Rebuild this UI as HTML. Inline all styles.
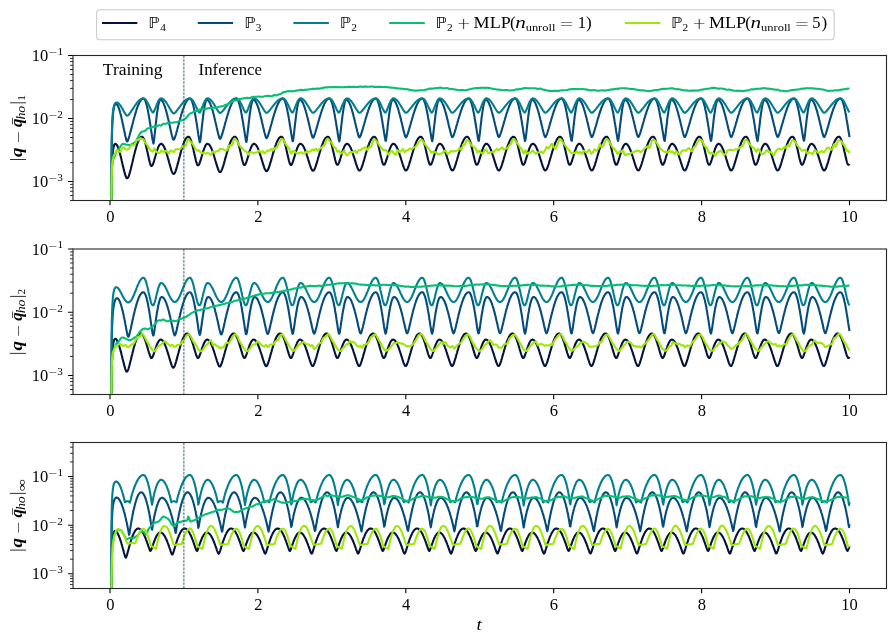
<!DOCTYPE html>
<html lang="en">
<head>
<meta charset="utf-8">
<title>Error norms over time</title>
<style>
html,body{margin:0;padding:0;background:#fff;}
body{width:896px;height:643px;overflow:hidden;}
svg{display:block;}
</style>
</head>
<body>
<svg width="896" height="643" viewBox="0 0 896 643" role="img" aria-label="Error norms over time for five models">
<defs>
<clipPath id="c0"><rect x="73.0" y="55.5" width="813.5" height="145.0"/></clipPath>
<clipPath id="c1"><rect x="73.0" y="249.0" width="813.5" height="145.5"/></clipPath>
<clipPath id="c2"><rect x="73.0" y="442.5" width="813.5" height="146.0"/></clipPath>
</defs>
<rect width="896" height="643" fill="#fff"/>
<g clip-path="url(#c0)" fill="none" stroke-width="2.1" stroke-linejoin="round" stroke-linecap="butt">
<path d="M111.3 240.5L111.5 217.3L111.5 198.6L111.6 188.2L111.7 181.1L111.8 175.8L111.9 171.6L111.9 171.6L112.0 168.2L112.1 165.4L112.2 162.9L112.3 160.8L112.4 159.0L112.4 159.0L112.5 157.4L112.6 156.0L112.7 154.7L112.8 153.6L112.8 152.6L112.8 152.6L112.9 151.7L113.0 150.9L113.1 150.1L113.2 149.4L113.3 148.8L113.3 148.8L113.4 148.2L113.5 147.7L113.6 147.3L113.7 146.8L113.8 146.5L113.8 146.5L113.9 146.1L114.0 145.8L114.0 145.5L114.1 145.3L114.2 145.0L114.2 145.0L114.3 144.8L114.4 144.6L114.7 144.2L115.2 143.8L115.6 143.8L116.1 144.1L116.5 144.6L117.0 145.3L117.5 146.1L117.9 147.2L118.4 148.4L118.9 149.8L119.3 151.3L119.8 152.9L120.2 154.6L120.7 156.4L121.2 158.3L121.6 160.2L122.1 162.2L122.5 164.2L123.0 166.2L123.5 168.1L123.9 170.1L124.4 171.9L124.9 173.6L125.3 175.2L125.8 176.5L126.2 177.5L126.7 178.1L127.2 178.2L127.6 178.0L128.1 177.5L128.6 176.6L129.0 175.3L129.5 173.9L129.9 172.3L130.4 170.5L130.9 168.7L131.3 166.8L131.8 164.9L132.3 162.9L132.7 160.9L133.2 158.9L133.6 157.0L134.1 155.1L134.6 153.2L135.0 151.4L135.5 149.7L136.0 148.0L136.4 146.4L136.9 144.9L137.3 143.6L137.8 142.3L138.3 141.1L138.7 140.1L139.2 139.2L139.6 138.4L140.1 137.8L140.6 137.3L141.0 137.0L141.5 136.8L142.0 136.7L142.4 136.8L142.9 137.2L143.3 137.9L143.8 138.8L144.3 139.9L144.7 141.2L145.2 142.7L145.7 144.4L146.1 146.2L146.6 148.2L147.0 150.2L147.5 152.3L148.0 154.5L148.4 156.6L148.9 158.7L149.4 160.7L149.8 162.5L150.3 164.1L150.7 165.3L151.2 165.9L151.7 166.0L152.1 165.7L152.6 165.0L153.1 163.9L153.5 162.6L154.0 161.1L154.4 159.6L154.9 157.9L155.4 156.3L155.8 154.7L156.3 153.1L156.7 151.5L157.2 150.1L157.7 148.8L158.1 147.6L158.6 146.5L159.1 145.6L159.5 144.9L160.0 144.3L160.4 144.0L160.9 143.8L161.4 143.8L161.8 144.0L162.3 144.3L162.8 144.8L163.2 145.4L163.7 146.1L164.1 147.0L164.6 148.0L165.1 149.1L165.5 150.3L166.0 151.6L166.5 153.0L166.9 154.5L167.4 156.1L167.8 157.7L168.3 159.4L168.8 161.0L169.2 162.7L169.7 164.4L170.2 166.1L170.6 167.7L171.1 169.2L171.5 170.6L172.0 171.9L172.5 172.9L172.9 173.6L173.4 173.9L173.8 173.9L174.3 173.6L174.8 172.9L175.2 172.0L175.7 170.8L176.2 169.4L176.6 167.9L177.1 166.3L177.5 164.6L178.0 162.9L178.5 161.1L178.9 159.4L179.4 157.6L179.9 155.8L180.3 154.1L180.8 152.4L181.2 150.8L181.7 149.2L182.2 147.6L182.6 146.2L183.1 144.8L183.6 143.5L184.0 142.3L184.5 141.2L184.9 140.2L185.4 139.4L185.9 138.6L186.3 138.0L186.8 137.5L187.3 137.1L187.7 136.8L188.2 136.7L188.6 136.7L189.1 137.0L189.6 137.5L190.0 138.2L190.5 139.2L190.9 140.4L191.4 141.7L191.9 143.3L192.3 145.0L192.8 146.9L193.3 148.8L193.7 150.9L194.2 153.0L194.6 155.1L195.1 157.1L195.6 159.1L196.0 161.0L196.5 162.7L197.0 164.1L197.4 165.0L197.9 165.3L198.3 165.3L198.8 164.8L199.3 163.9L199.7 162.8L200.2 161.4L200.7 159.9L201.1 158.4L201.6 156.8L202.0 155.2L202.5 153.6L203.0 152.1L203.4 150.7L203.9 149.3L204.4 148.1L204.8 147.0L205.3 146.0L205.7 145.2L206.2 144.6L206.7 144.1L207.1 143.9L207.6 143.8L208.0 143.9L208.5 144.1L209.0 144.5L209.4 144.9L209.9 145.6L210.4 146.3L210.8 147.2L211.3 148.2L211.7 149.2L212.2 150.4L212.7 151.7L213.1 153.1L213.6 154.5L214.1 156.0L214.5 157.5L215.0 159.1L215.4 160.7L215.9 162.3L216.4 163.8L216.8 165.4L217.3 166.8L217.8 168.2L218.2 169.5L218.7 170.6L219.1 171.4L219.6 171.9L220.1 172.0L220.5 171.9L221.0 171.4L221.4 170.7L221.9 169.6L222.4 168.4L222.8 167.0L223.3 165.6L223.8 164.0L224.2 162.4L224.7 160.8L225.1 159.1L225.6 157.4L226.1 155.7L226.5 154.1L227.0 152.5L227.5 150.9L227.9 149.3L228.4 147.8L228.8 146.4L229.3 145.1L229.8 143.8L230.2 142.6L230.7 141.5L231.2 140.6L231.6 139.7L232.1 138.9L232.5 138.2L233.0 137.7L233.5 137.3L233.9 136.9L234.4 136.8L234.9 136.7L235.3 136.8L235.8 137.2L236.2 137.8L236.7 138.6L237.2 139.7L237.6 140.9L238.1 142.4L238.5 144.0L239.0 145.7L239.5 147.6L239.9 149.6L240.4 151.7L240.9 153.7L241.3 155.8L241.8 157.9L242.2 159.8L242.7 161.6L243.2 163.1L243.6 164.3L244.1 164.9L244.6 165.0L245.0 164.8L245.5 164.2L245.9 163.1L246.4 161.9L246.9 160.5L247.3 159.0L247.8 157.5L248.3 155.9L248.7 154.3L249.2 152.8L249.6 151.3L250.1 149.9L250.6 148.7L251.0 147.5L251.5 146.5L252.0 145.6L252.4 144.9L252.9 144.4L253.3 144.0L253.8 143.8L254.3 143.8L254.7 144.0L255.2 144.2L255.6 144.6L256.1 145.2L256.6 145.8L257.0 146.6L257.5 147.5L258.0 148.5L258.4 149.6L258.9 150.8L259.3 152.1L259.8 153.4L260.3 154.8L260.7 156.3L261.2 157.8L261.7 159.3L262.1 160.9L262.6 162.4L263.0 163.9L263.5 165.4L264.0 166.8L264.4 168.1L264.9 169.2L265.4 170.1L265.8 170.8L266.3 171.1L266.7 171.1L267.2 170.8L267.7 170.3L268.1 169.4L268.6 168.3L269.1 167.0L269.5 165.7L270.0 164.2L270.4 162.6L270.9 161.1L271.4 159.4L271.8 157.8L272.3 156.2L272.7 154.5L273.2 152.9L273.7 151.4L274.1 149.8L274.6 148.3L275.1 146.9L275.5 145.6L276.0 144.3L276.4 143.1L276.9 142.0L277.4 141.0L277.8 140.0L278.3 139.2L278.8 138.5L279.2 137.9L279.7 137.5L280.1 137.1L280.6 136.8L281.1 136.7L281.5 136.7L282.0 137.0L282.5 137.4L282.9 138.1L283.4 139.1L283.8 140.2L284.3 141.5L284.8 143.1L285.2 144.7L285.7 146.6L286.2 148.5L286.6 150.5L287.1 152.5L287.5 154.6L288.0 156.7L288.5 158.7L288.9 160.5L289.4 162.2L289.8 163.6L290.3 164.5L290.8 164.9L291.2 164.9L291.7 164.4L292.2 163.6L292.6 162.5L293.1 161.2L293.5 159.7L294.0 158.2L294.5 156.7L294.9 155.1L295.4 153.6L295.9 152.1L296.3 150.6L296.8 149.3L297.2 148.1L297.7 147.0L298.2 146.0L298.6 145.2L299.1 144.6L299.6 144.2L300.0 143.9L300.5 143.8L300.9 143.9L301.4 144.1L301.9 144.4L302.3 144.9L302.8 145.4L303.3 146.1L303.7 147.0L304.2 147.9L304.6 148.9L305.1 150.0L305.6 151.3L306.0 152.5L306.5 153.9L306.9 155.3L307.4 156.8L307.9 158.3L308.3 159.8L308.8 161.3L309.3 162.8L309.7 164.3L310.2 165.7L310.6 167.0L311.1 168.2L311.6 169.3L312.0 170.1L312.5 170.6L313.0 170.7L313.4 170.6L313.9 170.2L314.3 169.5L314.8 168.5L315.3 167.4L315.7 166.1L316.2 164.7L316.7 163.2L317.1 161.6L317.6 160.0L318.0 158.4L318.5 156.8L319.0 155.2L319.4 153.6L319.9 152.0L320.4 150.5L320.8 149.0L321.3 147.6L321.7 146.2L322.2 144.9L322.7 143.6L323.1 142.5L323.6 141.4L324.0 140.5L324.5 139.6L325.0 138.9L325.4 138.2L325.9 137.7L326.4 137.3L326.8 137.0L327.3 136.8L327.7 136.7L328.2 136.8L328.7 137.1L329.1 137.7L329.6 138.5L330.1 139.6L330.5 140.8L331.0 142.2L331.4 143.8L331.9 145.5L332.4 147.4L332.8 149.4L333.3 151.4L333.8 153.5L334.2 155.5L334.7 157.5L335.1 159.5L335.6 161.3L336.1 162.8L336.5 164.0L337.0 164.7L337.5 164.8L337.9 164.7L338.4 164.0L338.8 163.1L339.3 161.8L339.8 160.5L340.2 159.0L340.7 157.5L341.1 155.9L341.6 154.4L342.1 152.8L342.5 151.4L343.0 150.0L343.5 148.7L343.9 147.6L344.4 146.5L344.8 145.7L345.3 144.9L345.8 144.4L346.2 144.0L346.7 143.8L347.2 143.8L347.6 143.9L348.1 144.2L348.5 144.6L349.0 145.1L349.5 145.7L349.9 146.5L350.4 147.3L350.9 148.3L351.3 149.4L351.8 150.5L352.2 151.8L352.7 153.1L353.2 154.5L353.6 155.9L354.1 157.4L354.6 158.9L355.0 160.4L355.5 161.9L355.9 163.4L356.4 164.8L356.9 166.2L357.3 167.5L357.8 168.6L358.2 169.5L358.7 170.2L359.2 170.5L359.6 170.5L360.1 170.3L360.6 169.8L361.0 168.9L361.5 167.9L361.9 166.6L362.4 165.3L362.9 163.8L363.3 162.3L363.8 160.8L364.3 159.2L364.7 157.6L365.2 156.0L365.6 154.4L366.1 152.8L366.6 151.2L367.0 149.7L367.5 148.3L368.0 146.9L368.4 145.5L368.9 144.3L369.3 143.1L369.8 142.0L370.3 141.0L370.7 140.1L371.2 139.3L371.7 138.6L372.1 138.0L372.6 137.5L373.0 137.1L373.5 136.9L374.0 136.7L374.4 136.7L374.9 136.9L375.3 137.4L375.8 138.1L376.3 139.0L376.7 140.1L377.2 141.4L377.7 142.9L378.1 144.6L378.6 146.4L379.0 148.3L379.5 150.3L380.0 152.3L380.4 154.4L380.9 156.4L381.4 158.4L381.8 160.3L382.3 162.0L382.7 163.4L383.2 164.4L383.7 164.8L384.1 164.8L384.6 164.4L385.1 163.6L385.5 162.5L386.0 161.2L386.4 159.8L386.9 158.3L387.4 156.7L387.8 155.2L388.3 153.6L388.8 152.1L389.2 150.7L389.7 149.4L390.1 148.2L390.6 147.1L391.1 146.1L391.5 145.3L392.0 144.7L392.4 144.2L392.9 143.9L393.4 143.8L393.8 143.9L394.3 144.0L394.8 144.4L395.2 144.8L395.7 145.4L396.1 146.1L396.6 146.9L397.1 147.8L397.5 148.8L398.0 149.9L398.5 151.1L398.9 152.4L399.4 153.7L399.8 155.1L400.3 156.5L400.8 158.0L401.2 159.5L401.7 161.0L402.2 162.5L402.6 164.0L403.1 165.4L403.5 166.7L404.0 167.9L404.5 169.0L404.9 169.8L405.4 170.3L405.9 170.5L406.3 170.4L406.8 170.0L407.2 169.3L407.7 168.4L408.2 167.3L408.6 166.0L409.1 164.6L409.5 163.1L410.0 161.6L410.5 160.0L410.9 158.4L411.4 156.8L411.9 155.2L412.3 153.6L412.8 152.0L413.2 150.5L413.7 149.0L414.2 147.6L414.6 146.2L415.1 144.9L415.6 143.7L416.0 142.6L416.5 141.5L416.9 140.5L417.4 139.7L417.9 138.9L418.3 138.3L418.8 137.7L419.3 137.3L419.7 137.0L420.2 136.8L420.6 136.7L421.1 136.8L421.6 137.1L422.0 137.7L422.5 138.4L423.0 139.5L423.4 140.7L423.9 142.1L424.3 143.7L424.8 145.4L425.3 147.2L425.7 149.2L426.2 151.2L426.6 153.3L427.1 155.3L427.6 157.4L428.0 159.3L428.5 161.1L429.0 162.6L429.4 163.9L429.9 164.6L430.3 164.8L430.8 164.7L431.3 164.1L431.7 163.1L432.2 161.9L432.7 160.6L433.1 159.1L433.6 157.6L434.0 156.0L434.5 154.5L435.0 152.9L435.4 151.5L435.9 150.1L436.4 148.8L436.8 147.6L437.3 146.6L437.7 145.7L438.2 145.0L438.7 144.4L439.1 144.0L439.6 143.8L440.1 143.8L440.5 143.9L441.0 144.2L441.4 144.5L441.9 145.0L442.4 145.7L442.8 146.4L443.3 147.3L443.7 148.2L444.2 149.3L444.7 150.4L445.1 151.6L445.6 153.0L446.1 154.3L446.5 155.7L447.0 157.2L447.4 158.7L447.9 160.2L448.4 161.7L448.8 163.2L449.3 164.6L449.8 166.0L450.2 167.3L450.7 168.4L451.1 169.4L451.6 170.0L452.1 170.4L452.5 170.4L453.0 170.2L453.5 169.7L453.9 168.9L454.4 167.9L454.8 166.6L455.3 165.3L455.8 163.9L456.2 162.4L456.7 160.8L457.2 159.2L457.6 157.6L458.1 156.0L458.5 154.4L459.0 152.9L459.5 151.3L459.9 149.8L460.4 148.3L460.8 146.9L461.3 145.6L461.8 144.3L462.2 143.2L462.7 142.0L463.2 141.0L463.6 140.1L464.1 139.3L464.5 138.6L465.0 138.0L465.5 137.5L465.9 137.1L466.4 136.9L466.9 136.7L467.3 136.7L467.8 136.9L468.2 137.3L468.7 138.0L469.2 138.9L469.6 140.0L470.1 141.3L470.6 142.8L471.0 144.4L471.5 146.2L471.9 148.1L472.4 150.1L472.9 152.2L473.3 154.2L473.8 156.3L474.3 158.3L474.7 160.1L475.2 161.8L475.6 163.3L476.1 164.3L476.6 164.8L477.0 164.8L477.5 164.4L477.9 163.7L478.4 162.6L478.9 161.3L479.3 159.9L479.8 158.4L480.3 156.9L480.7 155.3L481.2 153.8L481.6 152.3L482.1 150.8L482.6 149.5L483.0 148.3L483.5 147.1L484.0 146.2L484.4 145.4L484.9 144.7L485.3 144.2L485.8 143.9L486.3 143.8L486.7 143.8L487.2 144.0L487.7 144.3L488.1 144.8L488.6 145.3L489.0 146.0L489.5 146.8L490.0 147.7L490.4 148.7L490.9 149.8L491.4 151.0L491.8 152.2L492.3 153.6L492.7 155.0L493.2 156.4L493.7 157.9L494.1 159.4L494.6 160.9L495.0 162.4L495.5 163.8L496.0 165.2L496.4 166.6L496.9 167.8L497.4 168.9L497.8 169.7L498.3 170.2L498.7 170.4L499.2 170.4L499.7 170.0L500.1 169.4L500.6 168.4L501.1 167.3L501.5 166.0L502.0 164.6L502.4 163.2L502.9 161.7L503.4 160.1L503.8 158.5L504.3 156.9L504.8 155.3L505.2 153.7L505.7 152.1L506.1 150.6L506.6 149.1L507.1 147.7L507.5 146.3L508.0 145.0L508.5 143.8L508.9 142.6L509.4 141.6L509.8 140.6L510.3 139.7L510.8 139.0L511.2 138.3L511.7 137.8L512.1 137.3L512.6 137.0L513.1 136.8L513.5 136.7L514.0 136.8L514.5 137.1L514.9 137.6L515.4 138.4L515.8 139.4L516.3 140.6L516.8 142.0L517.2 143.5L517.7 145.2L518.2 147.1L518.6 149.0L519.1 151.0L519.5 153.1L520.0 155.2L520.5 157.2L520.9 159.1L521.4 160.9L521.9 162.5L522.3 163.8L522.8 164.6L523.2 164.8L523.7 164.7L524.2 164.1L524.6 163.2L525.1 162.0L525.5 160.7L526.0 159.2L526.5 157.7L526.9 156.1L527.4 154.6L527.9 153.1L528.3 151.6L528.8 150.2L529.2 148.9L529.7 147.7L530.2 146.7L530.6 145.8L531.1 145.0L531.6 144.5L532.0 144.1L532.5 143.8L532.9 143.8L533.4 143.9L533.9 144.1L534.3 144.5L534.8 145.0L535.3 145.6L535.7 146.3L536.2 147.2L536.6 148.1L537.1 149.2L537.6 150.3L538.0 151.5L538.5 152.8L539.0 154.2L539.4 155.6L539.9 157.1L540.3 158.6L540.8 160.1L541.3 161.6L541.7 163.0L542.2 164.5L542.6 165.9L543.1 167.1L543.6 168.3L544.0 169.3L544.5 170.0L545.0 170.4L545.4 170.4L545.9 170.2L546.3 169.7L546.8 169.0L547.3 167.9L547.7 166.7L548.2 165.4L548.7 164.0L549.1 162.5L549.6 160.9L550.0 159.4L550.5 157.8L551.0 156.2L551.4 154.6L551.9 153.0L552.4 151.4L552.8 149.9L553.3 148.5L553.7 147.0L554.2 145.7L554.7 144.4L555.1 143.2L555.6 142.1L556.1 141.1L556.5 140.2L557.0 139.4L557.4 138.7L557.9 138.0L558.4 137.5L558.8 137.2L559.3 136.9L559.7 136.7L560.2 136.7L560.7 136.9L561.1 137.3L561.6 137.9L562.1 138.8L562.5 139.9L563.0 141.2L563.4 142.6L563.9 144.3L564.4 146.1L564.8 148.0L565.3 149.9L565.8 152.0L566.2 154.0L566.7 156.1L567.1 158.1L567.6 160.0L568.1 161.7L568.5 163.2L569.0 164.2L569.5 164.8L569.9 164.8L570.4 164.5L570.8 163.7L571.3 162.7L571.8 161.4L572.2 160.0L572.7 158.5L573.2 157.0L573.6 155.4L574.1 153.9L574.5 152.4L575.0 150.9L575.5 149.6L575.9 148.3L576.4 147.2L576.8 146.2L577.3 145.4L577.8 144.8L578.2 144.3L578.7 143.9L579.2 143.8L579.6 143.8L580.1 144.0L580.5 144.3L581.0 144.7L581.5 145.3L581.9 145.9L582.4 146.7L582.9 147.6L583.3 148.6L583.8 149.7L584.2 150.9L584.7 152.1L585.2 153.5L585.6 154.8L586.1 156.3L586.6 157.8L587.0 159.2L587.5 160.7L587.9 162.2L588.4 163.7L588.9 165.1L589.3 166.5L589.8 167.7L590.3 168.8L590.7 169.6L591.2 170.2L591.6 170.4L592.1 170.4L592.6 170.1L593.0 169.4L593.5 168.5L593.9 167.4L594.4 166.1L594.9 164.8L595.3 163.3L595.8 161.8L596.3 160.2L596.7 158.6L597.2 157.0L597.6 155.4L598.1 153.8L598.6 152.3L599.0 150.7L599.5 149.2L600.0 147.8L600.4 146.4L600.9 145.1L601.3 143.9L601.8 142.7L602.3 141.7L602.7 140.7L603.2 139.8L603.7 139.0L604.1 138.4L604.6 137.8L605.0 137.4L605.5 137.0L606.0 136.8L606.4 136.7L606.9 136.8L607.4 137.0L607.8 137.6L608.3 138.3L608.7 139.3L609.2 140.5L609.7 141.8L610.1 143.4L610.6 145.1L611.0 146.9L611.5 148.9L612.0 150.9L612.4 152.9L612.9 155.0L613.4 157.0L613.8 159.0L614.3 160.8L614.7 162.4L615.2 163.7L615.7 164.5L616.1 164.8L616.6 164.7L617.1 164.2L617.5 163.3L618.0 162.1L618.4 160.8L618.9 159.3L619.4 157.8L619.8 156.3L620.3 154.7L620.8 153.2L621.2 151.7L621.7 150.3L622.1 149.0L622.6 147.8L623.1 146.8L623.5 145.8L624.0 145.1L624.5 144.5L624.9 144.1L625.4 143.9L625.8 143.8L626.3 143.9L626.8 144.1L627.2 144.5L627.7 145.0L628.1 145.6L628.6 146.3L629.1 147.1L629.5 148.0L630.0 149.1L630.5 150.2L630.9 151.4L631.4 152.7L631.8 154.1L632.3 155.5L632.8 157.0L633.2 158.4L633.7 159.9L634.2 161.4L634.6 162.9L635.1 164.4L635.5 165.7L636.0 167.0L636.5 168.2L636.9 169.2L637.4 169.9L637.9 170.3L638.3 170.4L638.8 170.3L639.2 169.8L639.7 169.0L640.2 168.0L640.6 166.8L641.1 165.5L641.6 164.1L642.0 162.6L642.5 161.1L642.9 159.5L643.4 157.9L643.9 156.3L644.3 154.7L644.8 153.1L645.2 151.6L645.7 150.0L646.2 148.6L646.6 147.2L647.1 145.8L647.6 144.5L648.0 143.3L648.5 142.2L648.9 141.2L649.4 140.3L649.9 139.4L650.3 138.7L650.8 138.1L651.3 137.6L651.7 137.2L652.2 136.9L652.6 136.7L653.1 136.7L653.6 136.9L654.0 137.2L654.5 137.9L655.0 138.7L655.4 139.8L655.9 141.1L656.3 142.5L656.8 144.1L657.3 145.9L657.7 147.8L658.2 149.8L658.7 151.8L659.1 153.9L659.6 155.9L660.0 157.9L660.5 159.8L661.0 161.6L661.4 163.0L661.9 164.2L662.3 164.7L662.8 164.8L663.3 164.5L663.7 163.8L664.2 162.8L664.7 161.5L665.1 160.1L665.6 158.6L666.0 157.1L666.5 155.5L667.0 154.0L667.4 152.5L667.9 151.1L668.4 149.7L668.8 148.4L669.3 147.3L669.7 146.3L670.2 145.5L670.7 144.8L671.1 144.3L671.6 144.0L672.1 143.8L672.5 143.8L673.0 144.0L673.4 144.3L673.9 144.7L674.4 145.2L674.8 145.9L675.3 146.6L675.8 147.5L676.2 148.5L676.7 149.6L677.1 150.8L677.6 152.0L678.1 153.3L678.5 154.7L679.0 156.2L679.4 157.6L679.9 159.1L680.4 160.6L680.8 162.1L681.3 163.6L681.8 165.0L682.2 166.3L682.7 167.6L683.1 168.7L683.6 169.6L684.1 170.2L684.5 170.4L685.0 170.4L685.5 170.1L685.9 169.5L686.4 168.6L686.8 167.5L687.3 166.2L687.8 164.9L688.2 163.4L688.7 161.9L689.2 160.3L689.6 158.7L690.1 157.1L690.5 155.5L691.0 154.0L691.5 152.4L691.9 150.9L692.4 149.4L692.9 147.9L693.3 146.5L693.8 145.2L694.2 144.0L694.7 142.8L695.2 141.7L695.6 140.8L696.1 139.9L696.5 139.1L697.0 138.4L697.5 137.8L697.9 137.4L698.4 137.0L698.9 136.8L699.3 136.7L699.8 136.7L700.2 137.0L700.7 137.5L701.2 138.2L701.6 139.2L702.1 140.4L702.6 141.7L703.0 143.3L703.5 144.9L703.9 146.8L704.4 148.7L704.9 150.7L705.3 152.8L705.8 154.8L706.3 156.9L706.7 158.8L707.2 160.7L707.6 162.3L708.1 163.6L708.6 164.5L709.0 164.8L709.5 164.7L710.0 164.2L710.4 163.4L710.9 162.2L711.3 160.9L711.8 159.5L712.3 157.9L712.7 156.4L713.2 154.8L713.6 153.3L714.1 151.8L714.6 150.4L715.0 149.1L715.5 147.9L716.0 146.8L716.4 145.9L716.9 145.1L717.3 144.5L717.8 144.1L718.3 143.9L718.7 143.8L719.2 143.9L719.7 144.1L720.1 144.4L720.6 144.9L721.0 145.5L721.5 146.2L722.0 147.0L722.4 148.0L722.9 149.0L723.4 150.1L723.8 151.3L724.3 152.6L724.7 154.0L725.2 155.4L725.7 156.8L726.1 158.3L726.6 159.8L727.1 161.3L727.5 162.8L728.0 164.2L728.4 165.6L728.9 166.9L729.4 168.1L729.8 169.1L730.3 169.9L730.7 170.3L731.2 170.4L731.7 170.3L732.1 169.8L732.6 169.1L733.1 168.1L733.5 166.9L734.0 165.6L734.4 164.2L734.9 162.7L735.4 161.2L735.8 159.6L736.3 158.0L736.8 156.4L737.2 154.8L737.7 153.2L738.1 151.7L738.6 150.2L739.1 148.7L739.5 147.3L740.0 145.9L740.5 144.6L740.9 143.4L741.4 142.3L741.8 141.3L742.3 140.3L742.8 139.5L743.2 138.8L743.7 138.1L744.2 137.6L744.6 137.2L745.1 136.9L745.5 136.8L746.0 136.7L746.5 136.8L746.9 137.2L747.4 137.8L747.8 138.6L748.3 139.7L748.8 141.0L749.2 142.4L749.7 144.0L750.2 145.8L750.6 147.6L751.1 149.6L751.5 151.6L752.0 153.7L752.5 155.8L752.9 157.8L753.4 159.7L753.9 161.4L754.3 162.9L754.8 164.1L755.2 164.7L755.7 164.8L756.2 164.6L756.6 163.9L757.1 162.9L757.6 161.6L758.0 160.2L758.5 158.8L758.9 157.2L759.4 155.7L759.9 154.1L760.3 152.6L760.8 151.2L761.3 149.8L761.7 148.5L762.2 147.4L762.6 146.4L763.1 145.5L763.6 144.9L764.0 144.3L764.5 144.0L764.9 143.8L765.4 143.8L765.9 144.0L766.3 144.2L766.8 144.6L767.3 145.2L767.7 145.8L768.2 146.6L768.6 147.4L769.1 148.4L769.6 149.5L770.0 150.7L770.5 151.9L771.0 153.2L771.4 154.6L771.9 156.0L772.3 157.5L772.8 159.0L773.3 160.5L773.7 162.0L774.2 163.5L774.7 164.9L775.1 166.2L775.6 167.5L776.0 168.6L776.5 169.5L777.0 170.1L777.4 170.4L777.9 170.4L778.4 170.1L778.8 169.5L779.3 168.7L779.7 167.6L780.2 166.3L780.7 165.0L781.1 163.5L781.6 162.0L782.0 160.5L782.5 158.9L783.0 157.3L783.4 155.7L783.9 154.1L784.4 152.5L784.8 151.0L785.3 149.5L785.7 148.0L786.2 146.6L786.7 145.3L787.1 144.1L787.6 142.9L788.1 141.8L788.5 140.8L789.0 139.9L789.4 139.1L789.9 138.5L790.4 137.9L790.8 137.4L791.3 137.1L791.8 136.8L792.2 136.7L792.7 136.7L793.1 137.0L793.6 137.5L794.1 138.2L794.5 139.1L795.0 140.3L795.5 141.6L795.9 143.1L796.4 144.8L796.8 146.6L797.3 148.5L797.8 150.5L798.2 152.6L798.7 154.7L799.1 156.7L799.6 158.7L800.1 160.5L800.5 162.2L801.0 163.5L801.5 164.4L801.9 164.8L802.4 164.7L802.8 164.3L803.3 163.4L803.8 162.3L804.2 161.0L804.7 159.6L805.2 158.1L805.6 156.5L806.1 155.0L806.5 153.4L807.0 151.9L807.5 150.5L807.9 149.2L808.4 148.0L808.9 146.9L809.3 146.0L809.8 145.2L810.2 144.6L810.7 144.1L811.2 143.9L811.6 143.8L812.1 143.9L812.6 144.1L813.0 144.4L813.5 144.9L813.9 145.4L814.4 146.1L814.9 147.0L815.3 147.9L815.8 148.9L816.2 150.0L816.7 151.2L817.2 152.5L817.6 153.9L818.1 155.3L818.6 156.7L819.0 158.2L819.5 159.7L819.9 161.2L820.4 162.7L820.9 164.1L821.3 165.5L821.8 166.8L822.3 168.0L822.7 169.0L823.2 169.8L823.6 170.3L824.1 170.4L824.6 170.3L825.0 169.9L825.5 169.2L826.0 168.2L826.4 167.0L826.9 165.7L827.3 164.3L827.8 162.8L828.3 161.3L828.7 159.7L829.2 158.1L829.6 156.5L830.1 154.9L830.6 153.4L831.0 151.8L831.5 150.3L832.0 148.8L832.4 147.4L832.9 146.0L833.3 144.7L833.8 143.5L834.3 142.4L834.7 141.4L835.2 140.4L835.7 139.6L836.1 138.8L836.6 138.2L837.0 137.7L837.5 137.2L838.0 136.9L838.4 136.8L838.9 136.7L839.4 136.8L839.8 137.2L840.3 137.8L840.7 138.6L841.2 139.6L841.7 140.8L842.1 142.3L842.6 143.9L843.1 145.6L843.5 147.5L844.0 149.5L844.4 151.5L844.9 153.5L845.4 155.6L845.8 157.6L846.3 159.5L846.7 161.3L847.2 162.8L847.7 164.0L848.1 164.7L848.6 164.8L849.1 164.6L849.5 163.9" stroke="#03133a"/>
<path d="M111.3 240.5L111.5 184.6L111.5 165.7L111.6 155.1L111.7 147.7L111.8 142.2L111.9 137.8L111.9 137.8L112.0 134.1L112.1 131.1L112.2 128.4L112.3 126.1L112.4 124.1L112.4 124.1L112.5 122.2L112.6 120.6L112.7 119.1L112.8 117.8L112.8 116.6L112.8 116.6L112.9 115.5L113.0 114.5L113.1 113.5L113.2 112.7L113.3 111.9L113.3 111.9L113.4 111.1L113.5 110.4L113.6 109.8L113.7 109.2L113.8 108.7L113.8 108.7L113.9 108.2L114.0 107.7L114.0 107.3L114.1 106.9L114.2 106.5L114.2 106.5L114.3 106.2L114.4 105.9L114.7 105.1L115.2 104.3L115.6 103.9L116.1 103.9L116.5 104.1L117.0 104.5L117.5 105.2L117.9 106.0L118.4 107.1L118.9 108.3L119.3 109.6L119.8 111.2L120.2 112.8L120.7 114.6L121.2 116.5L121.6 118.4L122.1 120.5L122.5 122.7L123.0 124.8L123.5 127.1L123.9 129.3L124.4 131.5L124.9 133.7L125.3 135.8L125.8 137.8L126.2 139.6L126.7 141.0L127.2 141.5L127.6 141.1L128.1 140.0L128.6 138.7L129.0 137.2L129.5 135.6L129.9 133.9L130.4 132.2L130.9 130.4L131.3 128.6L131.8 126.8L132.3 125.0L132.7 123.2L133.2 121.5L133.6 119.7L134.1 118.0L134.6 116.3L135.0 114.7L135.5 113.1L136.0 111.6L136.4 110.1L136.9 108.7L137.3 107.4L137.8 106.2L138.3 105.0L138.7 104.0L139.2 103.0L139.6 102.1L140.1 101.3L140.6 100.6L141.0 100.0L141.5 99.5L142.0 99.1L142.4 98.8L142.9 98.7L143.3 98.6L143.8 98.7L144.3 99.1L144.7 99.7L145.2 100.6L145.7 101.7L146.1 103.1L146.6 104.8L147.0 106.6L147.5 108.7L148.0 110.9L148.4 113.4L148.9 116.0L149.4 118.8L149.8 121.6L150.3 124.6L150.7 127.6L151.2 130.7L151.7 133.8L152.1 136.9L152.6 139.8L153.1 142.4L153.5 143.6L154.0 140.7L154.4 136.6L154.9 132.3L155.4 127.9L155.8 123.6L156.3 119.6L156.7 115.7L157.2 112.2L157.7 109.0L158.1 106.3L158.6 103.9L159.1 102.1L159.5 100.8L160.0 100.0L160.4 99.8L160.9 99.9L161.4 100.1L161.8 100.5L162.3 101.1L162.8 101.7L163.2 102.6L163.7 103.6L164.1 104.7L164.6 105.9L165.1 107.3L165.5 108.7L166.0 110.3L166.5 112.0L166.9 113.8L167.4 115.6L167.8 117.5L168.3 119.5L168.8 121.5L169.2 123.6L169.7 125.7L170.2 127.8L170.6 129.8L171.1 131.9L171.5 133.8L172.0 135.7L172.5 137.4L172.9 138.9L173.4 139.8L173.8 139.8L174.3 139.0L174.8 137.9L175.2 136.5L175.7 135.1L176.2 133.5L176.6 131.8L177.1 130.1L177.5 128.4L178.0 126.7L178.5 125.0L178.9 123.2L179.4 121.5L179.9 119.8L180.3 118.2L180.8 116.5L181.2 114.9L181.7 113.4L182.2 111.9L182.6 110.4L183.1 109.1L183.6 107.8L184.0 106.5L184.5 105.4L184.9 104.3L185.4 103.3L185.9 102.4L186.3 101.6L186.8 100.9L187.3 100.2L187.7 99.7L188.2 99.3L188.6 99.0L189.1 98.7L189.6 98.6L190.0 98.6L190.5 98.8L190.9 99.3L191.4 100.0L191.9 101.0L192.3 102.3L192.8 103.7L193.3 105.4L193.7 107.3L194.2 109.5L194.6 111.8L195.1 114.2L195.6 116.8L196.0 119.6L196.5 122.4L197.0 125.4L197.4 128.4L197.9 131.4L198.3 134.4L198.8 137.4L199.3 140.1L199.7 142.3L200.2 141.6L200.7 138.0L201.1 133.8L201.6 129.6L202.0 125.3L202.5 121.3L203.0 117.4L203.4 113.7L203.9 110.4L204.4 107.5L204.8 105.0L205.3 103.0L205.7 101.4L206.2 100.4L206.7 99.9L207.1 99.8L207.6 100.0L208.0 100.3L208.5 100.7L209.0 101.3L209.4 102.1L209.9 102.9L210.4 103.9L210.8 105.1L211.3 106.3L211.7 107.7L212.2 109.2L212.7 110.8L213.1 112.5L213.6 114.2L214.1 116.1L214.5 118.0L215.0 119.9L215.4 121.9L215.9 123.9L216.4 125.9L216.8 128.0L217.3 130.0L217.8 131.9L218.2 133.8L218.7 135.6L219.1 137.2L219.6 138.4L220.1 138.8L220.5 138.5L221.0 137.6L221.4 136.3L221.9 134.9L222.4 133.4L222.8 131.9L223.3 130.2L223.8 128.6L224.2 126.9L224.7 125.2L225.1 123.5L225.6 121.8L226.1 120.2L226.5 118.5L227.0 116.9L227.5 115.3L227.9 113.8L228.4 112.3L228.8 110.9L229.3 109.5L229.8 108.2L230.2 107.0L230.7 105.8L231.2 104.7L231.6 103.7L232.1 102.8L232.5 101.9L233.0 101.2L233.5 100.5L233.9 100.0L234.4 99.5L234.9 99.1L235.3 98.8L235.8 98.7L236.2 98.6L236.7 98.7L237.2 99.0L237.6 99.6L238.1 100.4L238.5 101.5L239.0 102.9L239.5 104.4L239.9 106.2L240.4 108.2L240.9 110.3L241.3 112.7L241.8 115.2L242.2 117.8L242.7 120.6L243.2 123.4L243.6 126.4L244.1 129.4L244.6 132.3L245.0 135.3L245.5 138.1L245.9 140.7L246.4 142.0L246.9 139.5L247.3 135.6L247.8 131.4L248.3 127.2L248.7 123.1L249.2 119.2L249.6 115.4L250.1 112.0L250.6 108.9L251.0 106.2L251.5 104.0L252.0 102.2L252.4 100.9L252.9 100.1L253.3 99.8L253.8 99.9L254.3 100.1L254.7 100.5L255.2 101.0L255.6 101.6L256.1 102.4L256.6 103.3L257.0 104.4L257.5 105.5L258.0 106.8L258.4 108.2L258.9 109.7L259.3 111.3L259.8 113.0L260.3 114.8L260.7 116.6L261.2 118.5L261.7 120.5L262.1 122.4L262.6 124.4L263.0 126.4L263.5 128.4L264.0 130.3L264.4 132.2L264.9 134.0L265.4 135.7L265.8 137.1L266.3 138.1L266.7 138.1L267.2 137.5L267.7 136.4L268.1 135.1L268.6 133.7L269.1 132.2L269.5 130.6L270.0 129.0L270.4 127.3L270.9 125.7L271.4 124.0L271.8 122.4L272.3 120.7L272.7 119.1L273.2 117.5L273.7 115.9L274.1 114.4L274.6 112.9L275.1 111.4L275.5 110.1L276.0 108.7L276.4 107.5L276.9 106.3L277.4 105.2L277.8 104.1L278.3 103.2L278.8 102.3L279.2 101.5L279.7 100.8L280.1 100.2L280.6 99.7L281.1 99.3L281.5 99.0L282.0 98.8L282.5 98.6L282.9 98.6L283.4 98.8L283.8 99.2L284.3 99.9L284.8 100.9L285.2 102.1L285.7 103.5L286.2 105.1L286.6 107.0L287.1 109.0L287.5 111.3L288.0 113.7L288.5 116.2L288.9 118.9L289.4 121.7L289.8 124.6L290.3 127.5L290.8 130.5L291.2 133.4L291.7 136.3L292.2 139.0L292.6 141.2L293.1 140.9L293.5 137.4L294.0 133.4L294.5 129.2L294.9 125.1L295.4 121.1L295.9 117.3L296.3 113.7L296.8 110.4L297.2 107.6L297.7 105.1L298.2 103.1L298.6 101.5L299.1 100.4L299.6 99.9L300.0 99.8L300.5 100.0L300.9 100.2L301.4 100.7L301.9 101.2L302.3 101.9L302.8 102.8L303.3 103.7L303.7 104.8L304.2 106.0L304.6 107.4L305.1 108.8L305.6 110.3L306.0 112.0L306.5 113.7L306.9 115.5L307.4 117.3L307.9 119.2L308.3 121.1L308.8 123.1L309.3 125.1L309.7 127.0L310.2 129.0L310.6 130.9L311.1 132.7L311.6 134.5L312.0 136.0L312.5 137.2L313.0 137.7L313.4 137.5L313.9 136.6L314.3 135.4L314.8 134.1L315.3 132.6L315.7 131.1L316.2 129.5L316.7 127.9L317.1 126.3L317.6 124.6L318.0 123.0L318.5 121.4L319.0 119.7L319.4 118.1L319.9 116.6L320.4 115.0L320.8 113.5L321.3 112.1L321.7 110.7L322.2 109.3L322.7 108.1L323.1 106.8L323.6 105.7L324.0 104.6L324.5 103.6L325.0 102.7L325.4 101.9L325.9 101.2L326.4 100.5L326.8 100.0L327.3 99.5L327.7 99.1L328.2 98.9L328.7 98.7L329.1 98.6L329.6 98.7L330.1 99.0L330.5 99.5L331.0 100.3L331.4 101.4L331.9 102.7L332.4 104.2L332.8 105.9L333.3 107.9L333.8 110.0L334.2 112.3L334.7 114.8L335.1 117.4L335.6 120.1L336.1 122.9L336.5 125.8L337.0 128.7L337.5 131.6L337.9 134.6L338.4 137.4L338.8 139.9L339.3 141.4L339.8 139.2L340.2 135.4L340.7 131.3L341.1 127.2L341.6 123.1L342.1 119.2L342.5 115.5L343.0 112.1L343.5 109.0L343.9 106.3L344.4 104.1L344.8 102.3L345.3 100.9L345.8 100.1L346.2 99.8L346.7 99.9L347.2 100.1L347.6 100.4L348.1 100.9L348.5 101.5L349.0 102.3L349.5 103.2L349.9 104.2L350.4 105.3L350.9 106.6L351.3 108.0L351.8 109.4L352.2 111.0L352.7 112.7L353.2 114.4L353.6 116.2L354.1 118.0L354.6 119.9L355.0 121.9L355.5 123.8L355.9 125.8L356.4 127.7L356.9 129.6L357.3 131.5L357.8 133.3L358.2 134.9L358.7 136.4L359.2 137.3L359.6 137.4L360.1 136.8L360.6 135.8L361.0 134.6L361.5 133.2L361.9 131.7L362.4 130.2L362.9 128.6L363.3 127.0L363.8 125.3L364.3 123.7L364.7 122.1L365.2 120.5L365.6 118.9L366.1 117.3L366.6 115.7L367.0 114.2L367.5 112.8L368.0 111.3L368.4 110.0L368.9 108.7L369.3 107.4L369.8 106.3L370.3 105.2L370.7 104.1L371.2 103.2L371.7 102.3L372.1 101.5L372.6 100.8L373.0 100.2L373.5 99.7L374.0 99.3L374.4 99.0L374.9 98.8L375.3 98.6L375.8 98.6L376.3 98.8L376.7 99.2L377.2 99.9L377.7 100.8L378.1 101.9L378.6 103.3L379.0 104.9L379.5 106.8L380.0 108.8L380.4 111.0L380.9 113.4L381.4 115.9L381.8 118.5L382.3 121.3L382.7 124.1L383.2 127.0L383.7 130.0L384.1 132.9L384.6 135.8L385.1 138.5L385.5 140.7L386.0 140.8L386.4 137.4L386.9 133.4L387.4 129.3L387.8 125.2L388.3 121.2L388.8 117.4L389.2 113.9L389.7 110.6L390.1 107.7L390.6 105.2L391.1 103.2L391.5 101.6L392.0 100.5L392.4 99.9L392.9 99.8L393.4 99.9L393.8 100.2L394.3 100.6L394.8 101.2L395.2 101.8L395.7 102.7L396.1 103.6L396.6 104.7L397.1 105.9L397.5 107.2L398.0 108.6L398.5 110.1L398.9 111.7L399.4 113.4L399.8 115.1L400.3 116.9L400.8 118.8L401.2 120.7L401.7 122.7L402.2 124.6L402.6 126.6L403.1 128.5L403.5 130.4L404.0 132.2L404.5 133.9L404.9 135.5L405.4 136.7L405.9 137.3L406.3 137.1L406.8 136.2L407.2 135.1L407.7 133.8L408.2 132.4L408.6 130.9L409.1 129.3L409.5 127.7L410.0 126.1L410.5 124.5L410.9 122.8L411.4 121.2L411.9 119.6L412.3 118.0L412.8 116.5L413.2 115.0L413.7 113.5L414.2 112.0L414.6 110.6L415.1 109.3L415.6 108.0L416.0 106.8L416.5 105.7L416.9 104.6L417.4 103.7L417.9 102.8L418.3 101.9L418.8 101.2L419.3 100.5L419.7 100.0L420.2 99.5L420.6 99.1L421.1 98.9L421.6 98.7L422.0 98.6L422.5 98.7L423.0 98.9L423.4 99.5L423.9 100.3L424.3 101.3L424.8 102.6L425.3 104.0L425.7 105.7L426.2 107.7L426.6 109.8L427.1 112.0L427.6 114.5L428.0 117.0L428.5 119.7L429.0 122.5L429.4 125.4L429.9 128.3L430.3 131.2L430.8 134.1L431.3 137.0L431.7 139.5L432.2 141.2L432.7 139.3L433.1 135.6L433.6 131.5L434.0 127.4L434.5 123.3L435.0 119.4L435.4 115.7L435.9 112.3L436.4 109.2L436.8 106.5L437.3 104.2L437.7 102.4L438.2 101.0L438.7 100.2L439.1 99.8L439.6 99.8L440.1 100.0L440.5 100.4L441.0 100.8L441.4 101.5L441.9 102.2L442.4 103.1L442.8 104.1L443.3 105.2L443.7 106.4L444.2 107.8L444.7 109.2L445.1 110.8L445.6 112.4L446.1 114.1L446.5 115.9L447.0 117.7L447.4 119.6L447.9 121.5L448.4 123.5L448.8 125.4L449.3 127.4L449.8 129.3L450.2 131.1L450.7 132.9L451.1 134.6L451.6 136.0L452.1 137.0L452.5 137.2L453.0 136.6L453.5 135.6L453.9 134.4L454.4 133.0L454.8 131.6L455.3 130.1L455.8 128.5L456.2 126.9L456.7 125.3L457.2 123.7L457.6 122.0L458.1 120.4L458.5 118.8L459.0 117.3L459.5 115.7L459.9 114.2L460.4 112.8L460.8 111.4L461.3 110.0L461.8 108.7L462.2 107.5L462.7 106.3L463.2 105.2L463.6 104.2L464.1 103.2L464.5 102.4L465.0 101.6L465.5 100.9L465.9 100.3L466.4 99.8L466.9 99.3L467.3 99.0L467.8 98.8L468.2 98.6L468.7 98.6L469.2 98.7L469.6 99.2L470.1 99.8L470.6 100.7L471.0 101.8L471.5 103.2L471.9 104.8L472.4 106.6L472.9 108.6L473.3 110.8L473.8 113.1L474.3 115.6L474.7 118.2L475.2 121.0L475.6 123.8L476.1 126.7L476.6 129.6L477.0 132.5L477.5 135.4L477.9 138.1L478.4 140.5L478.9 140.8L479.3 137.6L479.8 133.7L480.3 129.6L480.7 125.5L481.2 121.5L481.6 117.7L482.1 114.1L482.6 110.8L483.0 107.9L483.5 105.4L484.0 103.3L484.4 101.7L484.9 100.6L485.3 99.9L485.8 99.8L486.3 99.9L486.7 100.2L487.2 100.6L487.7 101.1L488.1 101.8L488.6 102.6L489.0 103.5L489.5 104.6L490.0 105.7L490.4 107.0L490.9 108.4L491.4 109.9L491.8 111.5L492.3 113.2L492.7 114.9L493.2 116.7L493.7 118.6L494.1 120.5L494.6 122.4L495.0 124.3L495.5 126.3L496.0 128.2L496.4 130.1L496.9 131.9L497.4 133.6L497.8 135.2L498.3 136.5L498.7 137.1L499.2 136.9L499.7 136.1L500.1 135.0L500.6 133.7L501.1 132.3L501.5 130.8L502.0 129.3L502.4 127.7L502.9 126.1L503.4 124.5L503.8 122.9L504.3 121.3L504.8 119.7L505.2 118.1L505.7 116.5L506.1 115.0L506.6 113.5L507.1 112.1L507.5 110.7L508.0 109.4L508.5 108.1L508.9 106.9L509.4 105.8L509.8 104.7L510.3 103.7L510.8 102.8L511.2 102.0L511.7 101.2L512.1 100.6L512.6 100.0L513.1 99.6L513.5 99.2L514.0 98.9L514.5 98.7L514.9 98.6L515.4 98.6L515.8 98.9L516.3 99.4L516.8 100.2L517.2 101.2L517.7 102.4L518.2 103.9L518.6 105.6L519.1 107.5L519.5 109.6L520.0 111.8L520.5 114.2L520.9 116.8L521.4 119.5L521.9 122.3L522.3 125.1L522.8 128.0L523.2 130.9L523.7 133.8L524.2 136.7L524.6 139.3L525.1 141.1L525.5 139.5L526.0 135.8L526.5 131.8L526.9 127.7L527.4 123.6L527.9 119.7L528.3 116.0L528.8 112.5L529.2 109.4L529.7 106.7L530.2 104.4L530.6 102.5L531.1 101.1L531.6 100.2L532.0 99.8L532.5 99.8L532.9 100.0L533.4 100.3L533.9 100.8L534.3 101.4L534.8 102.1L535.3 103.0L535.7 104.0L536.2 105.1L536.6 106.3L537.1 107.7L537.6 109.1L538.0 110.6L538.5 112.2L539.0 113.9L539.4 115.7L539.9 117.5L540.3 119.4L540.8 121.3L541.3 123.3L541.7 125.2L542.2 127.1L542.6 129.0L543.1 130.9L543.6 132.7L544.0 134.3L544.5 135.8L545.0 136.8L545.4 137.1L545.9 136.6L546.3 135.6L546.8 134.4L547.3 133.0L547.7 131.6L548.2 130.1L548.7 128.5L549.1 126.9L549.6 125.3L550.0 123.7L550.5 122.1L551.0 120.5L551.4 118.9L551.9 117.3L552.4 115.8L552.8 114.3L553.3 112.8L553.7 111.4L554.2 110.1L554.7 108.8L555.1 107.5L555.6 106.4L556.1 105.3L556.5 104.2L557.0 103.3L557.4 102.4L557.9 101.6L558.4 100.9L558.8 100.3L559.3 99.8L559.7 99.4L560.2 99.0L560.7 98.8L561.1 98.6L561.6 98.6L562.1 98.7L562.5 99.1L563.0 99.7L563.4 100.6L563.9 101.7L564.4 103.1L564.8 104.6L565.3 106.4L565.8 108.4L566.2 110.6L566.7 112.9L567.1 115.4L567.6 118.0L568.1 120.7L568.5 123.6L569.0 126.4L569.5 129.4L569.9 132.3L570.4 135.1L570.8 137.9L571.3 140.3L571.8 140.9L572.2 137.9L572.7 134.0L573.2 129.9L573.6 125.8L574.1 121.8L574.5 117.9L575.0 114.4L575.5 111.1L575.9 108.1L576.4 105.6L576.8 103.5L577.3 101.8L577.8 100.6L578.2 100.0L578.7 99.8L579.2 99.9L579.6 100.1L580.1 100.5L580.5 101.1L581.0 101.7L581.5 102.5L581.9 103.4L582.4 104.5L582.9 105.6L583.3 106.9L583.8 108.3L584.2 109.8L584.7 111.4L585.2 113.0L585.6 114.7L586.1 116.5L586.6 118.4L587.0 120.3L587.5 122.2L587.9 124.1L588.4 126.1L588.9 128.0L589.3 129.9L589.8 131.7L590.3 133.4L590.7 135.0L591.2 136.3L591.6 137.0L592.1 136.9L592.6 136.2L593.0 135.1L593.5 133.8L593.9 132.4L594.4 130.9L594.9 129.3L595.3 127.8L595.8 126.2L596.3 124.6L596.7 123.0L597.2 121.3L597.6 119.7L598.1 118.2L598.6 116.6L599.0 115.1L599.5 113.6L600.0 112.2L600.4 110.8L600.9 109.5L601.3 108.2L601.8 107.0L602.3 105.8L602.7 104.8L603.2 103.8L603.7 102.9L604.1 102.0L604.6 101.3L605.0 100.6L605.5 100.1L606.0 99.6L606.4 99.2L606.9 98.9L607.4 98.7L607.8 98.6L608.3 98.6L608.7 98.9L609.2 99.4L609.7 100.1L610.1 101.1L610.6 102.3L611.0 103.8L611.5 105.4L612.0 107.3L612.4 109.4L612.9 111.6L613.4 114.0L613.8 116.6L614.3 119.2L614.7 122.0L615.2 124.9L615.7 127.8L616.1 130.7L616.6 133.6L617.1 136.4L617.5 139.0L618.0 141.0L618.4 139.7L618.9 136.1L619.4 132.1L619.8 128.0L620.3 123.9L620.8 120.0L621.2 116.3L621.7 112.8L622.1 109.7L622.6 106.9L623.1 104.5L623.5 102.6L624.0 101.2L624.5 100.3L624.9 99.8L625.4 99.8L625.8 100.0L626.3 100.3L626.8 100.8L627.2 101.3L627.7 102.1L628.1 102.9L628.6 103.9L629.1 105.0L629.5 106.2L630.0 107.5L630.5 109.0L630.9 110.5L631.4 112.1L631.8 113.8L632.3 115.5L632.8 117.4L633.2 119.2L633.7 121.1L634.2 123.1L634.6 125.0L635.1 126.9L635.5 128.8L636.0 130.7L636.5 132.5L636.9 134.1L637.4 135.6L637.9 136.7L638.3 137.0L638.8 136.6L639.2 135.7L639.7 134.5L640.2 133.1L640.6 131.7L641.1 130.2L641.6 128.6L642.0 127.0L642.5 125.4L642.9 123.8L643.4 122.2L643.9 120.6L644.3 119.0L644.8 117.4L645.2 115.9L645.7 114.4L646.2 112.9L646.6 111.5L647.1 110.2L647.6 108.9L648.0 107.6L648.5 106.4L648.9 105.3L649.4 104.3L649.9 103.3L650.3 102.5L650.8 101.7L651.3 101.0L651.7 100.4L652.2 99.8L652.6 99.4L653.1 99.1L653.6 98.8L654.0 98.7L654.5 98.6L655.0 98.7L655.4 99.1L655.9 99.7L656.3 100.5L656.8 101.6L657.3 103.0L657.7 104.5L658.2 106.3L658.7 108.2L659.1 110.4L659.6 112.7L660.0 115.2L660.5 117.8L661.0 120.5L661.4 123.3L661.9 126.2L662.3 129.1L662.8 132.0L663.3 134.9L663.7 137.7L664.2 140.1L664.7 141.0L665.1 138.2L665.6 134.3L666.0 130.2L666.5 126.1L667.0 122.1L667.4 118.2L667.9 114.6L668.4 111.3L668.8 108.3L669.3 105.8L669.7 103.6L670.2 101.9L670.7 100.7L671.1 100.0L671.6 99.8L672.1 99.9L672.5 100.1L673.0 100.5L673.4 101.0L673.9 101.6L674.4 102.4L674.8 103.3L675.3 104.4L675.8 105.5L676.2 106.8L676.7 108.2L677.1 109.6L677.6 111.2L678.1 112.9L678.5 114.6L679.0 116.4L679.4 118.2L679.9 120.1L680.4 122.0L680.8 123.9L681.3 125.9L681.8 127.8L682.2 129.7L682.7 131.5L683.1 133.3L683.6 134.8L684.1 136.2L684.5 137.0L685.0 136.9L685.5 136.2L685.9 135.1L686.4 133.9L686.8 132.5L687.3 131.0L687.8 129.5L688.2 127.9L688.7 126.3L689.2 124.7L689.6 123.1L690.1 121.5L690.5 119.9L691.0 118.3L691.5 116.7L691.9 115.2L692.4 113.7L692.9 112.3L693.3 110.9L693.8 109.6L694.2 108.3L694.7 107.1L695.2 105.9L695.6 104.8L696.1 103.9L696.5 102.9L697.0 102.1L697.5 101.3L697.9 100.7L698.4 100.1L698.9 99.6L699.3 99.2L699.8 98.9L700.2 98.7L700.7 98.6L701.2 98.6L701.6 98.8L702.1 99.3L702.6 100.0L703.0 101.0L703.5 102.2L703.9 103.6L704.4 105.3L704.9 107.1L705.3 109.2L705.8 111.4L706.3 113.8L706.7 116.4L707.2 119.0L707.6 121.8L708.1 124.6L708.6 127.5L709.0 130.4L709.5 133.3L710.0 136.2L710.4 138.8L710.9 140.9L711.3 140.0L711.8 136.4L712.3 132.4L712.7 128.3L713.2 124.2L713.6 120.3L714.1 116.5L714.6 113.1L715.0 109.9L715.5 107.1L716.0 104.7L716.4 102.8L716.9 101.3L717.3 100.3L717.8 99.8L718.3 99.8L718.7 100.0L719.2 100.3L719.7 100.7L720.1 101.3L720.6 102.0L721.0 102.8L721.5 103.8L722.0 104.9L722.4 106.1L722.9 107.4L723.4 108.8L723.8 110.4L724.3 112.0L724.7 113.6L725.2 115.4L725.7 117.2L726.1 119.1L726.6 121.0L727.1 122.9L727.5 124.8L728.0 126.8L728.4 128.7L728.9 130.5L729.4 132.3L729.8 134.0L730.3 135.5L730.7 136.6L731.2 137.0L731.7 136.6L732.1 135.7L732.6 134.6L733.1 133.2L733.5 131.8L734.0 130.3L734.4 128.7L734.9 127.1L735.4 125.5L735.8 123.9L736.3 122.3L736.8 120.7L737.2 119.1L737.7 117.6L738.1 116.0L738.6 114.5L739.1 113.0L739.5 111.6L740.0 110.3L740.5 109.0L740.9 107.7L741.4 106.5L741.8 105.4L742.3 104.4L742.8 103.4L743.2 102.5L743.7 101.7L744.2 101.0L744.6 100.4L745.1 99.9L745.5 99.4L746.0 99.1L746.5 98.8L746.9 98.7L747.4 98.6L747.8 98.7L748.3 99.0L748.8 99.6L749.2 100.5L749.7 101.5L750.2 102.8L750.6 104.4L751.1 106.1L751.5 108.1L752.0 110.2L752.5 112.5L752.9 115.0L753.4 117.6L753.9 120.3L754.3 123.1L754.8 125.9L755.2 128.9L755.7 131.8L756.2 134.7L756.6 137.4L757.1 139.9L757.6 141.1L758.0 138.4L758.5 134.6L758.9 130.5L759.4 126.4L759.9 122.4L760.3 118.5L760.8 114.9L761.3 111.6L761.7 108.6L762.2 106.0L762.6 103.8L763.1 102.0L763.6 100.8L764.0 100.0L764.5 99.8L764.9 99.9L765.4 100.1L765.9 100.5L766.3 101.0L766.8 101.6L767.3 102.4L767.7 103.3L768.2 104.3L768.6 105.4L769.1 106.7L769.6 108.1L770.0 109.5L770.5 111.1L771.0 112.7L771.4 114.4L771.9 116.2L772.3 118.1L772.8 119.9L773.3 121.9L773.7 123.8L774.2 125.7L774.7 127.6L775.1 129.5L775.6 131.4L776.0 133.1L776.5 134.7L777.0 136.1L777.4 136.9L777.9 136.9L778.4 136.3L778.8 135.2L779.3 134.0L779.7 132.6L780.2 131.1L780.7 129.6L781.1 128.0L781.6 126.4L782.0 124.8L782.5 123.2L783.0 121.6L783.4 120.0L783.9 118.4L784.4 116.8L784.8 115.3L785.3 113.8L785.7 112.4L786.2 111.0L786.7 109.7L787.1 108.4L787.6 107.2L788.1 106.0L788.5 104.9L789.0 103.9L789.4 103.0L789.9 102.2L790.4 101.4L790.8 100.7L791.3 100.1L791.8 99.7L792.2 99.3L792.7 98.9L793.1 98.7L793.6 98.6L794.1 98.6L794.5 98.8L795.0 99.3L795.5 100.0L795.9 100.9L796.4 102.1L796.8 103.5L797.3 105.2L797.8 107.0L798.2 109.0L798.7 111.2L799.1 113.6L799.6 116.1L800.1 118.8L800.5 121.5L801.0 124.4L801.5 127.3L801.9 130.2L802.4 133.1L802.8 136.0L803.3 138.6L803.8 140.8L804.2 140.2L804.7 136.7L805.2 132.7L805.6 128.6L806.1 124.6L806.5 120.6L807.0 116.8L807.5 113.3L807.9 110.1L808.4 107.3L808.9 104.9L809.3 102.9L809.8 101.4L810.2 100.4L810.7 99.9L811.2 99.8L811.6 100.0L812.1 100.2L812.6 100.7L813.0 101.2L813.5 101.9L813.9 102.8L814.4 103.7L814.9 104.8L815.3 106.0L815.8 107.3L816.2 108.7L816.7 110.2L817.2 111.8L817.6 113.5L818.1 115.2L818.6 117.1L819.0 118.9L819.5 120.8L819.9 122.7L820.4 124.7L820.9 126.6L821.3 128.5L821.8 130.4L822.3 132.2L822.7 133.9L823.2 135.4L823.6 136.6L824.1 137.0L824.6 136.7L825.0 135.8L825.5 134.6L826.0 133.3L826.4 131.9L826.9 130.4L827.3 128.9L827.8 127.3L828.3 125.7L828.7 124.1L829.2 122.4L829.6 120.8L830.1 119.2L830.6 117.7L831.0 116.1L831.5 114.6L832.0 113.2L832.4 111.7L832.9 110.4L833.3 109.1L833.8 107.8L834.3 106.6L834.7 105.5L835.2 104.5L835.7 103.5L836.1 102.6L836.6 101.8L837.0 101.1L837.5 100.4L838.0 99.9L838.4 99.5L838.9 99.1L839.4 98.8L839.8 98.7L840.3 98.6L840.7 98.7L841.2 99.0L841.7 99.6L842.1 100.4L842.6 101.4L843.1 102.7L843.5 104.2L844.0 106.0L844.4 107.9L844.9 110.0L845.4 112.3L845.8 114.8L846.3 117.3L846.7 120.0L847.2 122.8L847.7 125.7L848.1 128.6L848.6 131.5L849.1 134.4L849.5 137.2" stroke="#044a7a"/>
<path d="M111.3 240.5L111.5 176.2L111.5 157.7L111.6 147.4L111.7 140.4L111.8 135.1L111.9 131.0L111.9 131.0L112.0 127.7L112.1 124.9L112.2 122.6L112.3 120.5L112.4 118.8L112.4 118.8L112.5 117.2L112.6 115.9L112.7 114.7L112.8 113.6L112.8 112.6L112.8 112.6L112.9 111.7L113.0 110.9L113.1 110.2L113.2 109.5L113.3 108.9L113.3 108.9L113.4 108.4L113.5 107.9L113.6 107.4L113.7 107.0L113.8 106.6L113.8 106.6L113.9 106.2L114.0 105.9L114.0 105.6L114.1 105.3L114.2 105.0L114.2 105.0L114.3 104.8L114.4 104.6L114.7 104.0L115.2 103.3L115.6 102.8L116.1 102.6L116.5 102.5L117.0 102.5L117.5 102.7L117.9 102.9L118.4 103.2L118.9 103.7L119.3 104.1L119.8 104.7L120.2 105.3L120.7 106.0L121.2 106.7L121.6 107.5L122.1 108.3L122.5 109.1L123.0 109.9L123.5 110.7L123.9 111.6L124.4 112.4L124.9 113.2L125.3 113.9L125.8 114.6L126.2 115.2L126.7 115.6L127.2 115.8L127.6 115.7L128.1 115.3L128.6 114.9L129.0 114.3L129.5 113.8L129.9 113.1L130.4 112.5L130.9 111.8L131.3 111.1L131.8 110.4L132.3 109.7L132.7 109.0L133.2 108.3L133.6 107.5L134.1 106.8L134.6 106.1L135.0 105.4L135.5 104.8L136.0 104.1L136.4 103.5L136.9 102.9L137.3 102.3L137.8 101.8L138.3 101.2L138.7 100.8L139.2 100.3L139.6 100.0L140.1 99.6L140.6 99.3L141.0 99.0L141.5 98.8L142.0 98.6L142.4 98.5L142.9 98.4L143.3 98.4L143.8 98.4L144.3 98.6L144.7 98.9L145.2 99.2L145.7 99.7L146.1 100.3L146.6 101.0L147.0 101.7L147.5 102.5L148.0 103.4L148.4 104.3L148.9 105.3L149.4 106.3L149.8 107.3L150.3 108.3L150.7 109.3L151.2 110.2L151.7 111.1L152.1 111.8L152.6 112.4L153.1 112.6L153.5 112.2L154.0 111.4L154.4 110.5L154.9 109.4L155.4 108.2L155.8 107.0L156.3 105.8L156.7 104.6L157.2 103.5L157.7 102.5L158.1 101.5L158.6 100.6L159.1 99.9L159.5 99.3L160.0 98.9L160.4 98.6L160.9 98.4L161.4 98.4L161.8 98.5L162.3 98.6L162.8 98.9L163.2 99.1L163.7 99.5L164.1 99.9L164.6 100.4L165.1 100.9L165.5 101.5L166.0 102.1L166.5 102.8L166.9 103.5L167.4 104.3L167.8 105.0L168.3 105.8L168.8 106.6L169.2 107.5L169.7 108.3L170.2 109.1L170.6 109.9L171.1 110.6L171.5 111.4L172.0 112.0L172.5 112.6L172.9 113.1L173.4 113.4L173.8 113.4L174.3 113.2L174.8 112.9L175.2 112.5L175.7 112.0L176.2 111.5L176.6 110.9L177.1 110.3L177.5 109.7L178.0 109.1L178.5 108.5L178.9 107.9L179.4 107.3L179.9 106.6L180.3 106.0L180.8 105.4L181.2 104.8L181.7 104.2L182.2 103.6L182.6 103.1L183.1 102.6L183.6 102.0L184.0 101.6L184.5 101.1L184.9 100.7L185.4 100.3L185.9 99.9L186.3 99.6L186.8 99.3L187.3 99.1L187.7 98.9L188.2 98.7L188.6 98.5L189.1 98.5L189.6 98.4L190.0 98.4L190.5 98.5L190.9 98.7L191.4 99.0L191.9 99.4L192.3 100.0L192.8 100.6L193.3 101.3L193.7 102.1L194.2 102.9L194.6 103.8L195.1 104.8L195.6 105.8L196.0 106.8L196.5 107.8L197.0 108.8L197.4 109.7L197.9 110.6L198.3 111.4L198.8 112.1L199.3 112.6L199.7 112.5L200.2 111.9L200.7 111.0L201.1 110.0L201.6 108.8L202.0 107.7L202.5 106.5L203.0 105.3L203.4 104.1L203.9 103.0L204.4 102.0L204.8 101.1L205.3 100.3L205.7 99.6L206.2 99.1L206.7 98.7L207.1 98.5L207.6 98.4L208.0 98.4L208.5 98.5L209.0 98.7L209.4 99.0L209.9 99.3L210.4 99.6L210.8 100.1L211.3 100.5L211.7 101.1L212.2 101.7L212.7 102.3L213.1 103.0L213.6 103.7L214.1 104.4L214.5 105.2L215.0 105.9L215.4 106.7L215.9 107.5L216.4 108.3L216.8 109.1L217.3 109.8L217.8 110.5L218.2 111.2L218.7 111.8L219.1 112.4L219.6 112.8L220.1 112.9L220.5 112.8L221.0 112.6L221.4 112.2L221.9 111.8L222.4 111.3L222.8 110.8L223.3 110.2L223.8 109.7L224.2 109.1L224.7 108.5L225.1 107.9L225.6 107.3L226.1 106.7L226.5 106.1L227.0 105.5L227.5 104.9L227.9 104.3L228.4 103.8L228.8 103.2L229.3 102.7L229.8 102.2L230.2 101.7L230.7 101.2L231.2 100.8L231.6 100.4L232.1 100.1L232.5 99.7L233.0 99.4L233.5 99.2L233.9 98.9L234.4 98.8L234.9 98.6L235.3 98.5L235.8 98.4L236.2 98.4L236.7 98.4L237.2 98.6L237.6 98.8L238.1 99.2L238.5 99.7L239.0 100.2L239.5 100.9L239.9 101.6L240.4 102.5L240.9 103.3L241.3 104.3L241.8 105.2L242.2 106.2L242.7 107.2L243.2 108.2L243.6 109.2L244.1 110.2L244.6 111.0L245.0 111.8L245.5 112.4L245.9 112.6L246.4 112.3L246.9 111.5L247.3 110.6L247.8 109.5L248.3 108.3L248.7 107.1L249.2 105.9L249.6 104.7L250.1 103.6L250.6 102.5L251.0 101.6L251.5 100.7L252.0 100.0L252.4 99.3L252.9 98.9L253.3 98.6L253.8 98.4L254.3 98.4L254.7 98.5L255.2 98.6L255.6 98.8L256.1 99.1L256.6 99.4L257.0 99.8L257.5 100.3L258.0 100.8L258.4 101.3L258.9 101.9L259.3 102.6L259.8 103.2L260.3 104.0L260.7 104.7L261.2 105.5L261.7 106.2L262.1 107.0L262.6 107.8L263.0 108.6L263.5 109.3L264.0 110.1L264.4 110.8L264.9 111.4L265.4 112.0L265.8 112.5L266.3 112.8L266.7 112.8L267.2 112.6L267.7 112.3L268.1 111.9L268.6 111.4L269.1 111.0L269.5 110.4L270.0 109.9L270.4 109.3L270.9 108.7L271.4 108.1L271.8 107.5L272.3 106.9L272.7 106.3L273.2 105.7L273.7 105.2L274.1 104.6L274.6 104.0L275.1 103.5L275.5 102.9L276.0 102.4L276.4 101.9L276.9 101.5L277.4 101.0L277.8 100.6L278.3 100.2L278.8 99.9L279.2 99.6L279.7 99.3L280.1 99.1L280.6 98.8L281.1 98.7L281.5 98.6L282.0 98.5L282.5 98.4L282.9 98.4L283.4 98.5L283.8 98.7L284.3 99.0L284.8 99.4L285.2 99.9L285.7 100.5L286.2 101.2L286.6 102.0L287.1 102.9L287.5 103.8L288.0 104.7L288.5 105.7L288.9 106.7L289.4 107.7L289.8 108.7L290.3 109.7L290.8 110.6L291.2 111.4L291.7 112.1L292.2 112.5L292.6 112.5L293.1 112.0L293.5 111.1L294.0 110.1L294.5 108.9L294.9 107.8L295.4 106.6L295.9 105.4L296.3 104.2L296.8 103.1L297.2 102.1L297.7 101.2L298.2 100.3L298.6 99.7L299.1 99.1L299.6 98.7L300.0 98.5L300.5 98.4L300.9 98.4L301.4 98.5L301.9 98.7L302.3 98.9L302.8 99.2L303.3 99.6L303.7 100.0L304.2 100.5L304.6 101.0L305.1 101.6L305.6 102.2L306.0 102.9L306.5 103.6L306.9 104.3L307.4 105.0L307.9 105.8L308.3 106.6L308.8 107.4L309.3 108.1L309.7 108.9L310.2 109.7L310.6 110.4L311.1 111.0L311.6 111.7L312.0 112.2L312.5 112.6L313.0 112.8L313.4 112.7L313.9 112.5L314.3 112.1L314.8 111.7L315.3 111.2L315.7 110.7L316.2 110.2L316.7 109.6L317.1 109.0L317.6 108.4L318.0 107.9L318.5 107.3L319.0 106.7L319.4 106.1L319.9 105.5L320.4 104.9L320.8 104.3L321.3 103.7L321.7 103.2L322.2 102.7L322.7 102.2L323.1 101.7L323.6 101.2L324.0 100.8L324.5 100.4L325.0 100.1L325.4 99.7L325.9 99.4L326.4 99.2L326.8 99.0L327.3 98.8L327.7 98.6L328.2 98.5L328.7 98.4L329.1 98.4L329.6 98.4L330.1 98.6L330.5 98.8L331.0 99.2L331.4 99.6L331.9 100.2L332.4 100.8L332.8 101.6L333.3 102.4L333.8 103.3L334.2 104.2L334.7 105.2L335.1 106.2L335.6 107.2L336.1 108.2L336.5 109.1L337.0 110.1L337.5 111.0L337.9 111.7L338.4 112.3L338.8 112.6L339.3 112.3L339.8 111.6L340.2 110.6L340.7 109.6L341.1 108.4L341.6 107.2L342.1 106.0L342.5 104.8L343.0 103.7L343.5 102.6L343.9 101.6L344.4 100.8L344.8 100.0L345.3 99.4L345.8 98.9L346.2 98.6L346.7 98.4L347.2 98.4L347.6 98.5L348.1 98.6L348.5 98.8L349.0 99.1L349.5 99.4L349.9 99.8L350.4 100.2L350.9 100.7L351.3 101.3L351.8 101.9L352.2 102.5L352.7 103.2L353.2 103.9L353.6 104.6L354.1 105.4L354.6 106.2L355.0 106.9L355.5 107.7L355.9 108.5L356.4 109.2L356.9 110.0L357.3 110.7L357.8 111.3L358.2 111.9L358.7 112.4L359.2 112.7L359.6 112.8L360.1 112.6L360.6 112.3L361.0 111.9L361.5 111.5L361.9 111.0L362.4 110.4L362.9 109.9L363.3 109.3L363.8 108.8L364.3 108.2L364.7 107.6L365.2 107.0L365.6 106.4L366.1 105.8L366.6 105.2L367.0 104.6L367.5 104.0L368.0 103.5L368.4 103.0L368.9 102.4L369.3 102.0L369.8 101.5L370.3 101.1L370.7 100.6L371.2 100.3L371.7 99.9L372.1 99.6L372.6 99.3L373.0 99.1L373.5 98.9L374.0 98.7L374.4 98.6L374.9 98.5L375.3 98.4L375.8 98.4L376.3 98.5L376.7 98.7L377.2 99.0L377.7 99.4L378.1 99.9L378.6 100.5L379.0 101.2L379.5 101.9L380.0 102.8L380.4 103.7L380.9 104.6L381.4 105.6L381.8 106.6L382.3 107.6L382.7 108.6L383.2 109.6L383.7 110.5L384.1 111.3L384.6 112.0L385.1 112.5L385.5 112.6L386.0 112.0L386.4 111.2L386.9 110.2L387.4 109.0L387.8 107.9L388.3 106.7L388.8 105.5L389.2 104.3L389.7 103.2L390.1 102.2L390.6 101.2L391.1 100.4L391.5 99.7L392.0 99.2L392.4 98.7L392.9 98.5L393.4 98.4L393.8 98.4L394.3 98.5L394.8 98.7L395.2 98.9L395.7 99.2L396.1 99.6L396.6 100.0L397.1 100.4L397.5 101.0L398.0 101.5L398.5 102.2L398.9 102.8L399.4 103.5L399.8 104.2L400.3 105.0L400.8 105.7L401.2 106.5L401.7 107.3L402.2 108.1L402.6 108.8L403.1 109.6L403.5 110.3L404.0 111.0L404.5 111.6L404.9 112.2L405.4 112.6L405.9 112.8L406.3 112.7L406.8 112.5L407.2 112.1L407.7 111.7L408.2 111.2L408.6 110.7L409.1 110.2L409.5 109.6L410.0 109.1L410.5 108.5L410.9 107.9L411.4 107.3L411.9 106.7L412.3 106.1L412.8 105.5L413.2 104.9L413.7 104.4L414.2 103.8L414.6 103.2L415.1 102.7L415.6 102.2L416.0 101.7L416.5 101.3L416.9 100.9L417.4 100.5L417.9 100.1L418.3 99.8L418.8 99.5L419.3 99.2L419.7 99.0L420.2 98.8L420.6 98.6L421.1 98.5L421.6 98.4L422.0 98.4L422.5 98.4L423.0 98.6L423.4 98.8L423.9 99.1L424.3 99.6L424.8 100.1L425.3 100.8L425.7 101.5L426.2 102.3L426.6 103.2L427.1 104.1L427.6 105.1L428.0 106.1L428.5 107.1L429.0 108.1L429.4 109.1L429.9 110.0L430.3 110.9L430.8 111.7L431.3 112.3L431.7 112.6L432.2 112.4L432.7 111.7L433.1 110.7L433.6 109.6L434.0 108.5L434.5 107.3L435.0 106.1L435.4 104.9L435.9 103.8L436.4 102.7L436.8 101.7L437.3 100.8L437.7 100.1L438.2 99.4L438.7 98.9L439.1 98.6L439.6 98.4L440.1 98.4L440.5 98.5L441.0 98.6L441.4 98.8L441.9 99.0L442.4 99.4L442.8 99.7L443.3 100.2L443.7 100.7L444.2 101.2L444.7 101.8L445.1 102.5L445.6 103.1L446.1 103.8L446.5 104.6L447.0 105.3L447.4 106.1L447.9 106.9L448.4 107.7L448.8 108.4L449.3 109.2L449.8 109.9L450.2 110.6L450.7 111.3L451.1 111.9L451.6 112.4L452.1 112.7L452.5 112.8L453.0 112.6L453.5 112.3L453.9 111.9L454.4 111.5L454.8 111.0L455.3 110.5L455.8 109.9L456.2 109.4L456.7 108.8L457.2 108.2L457.6 107.6L458.1 107.0L458.5 106.4L459.0 105.8L459.5 105.2L459.9 104.7L460.4 104.1L460.8 103.5L461.3 103.0L461.8 102.5L462.2 102.0L462.7 101.5L463.2 101.1L463.6 100.7L464.1 100.3L464.5 99.9L465.0 99.6L465.5 99.3L465.9 99.1L466.4 98.9L466.9 98.7L467.3 98.6L467.8 98.5L468.2 98.4L468.7 98.4L469.2 98.5L469.6 98.6L470.1 98.9L470.6 99.3L471.0 99.8L471.5 100.4L471.9 101.1L472.4 101.9L472.9 102.7L473.3 103.6L473.8 104.6L474.3 105.5L474.7 106.5L475.2 107.5L475.6 108.5L476.1 109.5L476.6 110.4L477.0 111.3L477.5 112.0L477.9 112.5L478.4 112.6L478.9 112.1L479.3 111.2L479.8 110.2L480.3 109.1L480.7 108.0L481.2 106.8L481.6 105.6L482.1 104.4L482.6 103.3L483.0 102.2L483.5 101.3L484.0 100.5L484.4 99.8L484.9 99.2L485.3 98.8L485.8 98.5L486.3 98.4L486.7 98.4L487.2 98.5L487.7 98.7L488.1 98.9L488.6 99.2L489.0 99.5L489.5 99.9L490.0 100.4L490.4 100.9L490.9 101.5L491.4 102.1L491.8 102.8L492.3 103.4L492.7 104.2L493.2 104.9L493.7 105.7L494.1 106.4L494.6 107.2L495.0 108.0L495.5 108.8L496.0 109.5L496.4 110.3L496.9 110.9L497.4 111.6L497.8 112.1L498.3 112.6L498.7 112.8L499.2 112.7L499.7 112.5L500.1 112.1L500.6 111.7L501.1 111.3L501.5 110.8L502.0 110.2L502.4 109.7L502.9 109.1L503.4 108.5L503.8 107.9L504.3 107.3L504.8 106.7L505.2 106.1L505.7 105.6L506.1 105.0L506.6 104.4L507.1 103.8L507.5 103.3L508.0 102.8L508.5 102.3L508.9 101.8L509.4 101.3L509.8 100.9L510.3 100.5L510.8 100.1L511.2 99.8L511.7 99.5L512.1 99.2L512.6 99.0L513.1 98.8L513.5 98.6L514.0 98.5L514.5 98.4L514.9 98.4L515.4 98.4L515.8 98.5L516.3 98.8L516.8 99.1L517.2 99.6L517.7 100.1L518.2 100.7L518.6 101.5L519.1 102.3L519.5 103.1L520.0 104.0L520.5 105.0L520.9 106.0L521.4 107.0L521.9 108.0L522.3 109.0L522.8 109.9L523.2 110.8L523.7 111.6L524.2 112.2L524.6 112.6L525.1 112.4L525.5 111.7L526.0 110.8L526.5 109.7L526.9 108.6L527.4 107.4L527.9 106.2L528.3 105.0L528.8 103.9L529.2 102.8L529.7 101.8L530.2 100.9L530.6 100.1L531.1 99.5L531.6 99.0L532.0 98.6L532.5 98.4L532.9 98.4L533.4 98.5L533.9 98.6L534.3 98.8L534.8 99.0L535.3 99.3L535.7 99.7L536.2 100.1L536.6 100.6L537.1 101.2L537.6 101.8L538.0 102.4L538.5 103.1L539.0 103.8L539.4 104.5L539.9 105.3L540.3 106.0L540.8 106.8L541.3 107.6L541.7 108.4L542.2 109.1L542.6 109.9L543.1 110.6L543.6 111.2L544.0 111.8L544.5 112.3L545.0 112.7L545.4 112.8L545.9 112.6L546.3 112.3L546.8 112.0L547.3 111.5L547.7 111.0L548.2 110.5L548.7 110.0L549.1 109.4L549.6 108.9L550.0 108.3L550.5 107.7L551.0 107.1L551.4 106.5L551.9 105.9L552.4 105.3L552.8 104.7L553.3 104.1L553.7 103.6L554.2 103.0L554.7 102.5L555.1 102.0L555.6 101.6L556.1 101.1L556.5 100.7L557.0 100.3L557.4 100.0L557.9 99.6L558.4 99.4L558.8 99.1L559.3 98.9L559.7 98.7L560.2 98.6L560.7 98.5L561.1 98.4L561.6 98.4L562.1 98.5L562.5 98.6L563.0 98.9L563.4 99.3L563.9 99.8L564.4 100.4L564.8 101.1L565.3 101.8L565.8 102.6L566.2 103.5L566.7 104.5L567.1 105.5L567.6 106.5L568.1 107.5L568.5 108.5L569.0 109.4L569.5 110.3L569.9 111.2L570.4 111.9L570.8 112.5L571.3 112.6L571.8 112.1L572.2 111.3L572.7 110.3L573.2 109.2L573.6 108.1L574.1 106.9L574.5 105.7L575.0 104.5L575.5 103.4L575.9 102.3L576.4 101.4L576.8 100.5L577.3 99.8L577.8 99.2L578.2 98.8L578.7 98.5L579.2 98.4L579.6 98.4L580.1 98.5L580.5 98.7L581.0 98.9L581.5 99.2L581.9 99.5L582.4 99.9L582.9 100.4L583.3 100.9L583.8 101.4L584.2 102.1L584.7 102.7L585.2 103.4L585.6 104.1L586.1 104.8L586.6 105.6L587.0 106.4L587.5 107.2L587.9 107.9L588.4 108.7L588.9 109.5L589.3 110.2L589.8 110.9L590.3 111.5L590.7 112.1L591.2 112.5L591.6 112.8L592.1 112.8L592.6 112.5L593.0 112.2L593.5 111.8L593.9 111.3L594.4 110.8L594.9 110.3L595.3 109.7L595.8 109.2L596.3 108.6L596.7 108.0L597.2 107.4L597.6 106.8L598.1 106.2L598.6 105.6L599.0 105.0L599.5 104.4L600.0 103.9L600.4 103.3L600.9 102.8L601.3 102.3L601.8 101.8L602.3 101.4L602.7 100.9L603.2 100.5L603.7 100.2L604.1 99.8L604.6 99.5L605.0 99.2L605.5 99.0L606.0 98.8L606.4 98.6L606.9 98.5L607.4 98.4L607.8 98.4L608.3 98.4L608.7 98.5L609.2 98.7L609.7 99.1L610.1 99.5L610.6 100.0L611.0 100.7L611.5 101.4L612.0 102.2L612.4 103.0L612.9 104.0L613.4 104.9L613.8 105.9L614.3 106.9L614.7 107.9L615.2 108.9L615.7 109.9L616.1 110.7L616.6 111.5L617.1 112.2L617.5 112.6L618.0 112.5L618.4 111.8L618.9 110.9L619.4 109.8L619.8 108.7L620.3 107.5L620.8 106.3L621.2 105.1L621.7 104.0L622.1 102.9L622.6 101.9L623.1 101.0L623.5 100.2L624.0 99.5L624.5 99.0L624.9 98.7L625.4 98.4L625.8 98.4L626.3 98.5L626.8 98.6L627.2 98.7L627.7 99.0L628.1 99.3L628.6 99.7L629.1 100.1L629.5 100.6L630.0 101.1L630.5 101.7L630.9 102.3L631.4 103.0L631.8 103.7L632.3 104.4L632.8 105.2L633.2 106.0L633.7 106.7L634.2 107.5L634.6 108.3L635.1 109.1L635.5 109.8L636.0 110.5L636.5 111.2L636.9 111.8L637.4 112.3L637.9 112.7L638.3 112.8L638.8 112.7L639.2 112.4L639.7 112.0L640.2 111.6L640.6 111.1L641.1 110.6L641.6 110.0L642.0 109.5L642.5 108.9L642.9 108.3L643.4 107.7L643.9 107.1L644.3 106.5L644.8 105.9L645.2 105.3L645.7 104.8L646.2 104.2L646.6 103.6L647.1 103.1L647.6 102.6L648.0 102.1L648.5 101.6L648.9 101.2L649.4 100.7L649.9 100.3L650.3 100.0L650.8 99.7L651.3 99.4L651.7 99.1L652.2 98.9L652.6 98.7L653.1 98.6L653.6 98.5L654.0 98.4L654.5 98.4L655.0 98.4L655.4 98.6L655.9 98.9L656.3 99.3L656.8 99.7L657.3 100.3L657.7 101.0L658.2 101.7L658.7 102.6L659.1 103.5L659.6 104.4L660.0 105.4L660.5 106.4L661.0 107.4L661.4 108.4L661.9 109.4L662.3 110.3L662.8 111.1L663.3 111.9L663.7 112.4L664.2 112.6L664.7 112.2L665.1 111.4L665.6 110.4L666.0 109.3L666.5 108.1L667.0 107.0L667.4 105.8L667.9 104.6L668.4 103.5L668.8 102.4L669.3 101.4L669.7 100.6L670.2 99.9L670.7 99.3L671.1 98.8L671.6 98.5L672.1 98.4L672.5 98.4L673.0 98.5L673.4 98.6L673.9 98.9L674.4 99.1L674.8 99.5L675.3 99.9L675.8 100.3L676.2 100.8L676.7 101.4L677.1 102.0L677.6 102.6L678.1 103.3L678.5 104.0L679.0 104.8L679.4 105.5L679.9 106.3L680.4 107.1L680.8 107.9L681.3 108.7L681.8 109.4L682.2 110.1L682.7 110.8L683.1 111.5L683.6 112.0L684.1 112.5L684.5 112.8L685.0 112.8L685.5 112.5L685.9 112.2L686.4 111.8L686.8 111.3L687.3 110.9L687.8 110.3L688.2 109.8L688.7 109.2L689.2 108.6L689.6 108.0L690.1 107.4L690.5 106.8L691.0 106.2L691.5 105.7L691.9 105.1L692.4 104.5L692.9 103.9L693.3 103.4L693.8 102.8L694.2 102.3L694.7 101.9L695.2 101.4L695.6 101.0L696.1 100.6L696.5 100.2L697.0 99.8L697.5 99.5L697.9 99.3L698.4 99.0L698.9 98.8L699.3 98.7L699.8 98.5L700.2 98.5L700.7 98.4L701.2 98.4L701.6 98.5L702.1 98.7L702.6 99.0L703.0 99.5L703.5 100.0L703.9 100.6L704.4 101.3L704.9 102.1L705.3 103.0L705.8 103.9L706.3 104.8L706.7 105.8L707.2 106.8L707.6 107.8L708.1 108.8L708.6 109.8L709.0 110.7L709.5 111.5L710.0 112.2L710.4 112.6L710.9 112.5L711.3 111.9L711.8 111.0L712.3 109.9L712.7 108.8L713.2 107.6L713.6 106.4L714.1 105.2L714.6 104.1L715.0 103.0L715.5 102.0L716.0 101.0L716.4 100.2L716.9 99.6L717.3 99.1L717.8 98.7L718.3 98.5L718.7 98.4L719.2 98.4L719.7 98.6L720.1 98.7L720.6 99.0L721.0 99.3L721.5 99.6L722.0 100.1L722.4 100.6L722.9 101.1L723.4 101.7L723.8 102.3L724.3 103.0L724.7 103.7L725.2 104.4L725.7 105.1L726.1 105.9L726.6 106.7L727.1 107.5L727.5 108.2L728.0 109.0L728.4 109.7L728.9 110.5L729.4 111.1L729.8 111.7L730.3 112.3L730.7 112.7L731.2 112.8L731.7 112.7L732.1 112.4L732.6 112.0L733.1 111.6L733.5 111.1L734.0 110.6L734.4 110.1L734.9 109.5L735.4 108.9L735.8 108.4L736.3 107.8L736.8 107.2L737.2 106.6L737.7 106.0L738.1 105.4L738.6 104.8L739.1 104.2L739.5 103.7L740.0 103.1L740.5 102.6L740.9 102.1L741.4 101.6L741.8 101.2L742.3 100.8L742.8 100.4L743.2 100.0L743.7 99.7L744.2 99.4L744.6 99.1L745.1 98.9L745.5 98.7L746.0 98.6L746.5 98.5L746.9 98.4L747.4 98.4L747.8 98.4L748.3 98.6L748.8 98.9L749.2 99.2L749.7 99.7L750.2 100.3L750.6 100.9L751.1 101.7L751.5 102.5L752.0 103.4L752.5 104.3L752.9 105.3L753.4 106.3L753.9 107.3L754.3 108.3L754.8 109.3L755.2 110.2L755.7 111.1L756.2 111.8L756.6 112.4L757.1 112.6L757.6 112.3L758.0 111.5L758.5 110.5L758.9 109.4L759.4 108.2L759.9 107.0L760.3 105.9L760.8 104.7L761.3 103.5L761.7 102.5L762.2 101.5L762.6 100.7L763.1 99.9L763.6 99.3L764.0 98.9L764.5 98.6L764.9 98.4L765.4 98.4L765.9 98.5L766.3 98.6L766.8 98.8L767.3 99.1L767.7 99.4L768.2 99.8L768.6 100.3L769.1 100.8L769.6 101.3L770.0 101.9L770.5 102.6L771.0 103.3L771.4 104.0L771.9 104.7L772.3 105.5L772.8 106.3L773.3 107.0L773.7 107.8L774.2 108.6L774.7 109.3L775.1 110.1L775.6 110.8L776.0 111.4L776.5 112.0L777.0 112.5L777.4 112.8L777.9 112.8L778.4 112.6L778.8 112.2L779.3 111.8L779.7 111.4L780.2 110.9L780.7 110.4L781.1 109.8L781.6 109.3L782.0 108.7L782.5 108.1L783.0 107.5L783.4 106.9L783.9 106.3L784.4 105.7L784.8 105.1L785.3 104.5L785.7 104.0L786.2 103.4L786.7 102.9L787.1 102.4L787.6 101.9L788.1 101.4L788.5 101.0L789.0 100.6L789.4 100.2L789.9 99.9L790.4 99.6L790.8 99.3L791.3 99.0L791.8 98.8L792.2 98.7L792.7 98.5L793.1 98.5L793.6 98.4L794.1 98.4L794.5 98.5L795.0 98.7L795.5 99.0L795.9 99.4L796.4 100.0L796.8 100.6L797.3 101.3L797.8 102.1L798.2 102.9L798.7 103.8L799.1 104.8L799.6 105.7L800.1 106.8L800.5 107.8L801.0 108.7L801.5 109.7L801.9 110.6L802.4 111.4L802.8 112.1L803.3 112.5L803.8 112.5L804.2 111.9L804.7 111.0L805.2 110.0L805.6 108.9L806.1 107.7L806.5 106.5L807.0 105.3L807.5 104.2L807.9 103.1L808.4 102.0L808.9 101.1L809.3 100.3L809.8 99.6L810.2 99.1L810.7 98.7L811.2 98.5L811.6 98.4L812.1 98.4L812.6 98.5L813.0 98.7L813.5 99.0L813.9 99.3L814.4 99.6L814.9 100.0L815.3 100.5L815.8 101.0L816.2 101.6L816.7 102.2L817.2 102.9L817.6 103.6L818.1 104.3L818.6 105.1L819.0 105.8L819.5 106.6L819.9 107.4L820.4 108.2L820.9 108.9L821.3 109.7L821.8 110.4L822.3 111.1L822.7 111.7L823.2 112.2L823.6 112.6L824.1 112.8L824.6 112.7L825.0 112.4L825.5 112.1L826.0 111.6L826.4 111.2L826.9 110.7L827.3 110.1L827.8 109.6L828.3 109.0L828.7 108.4L829.2 107.8L829.6 107.2L830.1 106.6L830.6 106.0L831.0 105.4L831.5 104.8L832.0 104.3L832.4 103.7L832.9 103.2L833.3 102.7L833.8 102.2L834.3 101.7L834.7 101.2L835.2 100.8L835.7 100.4L836.1 100.0L836.6 99.7L837.0 99.4L837.5 99.2L838.0 98.9L838.4 98.8L838.9 98.6L839.4 98.5L839.8 98.4L840.3 98.4L840.7 98.4L841.2 98.6L841.7 98.8L842.1 99.2L842.6 99.7L843.1 100.2L843.5 100.9L844.0 101.6L844.4 102.4L844.9 103.3L845.4 104.2L845.8 105.2L846.3 106.2L846.7 107.2L847.2 108.2L847.7 109.2L848.1 110.1L848.6 111.0L849.1 111.8L849.5 112.4" stroke="#007f8f"/>
<path d="M111.3 240.5L111.5 208.8L111.5 191.8L111.6 183.0L111.7 177.4L111.8 173.5L111.9 170.7L111.9 170.7L112.0 168.5L112.1 166.8L112.2 165.4L112.3 164.3L112.4 163.5L112.4 163.5L112.5 162.7L112.6 162.1L112.7 161.5L112.8 161.1L112.8 160.7L112.8 160.7L112.9 160.3L113.0 160.0L113.1 159.7L113.2 159.5L113.3 159.3L113.3 159.3L113.4 159.1L113.5 158.9L113.6 158.7L113.7 158.5L113.8 158.3L113.8 158.3L113.9 158.2L114.0 158.0L114.0 157.9L114.1 157.7L114.2 157.5L114.2 157.6L114.3 157.4L114.4 157.3L114.7 156.4L115.2 154.9L115.6 153.5L116.1 152.2L116.5 150.9L117.0 150.5L117.5 150.2L117.9 149.9L118.4 149.5L118.9 149.2L119.3 148.3L119.8 147.4L120.2 146.7L120.7 146.0L121.2 145.4L121.6 144.8L122.1 144.4L122.5 144.1L123.0 143.8L123.5 143.7L123.9 143.9L124.4 144.1L124.9 144.2L125.3 144.4L125.8 144.5L126.2 144.6L126.7 144.7L127.2 144.7L127.6 144.8L128.1 144.9L128.6 145.0L129.0 145.1L129.5 145.1L129.9 145.1L130.4 145.0L130.9 144.8L131.3 144.5L131.8 144.3L132.3 144.0L132.7 143.8L133.2 143.5L133.6 143.3L134.1 142.9L134.6 142.5L135.0 142.1L135.5 141.5L136.0 140.9L136.4 140.3L136.9 139.5L137.3 138.5L137.8 137.6L138.3 136.7L138.7 135.7L139.2 134.9L139.6 134.1L140.1 133.4L140.6 132.8L141.0 132.2L141.5 132.0L142.0 131.7L142.4 131.6L142.9 131.4L143.3 131.3L143.8 131.1L144.3 131.0L144.7 130.8L145.2 130.7L145.7 130.5L146.1 129.9L146.6 129.4L147.0 128.9L147.5 128.4L148.0 128.2L148.4 128.2L148.9 128.2L149.4 128.3L149.8 128.3L150.3 128.1L150.7 127.9L151.2 127.6L151.7 127.4L152.1 127.2L152.6 127.0L153.1 126.8L153.5 126.6L154.0 126.4L154.4 126.3L154.9 126.3L155.4 126.4L155.8 126.5L156.3 126.6L156.7 126.5L157.2 126.2L157.7 125.9L158.1 125.6L158.6 125.3L159.1 125.2L159.5 125.3L160.0 125.4L160.4 125.5L160.9 125.6L161.4 125.3L161.8 124.9L162.3 124.5L162.8 124.2L163.2 123.8L163.7 123.8L164.1 123.8L164.6 123.8L165.1 123.9L165.5 123.8L166.0 123.7L166.5 123.5L166.9 123.3L167.4 123.2L167.8 123.0L168.3 122.9L168.8 122.8L169.2 122.7L169.7 122.5L170.2 122.5L170.6 122.6L171.1 122.7L171.5 122.8L172.0 122.8L172.5 122.7L172.9 122.6L173.4 122.5L173.8 122.4L174.3 122.2L174.8 122.2L175.2 122.2L175.7 122.2L176.2 122.3L176.6 122.2L177.1 122.1L177.5 121.9L178.0 121.8L178.5 121.6L178.9 121.5L179.4 121.2L179.9 121.0L180.3 120.8L180.8 120.6L181.2 120.5L181.7 120.4L182.2 120.3L182.6 120.2L183.1 120.1L183.6 119.9L184.0 119.7L184.5 119.4L184.9 119.0L185.4 118.5L185.9 118.1L186.3 117.6L186.8 117.1L187.3 116.6L187.7 116.1L188.2 115.5L188.6 114.9L189.1 114.3L189.6 113.9L190.0 113.6L190.5 113.4L190.9 113.2L191.4 113.0L191.9 112.9L192.3 112.6L192.8 112.3L193.3 111.9L193.7 111.6L194.2 111.2L194.6 111.2L195.1 111.2L195.6 111.2L196.0 111.2L196.5 111.3L197.0 111.0L197.4 110.7L197.9 110.4L198.3 110.2L198.8 109.9L199.3 109.7L199.7 109.6L200.2 109.4L200.7 109.2L201.1 109.1L201.6 109.2L202.0 109.2L202.5 109.3L203.0 109.3L203.4 109.3L203.9 109.4L204.4 109.4L204.8 109.4L205.3 109.4L205.7 109.2L206.2 108.9L206.7 108.7L207.1 108.4L207.6 108.2L208.0 108.2L208.5 108.1L209.0 108.1L209.4 108.1L209.9 108.1L210.4 108.0L210.8 108.0L211.3 108.0L211.7 108.0L212.2 107.9L212.7 107.8L213.1 107.7L213.6 107.6L214.1 107.6L214.5 107.5L215.0 107.6L215.4 107.6L215.9 107.7L216.4 107.7L216.8 107.6L217.3 107.4L217.8 107.3L218.2 107.1L218.7 106.9L219.1 106.8L219.6 106.7L220.1 106.6L220.5 106.5L221.0 106.4L221.4 106.4L221.9 106.3L222.4 106.3L222.8 106.2L223.3 106.1L223.8 105.8L224.2 105.5L224.7 105.3L225.1 105.0L225.6 104.8L226.1 104.7L226.5 104.6L227.0 104.4L227.5 104.3L227.9 104.1L228.4 103.8L228.8 103.5L229.3 103.2L229.8 102.9L230.2 102.7L230.7 102.5L231.2 102.2L231.6 102.0L232.1 101.7L232.5 101.5L233.0 101.2L233.5 100.9L233.9 100.6L234.4 100.5L234.9 100.5L235.3 100.5L235.8 100.5L236.2 100.5L236.7 100.4L237.2 100.1L237.6 99.8L238.1 99.5L238.5 99.3L239.0 99.2L239.5 99.1L239.9 99.1L240.4 99.0L240.9 98.9L241.3 98.8L241.8 98.7L242.2 98.6L242.7 98.5L243.2 98.4L243.6 98.4L244.1 98.3L244.6 98.3L245.0 98.2L245.5 98.1L245.9 98.1L246.4 98.0L246.9 97.9L247.3 97.9L247.8 97.9L248.3 97.9L248.7 98.0L249.2 98.0L249.6 98.1L250.1 97.9L250.6 97.7L251.0 97.5L251.5 97.3L252.0 97.1L252.4 97.0L252.9 96.9L253.3 96.9L253.8 96.8L254.3 96.8L254.7 96.7L255.2 96.7L255.6 96.7L256.1 96.7L256.6 96.7L257.0 96.7L257.5 96.6L258.0 96.5L258.4 96.5L258.9 96.5L259.3 96.6L259.8 96.7L260.3 96.7L260.7 96.8L261.2 96.8L261.7 96.8L262.1 96.8L262.6 96.7L263.0 96.7L263.5 96.6L264.0 96.4L264.4 96.3L264.9 96.2L265.4 96.1L265.8 96.0L266.3 96.0L266.7 95.9L267.2 95.9L267.7 95.9L268.1 95.9L268.6 95.9L269.1 96.0L269.5 96.0L270.0 96.0L270.4 96.1L270.9 96.2L271.4 96.2L271.8 96.3L272.3 96.1L272.7 95.8L273.2 95.5L273.7 95.3L274.1 95.0L274.6 95.1L275.1 95.2L275.5 95.3L276.0 95.5L276.4 95.5L276.9 95.3L277.4 95.1L277.8 94.9L278.3 94.7L278.8 94.4L279.2 94.4L279.7 94.2L280.1 94.1L280.6 94.0L281.1 93.8L281.5 93.4L282.0 93.1L282.5 92.7L282.9 92.4L283.4 92.2L283.8 92.1L284.3 92.0L284.8 91.9L285.2 91.9L285.7 91.7L286.2 91.6L286.6 91.5L287.1 91.3L287.5 91.2L288.0 91.2L288.5 91.2L288.9 91.1L289.4 91.1L289.8 91.1L290.3 91.2L290.8 91.3L291.2 91.3L291.7 91.4L292.2 91.4L292.6 91.4L293.1 91.3L293.5 91.2L294.0 91.1L294.5 91.0L294.9 90.9L295.4 90.8L295.9 90.7L296.3 90.6L296.8 90.6L297.2 90.5L297.7 90.4L298.2 90.4L298.6 90.3L299.1 90.2L299.6 90.1L300.0 90.0L300.5 89.9L300.9 89.9L301.4 89.9L301.9 89.9L302.3 90.0L302.8 90.0L303.3 90.0L303.7 90.0L304.2 89.9L304.6 89.9L305.1 89.9L305.6 89.8L306.0 89.8L306.5 89.7L306.9 89.7L307.4 89.6L307.9 89.6L308.3 89.5L308.8 89.5L309.3 89.4L309.7 89.4L310.2 89.3L310.6 89.2L311.1 89.1L311.6 89.0L312.0 88.9L312.5 88.9L313.0 88.9L313.4 88.9L313.9 88.9L314.3 88.9L314.8 88.8L315.3 88.8L315.7 88.7L316.2 88.7L316.7 88.6L317.1 88.6L317.6 88.6L318.0 88.6L318.5 88.7L319.0 88.6L319.4 88.6L319.9 88.6L320.4 88.5L320.8 88.5L321.3 88.3L321.7 88.2L322.2 88.0L322.7 87.9L323.1 87.7L323.6 87.7L324.0 87.6L324.5 87.5L325.0 87.4L325.4 87.4L325.9 87.4L326.4 87.4L326.8 87.4L327.3 87.4L327.7 87.4L328.2 87.3L328.7 87.3L329.1 87.2L329.6 87.2L330.1 87.2L330.5 87.1L331.0 87.1L331.4 87.1L331.9 87.1L332.4 87.1L332.8 87.1L333.3 87.2L333.8 87.2L334.2 87.2L334.7 87.1L335.1 87.1L335.6 87.0L336.1 87.0L336.5 87.0L337.0 87.1L337.5 87.1L337.9 87.2L338.4 87.3L338.8 87.3L339.3 87.3L339.8 87.2L340.2 87.2L340.7 87.1L341.1 87.2L341.6 87.2L342.1 87.2L342.5 87.2L343.0 87.2L343.5 87.2L343.9 87.2L344.4 87.1L344.8 87.1L345.3 87.1L345.8 87.1L346.2 87.0L346.7 87.0L347.2 87.0L347.6 86.9L348.1 86.9L348.5 86.9L349.0 86.9L349.5 86.9L349.9 86.9L350.4 86.9L350.9 86.9L351.3 87.0L351.8 87.0L352.2 87.0L352.7 86.9L353.2 86.9L353.6 86.9L354.1 86.9L354.6 86.9L355.0 86.9L355.5 87.0L355.9 87.0L356.4 87.0L356.9 87.0L357.3 86.9L357.8 86.9L358.2 86.9L358.7 86.9L359.2 86.8L359.6 86.7L360.1 86.6L360.6 86.6L361.0 86.6L361.5 86.7L361.9 86.7L362.4 86.8L362.9 86.9L363.3 86.8L363.8 86.7L364.3 86.7L364.7 86.6L365.2 86.5L365.6 86.6L366.1 86.6L366.6 86.6L367.0 86.7L367.5 86.7L368.0 86.7L368.4 86.7L368.9 86.8L369.3 86.8L369.8 86.7L370.3 86.7L370.7 86.6L371.2 86.5L371.7 86.4L372.1 86.5L372.6 86.6L373.0 86.7L373.5 86.8L374.0 86.9L374.4 86.9L374.9 86.9L375.3 86.9L375.8 86.9L376.3 87.0L376.7 87.0L377.2 86.9L377.7 86.9L378.1 86.9L378.6 86.9L379.0 86.9L379.5 86.9L380.0 86.9L380.4 86.9L380.9 86.9L381.4 87.0L381.8 87.0L382.3 87.0L382.7 87.0L383.2 87.0L383.7 87.0L384.1 87.0L384.6 87.0L385.1 87.0L385.5 87.0L386.0 87.1L386.4 87.1L386.9 87.2L387.4 87.3L387.8 87.3L388.3 87.3L388.8 87.3L389.2 87.4L389.7 87.4L390.1 87.5L390.6 87.6L391.1 87.6L391.5 87.7L392.0 87.7L392.4 87.7L392.9 87.7L393.4 87.7L393.8 87.7L394.3 87.8L394.8 87.9L395.2 88.0L395.7 88.1L396.1 88.3L396.6 88.3L397.1 88.3L397.5 88.4L398.0 88.4L398.5 88.5L398.9 88.5L399.4 88.5L399.8 88.6L400.3 88.6L400.8 88.6L401.2 88.7L401.7 88.7L402.2 88.7L402.6 88.7L403.1 88.8L403.5 88.9L404.0 89.0L404.5 89.1L404.9 89.2L405.4 89.2L405.9 89.2L406.3 89.2L406.8 89.1L407.2 89.1L407.7 89.3L408.2 89.4L408.6 89.6L409.1 89.8L409.5 90.0L410.0 90.0L410.5 90.1L410.9 90.1L411.4 90.2L411.9 90.2L412.3 90.3L412.8 90.4L413.2 90.4L413.7 90.5L414.2 90.5L414.6 90.6L415.1 90.6L415.6 90.6L416.0 90.6L416.5 90.6L416.9 90.6L417.4 90.5L417.9 90.5L418.3 90.4L418.8 90.4L419.3 90.4L419.7 90.4L420.2 90.3L420.6 90.3L421.1 90.3L421.6 90.3L422.0 90.3L422.5 90.3L423.0 90.2L423.4 90.2L423.9 90.1L424.3 90.0L424.8 89.9L425.3 89.8L425.7 89.7L426.2 89.6L426.6 89.5L427.1 89.4L427.6 89.3L428.0 89.1L428.5 88.9L429.0 88.8L429.4 88.6L429.9 88.6L430.3 88.6L430.8 88.6L431.3 88.6L431.7 88.6L432.2 88.6L432.7 88.5L433.1 88.5L433.6 88.5L434.0 88.4L434.5 88.4L435.0 88.3L435.4 88.2L435.9 88.2L436.4 88.2L436.8 88.1L437.3 88.1L437.7 88.0L438.2 88.0L438.7 87.9L439.1 87.8L439.6 87.7L440.1 87.7L440.5 87.6L441.0 87.7L441.4 87.9L441.9 88.0L442.4 88.1L442.8 88.3L443.3 88.3L443.7 88.3L444.2 88.3L444.7 88.3L445.1 88.2L445.6 88.2L446.1 88.1L446.5 88.1L447.0 88.0L447.4 88.1L447.9 88.3L448.4 88.5L448.8 88.7L449.3 88.9L449.8 89.0L450.2 89.0L450.7 89.0L451.1 88.9L451.6 88.9L452.1 89.0L452.5 89.1L453.0 89.1L453.5 89.2L453.9 89.3L454.4 89.4L454.8 89.5L455.3 89.5L455.8 89.6L456.2 89.7L456.7 89.8L457.2 90.0L457.6 90.1L458.1 90.2L458.5 90.2L459.0 90.2L459.5 90.1L459.9 90.1L460.4 90.0L460.8 90.0L461.3 90.0L461.8 90.0L462.2 90.1L462.7 90.1L463.2 90.1L463.6 90.2L464.1 90.2L464.5 90.2L465.0 90.3L465.5 90.2L465.9 90.1L466.4 90.1L466.9 90.0L467.3 89.9L467.8 89.8L468.2 89.7L468.7 89.5L469.2 89.4L469.6 89.3L470.1 89.2L470.6 89.1L471.0 89.0L471.5 88.9L471.9 88.8L472.4 88.7L472.9 88.6L473.3 88.5L473.8 88.3L474.3 88.3L474.7 88.2L475.2 88.2L475.6 88.2L476.1 88.1L476.6 88.1L477.0 88.1L477.5 88.1L477.9 88.1L478.4 88.1L478.9 88.0L479.3 88.0L479.8 87.9L480.3 87.9L480.7 87.9L481.2 87.8L481.6 87.8L482.1 87.8L482.6 87.7L483.0 87.8L483.5 87.8L484.0 87.8L484.4 87.9L484.9 87.9L485.3 87.9L485.8 87.8L486.3 87.8L486.7 87.7L487.2 87.7L487.7 87.8L488.1 87.9L488.6 87.9L489.0 88.0L489.5 88.1L490.0 88.2L490.4 88.3L490.9 88.4L491.4 88.5L491.8 88.6L492.3 88.7L492.7 88.8L493.2 88.8L493.7 88.9L494.1 89.0L494.6 89.1L495.0 89.2L495.5 89.3L496.0 89.4L496.4 89.5L496.9 89.5L497.4 89.6L497.8 89.6L498.3 89.6L498.7 89.7L499.2 89.7L499.7 89.8L500.1 89.8L500.6 89.9L501.1 89.9L501.5 90.0L502.0 90.1L502.4 90.2L502.9 90.2L503.4 90.2L503.8 90.2L504.3 90.2L504.8 90.1L505.2 90.1L505.7 90.1L506.1 90.1L506.6 90.1L507.1 90.1L507.5 90.2L508.0 90.3L508.5 90.4L508.9 90.5L509.4 90.5L509.8 90.5L510.3 90.5L510.8 90.4L511.2 90.3L511.7 90.3L512.1 90.3L512.6 90.2L513.1 90.2L513.5 90.2L514.0 90.1L514.5 89.9L514.9 89.8L515.4 89.6L515.8 89.5L516.3 89.4L516.8 89.4L517.2 89.4L517.7 89.4L518.2 89.4L518.6 89.3L519.1 89.2L519.5 89.1L520.0 89.1L520.5 89.0L520.9 88.9L521.4 88.8L521.9 88.7L522.3 88.6L522.8 88.6L523.2 88.4L523.7 88.3L524.2 88.2L524.6 88.1L525.1 88.0L525.5 88.1L526.0 88.1L526.5 88.2L526.9 88.2L527.4 88.2L527.9 88.3L528.3 88.3L528.8 88.3L529.2 88.4L529.7 88.4L530.2 88.3L530.6 88.3L531.1 88.3L531.6 88.3L532.0 88.2L532.5 88.2L532.9 88.2L533.4 88.2L533.9 88.2L534.3 88.2L534.8 88.3L535.3 88.4L535.7 88.5L536.2 88.6L536.6 88.6L537.1 88.7L537.6 88.8L538.0 88.9L538.5 88.9L539.0 88.8L539.4 88.7L539.9 88.6L540.3 88.6L540.8 88.7L541.3 88.9L541.7 89.1L542.2 89.3L542.6 89.5L543.1 89.6L543.6 89.7L544.0 89.8L544.5 89.9L545.0 90.0L545.4 90.1L545.9 90.2L546.3 90.3L546.8 90.4L547.3 90.4L547.7 90.6L548.2 90.7L548.7 90.8L549.1 90.9L549.6 90.9L550.0 90.9L550.5 91.0L551.0 91.0L551.4 91.0L551.9 91.0L552.4 91.0L552.8 91.0L553.3 90.9L553.7 90.9L554.2 90.9L554.7 90.9L555.1 90.9L555.6 90.9L556.1 90.9L556.5 90.9L557.0 90.9L557.4 90.9L557.9 90.9L558.4 90.9L558.8 90.8L559.3 90.7L559.7 90.6L560.2 90.5L560.7 90.5L561.1 90.4L561.6 90.4L562.1 90.4L562.5 90.3L563.0 90.3L563.4 90.3L563.9 90.3L564.4 90.3L564.8 90.2L565.3 90.2L565.8 90.2L566.2 90.2L566.7 90.2L567.1 90.1L567.6 89.9L568.1 89.8L568.5 89.6L569.0 89.5L569.5 89.4L569.9 89.3L570.4 89.3L570.8 89.2L571.3 89.2L571.8 89.1L572.2 89.1L572.7 89.1L573.2 89.0L573.6 89.0L574.1 89.0L574.5 89.1L575.0 89.1L575.5 89.1L575.9 89.2L576.4 89.1L576.8 89.0L577.3 89.0L577.8 88.9L578.2 88.9L578.7 89.0L579.2 89.1L579.6 89.1L580.1 89.2L580.5 89.3L581.0 89.2L581.5 89.1L581.9 89.0L582.4 89.0L582.9 89.0L583.3 89.1L583.8 89.2L584.2 89.2L584.7 89.3L585.2 89.4L585.6 89.4L586.1 89.5L586.6 89.6L587.0 89.6L587.5 89.7L587.9 89.8L588.4 89.9L588.9 90.0L589.3 90.1L589.8 90.2L590.3 90.3L590.7 90.3L591.2 90.4L591.6 90.4L592.1 90.4L592.6 90.3L593.0 90.2L593.5 90.1L593.9 90.2L594.4 90.2L594.9 90.3L595.3 90.3L595.8 90.4L596.3 90.5L596.7 90.6L597.2 90.6L597.6 90.7L598.1 90.8L598.6 90.7L599.0 90.7L599.5 90.6L600.0 90.6L600.4 90.5L600.9 90.5L601.3 90.4L601.8 90.3L602.3 90.3L602.7 90.3L603.2 90.4L603.7 90.5L604.1 90.5L604.6 90.6L605.0 90.6L605.5 90.5L606.0 90.4L606.4 90.4L606.9 90.3L607.4 90.2L607.8 90.1L608.3 90.1L608.7 90.0L609.2 89.9L609.7 89.8L610.1 89.7L610.6 89.6L611.0 89.5L611.5 89.4L612.0 89.4L612.4 89.4L612.9 89.4L613.4 89.4L613.8 89.4L614.3 89.2L614.7 89.1L615.2 89.0L615.7 88.9L616.1 88.8L616.6 88.8L617.1 88.8L617.5 88.9L618.0 88.9L618.4 88.8L618.9 88.6L619.4 88.5L619.8 88.4L620.3 88.3L620.8 88.2L621.2 88.2L621.7 88.2L622.1 88.2L622.6 88.2L623.1 88.2L623.5 88.3L624.0 88.3L624.5 88.4L624.9 88.4L625.4 88.4L625.8 88.3L626.3 88.3L626.8 88.3L627.2 88.4L627.7 88.5L628.1 88.6L628.6 88.7L629.1 88.8L629.5 88.8L630.0 88.9L630.5 88.9L630.9 88.9L631.4 89.0L631.8 89.0L632.3 89.0L632.8 89.0L633.2 89.0L633.7 89.1L634.2 89.2L634.6 89.3L635.1 89.4L635.5 89.5L636.0 89.6L636.5 89.7L636.9 89.7L637.4 89.8L637.9 89.8L638.3 89.9L638.8 90.1L639.2 90.2L639.7 90.3L640.2 90.4L640.6 90.4L641.1 90.4L641.6 90.4L642.0 90.3L642.5 90.3L642.9 90.4L643.4 90.4L643.9 90.5L644.3 90.5L644.8 90.5L645.2 90.6L645.7 90.7L646.2 90.8L646.6 90.9L647.1 91.0L647.6 91.0L648.0 91.0L648.5 91.1L648.9 91.1L649.4 91.1L649.9 91.1L650.3 91.0L650.8 91.0L651.3 90.9L651.7 90.8L652.2 90.7L652.6 90.5L653.1 90.4L653.6 90.3L654.0 90.2L654.5 90.2L655.0 90.1L655.4 90.1L655.9 90.0L656.3 90.0L656.8 90.0L657.3 90.0L657.7 90.0L658.2 90.0L658.7 89.8L659.1 89.7L659.6 89.5L660.0 89.4L660.5 89.3L661.0 89.2L661.4 89.1L661.9 89.0L662.3 88.9L662.8 88.9L663.3 88.9L663.7 88.9L664.2 88.9L664.7 88.9L665.1 88.9L665.6 88.9L666.0 88.8L666.5 88.8L667.0 88.8L667.4 88.7L667.9 88.7L668.4 88.6L668.8 88.5L669.3 88.5L669.7 88.4L670.2 88.4L670.7 88.4L671.1 88.4L671.6 88.4L672.1 88.4L672.5 88.4L673.0 88.5L673.4 88.5L673.9 88.6L674.4 88.8L674.8 88.9L675.3 89.0L675.8 89.2L676.2 89.2L676.7 89.2L677.1 89.2L677.6 89.1L678.1 89.2L678.5 89.3L679.0 89.3L679.4 89.4L679.9 89.5L680.4 89.6L680.8 89.7L681.3 89.8L681.8 89.9L682.2 90.0L682.7 90.0L683.1 90.1L683.6 90.2L684.1 90.3L684.5 90.4L685.0 90.4L685.5 90.4L685.9 90.4L686.4 90.4L686.8 90.4L687.3 90.5L687.8 90.6L688.2 90.7L688.7 90.7L689.2 90.8L689.6 90.7L690.1 90.7L690.5 90.6L691.0 90.6L691.5 90.6L691.9 90.6L692.4 90.6L692.9 90.6L693.3 90.6L693.8 90.6L694.2 90.6L694.7 90.5L695.2 90.5L695.6 90.4L696.1 90.4L696.5 90.5L697.0 90.5L697.5 90.6L697.9 90.6L698.4 90.5L698.9 90.4L699.3 90.3L699.8 90.1L700.2 90.0L700.7 89.9L701.2 89.8L701.6 89.7L702.1 89.6L702.6 89.5L703.0 89.4L703.5 89.4L703.9 89.3L704.4 89.2L704.9 89.2L705.3 89.1L705.8 89.0L706.3 88.9L706.7 88.9L707.2 88.8L707.6 88.8L708.1 88.8L708.6 88.7L709.0 88.7L709.5 88.6L710.0 88.4L710.4 88.2L710.9 88.1L711.3 88.0L711.8 87.9L712.3 87.9L712.7 87.9L713.2 87.9L713.6 87.9L714.1 87.9L714.6 87.9L715.0 88.0L715.5 88.0L716.0 88.1L716.4 88.2L716.9 88.4L717.3 88.5L717.8 88.7L718.3 88.7L718.7 88.6L719.2 88.6L719.7 88.5L720.1 88.5L720.6 88.5L721.0 88.5L721.5 88.5L722.0 88.5L722.4 88.6L722.9 88.7L723.4 88.8L723.8 88.9L724.3 89.0L724.7 89.1L725.2 89.2L725.7 89.4L726.1 89.5L726.6 89.7L727.1 89.7L727.5 89.7L728.0 89.7L728.4 89.6L728.9 89.6L729.4 89.7L729.8 89.7L730.3 89.8L730.7 89.9L731.2 90.0L731.7 90.1L732.1 90.2L732.6 90.4L733.1 90.5L733.5 90.6L734.0 90.7L734.4 90.7L734.9 90.7L735.4 90.7L735.8 90.7L736.3 90.8L736.8 90.8L737.2 90.9L737.7 90.9L738.1 90.9L738.6 90.8L739.1 90.8L739.5 90.8L740.0 90.7L740.5 90.8L740.9 90.9L741.4 91.0L741.8 91.1L742.3 91.2L742.8 91.1L743.2 91.1L743.7 91.0L744.2 91.0L744.6 90.9L745.1 90.8L745.5 90.7L746.0 90.6L746.5 90.5L746.9 90.4L747.4 90.4L747.8 90.3L748.3 90.3L748.8 90.2L749.2 90.1L749.7 89.9L750.2 89.7L750.6 89.5L751.1 89.3L751.5 89.3L752.0 89.3L752.5 89.4L752.9 89.4L753.4 89.5L753.9 89.4L754.3 89.2L754.8 89.1L755.2 89.0L755.7 88.9L756.2 88.9L756.6 88.9L757.1 88.9L757.6 88.8L758.0 88.8L758.5 88.8L758.9 88.7L759.4 88.7L759.9 88.7L760.3 88.6L760.8 88.6L761.3 88.5L761.7 88.4L762.2 88.4L762.6 88.3L763.1 88.3L763.6 88.2L764.0 88.1L764.5 88.1L764.9 88.2L765.4 88.3L765.9 88.4L766.3 88.6L766.8 88.7L767.3 88.7L767.7 88.6L768.2 88.6L768.6 88.6L769.1 88.7L769.6 88.7L770.0 88.8L770.5 88.9L771.0 89.0L771.4 89.1L771.9 89.1L772.3 89.2L772.8 89.2L773.3 89.3L773.7 89.4L774.2 89.5L774.7 89.5L775.1 89.6L775.6 89.7L776.0 89.7L776.5 89.7L777.0 89.7L777.4 89.6L777.9 89.7L778.4 89.9L778.8 90.1L779.3 90.4L779.7 90.6L780.2 90.7L780.7 90.7L781.1 90.7L781.6 90.7L782.0 90.7L782.5 90.8L783.0 90.8L783.4 90.9L783.9 91.0L784.4 91.0L784.8 91.1L785.3 91.1L785.7 91.2L786.2 91.2L786.7 91.3L787.1 91.2L787.6 91.1L788.1 90.9L788.5 90.8L789.0 90.7L789.4 90.6L789.9 90.5L790.4 90.4L790.8 90.2L791.3 90.2L791.8 90.1L792.2 90.1L792.7 90.1L793.1 90.1L793.6 90.0L794.1 90.0L794.5 89.9L795.0 89.8L795.5 89.7L795.9 89.7L796.4 89.6L796.8 89.6L797.3 89.5L797.8 89.5L798.2 89.4L798.7 89.4L799.1 89.3L799.6 89.3L800.1 89.2L800.5 89.1L801.0 88.9L801.5 88.7L801.9 88.6L802.4 88.5L802.8 88.5L803.3 88.6L803.8 88.6L804.2 88.7L804.7 88.6L805.2 88.5L805.6 88.4L806.1 88.2L806.5 88.1L807.0 88.2L807.5 88.2L807.9 88.3L808.4 88.3L808.9 88.4L809.3 88.4L809.8 88.4L810.2 88.4L810.7 88.3L811.2 88.3L811.6 88.3L812.1 88.4L812.6 88.4L813.0 88.4L813.5 88.4L813.9 88.5L814.4 88.5L814.9 88.6L815.3 88.7L815.8 88.7L816.2 88.7L816.7 88.8L817.2 88.8L817.6 88.8L818.1 88.9L818.6 89.0L819.0 89.0L819.5 89.1L819.9 89.2L820.4 89.2L820.9 89.2L821.3 89.2L821.8 89.3L822.3 89.3L822.7 89.4L823.2 89.6L823.6 89.7L824.1 89.9L824.6 90.0L825.0 90.2L825.5 90.3L826.0 90.4L826.4 90.6L826.9 90.7L827.3 90.7L827.8 90.8L828.3 90.8L828.7 90.9L829.2 90.9L829.6 90.9L830.1 90.8L830.6 90.8L831.0 90.8L831.5 90.8L832.0 90.8L832.4 90.7L832.9 90.7L833.3 90.6L833.8 90.6L834.3 90.5L834.7 90.4L835.2 90.3L835.7 90.3L836.1 90.3L836.6 90.4L837.0 90.4L837.5 90.5L838.0 90.4L838.4 90.3L838.9 90.2L839.4 90.1L839.8 89.9L840.3 89.9L840.7 89.8L841.2 89.7L841.7 89.6L842.1 89.6L842.6 89.5L843.1 89.4L843.5 89.3L844.0 89.2L844.4 89.2L844.9 89.1L845.4 89.1L845.8 89.0L846.3 88.9L846.7 88.9L847.2 88.8L847.7 88.7L848.1 88.6L848.6 88.5L849.1 88.5L849.5 88.4" stroke="#06bf72"/>
<path d="M111.3 240.5L111.5 209.5L111.5 192.4L111.6 183.4L111.7 177.7L111.8 173.7L111.9 170.7L111.9 170.7L112.0 168.3L112.1 166.5L112.2 165.0L112.3 163.8L112.4 162.8L112.4 162.8L112.5 161.9L112.6 161.1L112.7 160.4L112.8 159.8L112.8 159.3L112.8 159.3L112.9 158.8L113.0 158.4L113.1 157.9L113.2 157.6L113.3 157.2L113.3 157.2L113.4 156.9L113.5 156.6L113.6 156.3L113.7 156.1L113.8 155.9L113.8 155.9L113.9 155.7L114.0 155.5L114.0 155.3L114.1 155.1L114.2 154.9L114.2 154.9L114.3 154.7L114.4 154.6L114.7 154.1L115.2 153.3L115.6 152.4L116.1 151.7L116.5 151.1L117.0 150.5L117.5 150.6L117.9 150.8L118.4 151.0L118.9 151.2L119.3 151.5L119.8 151.7L120.2 151.8L120.7 151.6L121.2 150.3L121.6 149.1L122.1 148.1L122.5 147.5L123.0 147.5L123.5 147.5L123.9 147.5L124.4 147.8L124.9 148.4L125.3 148.9L125.8 149.4L126.2 149.6L126.7 149.6L127.2 149.5L127.6 149.4L128.1 149.1L128.6 148.8L129.0 148.4L129.5 148.1L129.9 147.3L130.4 146.6L130.9 145.8L131.3 145.1L131.8 145.2L132.3 145.2L132.7 145.3L133.2 145.3L133.6 145.2L134.1 145.0L134.6 144.9L135.0 144.2L135.5 142.9L136.0 141.6L136.4 140.4L136.9 139.9L137.3 139.9L137.8 140.0L138.3 140.2L138.7 139.7L139.2 139.1L139.6 138.6L140.1 138.2L140.6 138.3L141.0 138.5L141.5 138.7L142.0 138.9L142.4 138.9L142.9 139.1L143.3 139.3L143.8 139.8L144.3 140.6L144.7 141.5L145.2 142.4L145.7 143.2L146.1 143.8L146.6 144.3L147.0 144.8L147.5 145.5L148.0 146.3L148.4 147.1L148.9 147.9L149.4 148.6L149.8 149.2L150.3 149.8L150.7 150.4L151.2 150.8L151.7 151.2L152.1 151.4L152.6 151.6L153.1 150.8L153.5 149.9L154.0 149.0L154.4 148.4L154.9 149.3L155.4 150.2L155.8 151.1L156.3 151.8L156.7 152.0L157.2 152.3L157.7 152.5L158.1 152.7L158.6 152.8L159.1 152.9L159.5 153.0L160.0 152.5L160.4 151.8L160.9 151.1L161.4 150.4L161.8 150.7L162.3 151.1L162.8 151.5L163.2 151.9L163.7 151.7L164.1 151.5L164.6 151.2L165.1 151.0L165.5 151.0L166.0 151.1L166.5 151.1L166.9 151.4L167.4 152.1L167.8 152.8L168.3 153.5L168.8 153.5L169.2 152.6L169.7 151.7L170.2 150.8L170.6 150.5L171.1 150.7L171.5 150.9L172.0 151.1L172.5 151.3L172.9 151.5L173.4 151.7L173.8 152.0L174.3 151.3L174.8 150.5L175.2 149.8L175.7 149.1L176.2 149.2L176.6 149.3L177.1 149.4L177.5 149.4L178.0 149.4L178.5 149.3L178.9 149.3L179.4 149.1L179.9 149.0L180.3 148.8L180.8 148.5L181.2 148.0L181.7 147.3L182.2 146.5L182.6 145.7L183.1 145.7L183.6 146.0L184.0 146.2L184.5 146.4L184.9 146.4L185.4 146.1L185.9 145.4L186.3 144.5L186.8 142.5L187.3 140.8L187.7 139.4L188.2 138.8L188.6 139.2L189.1 139.7L189.6 140.4L190.0 141.0L190.5 141.4L190.9 141.9L191.4 142.4L191.9 143.0L192.3 143.6L192.8 144.2L193.3 144.8L193.7 145.7L194.2 146.7L194.6 147.6L195.1 148.5L195.6 149.1L196.0 149.7L196.5 150.2L197.0 150.6L197.4 150.7L197.9 150.7L198.3 150.4L198.8 150.2L199.3 150.8L199.7 151.3L200.2 151.9L200.7 152.4L201.1 152.7L201.6 153.0L202.0 153.3L202.5 153.3L203.0 153.1L203.4 152.8L203.9 152.5L204.4 152.7L204.8 153.1L205.3 153.4L205.7 153.8L206.2 153.6L206.7 153.3L207.1 153.0L207.6 152.7L208.0 153.0L208.5 153.2L209.0 153.5L209.4 153.8L209.9 154.1L210.4 154.4L210.8 154.7L211.3 154.6L211.7 153.7L212.2 152.8L212.7 151.9L213.1 151.5L213.6 151.8L214.1 152.2L214.5 152.5L215.0 152.3L215.4 152.0L215.9 151.6L216.4 151.2L216.8 151.2L217.3 151.3L217.8 151.4L218.2 151.5L218.7 150.8L219.1 150.1L219.6 149.4L220.1 148.8L220.5 148.9L221.0 149.0L221.4 149.1L221.9 149.2L222.4 149.3L222.8 149.3L223.3 149.3L223.8 149.5L224.2 149.8L224.7 150.1L225.1 150.5L225.6 150.6L226.1 150.5L226.5 150.4L227.0 150.3L227.5 149.4L227.9 148.2L228.4 147.0L228.8 145.7L229.3 145.5L229.8 145.5L230.2 145.4L230.7 145.3L231.2 145.5L231.6 145.6L232.1 145.2L232.5 144.3L233.0 142.4L233.5 140.7L233.9 139.3L234.4 138.6L234.9 138.8L235.3 139.1L235.8 139.5L236.2 140.0L236.7 140.6L237.2 141.2L237.6 141.9L238.1 142.7L238.5 143.6L239.0 144.5L239.5 145.4L239.9 146.1L240.4 146.6L240.9 147.1L241.3 147.5L241.8 148.0L242.2 148.5L242.7 148.9L243.2 149.3L243.6 149.8L244.1 150.3L244.6 150.7L245.0 151.1L245.5 151.4L245.9 151.6L246.4 151.7L246.9 152.2L247.3 153.0L247.8 153.8L248.3 154.6L248.7 154.4L249.2 153.7L249.6 152.9L250.1 152.2L250.6 152.1L251.0 152.2L251.5 152.2L252.0 152.3L252.4 152.6L252.9 152.8L253.3 153.1L253.8 153.3L254.3 153.1L254.7 152.9L255.2 152.7L255.6 152.5L256.1 152.5L256.6 152.4L257.0 152.3L257.5 152.1L258.0 151.7L258.4 151.3L258.9 150.9L259.3 151.0L259.8 151.4L260.3 151.8L260.7 152.2L261.2 152.1L261.7 151.8L262.1 151.5L262.6 151.2L263.0 151.7L263.5 152.2L264.0 152.7L264.4 153.2L264.9 152.8L265.4 152.5L265.8 152.1L266.3 151.7L266.7 151.3L267.2 150.9L267.7 150.5L268.1 150.3L268.6 150.4L269.1 150.6L269.5 150.8L270.0 150.5L270.4 150.0L270.9 149.4L271.4 148.9L271.8 149.0L272.3 149.4L272.7 149.9L273.2 150.3L273.7 149.7L274.1 149.1L274.6 148.5L275.1 147.8L275.5 147.8L276.0 147.8L276.4 147.8L276.9 147.5L277.4 146.3L277.8 145.3L278.3 144.0L278.8 143.0L279.2 142.4L279.7 141.8L280.1 141.1L280.6 140.2L281.1 139.4L281.5 139.1L282.0 138.9L282.5 139.1L282.9 139.5L283.4 139.9L283.8 140.5L284.3 141.3L284.8 142.3L285.2 143.3L285.7 144.2L286.2 144.8L286.6 145.4L287.1 145.9L287.5 146.4L288.0 147.1L288.5 147.8L288.9 148.6L289.4 149.5L289.8 150.6L290.3 151.8L290.8 153.1L291.2 153.6L291.7 153.1L292.2 152.3L292.6 151.2L293.1 150.9L293.5 151.0L294.0 151.2L294.5 151.4L294.9 151.7L295.4 152.2L295.9 152.6L296.3 153.0L296.8 153.1L297.2 153.3L297.7 153.4L298.2 153.5L298.6 153.3L299.1 153.0L299.6 152.7L300.0 152.5L300.5 152.5L300.9 152.5L301.4 152.4L301.9 152.6L302.3 152.9L302.8 153.3L303.3 153.6L303.7 153.7L304.2 153.6L304.6 153.5L305.1 153.4L305.6 152.8L306.0 152.1L306.5 151.5L306.9 150.8L307.4 151.0L307.9 151.3L308.3 151.6L308.8 151.9L309.3 151.8L309.7 151.7L310.2 151.6L310.6 151.4L311.1 150.8L311.6 150.2L312.0 149.6L312.5 149.3L313.0 149.7L313.4 150.1L313.9 150.6L314.3 150.4L314.8 149.8L315.3 149.2L315.7 148.7L316.2 148.9L316.7 149.6L317.1 150.2L317.6 150.8L318.0 150.5L318.5 150.0L319.0 149.5L319.4 149.0L319.9 148.8L320.4 148.6L320.8 148.3L321.3 148.0L321.7 147.5L322.2 147.0L322.7 146.4L323.1 146.0L323.6 145.9L324.0 145.7L324.5 145.4L325.0 144.4L325.4 142.9L325.9 141.3L326.4 139.9L326.8 139.1L327.3 138.8L327.7 138.8L328.2 139.0L328.7 139.4L329.1 140.0L329.6 140.7L330.1 141.5L330.5 141.7L331.0 142.1L331.4 142.4L331.9 142.9L332.4 144.0L332.8 145.1L333.3 146.2L333.8 146.9L334.2 147.1L334.7 147.3L335.1 147.4L335.6 147.9L336.1 148.9L336.5 150.0L337.0 151.2L337.5 151.7L337.9 151.6L338.4 151.4L338.8 150.9L339.3 151.3L339.8 152.0L340.2 152.8L340.7 153.6L341.1 153.4L341.6 153.2L342.1 153.0L342.5 152.8L343.0 152.1L343.5 151.5L343.9 150.8L344.4 150.6L344.8 151.8L345.3 153.0L345.8 154.1L346.2 154.8L346.7 154.9L347.2 155.0L347.6 155.0L348.1 154.7L348.5 154.0L349.0 153.4L349.5 152.7L349.9 152.5L350.4 152.4L350.9 152.2L351.3 152.1L351.8 152.1L352.2 152.1L352.7 152.1L353.2 152.1L353.6 151.7L354.1 151.3L354.6 150.9L355.0 150.7L355.5 151.4L355.9 152.1L356.4 152.9L356.9 153.0L357.3 152.2L357.8 151.3L358.2 150.5L358.7 150.1L359.2 150.2L359.6 150.3L360.1 150.3L360.6 150.0L361.0 149.6L361.5 149.2L361.9 148.7L362.4 148.6L362.9 148.6L363.3 148.5L363.8 148.4L364.3 148.0L364.7 147.6L365.2 147.2L365.6 147.0L366.1 147.8L366.6 148.7L367.0 149.6L367.5 149.9L368.0 149.1L368.4 148.2L368.9 147.4L369.3 147.0L369.8 147.2L370.3 147.2L370.7 147.1L371.2 146.3L371.7 145.0L372.1 143.6L372.6 142.2L373.0 141.0L373.5 140.0L374.0 139.4L374.4 139.2L374.9 139.4L375.3 139.8L375.8 140.2L376.3 140.8L376.7 141.3L377.2 142.0L377.7 142.6L378.1 143.3L378.6 144.1L379.0 144.9L379.5 145.6L380.0 146.2L380.4 146.7L380.9 147.2L381.4 147.8L381.8 148.3L382.3 148.9L382.7 149.5L383.2 150.1L383.7 150.3L384.1 150.4L384.6 150.3L385.1 150.0L385.5 150.2L386.0 150.4L386.4 150.7L386.9 151.1L387.4 152.2L387.8 153.3L388.3 154.4L388.8 155.0L389.2 154.1L389.7 153.2L390.1 152.2L390.6 151.6L391.1 151.5L391.5 151.3L392.0 151.2L392.4 151.4L392.9 152.0L393.4 152.6L393.8 153.1L394.3 153.6L394.8 154.0L395.2 154.5L395.7 154.9L396.1 153.9L396.6 152.6L397.1 151.4L397.5 150.3L398.0 150.7L398.5 151.2L398.9 151.7L399.4 152.0L399.8 151.8L400.3 151.6L400.8 151.3L401.2 150.9L401.7 150.3L402.2 149.7L402.6 149.1L403.1 149.3L403.5 150.2L404.0 151.1L404.5 152.0L404.9 151.9L405.4 151.5L405.9 151.0L406.3 150.6L406.8 150.4L407.2 150.3L407.7 150.2L408.2 150.1L408.6 149.7L409.1 149.2L409.5 148.7L410.0 148.4L410.5 148.8L410.9 149.1L411.4 149.5L411.9 149.5L412.3 148.9L412.8 148.3L413.2 147.7L413.7 147.4L414.2 147.3L414.6 147.3L415.1 147.2L415.6 146.7L416.0 146.0L416.5 145.3L416.9 144.7L417.4 144.2L417.9 143.5L418.3 142.6L418.8 141.5L419.3 141.1L419.7 140.7L420.2 140.5L420.6 140.4L421.1 140.1L421.6 140.0L422.0 140.1L422.5 140.4L423.0 141.1L423.4 141.8L423.9 142.6L424.3 143.4L424.8 144.0L425.3 144.7L425.7 145.3L426.2 145.9L426.6 146.4L427.1 146.9L427.6 147.4L428.0 148.0L428.5 148.5L429.0 149.1L429.4 149.6L429.9 150.4L430.3 151.2L430.8 151.9L431.3 152.6L431.7 152.5L432.2 152.3L432.7 152.0L433.1 151.8L433.6 151.9L434.0 152.1L434.5 152.2L435.0 152.3L435.4 152.5L435.9 152.6L436.4 152.7L436.8 153.0L437.3 153.6L437.7 154.1L438.2 154.5L438.7 154.5L439.1 154.3L439.6 154.1L440.1 153.9L440.5 153.7L441.0 153.6L441.4 153.5L441.9 153.3L442.4 152.9L442.8 152.5L443.3 152.0L443.7 151.6L444.2 151.2L444.7 150.9L445.1 150.5L445.6 150.6L446.1 151.5L446.5 152.4L447.0 153.3L447.4 153.7L447.9 153.6L448.4 153.5L448.8 153.3L449.3 152.9L449.8 152.3L450.2 151.7L450.7 151.1L451.1 151.1L451.6 151.2L452.1 151.3L452.5 151.5L453.0 151.4L453.5 151.4L453.9 151.4L454.4 151.3L454.8 151.2L455.3 151.1L455.8 151.0L456.2 150.9L456.7 150.8L457.2 150.7L457.6 150.6L458.1 150.2L458.5 149.5L459.0 148.7L459.5 148.0L459.9 148.1L460.4 148.7L460.8 149.3L461.3 149.9L461.8 148.9L462.2 147.4L462.7 146.0L463.2 144.6L463.6 145.0L464.1 145.2L464.5 144.9L465.0 144.3L465.5 143.0L465.9 141.7L466.4 140.7L466.9 140.1L467.3 140.0L467.8 140.1L468.2 140.5L468.7 141.0L469.2 141.6L469.6 142.3L470.1 143.1L470.6 143.9L471.0 144.5L471.5 145.2L471.9 145.8L472.4 146.2L472.9 146.4L473.3 146.5L473.8 146.7L474.3 147.2L474.7 147.6L475.2 148.0L475.6 148.3L476.1 149.4L476.6 150.5L477.0 151.6L477.5 152.6L477.9 152.2L478.4 151.7L478.9 151.0L479.3 150.8L479.8 151.3L480.3 151.8L480.7 152.3L481.2 152.7L481.6 153.1L482.1 153.5L482.6 153.9L483.0 153.3L483.5 152.3L484.0 151.3L484.4 150.3L484.9 150.0L485.3 149.8L485.8 149.6L486.3 149.4L486.7 150.4L487.2 151.4L487.7 152.3L488.1 153.1L488.6 153.0L489.0 152.9L489.5 152.8L490.0 152.6L490.4 152.5L490.9 152.3L491.4 152.2L491.8 152.1L492.3 152.2L492.7 152.3L493.2 152.3L493.7 152.0L494.1 151.5L494.6 151.1L495.0 150.6L495.5 150.1L496.0 149.7L496.4 149.3L496.9 148.9L497.4 149.3L497.8 149.7L498.3 150.1L498.7 150.4L499.2 149.9L499.7 149.4L500.1 149.0L500.6 148.5L501.1 148.1L501.5 147.7L502.0 147.3L502.4 147.4L502.9 148.2L503.4 149.0L503.8 149.7L504.3 149.8L504.8 149.4L505.2 149.0L505.7 148.5L506.1 148.4L506.6 148.4L507.1 148.4L507.5 148.4L508.0 147.6L508.5 146.8L508.9 145.9L509.4 145.1L509.8 144.9L510.3 144.7L510.8 144.1L511.2 143.2L511.7 142.1L512.1 140.9L512.6 140.0L513.1 139.3L513.5 139.0L514.0 139.1L514.5 139.3L514.9 139.8L515.4 140.4L515.8 141.1L516.3 141.9L516.8 142.5L517.2 143.0L517.7 143.6L518.2 144.2L518.6 145.0L519.1 145.8L519.5 146.5L520.0 147.2L520.5 147.8L520.9 148.4L521.4 149.1L521.9 149.8L522.3 150.8L522.8 151.9L523.2 153.0L523.7 153.5L524.2 152.8L524.6 151.9L525.1 150.6L525.5 150.4L526.0 151.5L526.5 152.5L526.9 153.5L527.4 153.6L527.9 153.3L528.3 152.9L528.8 152.6L529.2 152.6L529.7 152.7L530.2 152.7L530.6 152.8L531.1 152.2L531.6 151.6L532.0 151.0L532.5 150.5L532.9 150.9L533.4 151.3L533.9 151.7L534.3 152.2L534.8 152.6L535.3 153.1L535.7 153.6L536.2 153.6L536.6 153.3L537.1 152.9L537.6 152.5L538.0 152.4L538.5 152.4L539.0 152.4L539.4 152.4L539.9 152.3L540.3 152.0L540.8 151.8L541.3 151.5L541.7 151.9L542.2 152.4L542.6 152.9L543.1 153.2L543.6 152.5L544.0 151.9L544.5 151.2L545.0 150.5L545.4 149.4L545.9 148.4L546.3 147.3L546.8 147.0L547.3 147.5L547.7 148.0L548.2 148.5L548.7 148.3L549.1 147.6L549.6 147.0L550.0 146.3L550.5 145.6L551.0 144.9L551.4 144.2L551.9 143.5L552.4 144.3L552.8 145.3L553.3 146.2L553.7 147.1L554.2 147.6L554.7 148.1L555.1 148.6L555.6 148.8L556.1 147.8L556.5 146.8L557.0 145.8L557.4 144.5L557.9 143.0L558.4 141.6L558.8 140.3L559.3 139.5L559.7 139.0L560.2 139.0L560.7 139.2L561.1 139.7L561.6 140.4L562.1 141.2L562.5 142.0L563.0 142.6L563.4 143.2L563.9 143.7L564.4 144.3L564.8 145.0L565.3 145.6L565.8 146.2L566.2 146.7L566.7 147.3L567.1 147.9L567.6 148.5L568.1 149.1L568.5 149.7L569.0 150.3L569.5 150.8L569.9 151.4L570.4 152.1L570.8 152.6L571.3 153.1L571.8 153.3L572.2 153.3L572.7 153.3L573.2 153.3L573.6 153.2L574.1 153.2L574.5 153.1L575.0 153.0L575.5 152.5L575.9 152.0L576.4 151.5L576.8 151.2L577.3 151.9L577.8 152.5L578.2 153.2L578.7 153.5L579.2 152.9L579.6 152.4L580.1 151.9L580.5 152.0L581.0 152.7L581.5 153.4L581.9 154.1L582.4 153.8L582.9 152.7L583.3 151.7L583.8 150.7L584.2 150.8L584.7 151.3L585.2 151.7L585.6 152.1L586.1 152.1L586.6 152.1L587.0 152.1L587.5 151.9L587.9 151.3L588.4 150.6L588.9 149.9L589.3 149.7L589.8 150.8L590.3 151.9L590.7 153.0L591.2 153.6L591.6 153.3L592.1 153.1L592.6 152.8L593.0 152.2L593.5 151.2L593.9 150.3L594.4 149.4L594.9 149.4L595.3 149.8L595.8 150.2L596.3 150.6L596.7 150.3L597.2 150.0L597.6 149.7L598.1 149.3L598.6 147.9L599.0 146.4L599.5 145.0L600.0 144.1L600.4 145.1L600.9 146.0L601.3 146.9L601.8 147.3L602.3 146.8L602.7 146.3L603.2 145.8L603.7 145.0L604.1 144.1L604.6 143.0L605.0 141.9L605.5 140.7L606.0 139.7L606.4 139.2L606.9 139.1L607.4 139.3L607.8 139.8L608.3 140.3L608.7 141.0L609.2 141.6L609.7 142.3L610.1 143.0L610.6 143.8L611.0 144.7L611.5 145.6L612.0 146.4L612.4 147.1L612.9 147.5L613.4 147.9L613.8 148.4L614.3 149.0L614.7 149.5L615.2 150.1L615.7 150.5L616.1 151.3L616.6 152.2L617.1 153.2L617.5 154.0L618.0 153.7L618.4 153.0L618.9 152.2L619.4 151.5L619.8 151.6L620.3 151.7L620.8 151.9L621.2 151.9L621.7 151.4L622.1 150.8L622.6 150.2L623.1 150.3L623.5 151.7L624.0 153.1L624.5 154.6L624.9 155.2L625.4 154.9L625.8 154.7L626.3 154.4L626.8 154.3L627.2 154.2L627.7 154.2L628.1 154.1L628.6 154.0L629.1 153.9L629.5 153.8L630.0 153.6L630.5 153.4L630.9 153.1L631.4 152.8L631.8 152.6L632.3 152.6L632.8 152.5L633.2 152.5L633.7 152.4L634.2 152.0L634.6 151.7L635.1 151.4L635.5 151.1L636.0 151.0L636.5 150.9L636.9 150.8L637.4 150.7L637.9 150.6L638.3 150.6L638.8 150.6L639.2 150.9L639.7 151.4L640.2 151.9L640.6 152.3L641.1 151.9L641.6 151.4L642.0 150.9L642.5 150.3L642.9 150.0L643.4 149.6L643.9 149.1L644.3 148.7L644.8 148.3L645.2 147.9L645.7 147.5L646.2 147.2L646.6 146.9L647.1 146.7L647.6 146.4L648.0 146.6L648.5 147.2L648.9 147.7L649.4 148.0L649.9 147.3L650.3 146.0L650.8 144.5L651.3 142.9L651.7 141.7L652.2 140.6L652.6 139.9L653.1 139.6L653.6 139.7L654.0 139.9L654.5 140.2L655.0 140.6L655.4 141.1L655.9 141.6L656.3 142.2L656.8 142.9L657.3 143.7L657.7 144.6L658.2 145.4L658.7 146.2L659.1 146.8L659.6 147.5L660.0 148.3L660.5 148.9L661.0 149.3L661.4 149.7L661.9 149.9L662.3 150.4L662.8 150.8L663.3 151.2L663.7 151.5L664.2 151.7L664.7 151.8L665.1 151.9L665.6 152.0L666.0 152.2L666.5 152.4L667.0 152.6L667.4 152.6L667.9 151.9L668.4 151.2L668.8 150.6L669.3 150.5L669.7 151.0L670.2 151.6L670.7 152.2L671.1 152.3L671.6 152.0L672.1 151.7L672.5 151.5L673.0 151.9L673.4 152.7L673.9 153.4L674.4 154.1L674.8 153.4L675.3 152.7L675.8 152.0L676.2 151.4L676.7 151.9L677.1 152.4L677.6 153.0L678.1 153.4L678.5 153.8L679.0 154.1L679.4 154.4L679.9 154.3L680.4 153.4L680.8 152.5L681.3 151.6L681.8 151.1L682.2 150.8L682.7 150.5L683.1 150.2L683.6 150.3L684.1 150.5L684.5 150.7L685.0 150.8L685.5 150.7L685.9 150.5L686.4 150.3L686.8 150.0L687.3 149.5L687.8 149.0L688.2 148.4L688.7 148.1L689.2 148.6L689.6 149.0L690.1 149.5L690.5 149.9L691.0 150.4L691.5 150.9L691.9 151.3L692.4 151.0L692.9 149.8L693.3 148.6L693.8 147.4L694.2 146.9L694.7 146.6L695.2 146.3L695.6 146.0L696.1 145.3L696.5 144.4L697.0 143.2L697.5 141.9L697.9 141.3L698.4 140.6L698.9 140.1L699.3 139.8L699.8 139.5L700.2 139.5L700.7 139.6L701.2 139.9L701.6 140.4L702.1 141.0L702.6 141.7L703.0 142.6L703.5 143.7L703.9 144.7L704.4 145.8L704.9 146.3L705.3 146.6L705.8 146.8L706.3 147.1L706.7 147.8L707.2 148.7L707.6 149.8L708.1 150.9L708.6 151.7L709.0 152.4L709.5 153.1L710.0 153.7L710.4 153.6L710.9 153.3L711.3 153.0L711.8 152.7L712.3 152.9L712.7 153.1L713.2 153.3L713.6 153.7L714.1 154.3L714.6 155.0L715.0 155.6L715.5 155.3L716.0 154.5L716.4 153.6L716.9 152.7L717.3 152.4L717.8 152.2L718.3 152.0L718.7 151.8L719.2 151.5L719.7 151.2L720.1 150.9L720.6 150.6L721.0 151.1L721.5 151.7L722.0 152.2L722.4 152.8L722.9 153.4L723.4 153.9L723.8 154.5L724.3 154.7L724.7 154.5L725.2 154.2L725.7 153.9L726.1 153.3L726.6 152.4L727.1 151.5L727.5 150.6L728.0 150.2L728.4 150.1L728.9 150.0L729.4 149.9L729.8 149.9L730.3 149.9L730.7 149.9L731.2 149.9L731.7 150.0L732.1 150.2L732.6 150.4L733.1 150.5L733.5 150.2L734.0 149.9L734.4 149.6L734.9 149.4L735.4 149.4L735.8 149.4L736.3 149.5L736.8 149.4L737.2 149.3L737.7 149.1L738.1 149.0L738.6 148.6L739.1 148.2L739.5 147.7L740.0 147.2L740.5 147.0L740.9 146.9L741.4 146.7L741.8 146.4L742.3 146.1L742.8 145.7L743.2 144.9L743.7 143.9L744.2 142.6L744.6 141.4L745.1 140.4L745.5 139.8L746.0 139.7L746.5 139.8L746.9 140.2L747.4 140.7L747.8 141.4L748.3 142.1L748.8 143.0L749.2 143.6L749.7 144.1L750.2 144.7L750.6 145.2L751.1 145.7L751.5 146.3L752.0 146.7L752.5 147.2L752.9 147.6L753.4 147.9L753.9 148.1L754.3 148.2L754.8 149.2L755.2 150.1L755.7 151.2L756.2 151.8L756.6 151.3L757.1 150.6L757.6 149.6L758.0 149.2L758.5 149.5L758.9 149.8L759.4 150.1L759.9 150.8L760.3 151.8L760.8 152.8L761.3 153.8L761.7 154.0L762.2 154.0L762.6 154.0L763.1 153.9L763.6 153.6L764.0 153.3L764.5 152.9L764.9 152.5L765.4 151.8L765.9 151.2L766.3 150.5L766.8 150.1L767.3 150.6L767.7 151.2L768.2 151.7L768.6 152.0L769.1 151.8L769.6 151.6L770.0 151.5L770.5 151.7L771.0 152.2L771.4 152.7L771.9 153.2L772.3 153.7L772.8 154.3L773.3 154.9L773.7 155.4L774.2 154.7L774.7 153.7L775.1 152.7L775.6 151.7L776.0 151.1L776.5 150.5L777.0 150.0L777.4 149.5L777.9 149.1L778.4 148.8L778.8 148.6L779.3 148.5L779.7 148.8L780.2 149.2L780.7 149.5L781.1 149.6L781.6 149.4L782.0 149.2L782.5 149.0L783.0 148.6L783.4 148.0L783.9 147.4L784.4 146.9L784.8 147.0L785.3 147.4L785.7 147.7L786.2 148.0L786.7 147.2L787.1 146.4L787.6 145.6L788.1 145.0L788.5 145.6L789.0 146.0L789.4 146.1L789.9 145.5L790.4 144.3L790.8 143.0L791.3 141.8L791.8 140.9L792.2 140.3L792.7 140.2L793.1 140.4L793.6 140.6L794.1 140.8L794.5 141.0L795.0 141.4L795.5 142.1L795.9 143.0L796.4 143.8L796.8 144.7L797.3 145.3L797.8 145.9L798.2 146.4L798.7 146.8L799.1 147.3L799.6 147.9L800.1 148.4L800.5 149.0L801.0 149.5L801.5 150.1L801.9 150.6L802.4 150.8L802.8 150.8L803.3 150.6L803.8 150.2L804.2 150.0L804.7 150.1L805.2 150.1L805.6 150.1L806.1 150.9L806.5 151.8L807.0 152.8L807.5 153.8L807.9 153.6L808.4 153.2L808.9 152.8L809.3 152.5L809.8 152.7L810.2 152.8L810.7 153.0L811.2 153.2L811.6 153.5L812.1 153.8L812.6 154.1L813.0 153.9L813.5 152.7L813.9 151.6L814.4 150.4L814.9 150.1L815.3 150.4L815.8 150.8L816.2 151.1L816.7 151.5L817.2 151.9L817.6 152.2L818.1 152.6L818.6 152.6L819.0 152.6L819.5 152.6L819.9 152.6L820.4 152.1L820.9 151.7L821.3 151.2L821.8 150.9L822.3 151.4L822.7 151.8L823.2 152.2L823.6 152.3L824.1 151.9L824.6 151.4L825.0 150.9L825.5 150.3L826.0 149.6L826.4 148.9L826.9 148.2L827.3 147.9L827.8 147.9L828.3 147.9L828.7 147.8L829.2 148.3L829.6 148.9L830.1 149.4L830.6 150.0L831.0 149.7L831.5 149.4L832.0 149.0L832.4 148.6L832.9 147.3L833.3 146.1L833.8 144.8L834.3 144.2L834.7 145.3L835.2 146.2L835.7 146.8L836.1 146.3L836.6 144.9L837.0 143.5L837.5 142.1L838.0 141.1L838.4 140.5L838.9 140.2L839.4 140.4L839.8 140.5L840.3 140.6L840.7 140.8L841.2 141.1L841.7 141.7L842.1 142.4L842.6 143.1L843.1 143.9L843.5 144.5L844.0 145.0L844.4 145.5L844.9 146.1L845.4 147.2L845.8 148.3L846.3 149.6L846.7 150.6L847.2 150.9L847.7 150.9L848.1 150.8L848.6 151.2L849.1 152.2L849.5 153.2" stroke="#9fe806"/>
<path d="M183.9 55.5V200.5" stroke="#1f5357" stroke-width="0.9" stroke-dasharray="2.57 1.11"/>
</g>
<path d="M110.0 200.5v4.8M257.9 200.5v4.8M405.8 200.5v4.8M553.7 200.5v4.8M701.6 200.5v4.8M849.5 200.5v4.8M73.0 181.5h-4.9M73.0 118.5h-4.9M73.0 55.5h-4.9" stroke="#000" stroke-width="1.1" fill="none"/>
<path d="M73.0 200.5h-2.9M73.0 195.5h-2.9M73.0 191.3h-2.9M73.0 187.6h-2.9M73.0 184.4h-2.9M73.0 162.6h-2.9M73.0 151.5h-2.9M73.0 143.6h-2.9M73.0 137.5h-2.9M73.0 132.5h-2.9M73.0 128.3h-2.9M73.0 124.6h-2.9M73.0 121.4h-2.9M73.0 99.5h-2.9M73.0 88.4h-2.9M73.0 80.6h-2.9M73.0 74.5h-2.9M73.0 69.5h-2.9M73.0 65.3h-2.9M73.0 61.6h-2.9M73.0 58.4h-2.9" stroke="#000" stroke-width="0.85" fill="none"/>
<rect x="73.0" y="55.5" width="813.5" height="145.0" fill="none" stroke="#262626" stroke-width="1.1"/>
<g clip-path="url(#c1)" fill="none" stroke-width="2.1" stroke-linejoin="round" stroke-linecap="butt">
<path d="M111.3 434.5L111.5 411.2L111.5 392.5L111.6 382.1L111.7 375.0L111.8 369.7L111.9 365.6L111.9 365.6L112.0 362.2L112.1 359.4L112.2 357.0L112.3 354.9L112.4 353.1L112.4 353.1L112.5 351.5L112.6 350.2L112.7 348.9L112.8 347.8L112.8 346.9L112.8 346.9L112.9 346.0L113.0 345.2L113.1 344.5L113.2 343.8L113.3 343.2L113.3 343.2L113.4 342.7L113.5 342.2L113.6 341.8L113.7 341.4L113.8 341.0L113.8 341.0L113.9 340.7L114.0 340.4L114.0 340.2L114.1 340.0L114.2 339.8L114.2 339.8L114.3 339.6L114.4 339.4L114.7 339.1L115.2 338.8L115.6 338.9L116.1 339.2L116.5 339.7L117.0 340.4L117.5 341.3L117.9 342.4L118.4 343.5L118.9 344.8L119.3 346.3L119.8 347.8L120.2 349.4L120.7 351.1L121.2 352.9L121.6 354.7L122.1 356.6L122.5 358.4L123.0 360.4L123.5 362.2L123.9 364.1L124.4 365.9L124.9 367.6L125.3 369.1L125.8 370.4L126.2 371.3L126.7 371.6L127.2 371.5L127.6 370.9L128.1 369.9L128.6 368.5L129.0 367.0L129.5 365.3L129.9 363.5L130.4 361.6L130.9 359.7L131.3 357.8L131.8 355.8L132.3 353.9L132.7 352.1L133.2 350.2L133.6 348.4L134.1 346.7L134.6 345.1L135.0 343.5L135.5 342.0L136.0 340.7L136.4 339.4L136.9 338.2L137.3 337.2L137.8 336.3L138.3 335.5L138.7 334.8L139.2 334.3L139.6 333.9L140.1 333.6L140.6 333.5L141.0 333.5L141.5 333.7L142.0 334.0L142.4 334.5L142.9 335.1L143.3 335.9L143.8 336.8L144.3 337.8L144.7 339.0L145.2 340.2L145.7 341.6L146.1 343.0L146.6 344.5L147.0 346.0L147.5 347.6L148.0 349.2L148.4 350.8L148.9 352.4L149.4 353.8L149.8 355.2L150.3 356.4L150.7 357.4L151.2 357.9L151.7 358.0L152.1 357.7L152.6 356.9L153.1 355.8L153.5 354.6L154.0 353.2L154.4 351.8L154.9 350.4L155.4 349.0L155.8 347.6L156.3 346.3L156.7 345.1L157.2 344.0L157.7 342.9L158.1 342.0L158.6 341.3L159.1 340.6L159.5 340.1L160.0 339.8L160.4 339.6L160.9 339.6L161.4 339.7L161.8 340.0L162.3 340.3L162.8 340.8L163.2 341.4L163.7 342.1L164.1 343.0L164.6 343.9L165.1 345.0L165.5 346.1L166.0 347.3L166.5 348.6L166.9 350.0L167.4 351.4L167.8 352.9L168.3 354.4L168.8 356.0L169.2 357.5L169.7 359.1L170.2 360.7L170.6 362.2L171.1 363.6L171.5 365.0L172.0 366.1L172.5 367.1L172.9 367.6L173.4 367.7L173.8 367.4L174.3 366.7L174.8 365.6L175.2 364.3L175.7 362.8L176.2 361.3L176.6 359.6L177.1 357.9L177.5 356.2L178.0 354.5L178.5 352.8L178.9 351.1L179.4 349.4L179.9 347.8L180.3 346.2L180.8 344.7L181.2 343.2L181.7 341.9L182.2 340.6L182.6 339.4L183.1 338.3L183.6 337.3L184.0 336.4L184.5 335.7L184.9 335.0L185.4 334.4L185.9 334.0L186.3 333.7L186.8 333.6L187.3 333.5L187.7 333.6L188.2 333.8L188.6 334.2L189.1 334.8L189.6 335.5L190.0 336.3L190.5 337.3L190.9 338.3L191.4 339.5L191.9 340.8L192.3 342.2L192.8 343.7L193.3 345.2L193.7 346.8L194.2 348.3L194.6 349.9L195.1 351.5L195.6 353.0L196.0 354.5L196.5 355.8L197.0 356.9L197.4 357.7L197.9 358.0L198.3 357.9L198.8 357.3L199.3 356.4L199.7 355.2L200.2 353.9L200.7 352.6L201.1 351.2L201.6 349.8L202.0 348.4L202.5 347.0L203.0 345.8L203.4 344.6L203.9 343.5L204.4 342.5L204.8 341.7L205.3 340.9L205.7 340.4L206.2 340.0L206.7 339.7L207.1 339.6L207.6 339.6L208.0 339.8L208.5 340.1L209.0 340.5L209.4 341.0L209.9 341.7L210.4 342.4L210.8 343.2L211.3 344.2L211.7 345.2L212.2 346.3L212.7 347.5L213.1 348.8L213.6 350.2L214.1 351.6L214.5 353.0L215.0 354.5L215.4 356.0L215.9 357.5L216.4 359.0L216.8 360.5L217.3 361.9L217.8 363.2L218.2 364.4L218.7 365.5L219.1 366.2L219.6 366.5L220.1 366.4L220.5 366.0L221.0 365.1L221.4 364.0L221.9 362.6L222.4 361.1L222.8 359.6L223.3 358.0L223.8 356.3L224.2 354.7L224.7 353.0L225.1 351.3L225.6 349.7L226.1 348.1L226.5 346.6L227.0 345.1L227.5 343.6L227.9 342.3L228.4 341.0L228.8 339.8L229.3 338.7L229.8 337.7L230.2 336.8L230.7 336.0L231.2 335.3L231.6 334.7L232.1 334.2L232.5 333.9L233.0 333.6L233.5 333.5L233.9 333.5L234.4 333.7L234.9 334.0L235.3 334.5L235.8 335.1L236.2 335.8L236.7 336.7L237.2 337.7L237.6 338.9L238.1 340.1L238.5 341.5L239.0 342.9L239.5 344.4L239.9 345.9L240.4 347.5L240.9 349.1L241.3 350.7L241.8 352.2L242.2 353.7L242.7 355.1L243.2 356.3L243.6 357.3L244.1 357.9L244.6 358.0L245.0 357.7L245.5 357.0L245.9 355.9L246.4 354.7L246.9 353.3L247.3 351.9L247.8 350.5L248.3 349.1L248.7 347.8L249.2 346.4L249.6 345.2L250.1 344.1L250.6 343.0L251.0 342.1L251.5 341.3L252.0 340.7L252.4 340.2L252.9 339.8L253.3 339.6L253.8 339.6L254.3 339.7L254.7 339.9L255.2 340.3L255.6 340.7L256.1 341.3L256.6 341.9L257.0 342.7L257.5 343.6L258.0 344.6L258.4 345.6L258.9 346.8L259.3 348.0L259.8 349.3L260.3 350.7L260.7 352.1L261.2 353.5L261.7 355.0L262.1 356.4L262.6 357.9L263.0 359.4L263.5 360.8L264.0 362.2L264.4 363.5L264.9 364.6L265.4 365.5L265.8 366.0L266.3 366.2L266.7 365.9L267.2 365.3L267.7 364.3L268.1 363.0L268.6 361.6L269.1 360.1L269.5 358.6L270.0 357.0L270.4 355.3L270.9 353.7L271.4 352.0L271.8 350.4L272.3 348.8L272.7 347.2L273.2 345.7L273.7 344.3L274.1 342.9L274.6 341.6L275.1 340.4L275.5 339.2L276.0 338.2L276.4 337.2L276.9 336.4L277.4 335.6L277.8 335.0L278.3 334.4L278.8 334.0L279.2 333.7L279.7 333.6L280.1 333.5L280.6 333.6L281.1 333.8L281.5 334.2L282.0 334.7L282.5 335.4L282.9 336.2L283.4 337.2L283.8 338.2L284.3 339.4L284.8 340.7L285.2 342.1L285.7 343.6L286.2 345.1L286.6 346.6L287.1 348.2L287.5 349.8L288.0 351.4L288.5 352.9L288.9 354.4L289.4 355.7L289.8 356.8L290.3 357.6L290.8 358.0L291.2 357.9L291.7 357.4L292.2 356.5L292.6 355.3L293.1 354.1L293.5 352.7L294.0 351.3L294.5 349.9L294.9 348.5L295.4 347.1L295.9 345.9L296.3 344.7L296.8 343.6L297.2 342.6L297.7 341.7L298.2 341.0L298.6 340.4L299.1 340.0L299.6 339.7L300.0 339.6L300.5 339.6L300.9 339.8L301.4 340.1L301.9 340.5L302.3 341.0L302.8 341.6L303.3 342.3L303.7 343.1L304.2 344.0L304.6 345.0L305.1 346.1L305.6 347.3L306.0 348.6L306.5 349.9L306.9 351.2L307.4 352.7L307.9 354.1L308.3 355.6L308.8 357.1L309.3 358.5L309.7 360.0L310.2 361.4L310.6 362.7L311.1 363.9L311.6 364.9L312.0 365.7L312.5 366.0L313.0 366.0L313.4 365.6L313.9 364.7L314.3 363.6L314.8 362.3L315.3 360.9L315.7 359.3L316.2 357.8L316.7 356.1L317.1 354.5L317.6 352.8L318.0 351.2L318.5 349.6L319.0 348.0L319.4 346.5L319.9 345.0L320.4 343.6L320.8 342.3L321.3 341.0L321.7 339.8L322.2 338.7L322.7 337.7L323.1 336.8L323.6 336.0L324.0 335.3L324.5 334.7L325.0 334.2L325.4 333.9L325.9 333.6L326.4 333.5L326.8 333.5L327.3 333.7L327.7 334.0L328.2 334.4L328.7 335.0L329.1 335.8L329.6 336.6L330.1 337.7L330.5 338.8L331.0 340.0L331.4 341.3L331.9 342.8L332.4 344.2L332.8 345.8L333.3 347.4L333.8 349.0L334.2 350.5L334.7 352.1L335.1 353.6L335.6 355.0L336.1 356.3L336.5 357.3L337.0 357.9L337.5 358.0L337.9 357.8L338.4 357.0L338.8 356.0L339.3 354.8L339.8 353.4L340.2 352.0L340.7 350.6L341.1 349.2L341.6 347.9L342.1 346.5L342.5 345.3L343.0 344.1L343.5 343.1L343.9 342.2L344.4 341.4L344.8 340.7L345.3 340.2L345.8 339.8L346.2 339.6L346.7 339.6L347.2 339.7L347.6 339.9L348.1 340.2L348.5 340.7L349.0 341.2L349.5 341.9L349.9 342.6L350.4 343.5L350.9 344.5L351.3 345.5L351.8 346.7L352.2 347.9L352.7 349.1L353.2 350.5L353.6 351.9L354.1 353.3L354.6 354.8L355.0 356.2L355.5 357.7L355.9 359.2L356.4 360.6L356.9 362.0L357.3 363.3L357.8 364.4L358.2 365.3L358.7 365.9L359.2 366.0L359.6 365.8L360.1 365.2L360.6 364.2L361.0 363.0L361.5 361.6L361.9 360.2L362.4 358.6L362.9 357.0L363.3 355.4L363.8 353.7L364.3 352.1L364.7 350.5L365.2 348.9L365.6 347.3L366.1 345.8L366.6 344.4L367.0 343.0L367.5 341.7L368.0 340.4L368.4 339.3L368.9 338.2L369.3 337.3L369.8 336.4L370.3 335.7L370.7 335.0L371.2 334.5L371.7 334.1L372.1 333.8L372.6 333.6L373.0 333.5L373.5 333.6L374.0 333.8L374.4 334.2L374.9 334.7L375.3 335.4L375.8 336.2L376.3 337.1L376.7 338.2L377.2 339.3L377.7 340.6L378.1 342.0L378.6 343.4L379.0 344.9L379.5 346.5L380.0 348.1L380.4 349.7L380.9 351.3L381.4 352.8L381.8 354.3L382.3 355.6L382.7 356.8L383.2 357.6L383.7 358.0L384.1 357.9L384.6 357.5L385.1 356.6L385.5 355.4L386.0 354.2L386.4 352.8L386.9 351.4L387.4 350.0L387.8 348.6L388.3 347.3L388.8 346.0L389.2 344.8L389.7 343.7L390.1 342.7L390.6 341.8L391.1 341.0L391.5 340.5L392.0 340.0L392.4 339.7L392.9 339.6L393.4 339.6L393.8 339.8L394.3 340.0L394.8 340.4L395.2 340.9L395.7 341.5L396.1 342.2L396.6 343.0L397.1 343.9L397.5 344.9L398.0 346.0L398.5 347.2L398.9 348.4L399.4 349.8L399.8 351.1L400.3 352.5L400.8 354.0L401.2 355.4L401.7 356.9L402.2 358.4L402.6 359.8L403.1 361.2L403.5 362.6L404.0 363.8L404.5 364.8L404.9 365.6L405.4 366.0L405.9 366.0L406.3 365.6L406.8 364.8L407.2 363.7L407.7 362.4L408.2 361.0L408.6 359.4L409.1 357.9L409.5 356.2L410.0 354.6L410.5 353.0L410.9 351.3L411.4 349.7L411.9 348.1L412.3 346.6L412.8 345.1L413.2 343.7L413.7 342.4L414.2 341.1L414.6 339.9L415.1 338.8L415.6 337.8L416.0 336.9L416.5 336.1L416.9 335.3L417.4 334.8L417.9 334.3L418.3 333.9L418.8 333.7L419.3 333.5L419.7 333.5L420.2 333.6L420.6 333.9L421.1 334.4L421.6 335.0L422.0 335.7L422.5 336.6L423.0 337.6L423.4 338.7L423.9 339.9L424.3 341.2L424.8 342.6L425.3 344.1L425.7 345.7L426.2 347.2L426.6 348.8L427.1 350.4L427.6 352.0L428.0 353.5L428.5 354.9L429.0 356.2L429.4 357.2L429.9 357.8L430.3 358.0L430.8 357.8L431.3 357.1L431.7 356.1L432.2 354.9L432.7 353.5L433.1 352.2L433.6 350.8L434.0 349.3L434.5 348.0L435.0 346.7L435.4 345.4L435.9 344.2L436.4 343.2L436.8 342.2L437.3 341.4L437.7 340.8L438.2 340.2L438.7 339.9L439.1 339.7L439.6 339.6L440.1 339.7L440.5 339.9L441.0 340.2L441.4 340.6L441.9 341.2L442.4 341.8L442.8 342.6L443.3 343.4L443.7 344.4L444.2 345.4L444.7 346.6L445.1 347.8L445.6 349.0L446.1 350.4L446.5 351.8L447.0 353.2L447.4 354.6L447.9 356.1L448.4 357.6L448.8 359.0L449.3 360.5L449.8 361.9L450.2 363.1L450.7 364.3L451.1 365.2L451.6 365.8L452.1 366.0L452.5 365.8L453.0 365.3L453.5 364.3L453.9 363.1L454.4 361.7L454.8 360.3L455.3 358.7L455.8 357.1L456.2 355.5L456.7 353.8L457.2 352.2L457.6 350.6L458.1 349.0L458.5 347.4L459.0 345.9L459.5 344.5L459.9 343.1L460.4 341.8L460.8 340.5L461.3 339.4L461.8 338.3L462.2 337.3L462.7 336.5L463.2 335.7L463.6 335.1L464.1 334.5L464.5 334.1L465.0 333.8L465.5 333.6L465.9 333.5L466.4 333.6L466.9 333.8L467.3 334.1L467.8 334.6L468.2 335.3L468.7 336.1L469.2 337.0L469.6 338.1L470.1 339.2L470.6 340.5L471.0 341.9L471.5 343.3L471.9 344.8L472.4 346.4L472.9 348.0L473.3 349.6L473.8 351.1L474.3 352.7L474.7 354.2L475.2 355.5L475.6 356.7L476.1 357.5L476.6 358.0L477.0 358.0L477.5 357.5L477.9 356.7L478.4 355.5L478.9 354.3L479.3 352.9L479.8 351.5L480.3 350.1L480.7 348.7L481.2 347.4L481.6 346.1L482.1 344.9L482.6 343.7L483.0 342.7L483.5 341.9L484.0 341.1L484.4 340.5L484.9 340.0L485.3 339.7L485.8 339.6L486.3 339.6L486.7 339.8L487.2 340.0L487.7 340.4L488.1 340.9L488.6 341.5L489.0 342.2L489.5 343.0L490.0 343.9L490.4 344.9L490.9 345.9L491.4 347.1L491.8 348.3L492.3 349.6L492.7 351.0L493.2 352.4L493.7 353.8L494.1 355.3L494.6 356.8L495.0 358.3L495.5 359.7L496.0 361.1L496.4 362.5L496.9 363.7L497.4 364.8L497.8 365.5L498.3 366.0L498.7 366.0L499.2 365.6L499.7 364.9L500.1 363.8L500.6 362.5L501.1 361.1L501.5 359.6L502.0 358.0L502.4 356.4L502.9 354.7L503.4 353.1L503.8 351.5L504.3 349.8L504.8 348.3L505.2 346.7L505.7 345.2L506.1 343.8L506.6 342.5L507.1 341.2L507.5 340.0L508.0 338.9L508.5 337.9L508.9 336.9L509.4 336.1L509.8 335.4L510.3 334.8L510.8 334.3L511.2 333.9L511.7 333.7L512.1 333.5L512.6 333.5L513.1 333.6L513.5 333.9L514.0 334.3L514.5 334.9L514.9 335.6L515.4 336.5L515.8 337.5L516.3 338.6L516.8 339.8L517.2 341.1L517.7 342.5L518.2 344.0L518.6 345.5L519.1 347.1L519.5 348.7L520.0 350.3L520.5 351.9L520.9 353.4L521.4 354.8L521.9 356.1L522.3 357.1L522.8 357.8L523.2 358.0L523.7 357.8L524.2 357.2L524.6 356.2L525.1 355.0L525.5 353.7L526.0 352.3L526.5 350.9L526.9 349.5L527.4 348.1L527.9 346.8L528.3 345.5L528.8 344.3L529.2 343.3L529.7 342.3L530.2 341.5L530.6 340.8L531.1 340.3L531.6 339.9L532.0 339.7L532.5 339.6L532.9 339.7L533.4 339.9L533.9 340.2L534.3 340.6L534.8 341.1L535.3 341.8L535.7 342.5L536.2 343.4L536.6 344.3L537.1 345.3L537.6 346.5L538.0 347.7L538.5 348.9L539.0 350.3L539.4 351.6L539.9 353.1L540.3 354.5L540.8 356.0L541.3 357.5L541.7 358.9L542.2 360.4L542.6 361.7L543.1 363.0L543.6 364.2L544.0 365.2L544.5 365.8L545.0 366.0L545.4 365.9L545.9 365.3L546.3 364.4L546.8 363.2L547.3 361.9L547.7 360.4L548.2 358.8L548.7 357.2L549.1 355.6L549.6 354.0L550.0 352.3L550.5 350.7L551.0 349.1L551.4 347.6L551.9 346.0L552.4 344.6L552.8 343.2L553.3 341.9L553.7 340.6L554.2 339.5L554.7 338.4L555.1 337.4L555.6 336.5L556.1 335.8L556.5 335.1L557.0 334.6L557.4 334.1L557.9 333.8L558.4 333.6L558.8 333.5L559.3 333.5L559.7 333.7L560.2 334.1L560.7 334.6L561.1 335.2L561.6 336.0L562.1 336.9L562.5 338.0L563.0 339.1L563.4 340.4L563.9 341.8L564.4 343.2L564.8 344.7L565.3 346.2L565.8 347.8L566.2 349.4L566.7 351.0L567.1 352.6L567.6 354.0L568.1 355.4L568.5 356.6L569.0 357.5L569.5 357.9L569.9 358.0L570.4 357.6L570.8 356.7L571.3 355.6L571.8 354.4L572.2 353.0L572.7 351.6L573.2 350.2L573.6 348.8L574.1 347.5L574.5 346.2L575.0 344.9L575.5 343.8L575.9 342.8L576.4 341.9L576.8 341.2L577.3 340.5L577.8 340.1L578.2 339.8L578.7 339.6L579.2 339.6L579.6 339.7L580.1 340.0L580.5 340.3L581.0 340.8L581.5 341.4L581.9 342.1L582.4 342.9L582.9 343.8L583.3 344.8L583.8 345.8L584.2 347.0L584.7 348.2L585.2 349.5L585.6 350.9L586.1 352.3L586.6 353.7L587.0 355.2L587.5 356.7L587.9 358.1L588.4 359.6L588.9 361.0L589.3 362.4L589.8 363.6L590.3 364.7L590.7 365.5L591.2 365.9L591.6 366.0L592.1 365.7L592.6 364.9L593.0 363.9L593.5 362.6L593.9 361.2L594.4 359.7L594.9 358.1L595.3 356.5L595.8 354.9L596.3 353.2L596.7 351.6L597.2 350.0L597.6 348.4L598.1 346.9L598.6 345.4L599.0 343.9L599.5 342.6L600.0 341.3L600.4 340.1L600.9 339.0L601.3 337.9L601.8 337.0L602.3 336.2L602.7 335.5L603.2 334.8L603.7 334.3L604.1 334.0L604.6 333.7L605.0 333.5L605.5 333.5L606.0 333.6L606.4 333.9L606.9 334.3L607.4 334.9L607.8 335.6L608.3 336.4L608.7 337.4L609.2 338.5L609.7 339.7L610.1 341.0L610.6 342.4L611.0 343.9L611.5 345.4L612.0 347.0L612.4 348.6L612.9 350.2L613.4 351.7L613.8 353.2L614.3 354.7L614.7 356.0L615.2 357.0L615.7 357.8L616.1 358.0L616.6 357.9L617.1 357.2L617.5 356.3L618.0 355.1L618.4 353.8L618.9 352.4L619.4 351.0L619.8 349.6L620.3 348.2L620.8 346.9L621.2 345.6L621.7 344.4L622.1 343.3L622.6 342.4L623.1 341.6L623.5 340.9L624.0 340.3L624.5 339.9L624.9 339.7L625.4 339.6L625.8 339.7L626.3 339.8L626.8 340.1L627.2 340.5L627.7 341.1L628.1 341.7L628.6 342.4L629.1 343.3L629.5 344.2L630.0 345.3L630.5 346.4L630.9 347.6L631.4 348.8L631.8 350.1L632.3 351.5L632.8 352.9L633.2 354.4L633.7 355.9L634.2 357.3L634.6 358.8L635.1 360.2L635.5 361.6L636.0 362.9L636.5 364.1L636.9 365.1L637.4 365.8L637.9 366.0L638.3 365.9L638.8 365.4L639.2 364.5L639.7 363.3L640.2 362.0L640.6 360.5L641.1 359.0L641.6 357.4L642.0 355.7L642.5 354.1L642.9 352.5L643.4 350.8L643.9 349.2L644.3 347.7L644.8 346.2L645.2 344.7L645.7 343.3L646.2 342.0L646.6 340.7L647.1 339.6L647.6 338.5L648.0 337.5L648.5 336.6L648.9 335.8L649.4 335.2L649.9 334.6L650.3 334.1L650.8 333.8L651.3 333.6L651.7 333.5L652.2 333.5L652.6 333.7L653.1 334.1L653.6 334.5L654.0 335.2L654.5 335.9L655.0 336.9L655.4 337.9L655.9 339.0L656.3 340.3L656.8 341.6L657.3 343.1L657.7 344.6L658.2 346.1L658.7 347.7L659.1 349.3L659.6 350.9L660.0 352.4L660.5 353.9L661.0 355.3L661.4 356.5L661.9 357.4L662.3 357.9L662.8 358.0L663.3 357.6L663.7 356.8L664.2 355.7L664.7 354.5L665.1 353.1L665.6 351.7L666.0 350.3L666.5 348.9L667.0 347.6L667.4 346.3L667.9 345.0L668.4 343.9L668.8 342.9L669.3 342.0L669.7 341.2L670.2 340.6L670.7 340.1L671.1 339.8L671.6 339.6L672.1 339.6L672.5 339.7L673.0 340.0L673.4 340.3L673.9 340.8L674.4 341.4L674.8 342.0L675.3 342.8L675.8 343.7L676.2 344.7L676.7 345.8L677.1 346.9L677.6 348.1L678.1 349.4L678.5 350.8L679.0 352.2L679.4 353.6L679.9 355.1L680.4 356.5L680.8 358.0L681.3 359.5L681.8 360.9L682.2 362.2L682.7 363.5L683.1 364.6L683.6 365.4L684.1 365.9L684.5 366.0L685.0 365.7L685.5 365.0L685.9 364.0L686.4 362.7L686.8 361.3L687.3 359.8L687.8 358.2L688.2 356.6L688.7 355.0L689.2 353.4L689.6 351.7L690.1 350.1L690.5 348.5L691.0 347.0L691.5 345.5L691.9 344.1L692.4 342.7L692.9 341.4L693.3 340.2L693.8 339.0L694.2 338.0L694.7 337.1L695.2 336.2L695.6 335.5L696.1 334.9L696.5 334.4L697.0 334.0L697.5 333.7L697.9 333.5L698.4 333.5L698.9 333.6L699.3 333.9L699.8 334.3L700.2 334.8L700.7 335.5L701.2 336.3L701.6 337.3L702.1 338.4L702.6 339.6L703.0 340.9L703.5 342.3L703.9 343.8L704.4 345.3L704.9 346.8L705.3 348.4L705.8 350.0L706.3 351.6L706.7 353.1L707.2 354.6L707.6 355.9L708.1 357.0L708.6 357.7L709.0 358.0L709.5 357.9L710.0 357.3L710.4 356.3L710.9 355.2L711.3 353.9L711.8 352.5L712.3 351.1L712.7 349.7L713.2 348.3L713.6 347.0L714.1 345.7L714.6 344.5L715.0 343.4L715.5 342.5L716.0 341.6L716.4 340.9L716.9 340.3L717.3 339.9L717.8 339.7L718.3 339.6L718.7 339.7L719.2 339.8L719.7 340.1L720.1 340.5L720.6 341.0L721.0 341.7L721.5 342.4L722.0 343.2L722.4 344.1L722.9 345.2L723.4 346.3L723.8 347.5L724.3 348.7L724.7 350.0L725.2 351.4L725.7 352.8L726.1 354.3L726.6 355.7L727.1 357.2L727.5 358.7L728.0 360.1L728.4 361.5L728.9 362.8L729.4 364.0L729.8 365.0L730.3 365.7L730.7 366.0L731.2 365.9L731.7 365.4L732.1 364.6L732.6 363.4L733.1 362.1L733.5 360.6L734.0 359.1L734.4 357.5L734.9 355.9L735.4 354.2L735.8 352.6L736.3 351.0L736.8 349.4L737.2 347.8L737.7 346.3L738.1 344.8L738.6 343.4L739.1 342.1L739.5 340.8L740.0 339.6L740.5 338.6L740.9 337.6L741.4 336.7L741.8 335.9L742.3 335.2L742.8 334.6L743.2 334.2L743.7 333.8L744.2 333.6L744.6 333.5L745.1 333.5L745.5 333.7L746.0 334.0L746.5 334.5L746.9 335.1L747.4 335.9L747.8 336.8L748.3 337.8L748.8 338.9L749.2 340.2L749.7 341.5L750.2 343.0L750.6 344.4L751.1 346.0L751.5 347.6L752.0 349.2L752.5 350.8L752.9 352.3L753.4 353.8L753.9 355.2L754.3 356.4L754.8 357.4L755.2 357.9L755.7 358.0L756.2 357.7L756.6 356.9L757.1 355.8L757.6 354.6L758.0 353.3L758.5 351.9L758.9 350.4L759.4 349.0L759.9 347.7L760.3 346.4L760.8 345.1L761.3 344.0L761.7 343.0L762.2 342.1L762.6 341.3L763.1 340.6L763.6 340.1L764.0 339.8L764.5 339.6L764.9 339.6L765.4 339.7L765.9 339.9L766.3 340.3L766.8 340.7L767.3 341.3L767.7 342.0L768.2 342.8L768.6 343.6L769.1 344.6L769.6 345.7L770.0 346.8L770.5 348.0L771.0 349.3L771.4 350.7L771.9 352.1L772.3 353.5L772.8 355.0L773.3 356.4L773.7 357.9L774.2 359.4L774.7 360.8L775.1 362.1L775.6 363.4L776.0 364.5L776.5 365.4L777.0 365.9L777.4 366.0L777.9 365.8L778.4 365.1L778.8 364.1L779.3 362.8L779.7 361.4L780.2 359.9L780.7 358.4L781.1 356.8L781.6 355.1L782.0 353.5L782.5 351.9L783.0 350.2L783.4 348.6L783.9 347.1L784.4 345.6L784.8 344.2L785.3 342.8L785.7 341.5L786.2 340.3L786.7 339.1L787.1 338.1L787.6 337.1L788.1 336.3L788.5 335.6L789.0 334.9L789.4 334.4L789.9 334.0L790.4 333.7L790.8 333.6L791.3 333.5L791.8 333.6L792.2 333.8L792.7 334.2L793.1 334.8L793.6 335.5L794.1 336.3L794.5 337.2L795.0 338.3L795.5 339.5L795.9 340.8L796.4 342.2L796.8 343.6L797.3 345.2L797.8 346.7L798.2 348.3L798.7 349.9L799.1 351.5L799.6 353.0L800.1 354.5L800.5 355.8L801.0 356.9L801.5 357.7L801.9 358.0L802.4 357.9L802.8 357.4L803.3 356.4L803.8 355.3L804.2 354.0L804.7 352.6L805.2 351.2L805.6 349.8L806.1 348.4L806.5 347.1L807.0 345.8L807.5 344.6L807.9 343.5L808.4 342.5L808.9 341.7L809.3 341.0L809.8 340.4L810.2 340.0L810.7 339.7L811.2 339.6L811.6 339.6L812.1 339.8L812.6 340.1L813.0 340.5L813.5 341.0L813.9 341.6L814.4 342.3L814.9 343.1L815.3 344.1L815.8 345.1L816.2 346.2L816.7 347.4L817.2 348.6L817.6 349.9L818.1 351.3L818.6 352.7L819.0 354.2L819.5 355.6L819.9 357.1L820.4 358.6L820.9 360.0L821.3 361.4L821.8 362.7L822.3 363.9L822.7 365.0L823.2 365.7L823.6 366.0L824.1 365.9L824.6 365.5L825.0 364.7L825.5 363.5L826.0 362.2L826.4 360.8L826.9 359.2L827.3 357.6L827.8 356.0L828.3 354.4L828.7 352.7L829.2 351.1L829.6 349.5L830.1 347.9L830.6 346.4L831.0 344.9L831.5 343.5L832.0 342.2L832.4 340.9L832.9 339.7L833.3 338.6L833.8 337.6L834.3 336.7L834.7 335.9L835.2 335.3L835.7 334.7L836.1 334.2L836.6 333.9L837.0 333.6L837.5 333.5L838.0 333.5L838.4 333.7L838.9 334.0L839.4 334.5L839.8 335.1L840.3 335.8L840.7 336.7L841.2 337.7L841.7 338.8L842.1 340.1L842.6 341.4L843.1 342.8L843.5 344.3L844.0 345.9L844.4 347.4L844.9 349.0L845.4 350.6L845.8 352.2L846.3 353.7L846.7 355.1L847.2 356.3L847.7 357.3L848.1 357.9L848.6 358.0L849.1 357.7L849.5 357.0" stroke="#03133a"/>
<path d="M111.3 434.5L111.5 381.5L111.5 362.6L111.6 351.9L111.7 344.6L111.8 339.1L111.9 334.7L111.9 334.7L112.0 331.1L112.1 328.0L112.2 325.4L112.3 323.1L112.4 321.1L112.4 321.1L112.5 319.3L112.6 317.7L112.7 316.2L112.8 314.9L112.8 313.7L112.8 313.7L112.9 312.6L113.0 311.6L113.1 310.6L113.2 309.8L113.3 309.0L113.3 309.0L113.4 308.2L113.5 307.5L113.6 306.8L113.7 306.2L113.8 305.7L113.8 305.7L113.9 305.1L114.0 304.6L114.0 304.1L114.1 303.7L114.2 303.3L114.2 303.3L114.3 302.9L114.4 302.5L114.7 301.5L115.2 300.2L115.6 299.2L116.1 298.6L116.5 298.3L117.0 298.2L117.5 298.3L117.9 298.6L118.4 299.1L118.9 299.7L119.3 300.6L119.8 301.5L120.2 302.7L120.7 304.0L121.2 305.4L121.6 307.0L122.1 308.7L122.5 310.6L123.0 312.5L123.5 314.6L123.9 316.8L124.4 319.1L124.9 321.4L125.3 323.9L125.8 326.3L126.2 328.8L126.7 331.2L127.2 333.5L127.6 335.5L128.1 336.7L128.6 336.6L129.0 335.7L129.5 334.2L129.9 332.3L130.4 330.3L130.9 328.2L131.3 326.0L131.8 323.8L132.3 321.6L132.7 319.5L133.2 317.4L133.6 315.4L134.1 313.4L134.6 311.5L135.0 309.6L135.5 307.9L136.0 306.2L136.4 304.6L136.9 303.0L137.3 301.6L137.8 300.3L138.3 299.0L138.7 297.9L139.2 296.8L139.6 295.9L140.1 295.0L140.6 294.3L141.0 293.7L141.5 293.2L142.0 292.7L142.4 292.5L142.9 292.3L143.3 292.2L143.8 292.3L144.3 292.6L144.7 293.3L145.2 294.1L145.7 295.2L146.1 296.5L146.6 298.1L147.0 299.9L147.5 301.9L148.0 304.2L148.4 306.6L148.9 309.2L149.4 312.0L149.8 314.9L150.3 318.0L150.7 321.1L151.2 324.4L151.7 327.6L152.1 330.7L152.6 333.5L153.1 335.4L153.5 335.5L154.0 333.5L154.4 330.5L154.9 327.2L155.4 323.8L155.8 320.5L156.3 317.2L156.7 314.2L157.2 311.3L157.7 308.7L158.1 306.3L158.6 304.1L159.1 302.2L159.5 300.6L160.0 299.3L160.4 298.2L160.9 297.5L161.4 297.1L161.8 297.0L162.3 297.1L162.8 297.3L163.2 297.7L163.7 298.1L164.1 298.7L164.6 299.5L165.1 300.3L165.5 301.3L166.0 302.4L166.5 303.6L166.9 304.9L167.4 306.4L167.8 307.9L168.3 309.5L168.8 311.2L169.2 313.1L169.7 315.0L170.2 316.9L170.6 319.0L171.1 321.1L171.5 323.2L172.0 325.4L172.5 327.5L172.9 329.7L173.4 331.7L173.8 333.5L174.3 334.9L174.8 335.4L175.2 334.9L175.7 333.7L176.2 332.1L176.6 330.2L177.1 328.1L177.5 326.0L178.0 323.9L178.5 321.8L178.9 319.8L179.4 317.7L179.9 315.7L180.3 313.8L180.8 311.9L181.2 310.0L181.7 308.3L182.2 306.6L182.6 305.0L183.1 303.5L183.6 302.0L184.0 300.7L184.5 299.4L184.9 298.3L185.4 297.2L185.9 296.2L186.3 295.4L186.8 294.6L187.3 293.9L187.7 293.4L188.2 292.9L188.6 292.6L189.1 292.4L189.6 292.2L190.0 292.2L190.5 292.4L190.9 292.9L191.4 293.6L191.9 294.5L192.3 295.7L192.8 297.1L193.3 298.8L193.7 300.7L194.2 302.7L194.6 305.0L195.1 307.5L195.6 310.1L196.0 312.9L196.5 315.8L197.0 318.9L197.4 322.0L197.9 325.2L198.3 328.3L198.8 331.3L199.3 333.7L199.7 334.9L200.2 334.0L200.7 331.4L201.1 328.3L201.6 325.0L202.0 321.7L202.5 318.5L203.0 315.4L203.4 312.5L203.9 309.8L204.4 307.3L204.8 305.1L205.3 303.1L205.7 301.3L206.2 299.9L206.7 298.7L207.1 297.8L207.6 297.3L208.0 297.0L208.5 297.0L209.0 297.2L209.4 297.4L209.9 297.8L210.4 298.4L210.8 299.0L211.3 299.8L211.7 300.7L212.2 301.7L212.7 302.8L213.1 304.0L213.6 305.4L214.1 306.8L214.5 308.4L215.0 310.0L215.4 311.7L215.9 313.5L216.4 315.4L216.8 317.4L217.3 319.4L217.8 321.5L218.2 323.6L218.7 325.7L219.1 327.8L219.6 329.9L220.1 331.8L220.5 333.4L221.0 334.4L221.4 334.4L221.9 333.6L222.4 332.2L222.8 330.4L223.3 328.5L223.8 326.5L224.2 324.4L224.7 322.4L225.1 320.3L225.6 318.3L226.1 316.3L226.5 314.4L227.0 312.5L227.5 310.7L227.9 308.9L228.4 307.2L228.8 305.6L229.3 304.1L229.8 302.6L230.2 301.2L230.7 300.0L231.2 298.8L231.6 297.7L232.1 296.7L232.5 295.8L233.0 294.9L233.5 294.2L233.9 293.6L234.4 293.1L234.9 292.7L235.3 292.5L235.8 292.3L236.2 292.2L236.7 292.3L237.2 292.6L237.6 293.2L238.1 294.0L238.5 295.0L239.0 296.3L239.5 297.8L239.9 299.5L240.4 301.5L240.9 303.6L241.3 305.9L241.8 308.4L242.2 311.1L242.7 313.9L243.2 316.9L243.6 320.0L244.1 323.1L244.6 326.2L245.0 329.3L245.5 332.0L245.9 334.0L246.4 334.2L246.9 332.4L247.3 329.6L247.8 326.4L248.3 323.1L248.7 319.9L249.2 316.8L249.6 313.8L250.1 311.0L250.6 308.5L251.0 306.1L251.5 304.0L252.0 302.2L252.4 300.6L252.9 299.3L253.3 298.3L253.8 297.5L254.3 297.1L254.7 297.0L255.2 297.1L255.6 297.3L256.1 297.6L256.6 298.1L257.0 298.6L257.5 299.3L258.0 300.1L258.4 301.1L258.9 302.1L259.3 303.3L259.8 304.5L260.3 305.9L260.7 307.4L261.2 308.9L261.7 310.6L262.1 312.3L262.6 314.2L263.0 316.1L263.5 318.0L264.0 320.0L264.4 322.1L264.9 324.2L265.4 326.3L265.8 328.3L266.3 330.3L266.7 332.1L267.2 333.4L267.7 334.0L268.1 333.6L268.6 332.5L269.1 330.9L269.5 329.1L270.0 327.1L270.4 325.1L270.9 323.1L271.4 321.1L271.8 319.0L272.3 317.1L272.7 315.1L273.2 313.2L273.7 311.4L274.1 309.6L274.6 307.9L275.1 306.3L275.5 304.7L276.0 303.2L276.4 301.8L276.9 300.5L277.4 299.3L277.8 298.2L278.3 297.1L278.8 296.2L279.2 295.3L279.7 294.6L280.1 293.9L280.6 293.4L281.1 292.9L281.5 292.6L282.0 292.4L282.5 292.2L282.9 292.2L283.4 292.4L283.8 292.8L284.3 293.5L284.8 294.4L285.2 295.5L285.7 296.9L286.2 298.5L286.6 300.3L287.1 302.3L287.5 304.6L288.0 307.0L288.5 309.5L288.9 312.3L289.4 315.1L289.8 318.1L290.3 321.2L290.8 324.3L291.2 327.4L291.7 330.3L292.2 332.7L292.6 334.0L293.1 333.3L293.5 330.9L294.0 327.9L294.5 324.6L294.9 321.4L295.4 318.2L295.9 315.2L296.3 312.4L296.8 309.7L297.2 307.3L297.7 305.1L298.2 303.1L298.6 301.4L299.1 299.9L299.6 298.8L300.0 297.9L300.5 297.3L300.9 297.0L301.4 297.0L301.9 297.2L302.3 297.4L302.8 297.8L303.3 298.3L303.7 298.9L304.2 299.7L304.6 300.5L305.1 301.5L305.6 302.6L306.0 303.8L306.5 305.1L306.9 306.5L307.4 308.0L307.9 309.6L308.3 311.3L308.8 313.0L309.3 314.9L309.7 316.8L310.2 318.7L310.6 320.8L311.1 322.8L311.6 324.9L312.0 327.0L312.5 329.0L313.0 330.9L313.4 332.5L313.9 333.5L314.3 333.6L314.8 332.8L315.3 331.5L315.7 329.8L316.2 327.9L316.7 326.0L317.1 324.0L317.6 321.9L318.0 319.9L318.5 317.9L319.0 316.0L319.4 314.1L319.9 312.2L320.4 310.4L320.8 308.7L321.3 307.0L321.7 305.5L322.2 303.9L322.7 302.5L323.1 301.2L323.6 299.9L324.0 298.7L324.5 297.6L325.0 296.6L325.4 295.8L325.9 295.0L326.4 294.3L326.8 293.7L327.3 293.2L327.7 292.8L328.2 292.5L328.7 292.3L329.1 292.2L329.6 292.3L330.1 292.6L330.5 293.1L331.0 293.9L331.4 294.9L331.9 296.1L332.4 297.6L332.8 299.3L333.3 301.2L333.8 303.3L334.2 305.6L334.7 308.0L335.1 310.7L335.6 313.5L336.1 316.4L336.5 319.4L337.0 322.5L337.5 325.6L337.9 328.6L338.4 331.3L338.8 333.3L339.3 333.8L339.8 332.1L340.2 329.4L340.7 326.2L341.1 323.0L341.6 319.8L342.1 316.7L342.5 313.8L343.0 311.1L343.5 308.5L343.9 306.2L344.4 304.1L344.8 302.2L345.3 300.6L345.8 299.3L346.2 298.3L346.7 297.6L347.2 297.1L347.6 297.0L348.1 297.1L348.5 297.3L349.0 297.6L349.5 298.0L349.9 298.6L350.4 299.2L350.9 300.0L351.3 300.9L351.8 302.0L352.2 303.1L352.7 304.3L353.2 305.7L353.6 307.1L354.1 308.6L354.6 310.3L355.0 312.0L355.5 313.8L355.9 315.6L356.4 317.6L356.9 319.5L357.3 321.6L357.8 323.6L358.2 325.7L358.7 327.7L359.2 329.7L359.6 331.5L360.1 332.8L360.6 333.5L361.0 333.2L361.5 332.1L361.9 330.6L362.4 328.8L362.9 326.9L363.3 324.9L363.8 322.9L364.3 320.9L364.7 318.9L365.2 316.9L365.6 315.0L366.1 313.1L366.6 311.3L367.0 309.5L367.5 307.9L368.0 306.2L368.4 304.7L368.9 303.2L369.3 301.8L369.8 300.5L370.3 299.3L370.7 298.2L371.2 297.2L371.7 296.2L372.1 295.4L372.6 294.6L373.0 294.0L373.5 293.4L374.0 293.0L374.4 292.6L374.9 292.4L375.3 292.2L375.8 292.2L376.3 292.4L376.7 292.8L377.2 293.4L377.7 294.3L378.1 295.4L378.6 296.8L379.0 298.3L379.5 300.1L380.0 302.1L380.4 304.3L380.9 306.6L381.4 309.2L381.8 311.9L382.3 314.7L382.7 317.7L383.2 320.7L383.7 323.8L384.1 326.9L384.6 329.8L385.1 332.3L385.5 333.7L386.0 333.1L386.4 330.8L386.9 327.8L387.4 324.7L387.8 321.4L388.3 318.3L388.8 315.3L389.2 312.5L389.7 309.8L390.1 307.4L390.6 305.2L391.1 303.2L391.5 301.5L392.0 300.0L392.4 298.8L392.9 297.9L393.4 297.3L393.8 297.0L394.3 297.0L394.8 297.1L395.2 297.4L395.7 297.7L396.1 298.2L396.6 298.8L397.1 299.6L397.5 300.4L398.0 301.4L398.5 302.4L398.9 303.6L399.4 304.9L399.8 306.3L400.3 307.8L400.8 309.3L401.2 311.0L401.7 312.7L402.2 314.6L402.6 316.5L403.1 318.4L403.5 320.4L404.0 322.4L404.5 324.5L404.9 326.6L405.4 328.6L405.9 330.4L406.3 332.0L406.8 333.1L407.2 333.3L407.7 332.6L408.2 331.3L408.6 329.7L409.1 327.8L409.5 325.9L410.0 323.9L410.5 321.9L410.9 319.9L411.4 317.9L411.9 316.0L412.3 314.1L412.8 312.2L413.2 310.4L413.7 308.7L414.2 307.1L414.6 305.5L415.1 304.0L415.6 302.5L416.0 301.2L416.5 299.9L416.9 298.8L417.4 297.7L417.9 296.7L418.3 295.8L418.8 295.0L419.3 294.3L419.7 293.7L420.2 293.2L420.6 292.8L421.1 292.5L421.6 292.3L422.0 292.2L422.5 292.2L423.0 292.5L423.4 293.0L423.9 293.8L424.3 294.8L424.8 296.0L425.3 297.5L425.7 299.1L426.2 301.0L426.6 303.1L427.1 305.3L427.6 307.8L428.0 310.4L428.5 313.1L429.0 316.0L429.4 319.0L429.9 322.1L430.3 325.2L430.8 328.2L431.3 330.9L431.7 333.0L432.2 333.7L432.7 332.1L433.1 329.4L433.6 326.3L434.0 323.1L434.5 320.0L435.0 316.9L435.4 314.0L435.9 311.2L436.4 308.6L436.8 306.3L437.3 304.2L437.7 302.3L438.2 300.7L438.7 299.4L439.1 298.4L439.6 297.6L440.1 297.2L440.5 297.0L441.0 297.1L441.4 297.2L441.9 297.5L442.4 298.0L442.8 298.5L443.3 299.2L443.7 299.9L444.2 300.8L444.7 301.8L445.1 303.0L445.6 304.2L446.1 305.5L446.5 306.9L447.0 308.5L447.4 310.1L447.9 311.8L448.4 313.5L448.8 315.4L449.3 317.3L449.8 319.3L450.2 321.3L450.7 323.3L451.1 325.4L451.6 327.4L452.1 329.4L452.5 331.2L453.0 332.6L453.5 333.3L453.9 333.0L454.4 332.0L454.8 330.5L455.3 328.8L455.8 326.9L456.2 324.9L456.7 322.9L457.2 320.9L457.6 318.9L458.1 317.0L458.5 315.0L459.0 313.2L459.5 311.4L459.9 309.6L460.4 307.9L460.8 306.3L461.3 304.8L461.8 303.3L462.2 301.9L462.7 300.6L463.2 299.4L463.6 298.2L464.1 297.2L464.5 296.3L465.0 295.4L465.5 294.7L465.9 294.0L466.4 293.4L466.9 293.0L467.3 292.6L467.8 292.4L468.2 292.2L468.7 292.2L469.2 292.3L469.6 292.7L470.1 293.4L470.6 294.2L471.0 295.3L471.5 296.6L471.9 298.2L472.4 299.9L472.9 301.9L473.3 304.1L473.8 306.4L474.3 308.9L474.7 311.6L475.2 314.4L475.6 317.3L476.1 320.4L476.6 323.5L477.0 326.5L477.5 329.5L477.9 332.0L478.4 333.5L478.9 333.1L479.3 331.0L479.8 328.0L480.3 324.8L480.7 321.6L481.2 318.5L481.6 315.5L482.1 312.7L482.6 310.0L483.0 307.5L483.5 305.3L484.0 303.3L484.4 301.6L484.9 300.1L485.3 298.9L485.8 298.0L486.3 297.4L486.7 297.1L487.2 297.0L487.7 297.1L488.1 297.4L488.6 297.7L489.0 298.2L489.5 298.8L490.0 299.5L490.4 300.3L490.9 301.3L491.4 302.3L491.8 303.5L492.3 304.8L492.7 306.1L493.2 307.6L493.7 309.2L494.1 310.8L494.6 312.6L495.0 314.4L495.5 316.2L496.0 318.2L496.4 320.2L496.9 322.2L497.4 324.2L497.8 326.3L498.3 328.3L498.7 330.2L499.2 331.8L499.7 333.0L500.1 333.2L500.6 332.6L501.1 331.3L501.5 329.7L502.0 327.9L502.4 325.9L502.9 324.0L503.4 322.0L503.8 320.0L504.3 318.0L504.8 316.0L505.2 314.2L505.7 312.3L506.1 310.5L506.6 308.8L507.1 307.2L507.5 305.6L508.0 304.1L508.5 302.6L508.9 301.3L509.4 300.0L509.8 298.8L510.3 297.8L510.8 296.8L511.2 295.9L511.7 295.0L512.1 294.3L512.6 293.7L513.1 293.2L513.5 292.8L514.0 292.5L514.5 292.3L514.9 292.2L515.4 292.2L515.8 292.5L516.3 293.0L516.8 293.7L517.2 294.7L517.7 295.9L518.2 297.3L518.6 299.0L519.1 300.8L519.5 302.9L520.0 305.1L520.5 307.5L520.9 310.1L521.4 312.9L521.9 315.7L522.3 318.7L522.8 321.8L523.2 324.8L523.7 327.9L524.2 330.7L524.6 332.8L525.1 333.6L525.5 332.3L526.0 329.6L526.5 326.5L526.9 323.3L527.4 320.2L527.9 317.1L528.3 314.2L528.8 311.4L529.2 308.8L529.7 306.5L530.2 304.3L530.6 302.5L531.1 300.9L531.6 299.5L532.0 298.5L532.5 297.7L532.9 297.2L533.4 297.0L533.9 297.0L534.3 297.2L534.8 297.5L535.3 297.9L535.7 298.4L536.2 299.1L536.6 299.9L537.1 300.8L537.6 301.7L538.0 302.9L538.5 304.1L539.0 305.4L539.4 306.8L539.9 308.3L540.3 309.9L540.8 311.6L541.3 313.4L541.7 315.2L542.2 317.1L542.6 319.1L543.1 321.1L543.6 323.1L544.0 325.2L544.5 327.2L545.0 329.2L545.4 331.0L545.9 332.4L546.3 333.2L546.8 333.0L547.3 332.1L547.7 330.6L548.2 328.9L548.7 327.0L549.1 325.0L549.6 323.0L550.0 321.0L550.5 319.0L551.0 317.1L551.4 315.2L551.9 313.3L552.4 311.5L552.8 309.7L553.3 308.0L553.7 306.4L554.2 304.9L554.7 303.4L555.1 302.0L555.6 300.7L556.1 299.5L556.5 298.3L557.0 297.3L557.4 296.3L557.9 295.5L558.4 294.7L558.8 294.0L559.3 293.5L559.7 293.0L560.2 292.7L560.7 292.4L561.1 292.3L561.6 292.2L562.1 292.3L562.5 292.7L563.0 293.3L563.4 294.1L563.9 295.2L564.4 296.5L564.8 298.0L565.3 299.8L565.8 301.7L566.2 303.9L566.7 306.2L567.1 308.7L567.6 311.4L568.1 314.2L568.5 317.1L569.0 320.1L569.5 323.2L569.9 326.2L570.4 329.2L570.8 331.8L571.3 333.4L571.8 333.2L572.2 331.1L572.7 328.2L573.2 325.1L573.6 321.9L574.1 318.7L574.5 315.7L575.0 312.9L575.5 310.2L575.9 307.7L576.4 305.5L576.8 303.5L577.3 301.7L577.8 300.2L578.2 299.0L578.7 298.1L579.2 297.4L579.6 297.1L580.1 297.0L580.5 297.1L581.0 297.3L581.5 297.7L581.9 298.1L582.4 298.7L582.9 299.4L583.3 300.3L583.8 301.2L584.2 302.2L584.7 303.4L585.2 304.7L585.6 306.0L586.1 307.5L586.6 309.0L587.0 310.7L587.5 312.4L587.9 314.2L588.4 316.1L588.9 318.0L589.3 320.0L589.8 322.0L590.3 324.1L590.7 326.1L591.2 328.1L591.6 330.0L592.1 331.7L592.6 332.8L593.0 333.2L593.5 332.6L593.9 331.4L594.4 329.8L594.9 328.0L595.3 326.1L595.8 324.1L596.3 322.1L596.7 320.1L597.2 318.1L597.6 316.2L598.1 314.3L598.6 312.4L599.0 310.7L599.5 308.9L600.0 307.3L600.4 305.7L600.9 304.2L601.3 302.7L601.8 301.4L602.3 300.1L602.7 298.9L603.2 297.8L603.7 296.8L604.1 295.9L604.6 295.1L605.0 294.4L605.5 293.8L606.0 293.3L606.4 292.8L606.9 292.5L607.4 292.3L607.8 292.2L608.3 292.2L608.7 292.5L609.2 292.9L609.7 293.7L610.1 294.6L610.6 295.8L611.0 297.2L611.5 298.8L612.0 300.7L612.4 302.7L612.9 304.9L613.4 307.3L613.8 309.9L614.3 312.6L614.7 315.5L615.2 318.4L615.7 321.5L616.1 324.6L616.6 327.6L617.1 330.4L617.5 332.7L618.0 333.6L618.4 332.4L618.9 329.8L619.4 326.8L619.8 323.6L620.3 320.4L620.8 317.3L621.2 314.4L621.7 311.6L622.1 309.0L622.6 306.6L623.1 304.5L623.5 302.6L624.0 301.0L624.5 299.6L624.9 298.5L625.4 297.7L625.8 297.2L626.3 297.0L626.8 297.0L627.2 297.2L627.7 297.5L628.1 297.9L628.6 298.4L629.1 299.0L629.5 299.8L630.0 300.7L630.5 301.7L630.9 302.8L631.4 304.0L631.8 305.3L632.3 306.7L632.8 308.2L633.2 309.8L633.7 311.4L634.2 313.2L634.6 315.0L635.1 316.9L635.5 318.9L636.0 320.9L636.5 322.9L636.9 325.0L637.4 327.0L637.9 329.0L638.3 330.8L638.8 332.3L639.2 333.1L639.7 333.0L640.2 332.1L640.6 330.7L641.1 329.0L641.6 327.1L642.0 325.2L642.5 323.2L642.9 321.2L643.4 319.2L643.9 317.2L644.3 315.3L644.8 313.4L645.2 311.6L645.7 309.8L646.2 308.2L646.6 306.5L647.1 305.0L647.6 303.5L648.0 302.1L648.5 300.8L648.9 299.6L649.4 298.4L649.9 297.4L650.3 296.4L650.8 295.5L651.3 294.8L651.7 294.1L652.2 293.5L652.6 293.1L653.1 292.7L653.6 292.4L654.0 292.3L654.5 292.2L655.0 292.3L655.4 292.6L655.9 293.2L656.3 294.1L656.8 295.1L657.3 296.4L657.7 297.9L658.2 299.6L658.7 301.6L659.1 303.7L659.6 306.0L660.0 308.5L660.5 311.1L661.0 313.9L661.4 316.8L661.9 319.8L662.3 322.9L662.8 326.0L663.3 328.9L663.7 331.6L664.2 333.3L664.7 333.3L665.1 331.3L665.6 328.5L666.0 325.3L666.5 322.1L667.0 319.0L667.4 315.9L667.9 313.1L668.4 310.4L668.8 307.9L669.3 305.6L669.7 303.6L670.2 301.8L670.7 300.3L671.1 299.1L671.6 298.1L672.1 297.5L672.5 297.1L673.0 297.0L673.4 297.1L673.9 297.3L674.4 297.6L674.8 298.1L675.3 298.7L675.8 299.4L676.2 300.2L676.7 301.1L677.1 302.1L677.6 303.3L678.1 304.5L678.5 305.9L679.0 307.3L679.4 308.9L679.9 310.5L680.4 312.2L680.8 314.0L681.3 315.9L681.8 317.8L682.2 319.8L682.7 321.8L683.1 323.9L683.6 325.9L684.1 327.9L684.5 329.8L685.0 331.5L685.5 332.8L685.9 333.2L686.4 332.7L686.8 331.5L687.3 330.0L687.8 328.1L688.2 326.2L688.7 324.2L689.2 322.2L689.6 320.2L690.1 318.3L690.5 316.3L691.0 314.4L691.5 312.6L691.9 310.8L692.4 309.1L692.9 307.4L693.3 305.8L693.8 304.3L694.2 302.8L694.7 301.5L695.2 300.2L695.6 299.0L696.1 297.9L696.5 296.9L697.0 296.0L697.5 295.2L697.9 294.4L698.4 293.8L698.9 293.3L699.3 292.9L699.8 292.6L700.2 292.3L700.7 292.2L701.2 292.2L701.6 292.4L702.1 292.9L702.6 293.6L703.0 294.5L703.5 295.7L703.9 297.1L704.4 298.7L704.9 300.5L705.3 302.5L705.8 304.7L706.3 307.1L706.7 309.7L707.2 312.4L707.6 315.2L708.1 318.2L708.6 321.2L709.0 324.3L709.5 327.4L710.0 330.2L710.4 332.5L710.9 333.6L711.3 332.6L711.8 330.1L712.3 327.0L712.7 323.8L713.2 320.7L713.6 317.6L714.1 314.6L714.6 311.8L715.0 309.2L715.5 306.8L716.0 304.7L716.4 302.8L716.9 301.1L717.3 299.7L717.8 298.6L718.3 297.8L718.7 297.3L719.2 297.0L719.7 297.0L720.1 297.2L720.6 297.4L721.0 297.8L721.5 298.4L722.0 299.0L722.4 299.7L722.9 300.6L723.4 301.6L723.8 302.7L724.3 303.9L724.7 305.2L725.2 306.6L725.7 308.0L726.1 309.6L726.6 311.3L727.1 313.1L727.5 314.9L728.0 316.8L728.4 318.7L728.9 320.7L729.4 322.8L729.8 324.8L730.3 326.9L730.7 328.8L731.2 330.7L731.7 332.2L732.1 333.1L732.6 333.1L733.1 332.2L733.5 330.8L734.0 329.1L734.4 327.3L734.9 325.3L735.4 323.3L735.8 321.3L736.3 319.3L736.8 317.4L737.2 315.4L737.7 313.6L738.1 311.7L738.6 310.0L739.1 308.3L739.5 306.7L740.0 305.1L740.5 303.6L740.9 302.2L741.4 300.9L741.8 299.6L742.3 298.5L742.8 297.4L743.2 296.5L743.7 295.6L744.2 294.8L744.6 294.1L745.1 293.6L745.5 293.1L746.0 292.7L746.5 292.4L746.9 292.3L747.4 292.2L747.8 292.3L748.3 292.6L748.8 293.2L749.2 294.0L749.7 295.0L750.2 296.3L750.6 297.8L751.1 299.5L751.5 301.4L752.0 303.5L752.5 305.8L752.9 308.3L753.4 310.9L753.9 313.7L754.3 316.6L754.8 319.6L755.2 322.7L755.7 325.7L756.2 328.7L756.6 331.4L757.1 333.2L757.6 333.4L758.0 331.5L758.5 328.7L758.9 325.6L759.4 322.4L759.9 319.2L760.3 316.2L760.8 313.3L761.3 310.6L761.7 308.1L762.2 305.8L762.6 303.8L763.1 302.0L763.6 300.4L764.0 299.2L764.5 298.2L764.9 297.5L765.4 297.1L765.9 297.0L766.3 297.1L766.8 297.3L767.3 297.6L767.7 298.1L768.2 298.6L768.6 299.3L769.1 300.1L769.6 301.0L770.0 302.1L770.5 303.2L771.0 304.4L771.4 305.8L771.9 307.2L772.3 308.8L772.8 310.4L773.3 312.1L773.7 313.9L774.2 315.7L774.7 317.7L775.1 319.6L775.6 321.7L776.0 323.7L776.5 325.8L777.0 327.8L777.4 329.7L777.9 331.4L778.4 332.7L778.8 333.2L779.3 332.8L779.7 331.6L780.2 330.1L780.7 328.3L781.1 326.4L781.6 324.4L782.0 322.4L782.5 320.4L783.0 318.4L783.4 316.5L783.9 314.6L784.4 312.7L784.8 310.9L785.3 309.2L785.7 307.5L786.2 305.9L786.7 304.4L787.1 303.0L787.6 301.6L788.1 300.3L788.5 299.1L789.0 298.0L789.4 297.0L789.9 296.1L790.4 295.2L790.8 294.5L791.3 293.9L791.8 293.3L792.2 292.9L792.7 292.6L793.1 292.3L793.6 292.2L794.1 292.2L794.5 292.4L795.0 292.8L795.5 293.5L795.9 294.4L796.4 295.6L796.8 296.9L797.3 298.5L797.8 300.3L798.2 302.3L798.7 304.5L799.1 306.9L799.6 309.5L800.1 312.2L800.5 315.0L801.0 318.0L801.5 321.0L801.9 324.1L802.4 327.1L802.8 330.0L803.3 332.4L803.8 333.6L804.2 332.7L804.7 330.3L805.2 327.3L805.6 324.1L806.1 320.9L806.5 317.8L807.0 314.8L807.5 312.0L807.9 309.4L808.4 307.0L808.9 304.8L809.3 302.9L809.8 301.2L810.2 299.8L810.7 298.7L811.2 297.8L811.6 297.3L812.1 297.0L812.6 297.0L813.0 297.2L813.5 297.4L813.9 297.8L814.4 298.3L814.9 298.9L815.3 299.7L815.8 300.5L816.2 301.5L816.7 302.6L817.2 303.8L817.6 305.0L818.1 306.4L818.6 307.9L819.0 309.5L819.5 311.2L819.9 312.9L820.4 314.7L820.9 316.6L821.3 318.6L821.8 320.6L822.3 322.6L822.7 324.6L823.2 326.7L823.6 328.7L824.1 330.5L824.6 332.1L825.0 333.0L825.5 333.1L826.0 332.3L826.4 331.0L826.9 329.3L827.3 327.4L827.8 325.5L828.3 323.5L828.7 321.5L829.2 319.5L829.6 317.5L830.1 315.6L830.6 313.7L831.0 311.9L831.5 310.1L832.0 308.4L832.4 306.8L832.9 305.2L833.3 303.7L833.8 302.3L834.3 301.0L834.7 299.7L835.2 298.6L835.7 297.5L836.1 296.5L836.6 295.7L837.0 294.9L837.5 294.2L838.0 293.6L838.4 293.1L838.9 292.7L839.4 292.5L839.8 292.3L840.3 292.2L840.7 292.3L841.2 292.6L841.7 293.1L842.1 293.9L842.6 294.9L843.1 296.2L843.5 297.6L844.0 299.3L844.4 301.2L844.9 303.3L845.4 305.6L845.8 308.1L846.3 310.7L846.7 313.5L847.2 316.3L847.7 319.3L848.1 322.4L848.6 325.5L849.1 328.5L849.5 331.2" stroke="#044a7a"/>
<path d="M111.3 434.5L111.5 364.1L111.5 345.3L111.6 334.8L111.7 327.7L111.8 322.3L111.9 318.1L111.9 318.1L112.0 314.6L112.1 311.7L112.2 309.2L112.3 307.0L112.4 305.2L112.4 305.1L112.5 303.5L112.6 302.0L112.7 300.7L112.8 299.5L112.8 298.4L112.8 298.4L112.9 297.4L113.0 296.5L113.1 295.7L113.2 294.9L113.3 294.2L113.3 294.2L113.4 293.6L113.5 293.0L113.6 292.5L113.7 292.0L113.8 291.5L113.8 291.5L113.9 291.1L114.0 290.7L114.0 290.3L114.1 290.0L114.2 289.7L114.2 289.7L114.3 289.4L114.4 289.1L114.7 288.5L115.2 287.7L115.6 287.3L116.1 287.2L116.5 287.2L117.0 287.4L117.5 287.7L117.9 288.1L118.4 288.6L118.9 289.2L119.3 289.8L119.8 290.6L120.2 291.4L120.7 292.2L121.2 293.1L121.6 293.9L122.1 294.8L122.5 295.7L123.0 296.6L123.5 297.5L123.9 298.3L124.4 299.0L124.9 299.7L125.3 300.4L125.8 300.9L126.2 301.4L126.7 301.8L127.2 302.1L127.6 302.3L128.1 302.4L128.6 302.4L129.0 302.3L129.5 302.0L129.9 301.7L130.4 301.2L130.9 300.7L131.3 300.0L131.8 299.3L132.3 298.4L132.7 297.5L133.2 296.6L133.6 295.5L134.1 294.4L134.6 293.3L135.0 292.2L135.5 291.0L136.0 289.8L136.4 288.6L136.9 287.4L137.3 286.3L137.8 285.2L138.3 284.1L138.7 283.1L139.2 282.2L139.6 281.3L140.1 280.5L140.6 279.8L141.0 279.2L141.5 278.7L142.0 278.3L142.4 278.0L142.9 277.8L143.3 277.7L143.8 277.8L144.3 278.2L144.7 278.8L145.2 279.7L145.7 280.8L146.1 282.2L146.6 283.7L147.0 285.5L147.5 287.3L148.0 289.3L148.4 291.4L148.9 293.5L149.4 295.5L149.8 297.6L150.3 299.5L150.7 301.3L151.2 302.8L151.7 304.1L152.1 304.9L152.6 305.3L153.1 305.3L153.5 305.0L154.0 304.2L154.4 303.0L154.9 301.5L155.4 299.8L155.8 297.9L156.3 296.0L156.7 294.1L157.2 292.2L157.7 290.4L158.1 288.7L158.6 287.2L159.1 285.9L159.5 284.8L160.0 283.9L160.4 283.3L160.9 283.0L161.4 283.0L161.8 283.1L162.3 283.3L162.8 283.6L163.2 284.1L163.7 284.6L164.1 285.2L164.6 285.9L165.1 286.6L165.5 287.4L166.0 288.3L166.5 289.3L166.9 290.2L167.4 291.2L167.8 292.2L168.3 293.3L168.8 294.3L169.2 295.2L169.7 296.2L170.2 297.1L170.6 298.0L171.1 298.8L171.5 299.5L172.0 300.1L172.5 300.7L172.9 301.2L173.4 301.5L173.8 301.8L174.3 301.9L174.8 302.0L175.2 301.9L175.7 301.8L176.2 301.5L176.6 301.1L177.1 300.6L177.5 300.0L178.0 299.3L178.5 298.6L178.9 297.7L179.4 296.8L179.9 295.8L180.3 294.8L180.8 293.7L181.2 292.5L181.7 291.4L182.2 290.2L182.6 289.1L183.1 287.9L183.6 286.8L184.0 285.6L184.5 284.6L184.9 283.5L185.4 282.6L185.9 281.7L186.3 280.9L186.8 280.1L187.3 279.5L187.7 278.9L188.2 278.4L188.6 278.1L189.1 277.9L189.6 277.7L190.0 277.7L190.5 277.9L190.9 278.4L191.4 279.2L191.9 280.2L192.3 281.4L192.8 282.9L193.3 284.5L193.7 286.3L194.2 288.2L194.6 290.2L195.1 292.3L195.6 294.4L196.0 296.5L196.5 298.5L197.0 300.3L197.4 302.0L197.9 303.4L198.3 304.5L198.8 305.1L199.3 305.3L199.7 305.2L200.2 304.7L200.7 303.7L201.1 302.3L201.6 300.7L202.0 298.9L202.5 297.1L203.0 295.1L203.4 293.2L203.9 291.3L204.4 289.6L204.8 288.0L205.3 286.5L205.7 285.3L206.2 284.3L206.7 283.6L207.1 283.2L207.6 283.0L208.0 283.0L208.5 283.2L209.0 283.5L209.4 283.8L209.9 284.3L210.4 284.8L210.8 285.5L211.3 286.2L211.7 287.0L212.2 287.8L212.7 288.8L213.1 289.7L213.6 290.7L214.1 291.7L214.5 292.7L215.0 293.7L215.4 294.7L215.9 295.7L216.4 296.6L216.8 297.5L217.3 298.3L217.8 299.1L218.2 299.8L218.7 300.4L219.1 300.9L219.6 301.3L220.1 301.7L220.5 301.9L221.0 302.0L221.4 302.0L221.9 301.9L222.4 301.7L222.8 301.3L223.3 300.9L223.8 300.4L224.2 299.7L224.7 299.0L225.1 298.2L225.6 297.3L226.1 296.3L226.5 295.3L227.0 294.3L227.5 293.2L227.9 292.0L228.4 290.9L228.8 289.7L229.3 288.5L229.8 287.4L230.2 286.2L230.7 285.1L231.2 284.1L231.6 283.1L232.1 282.2L232.5 281.3L233.0 280.5L233.5 279.8L233.9 279.2L234.4 278.7L234.9 278.3L235.3 278.0L235.8 277.8L236.2 277.7L236.7 277.8L237.2 278.1L237.6 278.8L238.1 279.6L238.5 280.7L239.0 282.1L239.5 283.6L239.9 285.3L240.4 287.2L240.9 289.1L241.3 291.2L241.8 293.3L242.2 295.4L242.7 297.4L243.2 299.3L243.6 301.1L244.1 302.7L244.6 304.0L245.0 304.9L245.5 305.3L245.9 305.3L246.4 305.0L246.9 304.3L247.3 303.1L247.8 301.6L248.3 299.9L248.7 298.1L249.2 296.2L249.6 294.2L250.1 292.3L250.6 290.5L251.0 288.8L251.5 287.3L252.0 286.0L252.4 284.8L252.9 284.0L253.3 283.4L253.8 283.1L254.3 283.0L254.7 283.1L255.2 283.3L255.6 283.6L256.1 284.0L256.6 284.5L257.0 285.1L257.5 285.8L258.0 286.6L258.4 287.4L258.9 288.3L259.3 289.2L259.8 290.2L260.3 291.1L260.7 292.2L261.2 293.2L261.7 294.2L262.1 295.2L262.6 296.1L263.0 297.0L263.5 297.9L264.0 298.7L264.4 299.4L264.9 300.1L265.4 300.6L265.8 301.1L266.3 301.5L266.7 301.8L267.2 301.9L267.7 302.0L268.1 302.0L268.6 301.8L269.1 301.5L269.5 301.1L270.0 300.7L270.4 300.1L270.9 299.4L271.4 298.6L271.8 297.8L272.3 296.9L272.7 295.9L273.2 294.8L273.7 293.8L274.1 292.6L274.6 291.5L275.1 290.3L275.5 289.2L276.0 288.0L276.4 286.9L276.9 285.7L277.4 284.7L277.8 283.6L278.3 282.7L278.8 281.7L279.2 280.9L279.7 280.2L280.1 279.5L280.6 278.9L281.1 278.5L281.5 278.1L282.0 277.9L282.5 277.7L282.9 277.7L283.4 277.9L283.8 278.4L284.3 279.1L284.8 280.1L285.2 281.3L285.7 282.8L286.2 284.4L286.6 286.2L287.1 288.1L287.5 290.1L288.0 292.2L288.5 294.2L288.9 296.3L289.4 298.3L289.8 300.2L290.3 301.9L290.8 303.3L291.2 304.4L291.7 305.1L292.2 305.3L292.6 305.2L293.1 304.8L293.5 303.8L294.0 302.4L294.5 300.9L294.9 299.1L295.4 297.2L295.9 295.3L296.3 293.4L296.8 291.5L297.2 289.7L297.7 288.1L298.2 286.6L298.6 285.4L299.1 284.4L299.6 283.7L300.0 283.2L300.5 283.0L300.9 283.0L301.4 283.2L301.9 283.4L302.3 283.8L302.8 284.2L303.3 284.8L303.7 285.4L304.2 286.1L304.6 286.9L305.1 287.8L305.6 288.7L306.0 289.6L306.5 290.6L306.9 291.6L307.4 292.6L307.9 293.6L308.3 294.6L308.8 295.6L309.3 296.5L309.7 297.4L310.2 298.3L310.6 299.0L311.1 299.7L311.6 300.4L312.0 300.9L312.5 301.3L313.0 301.6L313.4 301.9L313.9 302.0L314.3 302.0L314.8 301.9L315.3 301.7L315.7 301.4L316.2 300.9L316.7 300.4L317.1 299.8L317.6 299.1L318.0 298.3L318.5 297.4L319.0 296.4L319.4 295.4L319.9 294.3L320.4 293.2L320.8 292.1L321.3 291.0L321.7 289.8L322.2 288.6L322.7 287.5L323.1 286.3L323.6 285.2L324.0 284.2L324.5 283.2L325.0 282.2L325.4 281.4L325.9 280.6L326.4 279.9L326.8 279.2L327.3 278.7L327.7 278.3L328.2 278.0L328.7 277.8L329.1 277.7L329.6 277.8L330.1 278.1L330.5 278.7L331.0 279.5L331.4 280.6L331.9 282.0L332.4 283.5L332.8 285.2L333.3 287.0L333.8 289.0L334.2 291.0L334.7 293.1L335.1 295.2L335.6 297.2L336.1 299.2L336.5 301.0L337.0 302.6L337.5 303.9L337.9 304.8L338.4 305.2L338.8 305.3L339.3 305.1L339.8 304.4L340.2 303.2L340.7 301.7L341.1 300.1L341.6 298.2L342.1 296.3L342.5 294.4L343.0 292.5L343.5 290.7L343.9 289.0L344.4 287.4L344.8 286.1L345.3 284.9L345.8 284.0L346.2 283.4L346.7 283.1L347.2 283.0L347.6 283.1L348.1 283.3L348.5 283.6L349.0 284.0L349.5 284.5L349.9 285.1L350.4 285.7L350.9 286.5L351.3 287.3L351.8 288.2L352.2 289.1L352.7 290.1L353.2 291.1L353.6 292.1L354.1 293.1L354.6 294.1L355.0 295.1L355.5 296.0L355.9 297.0L356.4 297.8L356.9 298.6L357.3 299.4L357.8 300.0L358.2 300.6L358.7 301.1L359.2 301.5L359.6 301.8L360.1 301.9L360.6 302.0L361.0 302.0L361.5 301.8L361.9 301.5L362.4 301.2L362.9 300.7L363.3 300.1L363.8 299.5L364.3 298.7L364.7 297.9L365.2 296.9L365.6 296.0L366.1 294.9L366.6 293.8L367.0 292.7L367.5 291.6L368.0 290.4L368.4 289.2L368.9 288.1L369.3 286.9L369.8 285.8L370.3 284.7L370.7 283.7L371.2 282.7L371.7 281.8L372.1 281.0L372.6 280.2L373.0 279.6L373.5 279.0L374.0 278.5L374.4 278.1L374.9 277.9L375.3 277.7L375.8 277.7L376.3 277.9L376.7 278.3L377.2 279.1L377.7 280.0L378.1 281.2L378.6 282.6L379.0 284.2L379.5 286.0L380.0 287.9L380.4 289.9L380.9 292.0L381.4 294.1L381.8 296.1L382.3 298.2L382.7 300.0L383.2 301.8L383.7 303.2L384.1 304.4L384.6 305.1L385.1 305.3L385.5 305.3L386.0 304.8L386.4 303.9L386.9 302.6L387.4 301.0L387.8 299.2L388.3 297.4L388.8 295.4L389.2 293.5L389.7 291.6L390.1 289.9L390.6 288.2L391.1 286.8L391.5 285.5L392.0 284.5L392.4 283.7L392.9 283.2L393.4 283.0L393.8 283.0L394.3 283.2L394.8 283.4L395.2 283.8L395.7 284.2L396.1 284.7L396.6 285.4L397.1 286.1L397.5 286.9L398.0 287.7L398.5 288.6L398.9 289.6L399.4 290.5L399.8 291.5L400.3 292.5L400.8 293.6L401.2 294.6L401.7 295.5L402.2 296.5L402.6 297.4L403.1 298.2L403.5 299.0L404.0 299.7L404.5 300.3L404.9 300.8L405.4 301.3L405.9 301.6L406.3 301.8L406.8 302.0L407.2 302.0L407.7 301.9L408.2 301.7L408.6 301.4L409.1 301.0L409.5 300.4L410.0 299.8L410.5 299.1L410.9 298.3L411.4 297.4L411.9 296.5L412.3 295.5L412.8 294.4L413.2 293.3L413.7 292.2L414.2 291.0L414.6 289.9L415.1 288.7L415.6 287.6L416.0 286.4L416.5 285.3L416.9 284.3L417.4 283.3L417.9 282.3L418.3 281.4L418.8 280.6L419.3 279.9L419.7 279.3L420.2 278.8L420.6 278.3L421.1 278.0L421.6 277.8L422.0 277.7L422.5 277.8L423.0 278.1L423.4 278.6L423.9 279.5L424.3 280.5L424.8 281.8L425.3 283.3L425.7 285.0L426.2 286.9L426.6 288.8L427.1 290.9L427.6 292.9L428.0 295.0L428.5 297.1L429.0 299.0L429.4 300.9L429.9 302.5L430.3 303.8L430.8 304.7L431.3 305.2L431.7 305.3L432.2 305.1L432.7 304.4L433.1 303.3L433.6 301.9L434.0 300.2L434.5 298.4L435.0 296.5L435.4 294.5L435.9 292.6L436.4 290.8L436.8 289.1L437.3 287.5L437.7 286.2L438.2 285.0L438.7 284.1L439.1 283.5L439.6 283.1L440.1 283.0L440.5 283.1L441.0 283.3L441.4 283.6L441.9 283.9L442.4 284.4L442.8 285.0L443.3 285.7L443.7 286.4L444.2 287.2L444.7 288.1L445.1 289.0L445.6 290.0L446.1 291.0L446.5 292.0L447.0 293.0L447.4 294.0L447.9 295.0L448.4 296.0L448.8 296.9L449.3 297.8L449.8 298.6L450.2 299.3L450.7 300.0L451.1 300.6L451.6 301.1L452.1 301.4L452.5 301.7L453.0 301.9L453.5 302.0L453.9 302.0L454.4 301.8L454.8 301.6L455.3 301.2L455.8 300.7L456.2 300.2L456.7 299.5L457.2 298.8L457.6 297.9L458.1 297.0L458.5 296.0L459.0 295.0L459.5 293.9L459.9 292.8L460.4 291.7L460.8 290.5L461.3 289.3L461.8 288.2L462.2 287.0L462.7 285.9L463.2 284.8L463.6 283.8L464.1 282.8L464.5 281.9L465.0 281.0L465.5 280.3L465.9 279.6L466.4 279.0L466.9 278.5L467.3 278.2L467.8 277.9L468.2 277.7L468.7 277.7L469.2 277.9L469.6 278.3L470.1 279.0L470.6 279.9L471.0 281.1L471.5 282.5L471.9 284.1L472.4 285.9L472.9 287.8L473.3 289.7L473.8 291.8L474.3 293.9L474.7 296.0L475.2 298.0L475.6 299.9L476.1 301.6L476.6 303.1L477.0 304.3L477.5 305.0L477.9 305.3L478.4 305.3L478.9 304.9L479.3 304.0L479.8 302.7L480.3 301.1L480.7 299.4L481.2 297.5L481.6 295.6L482.1 293.7L482.6 291.8L483.0 290.0L483.5 288.4L484.0 286.9L484.4 285.6L484.9 284.6L485.3 283.8L485.8 283.2L486.3 283.0L486.7 283.0L487.2 283.2L487.7 283.4L488.1 283.7L488.6 284.2L489.0 284.7L489.5 285.3L490.0 286.0L490.4 286.8L490.9 287.6L491.4 288.5L491.8 289.5L492.3 290.4L492.7 291.4L493.2 292.5L493.7 293.5L494.1 294.5L494.6 295.5L495.0 296.4L495.5 297.3L496.0 298.1L496.4 298.9L496.9 299.6L497.4 300.3L497.8 300.8L498.3 301.2L498.7 301.6L499.2 301.8L499.7 302.0L500.1 302.0L500.6 301.9L501.1 301.7L501.5 301.4L502.0 301.0L502.4 300.5L502.9 299.9L503.4 299.2L503.8 298.4L504.3 297.5L504.8 296.6L505.2 295.6L505.7 294.5L506.1 293.4L506.6 292.3L507.1 291.1L507.5 290.0L508.0 288.8L508.5 287.7L508.9 286.5L509.4 285.4L509.8 284.3L510.3 283.3L510.8 282.4L511.2 281.5L511.7 280.7L512.1 280.0L512.6 279.3L513.1 278.8L513.5 278.4L514.0 278.0L514.5 277.8L514.9 277.7L515.4 277.7L515.8 278.0L516.3 278.6L516.8 279.4L517.2 280.4L517.7 281.7L518.2 283.2L518.6 284.9L519.1 286.7L519.5 288.7L520.0 290.7L520.5 292.8L520.9 294.9L521.4 296.9L521.9 298.9L522.3 300.7L522.8 302.3L523.2 303.7L523.7 304.7L524.2 305.2L524.6 305.3L525.1 305.1L525.5 304.5L526.0 303.4L526.5 302.0L526.9 300.3L527.4 298.5L527.9 296.6L528.3 294.7L528.8 292.8L529.2 291.0L529.7 289.2L530.2 287.6L530.6 286.3L531.1 285.1L531.6 284.2L532.0 283.5L532.5 283.1L532.9 283.0L533.4 283.1L533.9 283.2L534.3 283.5L534.8 283.9L535.3 284.4L535.7 285.0L536.2 285.6L536.6 286.4L537.1 287.2L537.6 288.0L538.0 289.0L538.5 289.9L539.0 290.9L539.4 291.9L539.9 292.9L540.3 293.9L540.8 294.9L541.3 295.9L541.7 296.8L542.2 297.7L542.6 298.5L543.1 299.3L543.6 299.9L544.0 300.5L544.5 301.0L545.0 301.4L545.4 301.7L545.9 301.9L546.3 302.0L546.8 302.0L547.3 301.8L547.7 301.6L548.2 301.2L548.7 300.8L549.1 300.2L549.6 299.6L550.0 298.8L550.5 298.0L551.0 297.1L551.4 296.1L551.9 295.1L552.4 294.0L552.8 292.9L553.3 291.8L553.7 290.6L554.2 289.4L554.7 288.3L555.1 287.1L555.6 286.0L556.1 284.9L556.5 283.9L557.0 282.9L557.4 282.0L557.9 281.1L558.4 280.3L558.8 279.7L559.3 279.1L559.7 278.6L560.2 278.2L560.7 277.9L561.1 277.8L561.6 277.7L562.1 277.8L562.5 278.2L563.0 278.9L563.4 279.8L563.9 281.0L564.4 282.4L564.8 284.0L565.3 285.7L565.8 287.6L566.2 289.6L566.7 291.6L567.1 293.7L567.6 295.8L568.1 297.8L568.5 299.7L569.0 301.5L569.5 303.0L569.9 304.2L570.4 305.0L570.8 305.3L571.3 305.3L571.8 304.9L572.2 304.1L572.7 302.8L573.2 301.3L573.6 299.5L574.1 297.7L574.5 295.8L575.0 293.8L575.5 291.9L575.9 290.1L576.4 288.5L576.8 287.0L577.3 285.7L577.8 284.6L578.2 283.8L578.7 283.3L579.2 283.0L579.6 283.0L580.1 283.1L580.5 283.4L581.0 283.7L581.5 284.1L581.9 284.6L582.4 285.3L582.9 286.0L583.3 286.7L583.8 287.6L584.2 288.5L584.7 289.4L585.2 290.4L585.6 291.4L586.1 292.4L586.6 293.4L587.0 294.4L587.5 295.4L587.9 296.3L588.4 297.2L588.9 298.1L589.3 298.9L589.8 299.6L590.3 300.2L590.7 300.8L591.2 301.2L591.6 301.6L592.1 301.8L592.6 302.0L593.0 302.0L593.5 301.9L593.9 301.7L594.4 301.4L594.9 301.0L595.3 300.5L595.8 299.9L596.3 299.2L596.7 298.5L597.2 297.6L597.6 296.7L598.1 295.7L598.6 294.6L599.0 293.5L599.5 292.4L600.0 291.2L600.4 290.1L600.9 288.9L601.3 287.7L601.8 286.6L602.3 285.5L602.7 284.4L603.2 283.4L603.7 282.5L604.1 281.6L604.6 280.7L605.0 280.0L605.5 279.4L606.0 278.8L606.4 278.4L606.9 278.1L607.4 277.8L607.8 277.7L608.3 277.7L608.7 278.0L609.2 278.5L609.7 279.3L610.1 280.3L610.6 281.6L611.0 283.1L611.5 284.7L612.0 286.6L612.4 288.5L612.9 290.5L613.4 292.6L613.8 294.7L614.3 296.8L614.7 298.7L615.2 300.6L615.7 302.2L616.1 303.6L616.6 304.6L617.1 305.2L617.5 305.3L618.0 305.2L618.4 304.6L618.9 303.5L619.4 302.1L619.8 300.5L620.3 298.7L620.8 296.8L621.2 294.9L621.7 292.9L622.1 291.1L622.6 289.4L623.1 287.8L623.5 286.4L624.0 285.2L624.5 284.2L624.9 283.5L625.4 283.1L625.8 283.0L626.3 283.1L626.8 283.2L627.2 283.5L627.7 283.9L628.1 284.4L628.6 284.9L629.1 285.6L629.5 286.3L630.0 287.1L630.5 288.0L630.9 288.9L631.4 289.8L631.8 290.8L632.3 291.8L632.8 292.8L633.2 293.9L633.7 294.8L634.2 295.8L634.6 296.7L635.1 297.6L635.5 298.4L636.0 299.2L636.5 299.9L636.9 300.5L637.4 301.0L637.9 301.4L638.3 301.7L638.8 301.9L639.2 302.0L639.7 302.0L640.2 301.9L640.6 301.6L641.1 301.3L641.6 300.8L642.0 300.3L642.5 299.6L642.9 298.9L643.4 298.1L643.9 297.2L644.3 296.2L644.8 295.2L645.2 294.1L645.7 293.0L646.2 291.9L646.6 290.7L647.1 289.5L647.6 288.4L648.0 287.2L648.5 286.1L648.9 285.0L649.4 284.0L649.9 283.0L650.3 282.0L650.8 281.2L651.3 280.4L651.7 279.7L652.2 279.1L652.6 278.6L653.1 278.2L653.6 277.9L654.0 277.8L654.5 277.7L655.0 277.8L655.4 278.2L655.9 278.9L656.3 279.8L656.8 280.9L657.3 282.3L657.7 283.8L658.2 285.6L658.7 287.4L659.1 289.4L659.6 291.5L660.0 293.6L660.5 295.6L661.0 297.7L661.4 299.6L661.9 301.4L662.3 302.9L662.8 304.1L663.3 304.9L663.7 305.3L664.2 305.3L664.7 305.0L665.1 304.1L665.6 302.9L666.0 301.4L666.5 299.7L667.0 297.8L667.4 295.9L667.9 294.0L668.4 292.1L668.8 290.3L669.3 288.6L669.7 287.1L670.2 285.8L670.7 284.7L671.1 283.9L671.6 283.3L672.1 283.0L672.5 283.0L673.0 283.1L673.4 283.3L673.9 283.7L674.4 284.1L674.8 284.6L675.3 285.2L675.8 285.9L676.2 286.7L676.7 287.5L677.1 288.4L677.6 289.3L678.1 290.3L678.5 291.3L679.0 292.3L679.4 293.3L679.9 294.3L680.4 295.3L680.8 296.2L681.3 297.2L681.8 298.0L682.2 298.8L682.7 299.5L683.1 300.2L683.6 300.7L684.1 301.2L684.5 301.5L685.0 301.8L685.5 302.0L685.9 302.0L686.4 301.9L686.8 301.8L687.3 301.5L687.8 301.1L688.2 300.6L688.7 300.0L689.2 299.3L689.6 298.5L690.1 297.7L690.5 296.7L691.0 295.7L691.5 294.7L691.9 293.6L692.4 292.5L692.9 291.3L693.3 290.2L693.8 289.0L694.2 287.8L694.7 286.7L695.2 285.6L695.6 284.5L696.1 283.5L696.5 282.5L697.0 281.6L697.5 280.8L697.9 280.1L698.4 279.4L698.9 278.9L699.3 278.4L699.8 278.1L700.2 277.8L700.7 277.7L701.2 277.7L701.6 278.0L702.1 278.5L702.6 279.2L703.0 280.3L703.5 281.5L703.9 283.0L704.4 284.6L704.9 286.4L705.3 288.3L705.8 290.4L706.3 292.4L706.7 294.5L707.2 296.6L707.6 298.6L708.1 300.4L708.6 302.1L709.0 303.5L709.5 304.6L710.0 305.2L710.4 305.3L710.9 305.2L711.3 304.6L711.8 303.6L712.3 302.2L712.7 300.6L713.2 298.8L713.6 296.9L714.1 295.0L714.6 293.1L715.0 291.2L715.5 289.5L716.0 287.9L716.4 286.5L716.9 285.3L717.3 284.3L717.8 283.6L718.3 283.1L718.7 283.0L719.2 283.1L719.7 283.2L720.1 283.5L720.6 283.8L721.0 284.3L721.5 284.9L722.0 285.5L722.4 286.2L722.9 287.0L723.4 287.9L723.8 288.8L724.3 289.8L724.7 290.7L725.2 291.7L725.7 292.8L726.1 293.8L726.6 294.8L727.1 295.7L727.5 296.7L728.0 297.6L728.4 298.4L728.9 299.1L729.4 299.8L729.8 300.4L730.3 300.9L730.7 301.4L731.2 301.7L731.7 301.9L732.1 302.0L732.6 302.0L733.1 301.9L733.5 301.6L734.0 301.3L734.4 300.9L734.9 300.3L735.4 299.7L735.8 299.0L736.3 298.1L736.8 297.2L737.2 296.3L737.7 295.3L738.1 294.2L738.6 293.1L739.1 292.0L739.5 290.8L740.0 289.6L740.5 288.5L740.9 287.3L741.4 286.2L741.8 285.1L742.3 284.0L742.8 283.0L743.2 282.1L743.7 281.2L744.2 280.5L744.6 279.8L745.1 279.2L745.5 278.7L746.0 278.3L746.5 278.0L746.9 277.8L747.4 277.7L747.8 277.8L748.3 278.2L748.8 278.8L749.2 279.7L749.7 280.8L750.2 282.1L750.6 283.7L751.1 285.4L751.5 287.3L752.0 289.3L752.5 291.3L752.9 293.4L753.4 295.5L753.9 297.5L754.3 299.4L754.8 301.2L755.2 302.8L755.7 304.0L756.2 304.9L756.6 305.3L757.1 305.3L757.6 305.0L758.0 304.2L758.5 303.0L758.9 301.5L759.4 299.8L759.9 298.0L760.3 296.1L760.8 294.1L761.3 292.2L761.7 290.4L762.2 288.7L762.6 287.2L763.1 285.9L763.6 284.8L764.0 283.9L764.5 283.3L764.9 283.0L765.4 283.0L765.9 283.1L766.3 283.3L766.8 283.6L767.3 284.0L767.7 284.6L768.2 285.2L768.6 285.8L769.1 286.6L769.6 287.4L770.0 288.3L770.5 289.2L771.0 290.2L771.4 291.2L771.9 292.2L772.3 293.2L772.8 294.2L773.3 295.2L773.7 296.2L774.2 297.1L774.7 297.9L775.1 298.7L775.6 299.5L776.0 300.1L776.5 300.7L777.0 301.1L777.4 301.5L777.9 301.8L778.4 301.9L778.8 302.0L779.3 301.9L779.7 301.8L780.2 301.5L780.7 301.1L781.1 300.6L781.6 300.0L782.0 299.4L782.5 298.6L783.0 297.7L783.4 296.8L783.9 295.8L784.4 294.8L784.8 293.7L785.3 292.6L785.7 291.4L786.2 290.3L786.7 289.1L787.1 287.9L787.6 286.8L788.1 285.7L788.5 284.6L789.0 283.6L789.4 282.6L789.9 281.7L790.4 280.9L790.8 280.1L791.3 279.5L791.8 278.9L792.2 278.5L792.7 278.1L793.1 277.9L793.6 277.7L794.1 277.7L794.5 277.9L795.0 278.4L795.5 279.2L795.9 280.2L796.4 281.4L796.8 282.8L797.3 284.5L797.8 286.3L798.2 288.2L798.7 290.2L799.1 292.3L799.6 294.4L800.1 296.4L800.5 298.4L801.0 300.3L801.5 302.0L801.9 303.4L802.4 304.5L802.8 305.1L803.3 305.3L803.8 305.2L804.2 304.7L804.7 303.7L805.2 302.4L805.6 300.8L806.1 299.0L806.5 297.1L807.0 295.2L807.5 293.3L807.9 291.4L808.4 289.6L808.9 288.0L809.3 286.6L809.8 285.4L810.2 284.4L810.7 283.6L811.2 283.2L811.6 283.0L812.1 283.0L812.6 283.2L813.0 283.5L813.5 283.8L813.9 284.3L814.4 284.8L814.9 285.5L815.3 286.2L815.8 287.0L816.2 287.8L816.7 288.7L817.2 289.7L817.6 290.7L818.1 291.7L818.6 292.7L819.0 293.7L819.5 294.7L819.9 295.7L820.4 296.6L820.9 297.5L821.3 298.3L821.8 299.1L822.3 299.8L822.7 300.4L823.2 300.9L823.6 301.3L824.1 301.7L824.6 301.9L825.0 302.0L825.5 302.0L826.0 301.9L826.4 301.7L826.9 301.3L827.3 300.9L827.8 300.4L828.3 299.7L828.7 299.0L829.2 298.2L829.6 297.3L830.1 296.4L830.6 295.4L831.0 294.3L831.5 293.2L832.0 292.0L832.4 290.9L832.9 289.7L833.3 288.6L833.8 287.4L834.3 286.3L834.7 285.2L835.2 284.1L835.7 283.1L836.1 282.2L836.6 281.3L837.0 280.5L837.5 279.8L838.0 279.2L838.4 278.7L838.9 278.3L839.4 278.0L839.8 277.8L840.3 277.7L840.7 277.8L841.2 278.1L841.7 278.7L842.1 279.6L842.6 280.7L843.1 282.0L843.5 283.6L844.0 285.3L844.4 287.1L844.9 289.1L845.4 291.1L845.8 293.2L846.3 295.3L846.7 297.4L847.2 299.3L847.7 301.1L848.1 302.7L848.6 303.9L849.1 304.8L849.5 305.3" stroke="#007f8f"/>
<path d="M111.3 434.5L111.5 403.2L111.5 386.1L111.6 377.1L111.7 371.3L111.8 367.3L111.9 364.3L111.9 364.3L112.0 362.0L112.1 360.1L112.2 358.7L112.3 357.4L112.4 356.4L112.4 356.4L112.5 355.5L112.6 354.7L112.7 354.0L112.8 353.4L112.8 352.9L112.8 352.9L112.9 352.4L113.0 352.0L113.1 351.6L113.2 351.2L113.3 350.9L113.3 350.9L113.4 350.6L113.5 350.3L113.6 350.1L113.7 349.8L113.8 349.6L113.8 349.6L113.9 349.3L114.0 349.1L114.0 348.9L114.1 348.6L114.2 348.4L114.2 348.4L114.3 348.2L114.4 348.0L114.7 347.3L115.2 346.1L115.6 345.0L116.1 344.1L116.5 343.2L117.0 342.7L117.5 342.4L117.9 342.1L118.4 341.7L118.9 341.4L119.3 340.6L119.8 339.9L120.2 339.2L120.7 338.5L121.2 338.0L121.6 337.7L122.1 337.6L122.5 337.5L123.0 337.5L123.5 337.6L123.9 337.8L124.4 338.0L124.9 338.2L125.3 338.5L125.8 338.7L126.2 339.0L126.7 339.2L127.2 339.4L127.6 339.6L128.1 339.8L128.6 340.0L129.0 340.1L129.5 340.1L129.9 340.1L130.4 340.0L130.9 339.9L131.3 339.7L131.8 339.4L132.3 339.2L132.7 338.9L133.2 338.5L133.6 338.2L134.1 337.8L134.6 337.5L135.0 337.3L135.5 337.1L136.0 336.9L136.4 336.6L136.9 336.1L137.3 335.4L137.8 334.7L138.3 334.0L138.7 333.3L139.2 332.6L139.6 332.1L140.1 331.6L140.6 331.1L141.0 330.7L141.5 330.1L142.0 329.6L142.4 329.3L142.9 329.0L143.3 328.7L143.8 328.7L144.3 328.6L144.7 328.6L145.2 328.5L145.7 328.6L146.1 328.8L146.6 329.0L147.0 329.2L147.5 329.4L148.0 329.3L148.4 329.1L148.9 328.8L149.4 328.6L149.8 328.2L150.3 328.1L150.7 327.9L151.2 327.7L151.7 327.4L152.1 327.1L152.6 326.6L153.1 326.1L153.5 325.7L154.0 325.1L154.4 324.6L154.9 324.0L155.4 323.5L155.8 322.9L156.3 322.4L156.7 321.9L157.2 321.5L157.7 321.1L158.1 320.7L158.6 320.4L159.1 320.3L159.5 320.3L160.0 320.3L160.4 320.5L160.9 320.6L161.4 320.4L161.8 320.1L162.3 319.8L162.8 319.6L163.2 319.3L163.7 319.6L164.1 319.9L164.6 320.2L165.1 320.4L165.5 320.7L166.0 320.8L166.5 321.0L166.9 321.1L167.4 321.2L167.8 321.3L168.3 321.1L168.8 321.0L169.2 320.9L169.7 320.7L170.2 320.7L170.6 320.7L171.1 320.7L171.5 320.7L172.0 320.7L172.5 320.8L172.9 320.8L173.4 320.9L173.8 320.9L174.3 321.0L174.8 321.0L175.2 321.0L175.7 321.0L176.2 321.0L176.6 320.9L177.1 320.6L177.5 320.3L178.0 319.9L178.5 319.6L178.9 319.3L179.4 319.3L179.9 319.2L180.3 319.1L180.8 319.0L181.2 318.8L181.7 318.6L182.2 318.4L182.6 318.2L183.1 318.0L183.6 317.9L184.0 317.8L184.5 317.6L184.9 317.4L185.4 317.2L185.9 316.9L186.3 316.6L186.8 316.3L187.3 316.0L187.7 315.7L188.2 315.4L188.6 315.1L189.1 314.8L189.6 314.6L190.0 314.3L190.5 313.9L190.9 313.5L191.4 313.2L191.9 312.9L192.3 312.6L192.8 312.4L193.3 312.2L193.7 312.0L194.2 311.9L194.6 311.7L195.1 311.5L195.6 311.3L196.0 311.1L196.5 310.9L197.0 310.8L197.4 310.6L197.9 310.5L198.3 310.3L198.8 310.2L199.3 310.1L199.7 310.0L200.2 309.9L200.7 309.8L201.1 309.7L201.6 309.5L202.0 309.4L202.5 309.3L203.0 309.2L203.4 309.0L203.9 308.9L204.4 308.7L204.8 308.5L205.3 308.4L205.7 308.3L206.2 308.4L206.7 308.4L207.1 308.4L207.6 308.4L208.0 308.2L208.5 308.0L209.0 307.8L209.4 307.6L209.9 307.4L210.4 307.3L210.8 307.1L211.3 306.9L211.7 306.7L212.2 306.6L212.7 306.6L213.1 306.6L213.6 306.6L214.1 306.6L214.5 306.5L215.0 306.3L215.4 306.1L215.9 305.9L216.4 305.7L216.8 305.6L217.3 305.5L217.8 305.5L218.2 305.4L218.7 305.4L219.1 305.2L219.6 305.1L220.1 305.0L220.5 304.8L221.0 304.7L221.4 304.6L221.9 304.5L222.4 304.4L222.8 304.3L223.3 304.2L223.8 304.0L224.2 303.9L224.7 303.8L225.1 303.7L225.6 303.5L226.1 303.4L226.5 303.2L227.0 303.1L227.5 302.9L227.9 302.8L228.4 302.7L228.8 302.6L229.3 302.5L229.8 302.4L230.2 302.4L230.7 302.4L231.2 302.3L231.6 302.3L232.1 302.2L232.5 301.9L233.0 301.6L233.5 301.3L233.9 301.0L234.4 300.8L234.9 300.7L235.3 300.7L235.8 300.7L236.2 300.6L236.7 300.6L237.2 300.5L237.6 300.3L238.1 300.2L238.5 300.1L239.0 299.9L239.5 299.8L239.9 299.6L240.4 299.4L240.9 299.2L241.3 299.0L241.8 298.9L242.2 298.8L242.7 298.6L243.2 298.5L243.6 298.5L244.1 298.5L244.6 298.6L245.0 298.6L245.5 298.5L245.9 298.3L246.4 298.1L246.9 297.8L247.3 297.6L247.8 297.5L248.3 297.5L248.7 297.4L249.2 297.4L249.6 297.3L250.1 297.2L250.6 297.0L251.0 296.8L251.5 296.6L252.0 296.4L252.4 296.2L252.9 296.0L253.3 295.9L253.8 295.7L254.3 295.6L254.7 295.5L255.2 295.3L255.6 295.2L256.1 295.1L256.6 295.0L257.0 294.9L257.5 294.8L258.0 294.7L258.4 294.6L258.9 294.5L259.3 294.4L259.8 294.3L260.3 294.3L260.7 294.2L261.2 294.1L261.7 294.0L262.1 293.9L262.6 293.8L263.0 293.7L263.5 293.7L264.0 293.6L264.4 293.5L264.9 293.5L265.4 293.4L265.8 293.4L266.3 293.3L266.7 293.3L267.2 293.2L267.7 293.2L268.1 293.2L268.6 293.2L269.1 293.2L269.5 293.2L270.0 293.2L270.4 293.1L270.9 293.1L271.4 293.0L271.8 292.9L272.3 292.8L272.7 292.7L273.2 292.6L273.7 292.5L274.1 292.4L274.6 292.3L275.1 292.3L275.5 292.3L276.0 292.2L276.4 292.2L276.9 292.2L277.4 292.1L277.8 292.1L278.3 292.1L278.8 292.0L279.2 291.9L279.7 291.8L280.1 291.7L280.6 291.6L281.1 291.5L281.5 291.4L282.0 291.3L282.5 291.3L282.9 291.2L283.4 291.1L283.8 291.0L284.3 290.8L284.8 290.7L285.2 290.6L285.7 290.5L286.2 290.4L286.6 290.3L287.1 290.2L287.5 290.2L288.0 290.1L288.5 290.0L288.9 289.9L289.4 289.8L289.8 289.7L290.3 289.6L290.8 289.5L291.2 289.4L291.7 289.3L292.2 289.2L292.6 289.0L293.1 288.8L293.5 288.7L294.0 288.5L294.5 288.5L294.9 288.4L295.4 288.4L295.9 288.4L296.3 288.3L296.8 288.2L297.2 288.0L297.7 287.8L298.2 287.7L298.6 287.5L299.1 287.5L299.6 287.6L300.0 287.6L300.5 287.7L300.9 287.6L301.4 287.5L301.9 287.4L302.3 287.2L302.8 287.1L303.3 287.0L303.7 286.9L304.2 286.8L304.6 286.8L305.1 286.7L305.6 286.6L306.0 286.5L306.5 286.5L306.9 286.4L307.4 286.3L307.9 286.2L308.3 286.1L308.8 286.0L309.3 285.9L309.7 285.8L310.2 285.8L310.6 285.9L311.1 286.0L311.6 286.0L312.0 286.1L312.5 286.1L313.0 286.0L313.4 286.0L313.9 286.0L314.3 286.0L314.8 286.1L315.3 286.1L315.7 286.2L316.2 286.2L316.7 286.1L317.1 286.0L317.6 285.9L318.0 285.7L318.5 285.6L319.0 285.7L319.4 285.8L319.9 285.8L320.4 285.9L320.8 286.0L321.3 285.9L321.7 285.8L322.2 285.7L322.7 285.6L323.1 285.5L323.6 285.5L324.0 285.5L324.5 285.5L325.0 285.4L325.4 285.3L325.9 285.2L326.4 285.0L326.8 284.8L327.3 284.7L327.7 284.7L328.2 284.7L328.7 284.7L329.1 284.7L329.6 284.8L330.1 284.7L330.5 284.6L331.0 284.5L331.4 284.4L331.9 284.4L332.4 284.3L332.8 284.3L333.3 284.3L333.8 284.2L334.2 284.2L334.7 284.1L335.1 284.0L335.6 283.9L336.1 283.8L336.5 283.7L337.0 283.6L337.5 283.5L337.9 283.4L338.4 283.3L338.8 283.3L339.3 283.3L339.8 283.4L340.2 283.4L340.7 283.4L341.1 283.4L341.6 283.3L342.1 283.3L342.5 283.2L343.0 283.2L343.5 283.2L343.9 283.2L344.4 283.1L344.8 283.1L345.3 283.1L345.8 283.1L346.2 283.2L346.7 283.2L347.2 283.2L347.6 283.2L348.1 283.2L348.5 283.3L349.0 283.3L349.5 283.3L349.9 283.3L350.4 283.3L350.9 283.3L351.3 283.3L351.8 283.4L352.2 283.4L352.7 283.4L353.2 283.4L353.6 283.4L354.1 283.4L354.6 283.4L355.0 283.5L355.5 283.6L355.9 283.6L356.4 283.7L356.9 283.9L357.3 284.0L357.8 284.2L358.2 284.3L358.7 284.4L359.2 284.4L359.6 284.5L360.1 284.5L360.6 284.6L361.0 284.6L361.5 284.6L361.9 284.7L362.4 284.7L362.9 284.7L363.3 284.8L363.8 284.8L364.3 284.8L364.7 284.8L365.2 284.9L365.6 284.9L366.1 285.0L366.6 285.0L367.0 285.1L367.5 285.1L368.0 285.1L368.4 285.1L368.9 285.2L369.3 285.2L369.8 285.2L370.3 285.2L370.7 285.2L371.2 285.2L371.7 285.2L372.1 285.2L372.6 285.2L373.0 285.2L373.5 285.1L374.0 285.1L374.4 285.2L374.9 285.3L375.3 285.4L375.8 285.5L376.3 285.5L376.7 285.4L377.2 285.4L377.7 285.3L378.1 285.2L378.6 285.2L379.0 285.1L379.5 285.1L380.0 285.0L380.4 285.0L380.9 284.9L381.4 284.9L381.8 284.9L382.3 284.8L382.7 284.8L383.2 284.8L383.7 284.8L384.1 284.8L384.6 284.8L385.1 284.8L385.5 284.9L386.0 284.9L386.4 284.9L386.9 285.0L387.4 285.0L387.8 285.0L388.3 285.0L388.8 285.0L389.2 285.0L389.7 285.0L390.1 285.0L390.6 285.0L391.1 285.0L391.5 285.0L392.0 285.0L392.4 285.0L392.9 285.1L393.4 285.1L393.8 285.1L394.3 285.2L394.8 285.2L395.2 285.2L395.7 285.2L396.1 285.3L396.6 285.3L397.1 285.3L397.5 285.3L398.0 285.4L398.5 285.4L398.9 285.5L399.4 285.7L399.8 285.8L400.3 285.9L400.8 286.0L401.2 286.0L401.7 286.1L402.2 286.1L402.6 286.1L403.1 286.2L403.5 286.3L404.0 286.4L404.5 286.6L404.9 286.7L405.4 286.7L405.9 286.6L406.3 286.6L406.8 286.5L407.2 286.5L407.7 286.5L408.2 286.6L408.6 286.6L409.1 286.7L409.5 286.7L410.0 286.8L410.5 286.9L410.9 286.9L411.4 287.0L411.9 287.0L412.3 287.0L412.8 287.0L413.2 286.9L413.7 286.9L414.2 286.9L414.6 286.8L415.1 286.8L415.6 286.8L416.0 286.7L416.5 286.7L416.9 286.7L417.4 286.7L417.9 286.7L418.3 286.7L418.8 286.7L419.3 286.7L419.7 286.7L420.2 286.7L420.6 286.7L421.1 286.6L421.6 286.6L422.0 286.6L422.5 286.5L423.0 286.5L423.4 286.4L423.9 286.4L424.3 286.3L424.8 286.2L425.3 286.2L425.7 286.2L426.2 286.2L426.6 286.2L427.1 286.1L427.6 286.1L428.0 286.1L428.5 286.0L429.0 286.0L429.4 285.9L429.9 285.9L430.3 285.8L430.8 285.7L431.3 285.7L431.7 285.6L432.2 285.6L432.7 285.5L433.1 285.5L433.6 285.5L434.0 285.4L434.5 285.4L435.0 285.4L435.4 285.3L435.9 285.3L436.4 285.3L436.8 285.3L437.3 285.4L437.7 285.4L438.2 285.4L438.7 285.4L439.1 285.4L439.6 285.5L440.1 285.5L440.5 285.5L441.0 285.5L441.4 285.5L441.9 285.5L442.4 285.5L442.8 285.5L443.3 285.5L443.7 285.5L444.2 285.6L444.7 285.6L445.1 285.6L445.6 285.6L446.1 285.6L446.5 285.6L447.0 285.7L447.4 285.7L447.9 285.6L448.4 285.6L448.8 285.6L449.3 285.6L449.8 285.7L450.2 285.7L450.7 285.7L451.1 285.8L451.6 285.8L452.1 285.9L452.5 285.9L453.0 286.0L453.5 286.1L453.9 286.2L454.4 286.2L454.8 286.2L455.3 286.2L455.8 286.2L456.2 286.2L456.7 286.2L457.2 286.2L457.6 286.3L458.1 286.3L458.5 286.3L459.0 286.2L459.5 286.2L459.9 286.1L460.4 286.0L460.8 286.0L461.3 286.0L461.8 286.0L462.2 286.0L462.7 286.0L463.2 286.0L463.6 286.0L464.1 286.0L464.5 286.0L465.0 285.9L465.5 285.9L465.9 285.8L466.4 285.8L466.9 285.7L467.3 285.7L467.8 285.6L468.2 285.5L468.7 285.4L469.2 285.3L469.6 285.2L470.1 285.2L470.6 285.1L471.0 285.1L471.5 285.1L471.9 285.0L472.4 285.0L472.9 284.9L473.3 284.9L473.8 284.9L474.3 284.8L474.7 284.7L475.2 284.6L475.6 284.6L476.1 284.5L476.6 284.5L477.0 284.5L477.5 284.5L477.9 284.6L478.4 284.6L478.9 284.6L479.3 284.6L479.8 284.5L480.3 284.5L480.7 284.5L481.2 284.5L481.6 284.4L482.1 284.4L482.6 284.3L483.0 284.3L483.5 284.4L484.0 284.5L484.4 284.6L484.9 284.7L485.3 284.6L485.8 284.6L486.3 284.5L486.7 284.5L487.2 284.4L487.7 284.5L488.1 284.5L488.6 284.5L489.0 284.6L489.5 284.6L490.0 284.6L490.4 284.7L490.9 284.7L491.4 284.8L491.8 284.8L492.3 284.8L492.7 284.9L493.2 284.9L493.7 284.9L494.1 285.0L494.6 285.1L495.0 285.2L495.5 285.3L496.0 285.3L496.4 285.4L496.9 285.4L497.4 285.5L497.8 285.5L498.3 285.6L498.7 285.7L499.2 285.8L499.7 285.9L500.1 285.9L500.6 286.0L501.1 286.0L501.5 286.0L502.0 286.0L502.4 286.0L502.9 286.1L503.4 286.1L503.8 286.1L504.3 286.1L504.8 286.1L505.2 286.2L505.7 286.1L506.1 286.1L506.6 286.1L507.1 286.1L507.5 286.1L508.0 286.0L508.5 286.0L508.9 286.0L509.4 285.9L509.8 285.9L510.3 286.0L510.8 286.0L511.2 286.0L511.7 286.0L512.1 286.0L512.6 285.9L513.1 285.9L513.5 285.8L514.0 285.8L514.5 285.8L514.9 285.8L515.4 285.9L515.8 285.9L516.3 285.8L516.8 285.8L517.2 285.7L517.7 285.6L518.2 285.5L518.6 285.5L519.1 285.6L519.5 285.6L520.0 285.6L520.5 285.6L520.9 285.5L521.4 285.4L521.9 285.4L522.3 285.3L522.8 285.2L523.2 285.2L523.7 285.2L524.2 285.1L524.6 285.1L525.1 285.1L525.5 285.0L526.0 285.0L526.5 284.9L526.9 284.9L527.4 284.9L527.9 284.9L528.3 284.8L528.8 284.8L529.2 284.8L529.7 284.8L530.2 284.8L530.6 284.8L531.1 284.9L531.6 284.9L532.0 284.9L532.5 284.9L532.9 284.9L533.4 285.0L533.9 285.0L534.3 284.9L534.8 284.9L535.3 284.9L535.7 284.8L536.2 284.9L536.6 284.9L537.1 285.0L537.6 285.1L538.0 285.2L538.5 285.3L539.0 285.4L539.4 285.5L539.9 285.6L540.3 285.7L540.8 285.7L541.3 285.6L541.7 285.6L542.2 285.5L542.6 285.5L543.1 285.6L543.6 285.6L544.0 285.6L544.5 285.7L545.0 285.7L545.4 285.7L545.9 285.8L546.3 285.8L546.8 285.8L547.3 285.9L547.7 285.9L548.2 285.9L548.7 285.9L549.1 285.9L549.6 286.0L550.0 286.1L550.5 286.2L551.0 286.3L551.4 286.4L551.9 286.4L552.4 286.4L552.8 286.4L553.3 286.4L553.7 286.3L554.2 286.3L554.7 286.4L555.1 286.4L555.6 286.4L556.1 286.4L556.5 286.4L557.0 286.4L557.4 286.5L557.9 286.5L558.4 286.5L558.8 286.5L559.3 286.5L559.7 286.5L560.2 286.5L560.7 286.4L561.1 286.3L561.6 286.1L562.1 286.0L562.5 285.8L563.0 285.8L563.4 285.8L563.9 285.8L564.4 285.8L564.8 285.9L565.3 285.8L565.8 285.7L566.2 285.7L566.7 285.6L567.1 285.5L567.6 285.5L568.1 285.4L568.5 285.4L569.0 285.3L569.5 285.2L569.9 285.2L570.4 285.2L570.8 285.1L571.3 285.1L571.8 285.0L572.2 285.0L572.7 284.9L573.2 284.9L573.6 284.8L574.1 284.8L574.5 284.9L575.0 284.9L575.5 284.9L575.9 284.9L576.4 284.9L576.8 284.9L577.3 284.8L577.8 284.8L578.2 284.8L578.7 284.8L579.2 284.8L579.6 284.8L580.1 284.8L580.5 284.8L581.0 284.8L581.5 284.9L581.9 284.9L582.4 285.0L582.9 285.0L583.3 285.0L583.8 285.1L584.2 285.1L584.7 285.1L585.2 285.1L585.6 285.2L586.1 285.2L586.6 285.2L587.0 285.3L587.5 285.3L587.9 285.3L588.4 285.4L588.9 285.4L589.3 285.5L589.8 285.6L590.3 285.7L590.7 285.8L591.2 285.8L591.6 285.9L592.1 285.9L592.6 285.9L593.0 285.9L593.5 285.9L593.9 285.9L594.4 285.9L594.9 286.0L595.3 286.0L595.8 286.0L596.3 286.0L596.7 286.0L597.2 286.0L597.6 286.0L598.1 286.0L598.6 286.0L599.0 286.0L599.5 286.0L600.0 286.1L600.4 286.1L600.9 286.1L601.3 286.0L601.8 286.0L602.3 286.0L602.7 286.0L603.2 286.0L603.7 286.0L604.1 286.0L604.6 286.0L605.0 286.0L605.5 286.0L606.0 286.0L606.4 285.9L606.9 285.9L607.4 285.8L607.8 285.7L608.3 285.6L608.7 285.5L609.2 285.4L609.7 285.4L610.1 285.4L610.6 285.4L611.0 285.5L611.5 285.5L612.0 285.4L612.4 285.4L612.9 285.4L613.4 285.4L613.8 285.3L614.3 285.3L614.7 285.2L615.2 285.1L615.7 285.1L616.1 285.0L616.6 284.9L617.1 284.9L617.5 284.8L618.0 284.7L618.4 284.8L618.9 284.8L619.4 284.8L619.8 284.9L620.3 284.9L620.8 284.8L621.2 284.7L621.7 284.7L622.1 284.6L622.6 284.5L623.1 284.5L623.5 284.5L624.0 284.5L624.5 284.4L624.9 284.4L625.4 284.4L625.8 284.4L626.3 284.5L626.8 284.5L627.2 284.5L627.7 284.6L628.1 284.6L628.6 284.7L629.1 284.7L629.5 284.8L630.0 284.9L630.5 284.9L630.9 285.0L631.4 285.0L631.8 285.1L632.3 285.1L632.8 285.2L633.2 285.2L633.7 285.3L634.2 285.3L634.6 285.3L635.1 285.3L635.5 285.3L636.0 285.3L636.5 285.3L636.9 285.3L637.4 285.3L637.9 285.3L638.3 285.4L638.8 285.4L639.2 285.5L639.7 285.5L640.2 285.6L640.6 285.6L641.1 285.7L641.6 285.7L642.0 285.7L642.5 285.7L642.9 285.8L643.4 285.8L643.9 285.9L644.3 285.9L644.8 286.0L645.2 285.9L645.7 285.9L646.2 285.8L646.6 285.8L647.1 285.8L647.6 285.9L648.0 285.9L648.5 286.0L648.9 286.1L649.4 286.1L649.9 286.1L650.3 286.1L650.8 286.1L651.3 286.1L651.7 286.1L652.2 286.0L652.6 286.0L653.1 285.9L653.6 285.9L654.0 285.9L654.5 285.8L655.0 285.8L655.4 285.8L655.9 285.8L656.3 285.7L656.8 285.6L657.3 285.6L657.7 285.5L658.2 285.4L658.7 285.4L659.1 285.3L659.6 285.2L660.0 285.2L660.5 285.2L661.0 285.2L661.4 285.1L661.9 285.1L662.3 285.1L662.8 285.1L663.3 285.2L663.7 285.2L664.2 285.2L664.7 285.3L665.1 285.2L665.6 285.2L666.0 285.2L666.5 285.1L667.0 285.1L667.4 285.0L667.9 285.0L668.4 284.9L668.8 284.9L669.3 284.9L669.7 284.9L670.2 284.9L670.7 285.0L671.1 285.0L671.6 285.0L672.1 285.0L672.5 285.0L673.0 284.9L673.4 284.9L673.9 284.9L674.4 285.0L674.8 285.1L675.3 285.1L675.8 285.2L676.2 285.2L676.7 285.2L677.1 285.2L677.6 285.2L678.1 285.2L678.5 285.2L679.0 285.2L679.4 285.2L679.9 285.2L680.4 285.2L680.8 285.3L681.3 285.4L681.8 285.4L682.2 285.5L682.7 285.5L683.1 285.5L683.6 285.5L684.1 285.5L684.5 285.4L685.0 285.5L685.5 285.5L685.9 285.5L686.4 285.5L686.8 285.6L687.3 285.6L687.8 285.6L688.2 285.6L688.7 285.6L689.2 285.6L689.6 285.7L690.1 285.8L690.5 285.8L691.0 285.9L691.5 285.9L691.9 285.9L692.4 285.9L692.9 285.9L693.3 285.9L693.8 285.9L694.2 285.9L694.7 285.9L695.2 285.9L695.6 285.9L696.1 285.9L696.5 285.9L697.0 285.9L697.5 285.8L697.9 285.8L698.4 285.9L698.9 285.9L699.3 285.9L699.8 286.0L700.2 286.0L700.7 285.9L701.2 285.8L701.6 285.7L702.1 285.7L702.6 285.6L703.0 285.6L703.5 285.5L703.9 285.5L704.4 285.5L704.9 285.5L705.3 285.5L705.8 285.5L706.3 285.6L706.7 285.6L707.2 285.6L707.6 285.6L708.1 285.6L708.6 285.5L709.0 285.5L709.5 285.5L710.0 285.4L710.4 285.4L710.9 285.3L711.3 285.3L711.8 285.2L712.3 285.1L712.7 285.0L713.2 284.9L713.6 284.9L714.1 285.0L714.6 285.0L715.0 285.0L715.5 285.1L716.0 285.1L716.4 285.1L716.9 285.2L717.3 285.2L717.8 285.3L718.3 285.3L718.7 285.3L719.2 285.3L719.7 285.3L720.1 285.3L720.6 285.4L721.0 285.4L721.5 285.5L722.0 285.6L722.4 285.6L722.9 285.6L723.4 285.5L723.8 285.5L724.3 285.4L724.7 285.4L725.2 285.5L725.7 285.6L726.1 285.7L726.6 285.8L727.1 285.9L727.5 285.9L728.0 285.9L728.4 285.8L728.9 285.8L729.4 285.9L729.8 286.0L730.3 286.1L730.7 286.2L731.2 286.3L731.7 286.3L732.1 286.3L732.6 286.3L733.1 286.3L733.5 286.3L734.0 286.3L734.4 286.4L734.9 286.4L735.4 286.5L735.8 286.5L736.3 286.5L736.8 286.4L737.2 286.4L737.7 286.3L738.1 286.3L738.6 286.3L739.1 286.3L739.5 286.3L740.0 286.2L740.5 286.2L740.9 286.2L741.4 286.2L741.8 286.2L742.3 286.2L742.8 286.2L743.2 286.2L743.7 286.2L744.2 286.2L744.6 286.2L745.1 286.2L745.5 286.1L746.0 286.1L746.5 286.1L746.9 286.1L747.4 286.1L747.8 286.1L748.3 286.2L748.8 286.2L749.2 286.2L749.7 286.2L750.2 286.2L750.6 286.1L751.1 286.1L751.5 286.0L752.0 286.0L752.5 285.9L752.9 285.8L753.4 285.8L753.9 285.7L754.3 285.6L754.8 285.5L755.2 285.5L755.7 285.4L756.2 285.4L756.6 285.4L757.1 285.4L757.6 285.4L758.0 285.4L758.5 285.4L758.9 285.3L759.4 285.3L759.9 285.2L760.3 285.3L760.8 285.3L761.3 285.4L761.7 285.4L762.2 285.5L762.6 285.5L763.1 285.4L763.6 285.4L764.0 285.4L764.5 285.3L764.9 285.4L765.4 285.4L765.9 285.4L766.3 285.4L766.8 285.4L767.3 285.4L767.7 285.4L768.2 285.4L768.6 285.4L769.1 285.4L769.6 285.3L770.0 285.3L770.5 285.3L771.0 285.3L771.4 285.3L771.9 285.4L772.3 285.5L772.8 285.5L773.3 285.6L773.7 285.6L774.2 285.7L774.7 285.7L775.1 285.7L775.6 285.7L776.0 285.8L776.5 285.9L777.0 286.0L777.4 286.0L777.9 286.1L778.4 286.1L778.8 286.1L779.3 286.2L779.7 286.2L780.2 286.2L780.7 286.2L781.1 286.2L781.6 286.1L782.0 286.1L782.5 286.1L783.0 286.2L783.4 286.2L783.9 286.2L784.4 286.2L784.8 286.3L785.3 286.3L785.7 286.4L786.2 286.4L786.7 286.5L787.1 286.4L787.6 286.3L788.1 286.2L788.5 286.1L789.0 286.0L789.4 286.0L789.9 286.0L790.4 285.9L790.8 285.9L791.3 285.9L791.8 285.9L792.2 285.9L792.7 285.9L793.1 285.8L793.6 285.8L794.1 285.7L794.5 285.7L795.0 285.6L795.5 285.6L795.9 285.5L796.4 285.5L796.8 285.5L797.3 285.4L797.8 285.4L798.2 285.4L798.7 285.4L799.1 285.4L799.6 285.4L800.1 285.4L800.5 285.4L801.0 285.4L801.5 285.4L801.9 285.4L802.4 285.3L802.8 285.2L803.3 285.1L803.8 284.9L804.2 284.8L804.7 284.8L805.2 284.8L805.6 284.8L806.1 284.9L806.5 284.9L807.0 284.9L807.5 284.9L807.9 284.9L808.4 284.9L808.9 284.9L809.3 284.9L809.8 284.9L810.2 284.9L810.7 284.9L811.2 285.0L811.6 285.0L812.1 285.0L812.6 285.0L813.0 285.0L813.5 285.0L813.9 285.1L814.4 285.1L814.9 285.1L815.3 285.1L815.8 285.2L816.2 285.3L816.7 285.4L817.2 285.4L817.6 285.5L818.1 285.5L818.6 285.5L819.0 285.5L819.5 285.5L819.9 285.5L820.4 285.6L820.9 285.6L821.3 285.7L821.8 285.8L822.3 285.8L822.7 285.9L823.2 285.9L823.6 286.0L824.1 286.0L824.6 286.1L825.0 286.1L825.5 286.2L826.0 286.2L826.4 286.3L826.9 286.3L827.3 286.3L827.8 286.3L828.3 286.4L828.7 286.4L829.2 286.4L829.6 286.5L830.1 286.6L830.6 286.6L831.0 286.7L831.5 286.7L832.0 286.7L832.4 286.6L832.9 286.6L833.3 286.6L833.8 286.6L834.3 286.6L834.7 286.6L835.2 286.6L835.7 286.6L836.1 286.6L836.6 286.6L837.0 286.6L837.5 286.5L838.0 286.5L838.4 286.4L838.9 286.4L839.4 286.3L839.8 286.3L840.3 286.2L840.7 286.2L841.2 286.2L841.7 286.2L842.1 286.1L842.6 286.1L843.1 286.0L843.5 286.0L844.0 285.9L844.4 285.9L844.9 285.9L845.4 285.9L845.8 285.9L846.3 285.9L846.7 285.8L847.2 285.7L847.7 285.7L848.1 285.6L848.6 285.5L849.1 285.5L849.5 285.4" stroke="#06bf72"/>
<path d="M111.3 434.5L111.5 403.2L111.5 386.1L111.6 377.1L111.7 371.4L111.8 367.3L111.9 364.3L111.9 364.3L112.0 362.0L112.1 360.2L112.2 358.8L112.3 357.6L112.4 356.6L112.4 356.6L112.5 355.7L112.6 355.0L112.7 354.3L112.8 353.8L112.8 353.3L112.8 353.3L112.9 352.9L113.0 352.5L113.1 352.1L113.2 351.8L113.3 351.6L113.3 351.6L113.4 351.3L113.5 351.1L113.6 350.9L113.7 350.7L113.8 350.4L113.8 350.4L113.9 350.2L114.0 349.9L114.0 349.7L114.1 349.5L114.2 349.2L114.2 349.2L114.3 349.0L114.4 348.8L114.7 348.1L115.2 346.9L115.6 346.2L116.1 345.9L116.5 345.8L117.0 346.0L117.5 345.6L117.9 345.1L118.4 344.6L118.9 344.0L119.3 344.1L119.8 344.1L120.2 344.2L120.7 344.3L121.2 344.7L121.6 345.1L122.1 345.5L122.5 345.7L123.0 345.6L123.5 345.6L123.9 345.6L124.4 345.5L124.9 345.3L125.3 345.1L125.8 344.9L126.2 345.3L126.7 346.1L127.2 346.7L127.6 347.3L128.1 347.3L128.6 347.0L129.0 346.7L129.5 346.4L129.9 346.0L130.4 345.5L130.9 345.0L131.3 344.5L131.8 344.5L132.3 344.4L132.7 344.4L133.2 344.2L133.6 343.5L134.1 342.9L134.6 342.1L135.0 341.3L135.5 340.3L136.0 339.4L136.4 338.4L136.9 337.9L137.3 337.5L137.8 337.2L138.3 336.9L138.7 336.9L139.2 336.9L139.6 336.7L140.1 336.5L140.6 335.6L141.0 334.8L141.5 334.3L142.0 333.8L142.4 334.0L142.9 334.3L143.3 334.9L143.8 335.6L144.3 336.4L144.7 337.2L145.2 338.2L145.7 339.1L146.1 340.1L146.6 341.0L147.0 341.9L147.5 342.6L148.0 343.1L148.4 343.7L148.9 344.3L149.4 345.1L149.8 345.9L150.3 346.8L150.7 347.6L151.2 348.4L151.7 349.1L152.1 349.8L152.6 350.3L153.1 350.7L153.5 351.1L154.0 351.2L154.4 351.2L154.9 350.8L155.4 350.3L155.8 349.7L156.3 349.1L156.7 348.4L157.2 347.7L157.7 347.1L158.1 346.6L158.6 346.2L159.1 346.0L159.5 345.7L160.0 345.4L160.4 345.0L160.9 344.6L161.4 344.3L161.8 343.8L162.3 343.3L162.8 342.9L163.2 342.5L163.7 342.0L164.1 341.7L164.6 341.4L165.1 341.3L165.5 341.7L166.0 342.2L166.5 342.8L166.9 343.3L167.4 343.5L167.8 343.8L168.3 344.1L168.8 344.5L169.2 345.0L169.7 345.5L170.2 345.9L170.6 345.8L171.1 345.5L171.5 345.1L172.0 344.7L172.5 345.1L172.9 345.7L173.4 346.3L173.8 346.8L174.3 346.8L174.8 346.8L175.2 346.7L175.7 346.5L176.2 346.1L176.6 345.6L177.1 345.1L177.5 344.8L178.0 344.9L178.5 345.0L178.9 345.1L179.4 344.9L179.9 344.5L180.3 344.2L180.8 343.7L181.2 343.2L181.7 342.5L182.2 341.8L182.6 341.0L183.1 340.5L183.6 340.1L184.0 339.7L184.5 339.2L184.9 338.3L185.4 337.4L185.9 336.5L186.3 335.7L186.8 335.3L187.3 335.0L187.7 334.6L188.2 334.4L188.6 334.3L189.1 334.5L189.6 334.8L190.0 335.3L190.5 336.0L190.9 336.7L191.4 337.6L191.9 338.5L192.3 339.6L192.8 340.6L193.3 341.6L193.7 342.3L194.2 342.8L194.6 343.3L195.1 343.8L195.6 344.6L196.0 345.3L196.5 346.1L197.0 346.9L197.4 347.8L197.9 348.6L198.3 349.4L198.8 350.1L199.3 350.5L199.7 350.9L200.2 351.1L200.7 351.2L201.1 351.2L201.6 351.0L202.0 350.8L202.5 350.3L203.0 349.5L203.4 348.8L203.9 348.0L204.4 347.3L204.8 346.6L205.3 346.0L205.7 345.4L206.2 345.1L206.7 344.7L207.1 344.5L207.6 344.3L208.0 343.6L208.5 342.9L209.0 342.2L209.4 341.5L209.9 341.0L210.4 340.6L210.8 340.3L211.3 340.5L211.7 341.8L212.2 343.2L212.7 344.6L213.1 345.3L213.6 344.9L214.1 344.6L214.5 344.3L215.0 344.5L215.4 344.9L215.9 345.3L216.4 345.7L216.8 345.9L217.3 346.1L217.8 346.3L218.2 346.5L218.7 347.0L219.1 347.6L219.6 348.1L220.1 348.6L220.5 348.2L221.0 347.9L221.4 347.4L221.9 347.1L222.4 347.3L222.8 347.4L223.3 347.5L223.8 347.1L224.2 346.2L224.7 345.3L225.1 344.4L225.6 343.7L226.1 343.3L226.5 342.8L227.0 342.4L227.5 342.5L227.9 342.8L228.4 343.1L228.8 343.3L229.3 342.7L229.8 342.0L230.2 341.3L230.7 340.5L231.2 339.6L231.6 338.8L232.1 337.9L232.5 337.1L233.0 336.3L233.5 335.7L233.9 335.1L234.4 334.7L234.9 334.4L235.3 334.4L235.8 334.6L236.2 334.9L236.7 335.4L237.2 336.1L237.6 336.8L238.1 337.8L238.5 338.9L239.0 340.1L239.5 341.2L239.9 342.1L240.4 342.8L240.9 343.4L241.3 344.0L241.8 344.8L242.2 345.5L242.7 346.3L243.2 347.1L243.6 347.9L244.1 348.6L244.6 349.2L245.0 349.8L245.5 350.4L245.9 350.9L246.4 351.2L246.9 351.3L247.3 351.2L247.8 351.0L248.3 350.6L248.7 350.1L249.2 349.6L249.6 349.0L250.1 348.4L250.6 347.6L251.0 346.8L251.5 346.2L252.0 345.5L252.4 345.2L252.9 344.9L253.3 344.6L253.8 344.4L254.3 344.2L254.7 344.2L255.2 344.2L255.6 344.1L256.1 343.3L256.6 342.5L257.0 341.7L257.5 341.3L258.0 341.5L258.4 341.7L258.9 342.1L259.3 342.6L259.8 343.2L260.3 343.8L260.7 344.4L261.2 344.9L261.7 345.2L262.1 345.6L262.6 345.9L263.0 346.0L263.5 346.1L264.0 346.3L264.4 346.4L264.9 346.0L265.4 345.5L265.8 345.1L266.3 344.9L266.7 345.7L267.2 346.3L267.7 347.0L268.1 347.1L268.6 346.6L269.1 346.0L269.5 345.3L270.0 344.9L270.4 344.8L270.9 344.6L271.4 344.4L271.8 344.4L272.3 344.5L272.7 344.6L273.2 344.6L273.7 344.1L274.1 343.4L274.6 342.6L275.1 341.8L275.5 341.5L276.0 341.2L276.4 340.8L276.9 340.4L277.4 340.3L277.8 340.1L278.3 339.7L278.8 339.0L279.2 337.7L279.7 336.6L280.1 335.7L280.6 335.0L281.1 334.7L281.5 334.5L282.0 334.6L282.5 334.8L282.9 335.2L283.4 335.7L283.8 336.3L284.3 337.1L284.8 338.1L285.2 339.1L285.7 340.0L286.2 340.9L286.6 341.7L287.1 342.4L287.5 343.1L288.0 343.9L288.5 344.7L288.9 345.5L289.4 346.3L289.8 347.0L290.3 347.8L290.8 348.4L291.2 349.0L291.7 349.6L292.2 350.1L292.6 350.5L293.1 350.8L293.5 350.8L294.0 350.8L294.5 350.5L294.9 350.1L295.4 349.5L295.9 348.8L296.3 348.1L296.8 347.5L297.2 346.8L297.7 346.2L298.2 345.7L298.6 345.3L299.1 344.8L299.6 344.3L300.0 343.7L300.5 343.4L300.9 343.2L301.4 343.1L301.9 342.9L302.3 342.6L302.8 342.2L303.3 342.0L303.7 342.0L304.2 342.3L304.6 342.7L305.1 343.2L305.6 343.5L306.0 343.8L306.5 344.1L306.9 344.5L307.4 344.5L307.9 344.4L308.3 344.4L308.8 344.3L309.3 344.9L309.7 345.4L310.2 345.9L310.6 346.2L311.1 345.8L311.6 345.5L312.0 345.1L312.5 345.3L313.0 346.5L313.4 347.7L313.9 348.8L314.3 349.1L314.8 348.8L315.3 348.4L315.7 347.9L316.2 347.3L316.7 346.7L317.1 346.0L317.6 345.4L318.0 344.8L318.5 344.2L319.0 343.6L319.4 343.0L319.9 343.1L320.4 343.1L320.8 343.1L321.3 342.8L321.7 341.5L322.2 340.2L322.7 339.0L323.1 338.2L323.6 338.0L324.0 337.7L324.5 337.5L325.0 337.1L325.4 336.7L325.9 336.3L326.4 335.8L326.8 335.3L327.3 334.8L327.7 334.5L328.2 334.3L328.7 334.5L329.1 334.8L329.6 335.3L330.1 336.0L330.5 336.9L331.0 337.9L331.4 339.0L331.9 340.0L332.4 340.8L332.8 341.5L333.3 342.1L333.8 342.8L334.2 343.6L334.7 344.4L335.1 345.3L335.6 346.1L336.1 346.9L336.5 347.6L337.0 348.2L337.5 348.9L337.9 349.4L338.4 349.9L338.8 350.3L339.3 350.7L339.8 350.9L340.2 351.0L340.7 350.9L341.1 350.4L341.6 349.9L342.1 349.2L342.5 348.5L343.0 348.1L343.5 347.7L343.9 347.4L344.4 347.0L344.8 346.3L345.3 345.7L345.8 345.0L346.2 344.5L346.7 344.3L347.2 344.3L347.6 344.4L348.1 344.0L348.5 343.1L349.0 342.1L349.5 341.1L349.9 341.0L350.4 341.4L350.9 342.0L351.3 342.6L351.8 342.4L352.2 342.2L352.7 342.0L353.2 341.8L353.6 342.1L354.1 342.4L354.6 342.7L355.0 343.1L355.5 343.8L355.9 344.5L356.4 345.1L356.9 345.7L357.3 346.1L357.8 346.5L358.2 346.8L358.7 346.8L359.2 346.4L359.6 346.0L360.1 345.5L360.6 345.9L361.0 346.6L361.5 347.2L361.9 347.8L362.4 347.2L362.9 346.5L363.3 345.6L363.8 344.8L364.3 344.8L364.7 344.8L365.2 344.7L365.6 344.6L366.1 344.3L366.6 344.0L367.0 343.7L367.5 343.2L368.0 342.7L368.4 342.1L368.9 341.5L369.3 340.5L369.8 339.3L370.3 338.2L370.7 337.2L371.2 337.0L371.7 337.0L372.1 336.8L372.6 336.6L373.0 335.9L373.5 335.2L374.0 334.8L374.4 334.5L374.9 334.5L375.3 334.7L375.8 335.0L376.3 335.6L376.7 336.3L377.2 337.1L377.7 338.0L378.1 338.9L378.6 339.7L379.0 340.6L379.5 341.4L380.0 342.2L380.4 342.9L380.9 343.6L381.4 344.4L381.8 345.3L382.3 346.3L382.7 347.2L383.2 348.1L383.7 348.8L384.1 349.4L384.6 349.9L385.1 350.3L385.5 350.5L386.0 350.7L386.4 350.7L386.9 350.5L387.4 350.3L387.8 349.9L388.3 349.5L388.8 349.0L389.2 348.6L389.7 348.1L390.1 347.7L390.6 347.1L391.1 346.5L391.5 345.9L392.0 345.3L392.4 344.7L392.9 344.2L393.4 343.6L393.8 343.1L394.3 342.9L394.8 342.9L395.2 343.0L395.7 343.3L396.1 343.1L396.6 342.8L397.1 342.6L397.5 342.4L398.0 342.5L398.5 342.6L398.9 342.8L399.4 343.0L399.8 343.1L400.3 343.3L400.8 343.5L401.2 343.6L401.7 343.6L402.2 343.6L402.6 343.5L403.1 343.7L403.5 344.0L404.0 344.4L404.5 344.7L404.9 345.1L405.4 345.5L405.9 345.8L406.3 346.2L406.8 346.3L407.2 346.4L407.7 346.4L408.2 346.4L408.6 346.4L409.1 346.4L409.5 346.4L410.0 346.2L410.5 346.0L410.9 345.8L411.4 345.5L411.9 345.2L412.3 344.8L412.8 344.3L413.2 343.8L413.7 343.3L414.2 342.7L414.6 342.1L415.1 341.5L415.6 340.6L416.0 339.7L416.5 338.8L416.9 338.0L417.4 337.3L417.9 336.5L418.3 335.8L418.8 335.1L419.3 334.9L419.7 334.6L420.2 334.3L420.6 334.2L421.1 334.1L421.6 334.2L422.0 334.5L422.5 335.1L423.0 335.8L423.4 336.6L423.9 337.5L424.3 338.5L424.8 339.5L425.3 340.5L425.7 341.4L426.2 342.2L426.6 342.8L427.1 343.4L427.6 344.1L428.0 344.8L428.5 345.6L429.0 346.4L429.4 347.2L429.9 348.0L430.3 348.8L430.8 349.5L431.3 350.1L431.7 350.5L432.2 350.8L432.7 351.0L433.1 351.0L433.6 350.7L434.0 350.3L434.5 349.8L435.0 349.3L435.4 348.8L435.9 348.2L436.4 347.7L436.8 347.1L437.3 346.5L437.7 346.0L438.2 345.5L438.7 345.0L439.1 344.4L439.6 343.8L440.1 343.1L440.5 342.7L441.0 342.5L441.4 342.3L441.9 342.2L442.4 342.5L442.8 342.9L443.3 343.4L443.7 343.8L444.2 343.2L444.7 342.7L445.1 342.2L445.6 342.2L446.1 343.1L446.5 344.0L447.0 344.8L447.4 345.5L447.9 345.9L448.4 346.2L448.8 346.5L449.3 346.8L449.8 347.0L450.2 347.3L450.7 347.6L451.1 347.2L451.6 346.8L452.1 346.3L452.5 345.8L453.0 346.7L453.5 347.5L453.9 348.3L454.4 348.8L454.8 348.2L455.3 347.5L455.8 346.7L456.2 346.1L456.7 345.7L457.2 345.3L457.6 344.9L458.1 344.5L458.5 344.2L459.0 343.9L459.5 343.5L459.9 343.2L460.4 342.9L460.8 342.6L461.3 342.2L461.8 341.5L462.2 340.7L462.7 339.9L463.2 339.1L463.6 338.5L464.1 337.9L464.5 337.2L465.0 336.5L465.5 336.1L465.9 335.6L466.4 335.2L466.9 334.9L467.3 334.5L467.8 334.4L468.2 334.5L468.7 334.8L469.2 335.4L469.6 336.1L470.1 336.9L470.6 337.9L471.0 339.0L471.5 340.1L471.9 341.2L472.4 342.1L472.9 342.9L473.3 343.6L473.8 344.3L474.3 345.1L474.7 345.9L475.2 346.7L475.6 347.5L476.1 348.1L476.6 348.6L477.0 349.1L477.5 349.6L477.9 350.2L478.4 350.8L478.9 351.2L479.3 351.3L479.8 351.2L480.3 350.9L480.7 350.4L481.2 350.0L481.6 349.5L482.1 349.0L482.6 348.5L483.0 347.7L483.5 346.9L484.0 346.1L484.4 345.4L484.9 345.1L485.3 344.7L485.8 344.3L486.3 344.1L486.7 343.5L487.2 343.0L487.7 342.5L488.1 342.1L488.6 341.4L489.0 340.9L489.5 340.3L490.0 340.2L490.4 340.5L490.9 340.9L491.4 341.4L491.8 342.1L492.3 342.9L492.7 343.8L493.2 344.7L493.7 344.9L494.1 344.8L494.6 344.6L495.0 344.5L495.5 344.5L496.0 344.7L496.4 344.8L496.9 345.0L497.4 345.7L497.8 346.3L498.3 347.0L498.7 347.6L499.2 347.7L499.7 347.8L500.1 347.9L500.6 347.8L501.1 347.7L501.5 347.6L502.0 347.4L502.4 347.0L502.9 346.2L503.4 345.4L503.8 344.6L504.3 344.2L504.8 344.1L505.2 344.0L505.7 343.9L506.1 343.8L506.6 343.6L507.1 343.4L507.5 343.1L508.0 342.0L508.5 340.9L508.9 339.8L509.4 338.8L509.8 338.2L510.3 337.7L510.8 337.1L511.2 336.6L511.7 336.2L512.1 335.7L512.6 335.3L513.1 335.0L513.5 334.8L514.0 334.7L514.5 334.9L514.9 335.2L515.4 335.5L515.8 335.9L516.3 336.5L516.8 337.2L517.2 338.0L517.7 338.9L518.2 339.7L518.6 340.6L519.1 341.6L519.5 342.4L520.0 343.2L520.5 343.9L520.9 344.8L521.4 345.6L521.9 346.4L522.3 347.3L522.8 348.1L523.2 348.9L523.7 349.5L524.2 350.1L524.6 350.6L525.1 351.0L525.5 351.1L526.0 351.1L526.5 350.8L526.9 350.4L527.4 349.9L527.9 349.4L528.3 348.7L528.8 348.0L529.2 347.5L529.7 346.9L530.2 346.5L530.6 346.1L531.1 345.6L531.6 345.0L532.0 344.4L532.5 343.7L532.9 343.3L533.4 343.0L533.9 342.7L534.3 342.4L534.8 342.0L535.3 341.6L535.7 341.3L536.2 341.6L536.6 342.6L537.1 343.6L537.6 344.8L538.0 345.1L538.5 344.8L539.0 344.6L539.4 344.4L539.9 344.3L540.3 344.2L540.8 344.0L541.3 343.8L541.7 344.0L542.2 344.2L542.6 344.4L543.1 344.6L543.6 345.0L544.0 345.4L544.5 345.7L545.0 345.9L545.4 345.7L545.9 345.5L546.3 345.2L546.8 345.1L547.3 345.3L547.7 345.4L548.2 345.5L548.7 345.4L549.1 345.2L549.6 344.9L550.0 344.6L550.5 344.7L551.0 344.8L551.4 345.0L551.9 345.1L552.4 344.4L552.8 343.6L553.3 342.7L553.7 341.8L554.2 341.1L554.7 340.3L555.1 339.6L555.6 338.9L556.1 338.3L556.5 337.7L557.0 337.1L557.4 336.5L557.9 335.9L558.4 335.4L558.8 334.9L559.3 334.6L559.7 334.3L560.2 334.2L560.7 334.3L561.1 334.6L561.6 335.0L562.1 335.6L562.5 336.3L563.0 337.2L563.4 338.3L563.9 339.3L564.4 340.4L564.8 341.2L565.3 341.9L565.8 342.5L566.2 343.1L566.7 343.9L567.1 344.8L567.6 345.8L568.1 346.6L568.5 347.4L569.0 348.0L569.5 348.7L569.9 349.3L570.4 349.9L570.8 350.3L571.3 350.7L571.8 350.8L572.2 350.7L572.7 350.5L573.2 350.0L573.6 349.7L574.1 349.2L574.5 348.7L575.0 348.2L575.5 347.7L575.9 347.3L576.4 346.9L576.8 346.5L577.3 346.1L577.8 345.8L578.2 345.4L578.7 345.1L579.2 344.5L579.6 343.9L580.1 343.4L580.5 342.9L581.0 342.7L581.5 342.6L581.9 342.6L582.4 342.4L582.9 342.1L583.3 341.9L583.8 341.7L584.2 341.9L584.7 342.2L585.2 342.5L585.6 342.8L586.1 343.1L586.6 343.4L587.0 343.6L587.5 343.9L587.9 344.7L588.4 345.3L588.9 346.0L589.3 346.6L589.8 346.6L590.3 346.7L590.7 346.7L591.2 346.7L591.6 346.7L592.1 346.7L592.6 346.6L593.0 346.5L593.5 346.5L593.9 346.3L594.4 346.2L594.9 346.2L595.3 346.2L595.8 346.2L596.3 346.2L596.7 345.9L597.2 345.5L597.6 345.1L598.1 344.7L598.6 344.0L599.0 343.3L599.5 342.5L600.0 341.8L600.4 342.0L600.9 342.1L601.3 342.1L601.8 341.6L602.3 340.5L602.7 339.5L603.2 338.6L603.7 337.8L604.1 337.1L604.6 336.4L605.0 335.7L605.5 335.3L606.0 334.9L606.4 334.7L606.9 334.8L607.4 334.9L607.8 335.2L608.3 335.7L608.7 336.3L609.2 337.0L609.7 337.8L610.1 338.6L610.6 339.5L611.0 340.5L611.5 341.4L612.0 342.3L612.4 343.0L612.9 343.6L613.4 344.2L613.8 344.8L614.3 345.5L614.7 346.4L615.2 347.2L615.7 348.0L616.1 348.6L616.6 349.1L617.1 349.5L617.5 349.8L618.0 350.3L618.4 350.8L618.9 351.1L619.4 351.2L619.8 350.6L620.3 349.9L620.8 349.1L621.2 348.4L621.7 348.0L622.1 347.5L622.6 347.2L623.1 346.7L623.5 346.1L624.0 345.6L624.5 345.0L624.9 344.4L625.4 343.8L625.8 343.2L626.3 342.7L626.8 342.3L627.2 342.0L627.7 341.8L628.1 341.8L628.6 341.7L629.1 341.8L629.5 342.0L630.0 342.3L630.5 342.6L630.9 342.9L631.4 343.3L631.8 343.8L632.3 344.4L632.8 345.1L633.2 345.8L633.7 346.3L634.2 346.2L634.6 346.0L635.1 345.8L635.5 345.9L636.0 346.3L636.5 346.6L636.9 347.0L637.4 347.0L637.9 346.8L638.3 346.5L638.8 346.2L639.2 346.4L639.7 346.8L640.2 347.1L640.6 347.4L641.1 347.1L641.6 346.7L642.0 346.3L642.5 345.9L642.9 345.5L643.4 345.0L643.9 344.5L644.3 344.0L644.8 343.8L645.2 343.6L645.7 343.2L646.2 342.8L646.6 342.2L647.1 341.6L647.6 341.0L648.0 340.4L648.5 339.8L648.9 339.2L649.4 338.7L649.9 338.2L650.3 337.6L650.8 336.9L651.3 336.2L651.7 335.5L652.2 334.9L652.6 334.5L653.1 334.2L653.6 334.1L654.0 334.3L654.5 334.8L655.0 335.3L655.4 336.2L655.9 337.2L656.3 338.2L656.8 339.2L657.3 339.9L657.7 340.6L658.2 341.3L658.7 342.0L659.1 342.8L659.6 343.6L660.0 344.4L660.5 345.4L661.0 346.3L661.4 347.3L661.9 348.3L662.3 348.7L662.8 349.0L663.3 349.3L663.7 349.4L664.2 349.9L664.7 350.3L665.1 350.6L665.6 350.7L666.0 350.6L666.5 350.3L667.0 350.0L667.4 349.4L667.9 348.6L668.4 347.8L668.8 347.0L669.3 346.4L669.7 346.3L670.2 346.2L670.7 346.1L671.1 345.7L671.6 344.7L672.1 343.5L672.5 342.2L673.0 341.9L673.4 342.2L673.9 342.7L674.4 343.4L674.8 343.4L675.3 343.4L675.8 343.5L676.2 343.6L676.7 343.6L677.1 343.6L677.6 343.7L678.1 343.8L678.5 343.8L679.0 343.8L679.4 343.9L679.9 344.1L680.4 344.6L680.8 345.0L681.3 345.4L681.8 345.5L682.2 345.4L682.7 345.2L683.1 345.1L683.6 345.6L684.1 346.3L684.5 346.9L685.0 347.5L685.5 347.2L685.9 346.6L686.4 346.1L686.8 345.5L687.3 345.6L687.8 345.6L688.2 345.7L688.7 345.7L689.2 345.8L689.6 345.8L690.1 345.9L690.5 345.6L691.0 344.6L691.5 343.7L691.9 342.7L692.4 342.1L692.9 341.7L693.3 341.4L693.8 340.9L694.2 340.5L694.7 340.0L695.2 339.5L695.6 339.0L696.1 338.2L696.5 337.3L697.0 336.5L697.5 335.7L697.9 335.5L698.4 335.2L698.9 334.9L699.3 334.8L699.8 334.6L700.2 334.6L700.7 334.9L701.2 335.3L701.6 335.8L702.1 336.4L702.6 337.1L703.0 338.0L703.5 339.1L703.9 340.2L704.4 341.2L704.9 342.1L705.3 342.7L705.8 343.3L706.3 344.0L706.7 344.8L707.2 345.6L707.6 346.4L708.1 347.2L708.6 348.0L709.0 348.7L709.5 349.4L710.0 350.0L710.4 350.4L710.9 350.7L711.3 350.8L711.8 350.8L712.3 350.8L712.7 350.6L713.2 350.3L713.6 349.8L714.1 349.1L714.6 348.3L715.0 347.6L715.5 347.0L716.0 346.6L716.4 346.2L716.9 346.0L717.3 345.5L717.8 345.0L718.3 344.4L718.7 343.8L719.2 343.5L719.7 343.2L720.1 343.1L720.6 343.0L721.0 342.5L721.5 342.0L722.0 341.5L722.4 341.2L722.9 341.4L723.4 341.6L723.8 341.8L724.3 342.1L724.7 342.2L725.2 342.4L725.7 342.5L726.1 343.1L726.6 343.9L727.1 344.7L727.5 345.4L728.0 345.9L728.4 346.2L728.9 346.5L729.4 346.9L729.8 347.4L730.3 348.0L730.7 348.5L731.2 349.0L731.7 348.8L732.1 348.6L732.6 348.4L733.1 348.1L733.5 347.7L734.0 347.2L734.4 346.7L734.9 346.3L735.4 345.9L735.8 345.5L736.3 345.0L736.8 344.7L737.2 344.6L737.7 344.4L738.1 344.2L738.6 343.8L739.1 343.2L739.5 342.5L740.0 341.8L740.5 341.4L740.9 341.2L741.4 340.8L741.8 340.5L742.3 339.7L742.8 338.9L743.2 338.1L743.7 337.3L744.2 336.3L744.6 335.5L745.1 334.8L745.5 334.3L746.0 334.1L746.5 334.1L746.9 334.3L747.4 334.8L747.8 335.5L748.3 336.4L748.8 337.4L749.2 338.4L749.7 339.2L750.2 340.1L750.6 340.9L751.1 341.7L751.5 342.5L752.0 343.1L752.5 343.8L752.9 344.6L753.4 345.5L753.9 346.5L754.3 347.3L754.8 348.0L755.2 348.6L755.7 349.1L756.2 349.6L756.6 350.1L757.1 350.5L757.6 350.8L758.0 350.9L758.5 350.8L758.9 350.6L759.4 350.2L759.9 349.7L760.3 349.0L760.8 348.2L761.3 347.5L761.7 347.0L762.2 346.6L762.6 346.4L763.1 346.2L763.6 345.6L764.0 344.9L764.5 344.2L764.9 343.4L765.4 343.0L765.9 342.6L766.3 342.2L766.8 341.9L767.3 341.6L767.7 341.3L768.2 341.1L768.6 341.2L769.1 341.7L769.6 342.2L770.0 342.9L770.5 343.2L771.0 343.3L771.4 343.4L771.9 343.5L772.3 343.8L772.8 344.2L773.3 344.5L773.7 344.8L774.2 344.6L774.7 344.4L775.1 344.1L775.6 343.9L776.0 344.6L776.5 345.3L777.0 345.9L777.4 346.4L777.9 346.1L778.4 345.8L778.8 345.4L779.3 345.3L779.7 345.8L780.2 346.1L780.7 346.5L781.1 346.5L781.6 346.3L782.0 346.0L782.5 345.8L783.0 345.4L783.4 344.9L783.9 344.5L784.4 344.1L784.8 344.1L785.3 344.3L785.7 344.3L786.2 344.3L786.7 343.3L787.1 342.2L787.6 341.0L788.1 340.0L788.5 339.4L789.0 338.8L789.4 338.2L789.9 337.5L790.4 336.7L790.8 336.0L791.3 335.3L791.8 334.8L792.2 334.4L792.7 334.3L793.1 334.3L793.6 334.7L794.1 335.3L794.5 336.0L795.0 336.9L795.5 337.8L795.9 338.7L796.4 339.7L796.8 340.7L797.3 341.4L797.8 342.0L798.2 342.6L798.7 343.1L799.1 344.0L799.6 345.0L800.1 345.9L800.5 346.9L801.0 347.6L801.5 348.3L801.9 349.0L802.4 349.6L802.8 350.2L803.3 350.7L803.8 351.1L804.2 351.2L804.7 351.2L805.2 351.1L805.6 350.7L806.1 350.2L806.5 349.5L807.0 348.8L807.5 348.0L807.9 347.4L808.4 346.8L808.9 346.2L809.3 345.8L809.8 345.6L810.2 345.4L810.7 345.3L811.2 345.2L811.6 344.6L812.1 344.0L812.6 343.3L813.0 342.7L813.5 342.0L813.9 341.3L814.4 340.6L814.9 340.5L815.3 341.0L815.8 341.7L816.2 342.4L816.7 342.6L817.2 342.7L817.6 342.8L818.1 343.0L818.6 342.9L819.0 342.9L819.5 342.8L819.9 342.7L820.4 342.8L820.9 342.9L821.3 343.0L821.8 343.1L822.3 343.6L822.7 344.0L823.2 344.4L823.6 344.9L824.1 345.6L824.6 346.2L825.0 346.8L825.5 347.0L826.0 346.9L826.4 346.7L826.9 346.5L827.3 346.2L827.8 345.9L828.3 345.6L828.7 345.3L829.2 345.1L829.6 344.9L830.1 344.7L830.6 344.5L831.0 344.3L831.5 344.0L832.0 343.6L832.4 343.0L832.9 341.6L833.3 340.2L833.8 338.9L834.3 338.0L834.7 337.9L835.2 337.8L835.7 337.7L836.1 337.2L836.6 336.5L837.0 335.8L837.5 335.2L838.0 334.7L838.4 334.3L838.9 334.0L839.4 333.9L839.8 334.1L840.3 334.6L840.7 335.2L841.2 336.0L841.7 336.8L842.1 337.8L842.6 338.7L843.1 339.7L843.5 340.7L844.0 341.5L844.4 342.3L844.9 343.0L845.4 343.6L845.8 344.2L846.3 344.9L846.7 345.7L847.2 346.5L847.7 347.4L848.1 348.2L848.6 349.0L849.1 349.9L849.5 350.6" stroke="#9fe806"/>
<path d="M183.9 249.0V394.5" stroke="#1f5357" stroke-width="0.9" stroke-dasharray="2.57 1.11"/>
</g>
<path d="M110.0 394.5v4.8M257.9 394.5v4.8M405.8 394.5v4.8M553.7 394.5v4.8M701.6 394.5v4.8M849.5 394.5v4.8M73.0 375.5h-4.9M73.0 312.2h-4.9M73.0 249.0h-4.9" stroke="#000" stroke-width="1.1" fill="none"/>
<path d="M73.0 394.5h-2.9M73.0 389.5h-2.9M73.0 385.3h-2.9M73.0 381.6h-2.9M73.0 378.4h-2.9M73.0 356.4h-2.9M73.0 345.3h-2.9M73.0 337.4h-2.9M73.0 331.3h-2.9M73.0 326.3h-2.9M73.0 322.0h-2.9M73.0 318.4h-2.9M73.0 315.1h-2.9M73.0 293.2h-2.9M73.0 282.1h-2.9M73.0 274.2h-2.9M73.0 268.0h-2.9M73.0 263.0h-2.9M73.0 258.8h-2.9M73.0 255.1h-2.9M73.0 251.9h-2.9" stroke="#000" stroke-width="0.85" fill="none"/>
<rect x="73.0" y="249.0" width="813.5" height="145.5" fill="none" stroke="#262626" stroke-width="1.1"/>
<g clip-path="url(#c2)" fill="none" stroke-width="2.1" stroke-linejoin="round" stroke-linecap="butt">
<path d="M111.3 628.5L111.5 585.9L111.5 571.5L111.6 563.5L111.7 558.1L111.8 554.1L111.9 550.9L111.9 550.9L112.0 548.3L112.1 546.2L112.2 544.3L112.3 542.8L112.4 541.4L112.4 541.4L112.5 540.2L112.6 539.2L112.7 538.3L112.8 537.5L112.8 536.7L112.8 536.7L112.9 536.1L113.0 535.5L113.1 535.0L113.2 534.5L113.3 534.1L113.3 534.1L113.4 533.7L113.5 533.3L113.6 533.0L113.7 532.7L113.8 532.5L113.8 532.5L113.9 532.3L114.0 532.1L114.0 531.9L114.1 531.7L114.2 531.6L114.2 531.6L114.3 531.5L114.4 531.4L114.7 531.1L115.2 531.0L115.6 531.1L116.1 531.4L116.5 531.8L117.0 532.4L117.5 533.1L117.9 534.0L118.4 534.9L118.9 536.0L119.3 537.1L119.8 538.3L120.2 539.7L120.7 541.1L121.2 542.5L121.6 544.1L122.1 545.7L122.5 547.3L123.0 549.0L123.5 550.7L123.9 552.5L124.4 554.2L124.9 555.8L125.3 557.0L125.8 557.6L126.2 557.1L126.7 555.8L127.2 554.2L127.6 552.6L128.1 550.8L128.6 549.1L129.0 547.4L129.5 545.7L129.9 544.1L130.4 542.5L130.9 541.0L131.3 539.6L131.8 538.2L132.3 536.9L132.7 535.7L133.2 534.6L133.6 533.6L134.1 532.6L134.6 531.8L135.0 531.0L135.5 530.3L136.0 529.8L136.4 529.3L136.9 529.0L137.3 528.7L137.8 528.5L138.3 528.5L138.7 528.5L139.2 528.7L139.6 528.9L140.1 529.2L140.6 529.6L141.0 530.0L141.5 530.6L142.0 531.2L142.4 531.9L142.9 532.6L143.3 533.5L143.8 534.4L144.3 535.3L144.7 536.4L145.2 537.5L145.7 538.6L146.1 539.8L146.6 541.1L147.0 542.3L147.5 543.7L148.0 545.0L148.4 546.4L148.9 547.7L149.4 549.0L149.8 550.1L150.3 550.9L150.7 550.8L151.2 550.0L151.7 548.7L152.1 547.3L152.6 546.0L153.1 544.6L153.5 543.3L154.0 542.0L154.4 540.8L154.9 539.6L155.4 538.5L155.8 537.5L156.3 536.6L156.7 535.7L157.2 535.0L157.7 534.3L158.1 533.8L158.6 533.3L159.1 533.0L159.5 532.7L160.0 532.5L160.4 532.5L160.9 532.6L161.4 532.7L161.8 532.9L162.3 533.2L162.8 533.6L163.2 534.1L163.7 534.7L164.1 535.3L164.6 536.1L165.1 536.9L165.5 537.7L166.0 538.7L166.5 539.7L166.9 540.8L167.4 541.9L167.8 543.1L168.3 544.4L168.8 545.7L169.2 547.0L169.7 548.4L170.2 549.7L170.6 551.1L171.1 552.5L171.5 553.6L172.0 554.4L172.5 554.5L172.9 553.6L173.4 552.4L173.8 550.9L174.3 549.4L174.8 547.8L175.2 546.3L175.7 544.7L176.2 543.3L176.6 541.8L177.1 540.5L177.5 539.1L178.0 537.9L178.5 536.7L178.9 535.6L179.4 534.5L179.9 533.5L180.3 532.6L180.8 531.8L181.2 531.1L181.7 530.5L182.2 529.9L182.6 529.4L183.1 529.1L183.6 528.8L184.0 528.6L184.5 528.5L184.9 528.5L185.4 528.6L185.9 528.8L186.3 529.0L186.8 529.4L187.3 529.8L187.7 530.3L188.2 530.8L188.6 531.5L189.1 532.2L189.6 533.0L190.0 533.9L190.5 534.8L190.9 535.8L191.4 536.9L191.9 538.0L192.3 539.2L192.8 540.4L193.3 541.6L193.7 542.9L194.2 544.3L194.6 545.6L195.1 547.0L195.6 548.3L196.0 549.6L196.5 550.5L197.0 551.0L197.4 550.5L197.9 549.4L198.3 548.1L198.8 546.7L199.3 545.3L199.7 544.0L200.2 542.7L200.7 541.4L201.1 540.2L201.6 539.1L202.0 538.0L202.5 537.1L203.0 536.2L203.4 535.4L203.9 534.7L204.4 534.1L204.8 533.5L205.3 533.1L205.7 532.8L206.2 532.6L206.7 532.5L207.1 532.5L207.6 532.6L208.0 532.8L208.5 533.0L209.0 533.4L209.4 533.8L209.9 534.3L210.4 534.9L210.8 535.5L211.3 536.3L211.7 537.1L212.2 538.0L212.7 538.9L213.1 539.9L213.6 541.0L214.1 542.1L214.5 543.3L215.0 544.5L215.4 545.8L215.9 547.1L216.4 548.4L216.8 549.8L217.3 551.1L217.8 552.3L218.2 553.3L218.7 553.8L219.1 553.4L219.6 552.4L220.1 551.0L220.5 549.6L221.0 548.1L221.4 546.6L221.9 545.1L222.4 543.6L222.8 542.2L223.3 540.8L223.8 539.5L224.2 538.3L224.7 537.1L225.1 535.9L225.6 534.9L226.1 533.9L226.5 533.0L227.0 532.1L227.5 531.4L227.9 530.7L228.4 530.1L228.8 529.6L229.3 529.2L229.8 528.9L230.2 528.7L230.7 528.5L231.2 528.5L231.6 528.5L232.1 528.7L232.5 528.9L233.0 529.2L233.5 529.5L233.9 530.0L234.4 530.5L234.9 531.1L235.3 531.8L235.8 532.6L236.2 533.4L236.7 534.3L237.2 535.3L237.6 536.3L238.1 537.4L238.5 538.5L239.0 539.7L239.5 541.0L239.9 542.2L240.4 543.6L240.9 544.9L241.3 546.3L241.8 547.6L242.2 548.9L242.7 550.1L243.2 550.8L243.6 550.9L244.1 550.1L244.6 548.8L245.0 547.5L245.5 546.1L245.9 544.7L246.4 543.4L246.9 542.1L247.3 540.9L247.8 539.7L248.3 538.6L248.7 537.6L249.2 536.7L249.6 535.8L250.1 535.0L250.6 534.4L251.0 533.8L251.5 533.3L252.0 533.0L252.4 532.7L252.9 532.6L253.3 532.5L253.8 532.5L254.3 532.7L254.7 532.9L255.2 533.2L255.6 533.5L256.1 534.0L256.6 534.5L257.0 535.2L257.5 535.8L258.0 536.6L258.4 537.4L258.9 538.3L259.3 539.3L259.8 540.3L260.3 541.4L260.7 542.6L261.2 543.8L261.7 545.0L262.1 546.3L262.6 547.6L263.0 548.9L263.5 550.2L264.0 551.5L264.4 552.7L264.9 553.5L265.4 553.6L265.8 552.8L266.3 551.6L266.7 550.2L267.2 548.7L267.7 547.2L268.1 545.7L268.6 544.3L269.1 542.9L269.5 541.5L270.0 540.1L270.4 538.9L270.9 537.6L271.4 536.5L271.8 535.4L272.3 534.4L272.7 533.4L273.2 532.6L273.7 531.8L274.1 531.1L274.6 530.4L275.1 529.9L275.5 529.4L276.0 529.1L276.4 528.8L276.9 528.6L277.4 528.5L277.8 528.5L278.3 528.6L278.8 528.8L279.2 529.0L279.7 529.3L280.1 529.7L280.6 530.2L281.1 530.8L281.5 531.4L282.0 532.2L282.5 532.9L282.9 533.8L283.4 534.7L283.8 535.7L284.3 536.8L284.8 537.9L285.2 539.1L285.7 540.3L286.2 541.5L286.6 542.8L287.1 544.2L287.5 545.5L288.0 546.9L288.5 548.2L288.9 549.5L289.4 550.5L289.8 551.0L290.3 550.6L290.8 549.5L291.2 548.2L291.7 546.8L292.2 545.4L292.6 544.1L293.1 542.8L293.5 541.5L294.0 540.3L294.5 539.2L294.9 538.1L295.4 537.2L295.9 536.3L296.3 535.4L296.8 534.7L297.2 534.1L297.7 533.6L298.2 533.2L298.6 532.8L299.1 532.6L299.6 532.5L300.0 532.5L300.5 532.6L300.9 532.8L301.4 533.0L301.9 533.3L302.3 533.7L302.8 534.2L303.3 534.8L303.7 535.5L304.2 536.2L304.6 537.0L305.1 537.8L305.6 538.8L306.0 539.8L306.5 540.8L306.9 541.9L307.4 543.1L307.9 544.3L308.3 545.6L308.8 546.9L309.3 548.2L309.7 549.5L310.2 550.8L310.6 552.0L311.1 553.1L311.6 553.6L312.0 553.3L312.5 552.3L313.0 550.9L313.4 549.5L313.9 548.0L314.3 546.5L314.8 545.0L315.3 543.6L315.7 542.2L316.2 540.8L316.7 539.5L317.1 538.3L317.6 537.1L318.0 536.0L318.5 534.9L319.0 533.9L319.4 533.0L319.9 532.2L320.4 531.4L320.8 530.8L321.3 530.2L321.7 529.7L322.2 529.3L322.7 528.9L323.1 528.7L323.6 528.6L324.0 528.5L324.5 528.5L325.0 528.7L325.4 528.9L325.9 529.1L326.4 529.5L326.8 529.9L327.3 530.5L327.7 531.1L328.2 531.8L328.7 532.5L329.1 533.3L329.6 534.2L330.1 535.2L330.5 536.2L331.0 537.3L331.4 538.4L331.9 539.6L332.4 540.8L332.8 542.1L333.3 543.4L333.8 544.8L334.2 546.1L334.7 547.5L335.1 548.8L335.6 550.0L336.1 550.8L336.5 550.9L337.0 550.1L337.5 548.9L337.9 547.6L338.4 546.2L338.8 544.8L339.3 543.5L339.8 542.2L340.2 541.0L340.7 539.8L341.1 538.7L341.6 537.7L342.1 536.7L342.5 535.9L343.0 535.1L343.5 534.4L343.9 533.9L344.4 533.4L344.8 533.0L345.3 532.7L345.8 532.6L346.2 532.5L346.7 532.5L347.2 532.7L347.6 532.9L348.1 533.1L348.5 533.5L349.0 534.0L349.5 534.5L349.9 535.1L350.4 535.8L350.9 536.5L351.3 537.4L351.8 538.3L352.2 539.2L352.7 540.2L353.2 541.3L353.6 542.5L354.1 543.6L354.6 544.9L355.0 546.1L355.5 547.4L355.9 548.8L356.4 550.1L356.9 551.4L357.3 552.5L357.8 553.4L358.2 553.6L358.7 552.9L359.2 551.7L359.6 550.3L360.1 548.8L360.6 547.3L361.0 545.8L361.5 544.4L361.9 542.9L362.4 541.6L362.9 540.2L363.3 538.9L363.8 537.7L364.3 536.6L364.7 535.5L365.2 534.4L365.6 533.5L366.1 532.6L366.6 531.8L367.0 531.1L367.5 530.5L368.0 529.9L368.4 529.5L368.9 529.1L369.3 528.8L369.8 528.6L370.3 528.5L370.7 528.5L371.2 528.6L371.7 528.7L372.1 529.0L372.6 529.3L373.0 529.7L373.5 530.2L374.0 530.7L374.4 531.4L374.9 532.1L375.3 532.9L375.8 533.7L376.3 534.7L376.7 535.6L377.2 536.7L377.7 537.8L378.1 539.0L378.6 540.2L379.0 541.4L379.5 542.7L380.0 544.1L380.4 545.4L380.9 546.8L381.4 548.1L381.8 549.4L382.3 550.4L382.7 551.0L383.2 550.6L383.7 549.6L384.1 548.3L384.6 546.9L385.1 545.6L385.5 544.2L386.0 542.9L386.4 541.6L386.9 540.4L387.4 539.3L387.8 538.2L388.3 537.2L388.8 536.3L389.2 535.5L389.7 534.8L390.1 534.2L390.6 533.6L391.1 533.2L391.5 532.9L392.0 532.6L392.4 532.5L392.9 532.5L393.4 532.6L393.8 532.7L394.3 533.0L394.8 533.3L395.2 533.7L395.7 534.2L396.1 534.8L396.6 535.4L397.1 536.1L397.5 536.9L398.0 537.8L398.5 538.7L398.9 539.7L399.4 540.7L399.8 541.8L400.3 543.0L400.8 544.2L401.2 545.5L401.7 546.7L402.2 548.0L402.6 549.4L403.1 550.7L403.5 551.9L404.0 553.0L404.5 553.6L404.9 553.3L405.4 552.4L405.9 551.0L406.3 549.6L406.8 548.1L407.2 546.6L407.7 545.1L408.2 543.7L408.6 542.3L409.1 540.9L409.5 539.6L410.0 538.4L410.5 537.2L410.9 536.0L411.4 535.0L411.9 534.0L412.3 533.1L412.8 532.2L413.2 531.5L413.7 530.8L414.2 530.2L414.6 529.7L415.1 529.3L415.6 529.0L416.0 528.7L416.5 528.6L416.9 528.5L417.4 528.5L417.9 528.6L418.3 528.8L418.8 529.1L419.3 529.5L419.7 529.9L420.2 530.4L420.6 531.0L421.1 531.7L421.6 532.4L422.0 533.3L422.5 534.2L423.0 535.1L423.4 536.1L423.9 537.2L424.3 538.3L424.8 539.5L425.3 540.7L425.7 542.0L426.2 543.3L426.6 544.7L427.1 546.0L427.6 547.4L428.0 548.7L428.5 549.9L429.0 550.8L429.4 551.0L429.9 550.2L430.3 549.0L430.8 547.7L431.3 546.3L431.7 544.9L432.2 543.6L432.7 542.3L433.1 541.1L433.6 539.9L434.0 538.8L434.5 537.8L435.0 536.8L435.4 535.9L435.9 535.2L436.4 534.5L436.8 533.9L437.3 533.4L437.7 533.0L438.2 532.7L438.7 532.6L439.1 532.5L439.6 532.5L440.1 532.6L440.5 532.8L441.0 533.1L441.4 533.5L441.9 533.9L442.4 534.4L442.8 535.0L443.3 535.7L443.7 536.5L444.2 537.3L444.7 538.2L445.1 539.1L445.6 540.2L446.1 541.2L446.5 542.4L447.0 543.5L447.4 544.8L447.9 546.0L448.4 547.3L448.8 548.7L449.3 550.0L449.8 551.3L450.2 552.4L450.7 553.3L451.1 553.6L451.6 552.9L452.1 551.8L452.5 550.4L453.0 548.9L453.5 547.4L453.9 545.9L454.4 544.5L454.8 543.0L455.3 541.7L455.8 540.3L456.2 539.0L456.7 537.8L457.2 536.6L457.6 535.5L458.1 534.5L458.5 533.6L459.0 532.7L459.5 531.9L459.9 531.2L460.4 530.5L460.8 530.0L461.3 529.5L461.8 529.1L462.2 528.8L462.7 528.6L463.2 528.5L463.6 528.5L464.1 528.6L464.5 528.7L465.0 529.0L465.5 529.3L465.9 529.7L466.4 530.1L466.9 530.7L467.3 531.3L467.8 532.0L468.2 532.8L468.7 533.7L469.2 534.6L469.6 535.6L470.1 536.6L470.6 537.7L471.0 538.9L471.5 540.1L471.9 541.3L472.4 542.6L472.9 543.9L473.3 545.3L473.8 546.7L474.3 548.0L474.7 549.3L475.2 550.3L475.6 551.0L476.1 550.7L476.6 549.7L477.0 548.4L477.5 547.0L477.9 545.7L478.4 544.3L478.9 543.0L479.3 541.7L479.8 540.5L480.3 539.4L480.7 538.3L481.2 537.3L481.6 536.4L482.1 535.6L482.6 534.8L483.0 534.2L483.5 533.7L484.0 533.2L484.4 532.9L484.9 532.7L485.3 532.5L485.8 532.5L486.3 532.6L486.7 532.7L487.2 533.0L487.7 533.3L488.1 533.7L488.6 534.1L489.0 534.7L489.5 535.3L490.0 536.1L490.4 536.8L490.9 537.7L491.4 538.6L491.8 539.6L492.3 540.6L492.7 541.7L493.2 542.9L493.7 544.1L494.1 545.4L494.6 546.6L495.0 547.9L495.5 549.3L496.0 550.6L496.4 551.8L496.9 552.9L497.4 553.5L497.8 553.4L498.3 552.4L498.7 551.2L499.2 549.7L499.7 548.2L500.1 546.7L500.6 545.3L501.1 543.8L501.5 542.4L502.0 541.0L502.4 539.7L502.9 538.5L503.4 537.3L503.8 536.1L504.3 535.1L504.8 534.1L505.2 533.2L505.7 532.3L506.1 531.5L506.6 530.9L507.1 530.3L507.5 529.7L508.0 529.3L508.5 529.0L508.9 528.7L509.4 528.6L509.8 528.5L510.3 528.5L510.8 528.6L511.2 528.8L511.7 529.1L512.1 529.4L512.6 529.9L513.1 530.4L513.5 531.0L514.0 531.6L514.5 532.4L514.9 533.2L515.4 534.1L515.8 535.0L516.3 536.0L516.8 537.1L517.2 538.2L517.7 539.4L518.2 540.6L518.6 541.9L519.1 543.2L519.5 544.6L520.0 545.9L520.5 547.3L520.9 548.6L521.4 549.8L521.9 550.7L522.3 551.0L522.8 550.3L523.2 549.1L523.7 547.8L524.2 546.4L524.6 545.0L525.1 543.7L525.5 542.4L526.0 541.2L526.5 540.0L526.9 538.9L527.4 537.8L527.9 536.9L528.3 536.0L528.8 535.2L529.2 534.5L529.7 533.9L530.2 533.5L530.6 533.1L531.1 532.8L531.6 532.6L532.0 532.5L532.5 532.5L532.9 532.6L533.4 532.8L533.9 533.1L534.3 533.4L534.8 533.9L535.3 534.4L535.7 535.0L536.2 535.7L536.6 536.4L537.1 537.2L537.6 538.1L538.0 539.1L538.5 540.1L539.0 541.1L539.4 542.3L539.9 543.4L540.3 544.7L540.8 545.9L541.3 547.2L541.7 548.5L542.2 549.9L542.6 551.2L543.1 552.4L543.6 553.3L544.0 553.6L544.5 553.0L545.0 551.9L545.4 550.5L545.9 549.0L546.3 547.6L546.8 546.1L547.3 544.6L547.7 543.2L548.2 541.8L548.7 540.4L549.1 539.1L549.6 537.9L550.0 536.7L550.5 535.6L551.0 534.6L551.4 533.6L551.9 532.8L552.4 531.9L552.8 531.2L553.3 530.6L553.7 530.0L554.2 529.5L554.7 529.2L555.1 528.9L555.6 528.6L556.1 528.5L556.5 528.5L557.0 528.6L557.4 528.7L557.9 528.9L558.4 529.2L558.8 529.6L559.3 530.1L559.7 530.6L560.2 531.3L560.7 532.0L561.1 532.7L561.6 533.6L562.1 534.5L562.5 535.5L563.0 536.5L563.4 537.6L563.9 538.8L564.4 540.0L564.8 541.2L565.3 542.5L565.8 543.8L566.2 545.2L566.7 546.5L567.1 547.9L567.6 549.2L568.1 550.3L568.5 550.9L569.0 550.8L569.5 549.8L569.9 548.5L570.4 547.2L570.8 545.8L571.3 544.4L571.8 543.1L572.2 541.8L572.7 540.6L573.2 539.5L573.6 538.4L574.1 537.4L574.5 536.5L575.0 535.6L575.5 534.9L575.9 534.3L576.4 533.7L576.8 533.3L577.3 532.9L577.8 532.7L578.2 532.5L578.7 532.5L579.2 532.6L579.6 532.7L580.1 532.9L580.5 533.2L581.0 533.6L581.5 534.1L581.9 534.7L582.4 535.3L582.9 536.0L583.3 536.8L583.8 537.6L584.2 538.5L584.7 539.5L585.2 540.6L585.6 541.7L586.1 542.8L586.6 544.0L587.0 545.2L587.5 546.5L587.9 547.8L588.4 549.2L588.9 550.5L589.3 551.7L589.8 552.8L590.3 553.5L590.7 553.4L591.2 552.5L591.6 551.3L592.1 549.8L592.6 548.4L593.0 546.9L593.5 545.4L593.9 543.9L594.4 542.5L594.9 541.1L595.3 539.8L595.8 538.6L596.3 537.4L596.7 536.2L597.2 535.2L597.6 534.2L598.1 533.2L598.6 532.4L599.0 531.6L599.5 530.9L600.0 530.3L600.4 529.8L600.9 529.3L601.3 529.0L601.8 528.7L602.3 528.6L602.7 528.5L603.2 528.5L603.7 528.6L604.1 528.8L604.6 529.1L605.0 529.4L605.5 529.8L606.0 530.3L606.4 530.9L606.9 531.6L607.4 532.3L607.8 533.1L608.3 534.0L608.7 534.9L609.2 536.0L609.7 537.0L610.1 538.1L610.6 539.3L611.0 540.5L611.5 541.8L612.0 543.1L612.4 544.5L612.9 545.8L613.4 547.2L613.8 548.5L614.3 549.7L614.7 550.6L615.2 551.0L615.7 550.4L616.1 549.2L616.6 547.9L617.1 546.5L617.5 545.1L618.0 543.8L618.4 542.5L618.9 541.3L619.4 540.1L619.8 539.0L620.3 537.9L620.8 537.0L621.2 536.1L621.7 535.3L622.1 534.6L622.6 534.0L623.1 533.5L623.5 533.1L624.0 532.8L624.5 532.6L624.9 532.5L625.4 532.5L625.8 532.6L626.3 532.8L626.8 533.1L627.2 533.4L627.7 533.8L628.1 534.4L628.6 534.9L629.1 535.6L629.5 536.3L630.0 537.2L630.5 538.0L630.9 539.0L631.4 540.0L631.8 541.1L632.3 542.2L632.8 543.4L633.2 544.6L633.7 545.8L634.2 547.1L634.6 548.4L635.1 549.8L635.5 551.1L636.0 552.3L636.5 553.2L636.9 553.6L637.4 553.1L637.9 552.0L638.3 550.6L638.8 549.2L639.2 547.7L639.7 546.2L640.2 544.7L640.6 543.3L641.1 541.9L641.6 540.5L642.0 539.2L642.5 538.0L642.9 536.8L643.4 535.7L643.9 534.7L644.3 533.7L644.8 532.8L645.2 532.0L645.7 531.3L646.2 530.6L646.6 530.1L647.1 529.6L647.6 529.2L648.0 528.9L648.5 528.7L648.9 528.5L649.4 528.5L649.9 528.6L650.3 528.7L650.8 528.9L651.3 529.2L651.7 529.6L652.2 530.1L652.6 530.6L653.1 531.2L653.6 531.9L654.0 532.7L654.5 533.5L655.0 534.4L655.4 535.4L655.9 536.4L656.3 537.5L656.8 538.7L657.3 539.9L657.7 541.1L658.2 542.4L658.7 543.7L659.1 545.1L659.6 546.4L660.0 547.8L660.5 549.1L661.0 550.2L661.4 550.9L661.9 550.8L662.3 549.9L662.8 548.6L663.3 547.3L663.7 545.9L664.2 544.5L664.7 543.2L665.1 541.9L665.6 540.7L666.0 539.5L666.5 538.5L667.0 537.5L667.4 536.5L667.9 535.7L668.4 535.0L668.8 534.3L669.3 533.7L669.7 533.3L670.2 532.9L670.7 532.7L671.1 532.5L671.6 532.5L672.1 532.6L672.5 532.7L673.0 532.9L673.4 533.2L673.9 533.6L674.4 534.1L674.8 534.6L675.3 535.2L675.8 535.9L676.2 536.7L676.7 537.5L677.1 538.5L677.6 539.4L678.1 540.5L678.5 541.6L679.0 542.7L679.4 543.9L679.9 545.1L680.4 546.4L680.8 547.7L681.3 549.0L681.8 550.4L682.2 551.6L682.7 552.7L683.1 553.5L683.6 553.5L684.1 552.6L684.5 551.4L685.0 550.0L685.5 548.5L685.9 547.0L686.4 545.5L686.8 544.1L687.3 542.6L687.8 541.3L688.2 539.9L688.7 538.7L689.2 537.5L689.6 536.3L690.1 535.2L690.5 534.2L691.0 533.3L691.5 532.4L691.9 531.7L692.4 531.0L692.9 530.4L693.3 529.8L693.8 529.4L694.2 529.0L694.7 528.8L695.2 528.6L695.6 528.5L696.1 528.5L696.5 528.6L697.0 528.8L697.5 529.0L697.9 529.4L698.4 529.8L698.9 530.3L699.3 530.9L699.8 531.5L700.2 532.3L700.7 533.1L701.2 533.9L701.6 534.9L702.1 535.9L702.6 536.9L703.0 538.0L703.5 539.2L703.9 540.4L704.4 541.7L704.9 543.0L705.3 544.3L705.8 545.7L706.3 547.1L706.7 548.4L707.2 549.6L707.6 550.6L708.1 551.0L708.6 550.5L709.0 549.3L709.5 548.0L710.0 546.6L710.4 545.3L710.9 543.9L711.3 542.6L711.8 541.4L712.3 540.2L712.7 539.0L713.2 538.0L713.6 537.0L714.1 536.1L714.6 535.3L715.0 534.6L715.5 534.0L716.0 533.5L716.4 533.1L716.9 532.8L717.3 532.6L717.8 532.5L718.3 532.5L718.7 532.6L719.2 532.8L719.7 533.0L720.1 533.4L720.6 533.8L721.0 534.3L721.5 534.9L722.0 535.5L722.4 536.3L722.9 537.1L723.4 538.0L723.8 538.9L724.3 539.9L724.7 541.0L725.2 542.1L725.7 543.3L726.1 544.5L726.6 545.7L727.1 547.0L727.5 548.3L728.0 549.7L728.4 551.0L728.9 552.2L729.4 553.2L729.8 553.6L730.3 553.2L730.7 552.1L731.2 550.7L731.7 549.3L732.1 547.8L732.6 546.3L733.1 544.8L733.5 543.4L734.0 542.0L734.4 540.6L734.9 539.3L735.4 538.1L735.8 536.9L736.3 535.8L736.8 534.8L737.2 533.8L737.7 532.9L738.1 532.1L738.6 531.3L739.1 530.7L739.5 530.1L740.0 529.6L740.5 529.2L740.9 528.9L741.4 528.7L741.8 528.5L742.3 528.5L742.8 528.5L743.2 528.7L743.7 528.9L744.2 529.2L744.6 529.6L745.1 530.0L745.5 530.6L746.0 531.2L746.5 531.9L746.9 532.6L747.4 533.4L747.8 534.4L748.3 535.3L748.8 536.3L749.2 537.4L749.7 538.6L750.2 539.8L750.6 541.0L751.1 542.3L751.5 543.6L752.0 545.0L752.5 546.3L752.9 547.7L753.4 549.0L753.9 550.1L754.3 550.9L754.8 550.9L755.2 550.0L755.7 548.7L756.2 547.4L756.6 546.0L757.1 544.6L757.6 543.3L758.0 542.0L758.5 540.8L758.9 539.6L759.4 538.6L759.9 537.5L760.3 536.6L760.8 535.8L761.3 535.0L761.7 534.4L762.2 533.8L762.6 533.3L763.1 533.0L763.6 532.7L764.0 532.5L764.5 532.5L764.9 532.5L765.4 532.7L765.9 532.9L766.3 533.2L766.8 533.6L767.3 534.0L767.7 534.6L768.2 535.2L768.6 535.9L769.1 536.6L769.6 537.5L770.0 538.4L770.5 539.4L771.0 540.4L771.4 541.5L771.9 542.6L772.3 543.8L772.8 545.0L773.3 546.3L773.7 547.6L774.2 548.9L774.7 550.3L775.1 551.5L775.6 552.7L776.0 553.5L776.5 553.5L777.0 552.7L777.4 551.5L777.9 550.1L778.4 548.6L778.8 547.1L779.3 545.6L779.7 544.2L780.2 542.7L780.7 541.4L781.1 540.0L781.6 538.8L782.0 537.6L782.5 536.4L783.0 535.3L783.4 534.3L783.9 533.4L784.4 532.5L784.8 531.7L785.3 531.0L785.7 530.4L786.2 529.9L786.7 529.4L787.1 529.1L787.6 528.8L788.1 528.6L788.5 528.5L789.0 528.5L789.4 528.6L789.9 528.8L790.4 529.0L790.8 529.3L791.3 529.8L791.8 530.3L792.2 530.8L792.7 531.5L793.1 532.2L793.6 533.0L794.1 533.9L794.5 534.8L795.0 535.8L795.5 536.8L795.9 538.0L796.4 539.1L796.8 540.3L797.3 541.6L797.8 542.9L798.2 544.2L798.7 545.6L799.1 546.9L799.6 548.3L800.1 549.5L800.5 550.5L801.0 551.0L801.5 550.5L801.9 549.4L802.4 548.1L802.8 546.8L803.3 545.4L803.8 544.0L804.2 542.7L804.7 541.5L805.2 540.3L805.6 539.1L806.1 538.1L806.5 537.1L807.0 536.2L807.5 535.4L807.9 534.7L808.4 534.1L808.9 533.6L809.3 533.1L809.8 532.8L810.2 532.6L810.7 532.5L811.2 532.5L811.6 532.6L812.1 532.8L812.6 533.0L813.0 533.4L813.5 533.8L813.9 534.3L814.4 534.8L814.9 535.5L815.3 536.2L815.8 537.0L816.2 537.9L816.7 538.8L817.2 539.8L817.6 540.9L818.1 542.0L818.6 543.2L819.0 544.4L819.5 545.6L819.9 546.9L820.4 548.2L820.9 549.5L821.3 550.9L821.8 552.1L822.3 553.1L822.7 553.6L823.2 553.2L823.6 552.2L824.1 550.9L824.6 549.4L825.0 547.9L825.5 546.4L826.0 545.0L826.4 543.5L826.9 542.1L827.3 540.8L827.8 539.4L828.3 538.2L828.7 537.0L829.2 535.9L829.6 534.8L830.1 533.9L830.6 533.0L831.0 532.1L831.5 531.4L832.0 530.7L832.4 530.1L832.9 529.6L833.3 529.2L833.8 528.9L834.3 528.7L834.7 528.5L835.2 528.5L835.7 528.5L836.1 528.7L836.6 528.9L837.0 529.2L837.5 529.5L838.0 530.0L838.4 530.5L838.9 531.1L839.4 531.8L839.8 532.6L840.3 533.4L840.7 534.3L841.2 535.2L841.7 536.3L842.1 537.3L842.6 538.5L843.1 539.7L843.5 540.9L844.0 542.2L844.4 543.5L844.9 544.9L845.4 546.2L845.8 547.6L846.3 548.9L846.7 550.0L847.2 550.8L847.7 550.9L848.1 550.1L848.6 548.9L849.1 547.5L849.5 546.1" stroke="#03133a"/>
<path d="M111.3 628.5L111.5 557.7L111.5 543.3L111.6 535.2L111.7 529.7L111.8 525.5L111.9 522.2L111.9 522.2L112.0 519.6L112.1 517.3L112.2 515.4L112.3 513.7L112.4 512.3L112.4 512.3L112.5 511.0L112.6 509.8L112.7 508.8L112.8 507.9L112.8 507.0L112.8 507.0L112.9 506.3L113.0 505.6L113.1 504.9L113.2 504.4L113.3 503.8L113.3 503.8L113.4 503.3L113.5 502.9L113.6 502.4L113.7 502.0L113.8 501.7L113.8 501.7L113.9 501.3L114.0 501.0L114.0 500.7L114.1 500.5L114.2 500.2L114.2 500.2L114.3 500.0L114.4 499.7L114.7 499.2L115.2 498.5L115.6 498.0L116.1 497.7L116.5 497.6L117.0 497.6L117.5 497.8L117.9 498.1L118.4 498.5L118.9 499.0L119.3 499.6L119.8 500.3L120.2 501.2L120.7 502.1L121.2 503.1L121.6 504.2L122.1 505.5L122.5 506.8L123.0 508.2L123.5 509.7L123.9 511.2L124.4 512.9L124.9 514.7L125.3 516.5L125.8 518.4L126.2 520.5L126.7 522.6L127.2 524.8L127.6 527.1L128.1 529.5L128.6 532.1L129.0 534.8L129.5 533.8L129.9 530.5L130.4 527.4L130.9 524.5L131.3 521.8L131.8 519.2L132.3 516.7L132.7 514.3L133.2 512.1L133.6 509.9L134.1 507.9L134.6 506.0L135.0 504.2L135.5 502.5L136.0 501.0L136.4 499.5L136.9 498.2L137.3 497.0L137.8 496.0L138.3 495.0L138.7 494.2L139.2 493.6L139.6 493.1L140.1 492.7L140.6 492.4L141.0 492.3L141.5 492.3L142.0 492.5L142.4 492.8L142.9 493.3L143.3 493.8L143.8 494.6L144.3 495.4L144.7 496.5L145.2 497.6L145.7 498.9L146.1 500.3L146.6 501.8L147.0 503.5L147.5 505.3L148.0 507.2L148.4 509.3L148.9 511.5L149.4 513.8L149.8 516.3L150.3 519.0L150.7 521.8L151.2 524.9L151.7 528.4L152.1 529.8L152.6 526.5L153.1 523.5L153.5 520.8L154.0 518.3L154.4 516.0L154.9 513.9L155.4 511.8L155.8 510.0L156.3 508.2L156.7 506.6L157.2 505.1L157.7 503.8L158.1 502.5L158.6 501.4L159.1 500.5L159.5 499.7L160.0 499.0L160.4 498.5L160.9 498.1L161.4 497.9L161.8 497.8L162.3 497.8L162.8 497.9L163.2 498.2L163.7 498.4L164.1 498.8L164.6 499.3L165.1 499.8L165.5 500.4L166.0 501.1L166.5 501.9L166.9 502.8L167.4 503.7L167.8 504.8L168.3 505.9L168.8 507.1L169.2 508.3L169.7 509.6L170.2 511.0L170.6 512.5L171.1 514.0L171.5 515.6L172.0 517.3L172.5 519.1L172.9 520.9L173.4 522.8L173.8 524.8L174.3 526.9L174.8 529.1L175.2 531.4L175.7 533.0L176.2 530.2L176.6 527.1L177.1 524.3L177.5 521.6L178.0 519.1L178.5 516.7L178.9 514.4L179.4 512.2L179.9 510.1L180.3 508.1L180.8 506.2L181.2 504.5L181.7 502.8L182.2 501.3L182.6 499.9L183.1 498.6L183.6 497.4L184.0 496.3L184.5 495.4L184.9 494.5L185.4 493.8L185.9 493.3L186.3 492.8L186.8 492.5L187.3 492.3L187.7 492.3L188.2 492.4L188.6 492.6L189.1 493.0L189.6 493.4L190.0 494.1L190.5 494.8L190.9 495.7L191.4 496.7L191.9 497.8L192.3 499.1L192.8 500.5L193.3 502.0L193.7 503.6L194.2 505.4L194.6 507.3L195.1 509.3L195.6 511.4L196.0 513.7L196.5 516.1L197.0 518.7L197.4 521.5L197.9 524.6L198.3 528.0L198.8 526.3L199.3 523.3L199.7 520.7L200.2 518.3L200.7 516.0L201.1 513.9L201.6 512.0L202.0 510.1L202.5 508.4L203.0 506.8L203.4 505.4L203.9 504.0L204.4 502.8L204.8 501.7L205.3 500.8L205.7 500.0L206.2 499.3L206.7 498.7L207.1 498.3L207.6 498.0L208.0 497.8L208.5 497.8L209.0 497.9L209.4 498.0L209.9 498.3L210.4 498.6L210.8 499.0L211.3 499.5L211.7 500.0L212.2 500.7L212.7 501.4L213.1 502.2L213.6 503.1L214.1 504.0L214.5 505.1L215.0 506.2L215.4 507.4L215.9 508.6L216.4 509.9L216.8 511.3L217.3 512.8L217.8 514.3L218.2 515.9L218.7 517.6L219.1 519.3L219.6 521.1L220.1 523.0L220.5 525.0L221.0 527.1L221.4 529.3L221.9 531.6L222.4 531.0L222.8 527.9L223.3 525.0L223.8 522.4L224.2 519.8L224.7 517.4L225.1 515.1L225.6 512.9L226.1 510.8L226.5 508.8L227.0 506.9L227.5 505.1L227.9 503.5L228.4 501.9L228.8 500.4L229.3 499.1L229.8 497.9L230.2 496.8L230.7 495.8L231.2 494.9L231.6 494.2L232.1 493.5L232.5 493.0L233.0 492.7L233.5 492.4L233.9 492.3L234.4 492.3L234.9 492.5L235.3 492.7L235.8 493.2L236.2 493.7L236.7 494.4L237.2 495.2L237.6 496.1L238.1 497.1L238.5 498.3L239.0 499.6L239.5 501.0L239.9 502.6L240.4 504.2L240.9 506.0L241.3 507.9L241.8 509.9L242.2 512.1L242.7 514.4L243.2 516.8L243.6 519.5L244.1 522.4L244.6 525.6L245.0 527.4L245.5 524.3L245.9 521.6L246.4 519.1L246.9 516.8L247.3 514.7L247.8 512.7L248.3 510.8L248.7 509.1L249.2 507.5L249.6 506.0L250.1 504.6L250.6 503.4L251.0 502.2L251.5 501.2L252.0 500.3L252.4 499.6L252.9 499.0L253.3 498.5L253.8 498.1L254.3 497.9L254.7 497.8L255.2 497.8L255.6 497.9L256.1 498.1L256.6 498.4L257.0 498.7L257.5 499.2L258.0 499.7L258.4 500.3L258.9 501.0L259.3 501.7L259.8 502.5L260.3 503.5L260.7 504.4L261.2 505.5L261.7 506.6L262.1 507.8L262.6 509.1L263.0 510.4L263.5 511.8L264.0 513.3L264.4 514.8L264.9 516.5L265.4 518.1L265.8 519.9L266.3 521.7L266.7 523.6L267.2 525.6L267.7 527.8L268.1 530.0L268.6 531.7L269.1 529.2L269.5 526.3L270.0 523.5L270.4 520.9L270.9 518.4L271.4 516.1L271.8 513.8L272.3 511.7L272.7 509.7L273.2 507.8L273.7 505.9L274.1 504.2L274.6 502.6L275.1 501.1L275.5 499.7L276.0 498.5L276.4 497.3L276.9 496.3L277.4 495.3L277.8 494.5L278.3 493.8L278.8 493.3L279.2 492.8L279.7 492.5L280.1 492.4L280.6 492.3L281.1 492.4L281.5 492.6L282.0 492.9L282.5 493.4L282.9 494.0L283.4 494.7L283.8 495.5L284.3 496.5L284.8 497.6L285.2 498.8L285.7 500.2L286.2 501.7L286.6 503.3L287.1 505.0L287.5 506.8L288.0 508.7L288.5 510.8L288.9 513.0L289.4 515.4L289.8 517.9L290.3 520.6L290.8 523.6L291.2 526.9L291.7 525.8L292.2 522.9L292.6 520.3L293.1 517.9L293.5 515.7L294.0 513.6L294.5 511.7L294.9 509.9L295.4 508.3L295.9 506.7L296.3 505.3L296.8 504.0L297.2 502.8L297.7 501.7L298.2 500.8L298.6 500.0L299.1 499.3L299.6 498.7L300.0 498.3L300.5 498.0L300.9 497.8L301.4 497.8L301.9 497.9L302.3 498.0L302.8 498.2L303.3 498.5L303.7 498.9L304.2 499.4L304.6 499.9L305.1 500.6L305.6 501.3L306.0 502.1L306.5 502.9L306.9 503.9L307.4 504.9L307.9 506.0L308.3 507.1L308.8 508.3L309.3 509.6L309.7 511.0L310.2 512.4L310.6 513.9L311.1 515.5L311.6 517.1L312.0 518.8L312.5 520.6L313.0 522.5L313.4 524.4L313.9 526.5L314.3 528.6L314.8 530.9L315.3 530.7L315.7 527.7L316.2 524.8L316.7 522.2L317.1 519.6L317.6 517.2L318.0 515.0L318.5 512.8L319.0 510.7L319.4 508.7L319.9 506.9L320.4 505.1L320.8 503.4L321.3 501.9L321.7 500.4L322.2 499.1L322.7 497.9L323.1 496.8L323.6 495.8L324.0 494.9L324.5 494.2L325.0 493.6L325.4 493.1L325.9 492.7L326.4 492.4L326.8 492.3L327.3 492.3L327.7 492.4L328.2 492.7L328.7 493.1L329.1 493.6L329.6 494.3L330.1 495.1L330.5 496.0L331.0 497.0L331.4 498.2L331.9 499.4L332.4 500.8L332.8 502.4L333.3 504.0L333.8 505.8L334.2 507.6L334.7 509.6L335.1 511.8L335.6 514.1L336.1 516.5L336.5 519.1L337.0 521.9L337.5 525.1L337.9 527.3L338.4 524.4L338.8 521.6L339.3 519.1L339.8 516.8L340.2 514.7L340.7 512.7L341.1 510.9L341.6 509.1L342.1 507.5L342.5 506.0L343.0 504.7L343.5 503.4L343.9 502.3L344.4 501.3L344.8 500.4L345.3 499.6L345.8 499.0L346.2 498.5L346.7 498.1L347.2 497.9L347.6 497.8L348.1 497.8L348.5 497.9L349.0 498.1L349.5 498.4L349.9 498.7L350.4 499.1L350.9 499.6L351.3 500.2L351.8 500.9L352.2 501.6L352.7 502.4L353.2 503.3L353.6 504.3L354.1 505.4L354.6 506.5L355.0 507.7L355.5 508.9L355.9 510.2L356.4 511.6L356.9 513.1L357.3 514.6L357.8 516.2L358.2 517.9L358.7 519.6L359.2 521.4L359.6 523.3L360.1 525.3L360.6 527.4L361.0 529.6L361.5 531.5L361.9 529.3L362.4 526.3L362.9 523.5L363.3 520.9L363.8 518.5L364.3 516.1L364.7 513.9L365.2 511.8L365.6 509.8L366.1 507.8L366.6 506.0L367.0 504.3L367.5 502.7L368.0 501.2L368.4 499.8L368.9 498.5L369.3 497.4L369.8 496.3L370.3 495.4L370.7 494.6L371.2 493.9L371.7 493.3L372.1 492.9L372.6 492.6L373.0 492.4L373.5 492.3L374.0 492.4L374.4 492.6L374.9 492.9L375.3 493.3L375.8 493.9L376.3 494.6L376.7 495.5L377.2 496.4L377.7 497.5L378.1 498.7L378.6 500.1L379.0 501.5L379.5 503.1L380.0 504.8L380.4 506.6L380.9 508.5L381.4 510.6L381.8 512.8L382.3 515.1L382.7 517.6L383.2 520.3L383.7 523.3L384.1 526.6L384.6 526.0L385.1 523.0L385.5 520.4L386.0 518.0L386.4 515.8L386.9 513.8L387.4 511.8L387.8 510.0L388.3 508.4L388.8 506.8L389.2 505.4L389.7 504.1L390.1 502.9L390.6 501.8L391.1 500.8L391.5 500.0L392.0 499.3L392.4 498.8L392.9 498.3L393.4 498.0L393.8 497.8L394.3 497.8L394.8 497.9L395.2 498.0L395.7 498.2L396.1 498.5L396.6 498.9L397.1 499.4L397.5 499.9L398.0 500.5L398.5 501.2L398.9 502.0L399.4 502.8L399.8 503.8L400.3 504.8L400.8 505.9L401.2 507.0L401.7 508.2L402.2 509.5L402.6 510.9L403.1 512.3L403.5 513.8L404.0 515.3L404.5 516.9L404.9 518.6L405.4 520.4L405.9 522.3L406.3 524.2L406.8 526.2L407.2 528.4L407.7 530.6L408.2 530.8L408.6 527.9L409.1 525.0L409.5 522.3L410.0 519.8L410.5 517.4L410.9 515.1L411.4 512.9L411.9 510.8L412.3 508.8L412.8 507.0L413.2 505.2L413.7 503.5L414.2 502.0L414.6 500.5L415.1 499.2L415.6 498.0L416.0 496.9L416.5 495.9L416.9 495.0L417.4 494.2L417.9 493.6L418.3 493.1L418.8 492.7L419.3 492.5L419.7 492.3L420.2 492.3L420.6 492.4L421.1 492.7L421.6 493.1L422.0 493.6L422.5 494.2L423.0 495.0L423.4 495.9L423.9 496.9L424.3 498.1L424.8 499.3L425.3 500.7L425.7 502.2L426.2 503.9L426.6 505.6L427.1 507.5L427.6 509.5L428.0 511.6L428.5 513.8L429.0 516.3L429.4 518.8L429.9 521.6L430.3 524.8L430.8 527.4L431.3 524.6L431.7 521.8L432.2 519.3L432.7 517.0L433.1 514.9L433.6 512.9L434.0 511.0L434.5 509.3L435.0 507.6L435.4 506.1L435.9 504.8L436.4 503.5L436.8 502.4L437.3 501.3L437.7 500.5L438.2 499.7L438.7 499.1L439.1 498.5L439.6 498.2L440.1 497.9L440.5 497.8L441.0 497.8L441.4 497.9L441.9 498.1L442.4 498.3L442.8 498.7L443.3 499.1L443.7 499.6L444.2 500.2L444.7 500.8L445.1 501.6L445.6 502.4L446.1 503.3L446.5 504.2L447.0 505.3L447.4 506.4L447.9 507.5L448.4 508.8L448.8 510.1L449.3 511.5L449.8 512.9L450.2 514.5L450.7 516.1L451.1 517.7L451.6 519.4L452.1 521.2L452.5 523.1L453.0 525.1L453.5 527.2L453.9 529.4L454.4 531.4L454.8 529.5L455.3 526.5L455.8 523.7L456.2 521.1L456.7 518.7L457.2 516.3L457.6 514.1L458.1 511.9L458.5 509.9L459.0 508.0L459.5 506.1L459.9 504.4L460.4 502.8L460.8 501.3L461.3 499.9L461.8 498.6L462.2 497.4L462.7 496.4L463.2 495.4L463.6 494.6L464.1 493.9L464.5 493.4L465.0 492.9L465.5 492.6L465.9 492.4L466.4 492.3L466.9 492.4L467.3 492.5L467.8 492.8L468.2 493.3L468.7 493.9L469.2 494.6L469.6 495.4L470.1 496.3L470.6 497.4L471.0 498.6L471.5 499.9L471.9 501.4L472.4 503.0L472.9 504.6L473.3 506.5L473.8 508.4L474.3 510.4L474.7 512.6L475.2 514.9L475.6 517.4L476.1 520.1L476.6 523.0L477.0 526.3L477.5 526.2L477.9 523.2L478.4 520.6L478.9 518.2L479.3 516.0L479.8 513.9L480.3 512.0L480.7 510.2L481.2 508.5L481.6 506.9L482.1 505.5L482.6 504.2L483.0 503.0L483.5 501.9L484.0 500.9L484.4 500.1L484.9 499.4L485.3 498.8L485.8 498.4L486.3 498.0L486.7 497.9L487.2 497.8L487.7 497.8L488.1 498.0L488.6 498.2L489.0 498.5L489.5 498.9L490.0 499.3L490.4 499.8L490.9 500.5L491.4 501.2L491.8 501.9L492.3 502.8L492.7 503.7L493.2 504.7L493.7 505.8L494.1 506.9L494.6 508.1L495.0 509.4L495.5 510.7L496.0 512.2L496.4 513.6L496.9 515.2L497.4 516.8L497.8 518.5L498.3 520.3L498.7 522.1L499.2 524.0L499.7 526.0L500.1 528.2L500.6 530.4L501.1 531.0L501.5 528.1L502.0 525.2L502.4 522.5L502.9 520.0L503.4 517.6L503.8 515.3L504.3 513.1L504.8 511.0L505.2 509.0L505.7 507.1L506.1 505.3L506.6 503.7L507.1 502.1L507.5 500.6L508.0 499.3L508.5 498.1L508.9 496.9L509.4 495.9L509.8 495.1L510.3 494.3L510.8 493.7L511.2 493.1L511.7 492.7L512.1 492.5L512.6 492.3L513.1 492.3L513.5 492.4L514.0 492.7L514.5 493.0L514.9 493.5L515.4 494.2L515.8 494.9L516.3 495.8L516.8 496.8L517.2 498.0L517.7 499.2L518.2 500.6L518.6 502.1L519.1 503.7L519.5 505.5L520.0 507.3L520.5 509.3L520.9 511.4L521.4 513.7L521.9 516.1L522.3 518.6L522.8 521.4L523.2 524.5L523.7 527.5L524.2 524.8L524.6 522.0L525.1 519.5L525.5 517.2L526.0 515.0L526.5 513.0L526.9 511.1L527.4 509.4L527.9 507.8L528.3 506.3L528.8 504.9L529.2 503.6L529.7 502.4L530.2 501.4L530.6 500.5L531.1 499.7L531.6 499.1L532.0 498.6L532.5 498.2L532.9 497.9L533.4 497.8L533.9 497.8L534.3 497.9L534.8 498.1L535.3 498.3L535.7 498.6L536.2 499.1L536.6 499.5L537.1 500.1L537.6 500.8L538.0 501.5L538.5 502.3L539.0 503.2L539.4 504.1L539.9 505.2L540.3 506.3L540.8 507.4L541.3 508.7L541.7 510.0L542.2 511.4L542.6 512.8L543.1 514.3L543.6 515.9L544.0 517.6L544.5 519.3L545.0 521.1L545.4 523.0L545.9 524.9L546.3 527.0L546.8 529.2L547.3 531.3L547.7 529.7L548.2 526.7L548.7 523.9L549.1 521.3L549.6 518.8L550.0 516.5L550.5 514.2L551.0 512.1L551.4 510.1L551.9 508.1L552.4 506.3L552.8 504.6L553.3 502.9L553.7 501.4L554.2 500.0L554.7 498.7L555.1 497.5L555.6 496.5L556.1 495.5L556.5 494.7L557.0 494.0L557.4 493.4L557.9 492.9L558.4 492.6L558.8 492.4L559.3 492.3L559.7 492.3L560.2 492.5L560.7 492.8L561.1 493.2L561.6 493.8L562.1 494.5L562.5 495.3L563.0 496.3L563.4 497.3L563.9 498.5L564.4 499.8L564.8 501.3L565.3 502.8L565.8 504.5L566.2 506.3L566.7 508.2L567.1 510.3L567.6 512.4L568.1 514.7L568.5 517.2L569.0 519.9L569.5 522.8L569.9 526.1L570.4 526.5L570.8 523.5L571.3 520.8L571.8 518.4L572.2 516.2L572.7 514.1L573.2 512.1L573.6 510.3L574.1 508.6L574.5 507.1L575.0 505.6L575.5 504.3L575.9 503.0L576.4 502.0L576.8 501.0L577.3 500.1L577.8 499.4L578.2 498.8L578.7 498.4L579.2 498.1L579.6 497.9L580.1 497.8L580.5 497.8L581.0 498.0L581.5 498.2L581.9 498.5L582.4 498.8L582.9 499.3L583.3 499.8L583.8 500.4L584.2 501.1L584.7 501.9L585.2 502.7L585.6 503.6L586.1 504.6L586.6 505.7L587.0 506.8L587.5 508.0L587.9 509.3L588.4 510.6L588.9 512.0L589.3 513.5L589.8 515.1L590.3 516.7L590.7 518.4L591.2 520.1L591.6 521.9L592.1 523.9L592.6 525.9L593.0 528.0L593.5 530.2L593.9 531.2L594.4 528.3L594.9 525.4L595.3 522.7L595.8 520.2L596.3 517.8L596.7 515.4L597.2 513.2L597.6 511.1L598.1 509.2L598.6 507.3L599.0 505.5L599.5 503.8L600.0 502.2L600.4 500.8L600.9 499.4L601.3 498.2L601.8 497.0L602.3 496.0L602.7 495.1L603.2 494.4L603.7 493.7L604.1 493.2L604.6 492.8L605.0 492.5L605.5 492.3L606.0 492.3L606.4 492.4L606.9 492.6L607.4 493.0L607.8 493.5L608.3 494.1L608.7 494.9L609.2 495.7L609.7 496.7L610.1 497.9L610.6 499.1L611.0 500.5L611.5 502.0L612.0 503.6L612.4 505.3L612.9 507.2L613.4 509.1L613.8 511.2L614.3 513.5L614.7 515.8L615.2 518.4L615.7 521.2L616.1 524.2L616.6 527.4L617.1 525.1L617.5 522.2L618.0 519.7L618.4 517.3L618.9 515.2L619.4 513.2L619.8 511.3L620.3 509.5L620.8 507.9L621.2 506.4L621.7 505.0L622.1 503.7L622.6 502.5L623.1 501.5L623.5 500.6L624.0 499.8L624.5 499.1L624.9 498.6L625.4 498.2L625.8 498.0L626.3 497.8L626.8 497.8L627.2 497.9L627.7 498.0L628.1 498.3L628.6 498.6L629.1 499.0L629.5 499.5L630.0 500.1L630.5 500.7L630.9 501.4L631.4 502.2L631.8 503.1L632.3 504.1L632.8 505.1L633.2 506.2L633.7 507.3L634.2 508.6L634.6 509.9L635.1 511.3L635.5 512.7L636.0 514.2L636.5 515.8L636.9 517.4L637.4 519.1L637.9 520.9L638.3 522.8L638.8 524.8L639.2 526.8L639.7 529.0L640.2 531.2L640.6 529.9L641.1 527.0L641.6 524.2L642.0 521.5L642.5 519.0L642.9 516.7L643.4 514.4L643.9 512.3L644.3 510.2L644.8 508.3L645.2 506.4L645.7 504.7L646.2 503.1L646.6 501.5L647.1 500.1L647.6 498.8L648.0 497.6L648.5 496.6L648.9 495.6L649.4 494.8L649.9 494.0L650.3 493.4L650.8 493.0L651.3 492.6L651.7 492.4L652.2 492.3L652.6 492.3L653.1 492.5L653.6 492.8L654.0 493.2L654.5 493.8L655.0 494.4L655.4 495.2L655.9 496.2L656.3 497.2L656.8 498.4L657.3 499.7L657.7 501.2L658.2 502.7L658.7 504.4L659.1 506.1L659.6 508.1L660.0 510.1L660.5 512.2L661.0 514.5L661.4 517.0L661.9 519.6L662.3 522.5L662.8 525.8L663.3 526.7L663.7 523.7L664.2 521.0L664.7 518.6L665.1 516.3L665.6 514.2L666.0 512.3L666.5 510.5L667.0 508.8L667.4 507.2L667.9 505.7L668.4 504.4L668.8 503.1L669.3 502.0L669.7 501.1L670.2 500.2L670.7 499.5L671.1 498.9L671.6 498.4L672.1 498.1L672.5 497.9L673.0 497.8L673.4 497.8L673.9 498.0L674.4 498.1L674.8 498.4L675.3 498.8L675.8 499.2L676.2 499.8L676.7 500.4L677.1 501.0L677.6 501.8L678.1 502.6L678.5 503.5L679.0 504.5L679.4 505.6L679.9 506.7L680.4 507.9L680.8 509.2L681.3 510.5L681.8 511.9L682.2 513.4L682.7 514.9L683.1 516.5L683.6 518.2L684.1 520.0L684.5 521.8L685.0 523.7L685.5 525.7L685.9 527.8L686.4 530.1L686.8 531.3L687.3 528.6L687.8 525.7L688.2 522.9L688.7 520.4L689.2 517.9L689.6 515.6L690.1 513.4L690.5 511.3L691.0 509.3L691.5 507.4L691.9 505.6L692.4 503.9L692.9 502.3L693.3 500.9L693.8 499.5L694.2 498.3L694.7 497.1L695.2 496.1L695.6 495.2L696.1 494.4L696.5 493.7L697.0 493.2L697.5 492.8L697.9 492.5L698.4 492.3L698.9 492.3L699.3 492.4L699.8 492.6L700.2 493.0L700.7 493.4L701.2 494.1L701.6 494.8L702.1 495.7L702.6 496.7L703.0 497.8L703.5 499.0L703.9 500.4L704.4 501.8L704.9 503.4L705.3 505.2L705.8 507.0L706.3 509.0L706.7 511.1L707.2 513.3L707.6 515.7L708.1 518.2L708.6 520.9L709.0 524.0L709.5 527.2L710.0 525.3L710.4 522.4L710.9 519.9L711.3 517.5L711.8 515.4L712.3 513.3L712.7 511.4L713.2 509.7L713.6 508.0L714.1 506.5L714.6 505.1L715.0 503.8L715.5 502.6L716.0 501.6L716.4 500.7L716.9 499.9L717.3 499.2L717.8 498.7L718.3 498.3L718.7 498.0L719.2 497.8L719.7 497.8L720.1 497.9L720.6 498.0L721.0 498.3L721.5 498.6L722.0 499.0L722.4 499.5L722.9 500.0L723.4 500.7L723.8 501.4L724.3 502.2L724.7 503.0L725.2 504.0L725.7 505.0L726.1 506.1L726.6 507.2L727.1 508.5L727.5 509.8L728.0 511.1L728.4 512.6L728.9 514.1L729.4 515.7L729.8 517.3L730.3 519.0L730.7 520.8L731.2 522.7L731.7 524.6L732.1 526.7L732.6 528.8L733.1 531.0L733.5 530.2L734.0 527.2L734.4 524.4L734.9 521.7L735.4 519.2L735.8 516.9L736.3 514.6L736.8 512.4L737.2 510.4L737.7 508.4L738.1 506.6L738.6 504.8L739.1 503.2L739.5 501.7L740.0 500.2L740.5 498.9L740.9 497.7L741.4 496.6L741.8 495.7L742.3 494.8L742.8 494.1L743.2 493.5L743.7 493.0L744.2 492.6L744.6 492.4L745.1 492.3L745.5 492.3L746.0 492.5L746.5 492.8L746.9 493.2L747.4 493.7L747.8 494.4L748.3 495.2L748.8 496.1L749.2 497.1L749.7 498.3L750.2 499.6L750.6 501.0L751.1 502.6L751.5 504.2L752.0 506.0L752.5 507.9L752.9 509.9L753.4 512.1L753.9 514.4L754.3 516.8L754.8 519.4L755.2 522.3L755.7 525.5L756.2 527.0L756.6 523.9L757.1 521.2L757.6 518.8L758.0 516.5L758.5 514.4L758.9 512.4L759.4 510.6L759.9 508.9L760.3 507.3L760.8 505.8L761.3 504.5L761.7 503.2L762.2 502.1L762.6 501.1L763.1 500.3L763.6 499.5L764.0 498.9L764.5 498.5L764.9 498.1L765.4 497.9L765.9 497.8L766.3 497.8L766.8 497.9L767.3 498.1L767.7 498.4L768.2 498.8L768.6 499.2L769.1 499.7L769.6 500.3L770.0 501.0L770.5 501.7L771.0 502.6L771.4 503.5L771.9 504.4L772.3 505.5L772.8 506.6L773.3 507.8L773.7 509.1L774.2 510.4L774.7 511.8L775.1 513.3L775.6 514.8L776.0 516.4L776.5 518.1L777.0 519.8L777.4 521.6L777.9 523.5L778.4 525.5L778.8 527.6L779.3 529.9L779.7 531.5L780.2 528.8L780.7 525.9L781.1 523.2L781.6 520.6L782.0 518.1L782.5 515.8L783.0 513.6L783.4 511.5L783.9 509.5L784.4 507.6L784.8 505.8L785.3 504.1L785.7 502.5L786.2 501.0L786.7 499.6L787.1 498.4L787.6 497.2L788.1 496.2L788.5 495.3L789.0 494.5L789.4 493.8L789.9 493.3L790.4 492.8L790.8 492.5L791.3 492.4L791.8 492.3L792.2 492.4L792.7 492.6L793.1 492.9L793.6 493.4L794.1 494.0L794.5 494.7L795.0 495.6L795.5 496.6L795.9 497.7L796.4 498.9L796.8 500.3L797.3 501.7L797.8 503.3L798.2 505.0L798.7 506.9L799.1 508.8L799.6 510.9L800.1 513.1L800.5 515.5L801.0 518.0L801.5 520.7L801.9 523.7L802.4 527.0L802.8 525.6L803.3 522.7L803.8 520.1L804.2 517.7L804.7 515.5L805.2 513.5L805.6 511.6L806.1 509.8L806.5 508.1L807.0 506.6L807.5 505.2L807.9 503.9L808.4 502.7L808.9 501.7L809.3 500.7L809.8 499.9L810.2 499.2L810.7 498.7L811.2 498.3L811.6 498.0L812.1 497.8L812.6 497.8L813.0 497.9L813.5 498.0L813.9 498.2L814.4 498.6L814.9 498.9L815.3 499.4L815.8 500.0L816.2 500.6L816.7 501.3L817.2 502.1L817.6 503.0L818.1 503.9L818.6 504.9L819.0 506.0L819.5 507.2L819.9 508.4L820.4 509.7L820.9 511.0L821.3 512.5L821.8 514.0L822.3 515.5L822.7 517.2L823.2 518.9L823.6 520.6L824.1 522.5L824.6 524.4L825.0 526.5L825.5 528.7L826.0 530.9L826.4 530.4L826.9 527.4L827.3 524.6L827.8 522.0L828.3 519.4L828.7 517.1L829.2 514.8L829.6 512.6L830.1 510.5L830.6 508.6L831.0 506.7L831.5 505.0L832.0 503.3L832.4 501.8L832.9 500.3L833.3 499.0L833.8 497.8L834.3 496.7L834.7 495.7L835.2 494.9L835.7 494.1L836.1 493.5L836.6 493.0L837.0 492.7L837.5 492.4L838.0 492.3L838.4 492.3L838.9 492.5L839.4 492.7L839.8 493.1L840.3 493.7L840.7 494.3L841.2 495.1L841.7 496.0L842.1 497.1L842.6 498.2L843.1 499.5L843.5 500.9L844.0 502.4L844.4 504.1L844.9 505.9L845.4 507.7L845.8 509.7L846.3 511.9L846.7 514.2L847.2 516.6L847.7 519.2L848.1 522.0L848.6 525.2L849.1 527.2L849.5 524.2" stroke="#044a7a"/>
<path d="M111.3 628.5L111.5 539.2L111.5 524.8L111.6 516.8L111.7 511.3L111.8 507.2L111.9 504.0L111.9 504.0L112.0 501.4L112.1 499.2L112.2 497.3L112.3 495.7L112.4 494.3L112.4 494.3L112.5 493.0L112.6 491.9L112.7 491.0L112.8 490.1L112.8 489.3L112.8 489.3L112.9 488.6L113.0 487.9L113.1 487.4L113.2 486.8L113.3 486.3L113.3 486.3L113.4 485.9L113.5 485.5L113.6 485.1L113.7 484.7L113.8 484.4L113.8 484.4L113.9 484.1L114.0 483.9L114.0 483.6L114.1 483.4L114.2 483.2L114.2 483.2L114.3 483.0L114.4 482.8L114.7 482.4L115.2 481.8L115.6 481.6L116.1 481.5L116.5 481.5L117.0 481.7L117.5 482.1L117.9 482.5L118.4 483.1L118.9 483.8L119.3 484.6L119.8 485.4L120.2 486.4L120.7 487.5L121.2 488.7L121.6 490.0L122.1 491.4L122.5 492.8L123.0 494.4L123.5 496.2L123.9 498.0L124.4 500.1L124.9 502.3L125.3 502.0L125.8 501.7L126.2 501.5L126.7 501.3L127.2 501.2L127.6 501.2L128.1 501.3L128.6 501.5L129.0 501.8L129.5 502.1L129.9 502.6L130.4 500.7L130.9 498.7L131.3 496.9L131.8 495.2L132.3 493.6L132.7 492.1L133.2 490.6L133.6 489.3L134.1 488.0L134.6 486.7L135.0 485.6L135.5 484.4L136.0 483.4L136.4 482.4L136.9 481.5L137.3 480.6L137.8 479.8L138.3 479.0L138.7 478.4L139.2 477.7L139.6 477.2L140.1 476.7L140.6 476.2L141.0 475.9L141.5 475.6L142.0 475.3L142.4 475.1L142.9 475.0L143.3 475.0L143.8 475.1L144.3 475.3L144.7 475.7L145.2 476.3L145.7 477.0L146.1 477.9L146.6 479.0L147.0 480.2L147.5 481.6L148.0 483.1L148.4 484.9L148.9 486.8L149.4 488.8L149.8 491.1L150.3 493.5L150.7 496.3L151.2 499.3L151.7 502.9L152.1 504.8L152.6 501.6L153.1 499.0L153.5 496.8L154.0 494.7L154.4 492.8L154.9 491.1L155.4 489.5L155.8 488.0L156.3 486.6L156.7 485.4L157.2 484.3L157.7 483.3L158.1 482.4L158.6 481.7L159.1 481.1L159.5 480.6L160.0 480.2L160.4 479.9L160.9 479.8L161.4 479.8L161.8 479.9L162.3 480.1L162.8 480.4L163.2 480.7L163.7 481.2L164.1 481.8L164.6 482.4L165.1 483.1L165.5 484.0L166.0 484.9L166.5 485.9L166.9 487.0L167.4 488.1L167.8 489.4L168.3 490.7L168.8 492.2L169.2 493.7L169.7 495.4L170.2 497.1L170.6 499.1L171.1 501.3L171.5 502.2L172.0 501.9L172.5 501.6L172.9 501.4L173.4 501.2L173.8 501.2L174.3 501.2L174.8 501.4L175.2 501.6L175.7 501.9L176.2 502.3L176.6 501.9L177.1 499.8L177.5 497.8L178.0 496.1L178.5 494.4L178.9 492.9L179.4 491.4L179.9 490.0L180.3 488.7L180.8 487.4L181.2 486.2L181.7 485.0L182.2 484.0L182.6 482.9L183.1 482.0L183.6 481.1L184.0 480.2L184.5 479.4L184.9 478.7L185.4 478.1L185.9 477.5L186.3 476.9L186.8 476.5L187.3 476.1L187.7 475.7L188.2 475.4L188.6 475.2L189.1 475.1L189.6 475.0L190.0 475.0L190.5 475.1L190.9 475.5L191.4 475.9L191.9 476.6L192.3 477.4L192.8 478.4L193.3 479.5L193.7 480.8L194.2 482.3L194.6 483.9L195.1 485.7L195.6 487.7L196.0 489.8L196.5 492.2L197.0 494.7L197.4 497.6L197.9 500.9L198.3 504.8L198.8 503.2L199.3 500.4L199.7 498.0L200.2 495.8L200.7 493.8L201.1 492.0L201.6 490.3L202.0 488.8L202.5 487.3L203.0 486.1L203.4 484.9L203.9 483.8L204.4 482.9L204.8 482.1L205.3 481.4L205.7 480.8L206.2 480.4L206.7 480.1L207.1 479.9L207.6 479.8L208.0 479.8L208.5 480.0L209.0 480.2L209.4 480.5L209.9 480.9L210.4 481.4L210.8 482.0L211.3 482.7L211.7 483.5L212.2 484.4L212.7 485.3L213.1 486.4L213.6 487.5L214.1 488.7L214.5 490.0L215.0 491.4L215.4 492.9L215.9 494.4L216.4 496.1L216.8 498.0L217.3 500.0L217.8 502.2L218.2 502.0L218.7 501.7L219.1 501.5L219.6 501.3L220.1 501.2L220.5 501.2L221.0 501.3L221.4 501.5L221.9 501.7L222.4 502.1L222.8 502.6L223.3 500.9L223.8 498.9L224.2 497.0L224.7 495.3L225.1 493.7L225.6 492.2L226.1 490.7L226.5 489.4L227.0 488.1L227.5 486.8L227.9 485.7L228.4 484.5L228.8 483.5L229.3 482.5L229.8 481.5L230.2 480.7L230.7 479.9L231.2 479.1L231.6 478.4L232.1 477.8L232.5 477.2L233.0 476.7L233.5 476.3L233.9 475.9L234.4 475.6L234.9 475.3L235.3 475.2L235.8 475.0L236.2 475.0L236.7 475.1L237.2 475.3L237.6 475.7L238.1 476.2L238.5 476.9L239.0 477.8L239.5 478.9L239.9 480.1L240.4 481.5L240.9 483.0L241.3 484.7L241.8 486.6L242.2 488.6L242.7 490.9L243.2 493.3L243.6 496.0L244.1 499.0L244.6 502.6L245.0 505.0L245.5 501.9L245.9 499.2L246.4 496.9L246.9 494.8L247.3 492.9L247.8 491.2L248.3 489.6L248.7 488.1L249.2 486.7L249.6 485.5L250.1 484.4L250.6 483.4L251.0 482.5L251.5 481.8L252.0 481.1L252.4 480.6L252.9 480.2L253.3 480.0L253.8 479.8L254.3 479.8L254.7 479.9L255.2 480.1L255.6 480.3L256.1 480.7L256.6 481.2L257.0 481.7L257.5 482.3L258.0 483.1L258.4 483.9L258.9 484.8L259.3 485.8L259.8 486.9L260.3 488.0L260.7 489.3L261.2 490.6L261.7 492.1L262.1 493.6L262.6 495.2L263.0 497.0L263.5 498.9L264.0 501.1L264.4 502.3L264.9 501.9L265.4 501.6L265.8 501.4L266.3 501.3L266.7 501.2L267.2 501.2L267.7 501.4L268.1 501.6L268.6 501.9L269.1 502.3L269.5 502.0L270.0 499.9L270.4 498.0L270.9 496.2L271.4 494.6L271.8 493.0L272.3 491.5L272.7 490.1L273.2 488.8L273.7 487.5L274.1 486.3L274.6 485.1L275.1 484.0L275.5 483.0L276.0 482.0L276.4 481.1L276.9 480.3L277.4 479.5L277.8 478.8L278.3 478.1L278.8 477.5L279.2 477.0L279.7 476.5L280.1 476.1L280.6 475.7L281.1 475.5L281.5 475.2L282.0 475.1L282.5 475.0L282.9 475.0L283.4 475.1L283.8 475.4L284.3 475.9L284.8 476.5L285.2 477.3L285.7 478.3L286.2 479.4L286.6 480.7L287.1 482.2L287.5 483.8L288.0 485.6L288.5 487.5L288.9 489.6L289.4 492.0L289.8 494.5L290.3 497.4L290.8 500.6L291.2 504.5L291.7 503.5L292.2 500.6L292.6 498.1L293.1 495.9L293.5 494.0L294.0 492.1L294.5 490.4L294.9 488.9L295.4 487.5L295.9 486.2L296.3 485.0L296.8 483.9L297.2 483.0L297.7 482.1L298.2 481.4L298.6 480.9L299.1 480.4L299.6 480.1L300.0 479.9L300.5 479.8L300.9 479.8L301.4 480.0L301.9 480.2L302.3 480.5L302.8 480.9L303.3 481.4L303.7 482.0L304.2 482.7L304.6 483.4L305.1 484.3L305.6 485.2L306.0 486.3L306.5 487.4L306.9 488.6L307.4 489.9L307.9 491.3L308.3 492.7L308.8 494.3L309.3 496.0L309.7 497.8L310.2 499.9L310.6 502.1L311.1 502.1L311.6 501.7L312.0 501.5L312.5 501.3L313.0 501.2L313.4 501.2L313.9 501.3L314.3 501.5L314.8 501.7L315.3 502.1L315.7 502.5L316.2 501.1L316.7 499.0L317.1 497.2L317.6 495.4L318.0 493.8L318.5 492.3L319.0 490.9L319.4 489.5L319.9 488.2L320.4 486.9L320.8 485.7L321.3 484.6L321.7 483.6L322.2 482.6L322.7 481.6L323.1 480.7L323.6 479.9L324.0 479.2L324.5 478.5L325.0 477.8L325.4 477.3L325.9 476.7L326.4 476.3L326.8 475.9L327.3 475.6L327.7 475.4L328.2 475.2L328.7 475.1L329.1 475.0L329.6 475.0L330.1 475.2L330.5 475.6L331.0 476.2L331.4 476.9L331.9 477.7L332.4 478.8L332.8 480.0L333.3 481.3L333.8 482.9L334.2 484.6L334.7 486.4L335.1 488.5L335.6 490.7L336.1 493.1L336.5 495.8L337.0 498.8L337.5 502.3L337.9 505.2L338.4 502.1L338.8 499.4L339.3 497.1L339.8 495.0L340.2 493.1L340.7 491.3L341.1 489.7L341.6 488.2L342.1 486.8L342.5 485.6L343.0 484.5L343.5 483.5L343.9 482.6L344.4 481.8L344.8 481.2L345.3 480.6L345.8 480.3L346.2 480.0L346.7 479.8L347.2 479.8L347.6 479.9L348.1 480.0L348.5 480.3L349.0 480.7L349.5 481.1L349.9 481.7L350.4 482.3L350.9 483.0L351.3 483.8L351.8 484.7L352.2 485.7L352.7 486.8L353.2 487.9L353.6 489.2L354.1 490.5L354.6 491.9L355.0 493.5L355.5 495.1L355.9 496.8L356.4 498.7L356.9 500.9L357.3 502.3L357.8 501.9L358.2 501.6L358.7 501.4L359.2 501.3L359.6 501.2L360.1 501.2L360.6 501.4L361.0 501.6L361.5 501.9L361.9 502.3L362.4 502.2L362.9 500.1L363.3 498.1L363.8 496.4L364.3 494.7L364.7 493.1L365.2 491.6L365.6 490.2L366.1 488.9L366.6 487.6L367.0 486.4L367.5 485.2L368.0 484.1L368.4 483.1L368.9 482.1L369.3 481.2L369.8 480.4L370.3 479.6L370.7 478.8L371.2 478.2L371.7 477.6L372.1 477.0L372.6 476.5L373.0 476.1L373.5 475.8L374.0 475.5L374.4 475.3L374.9 475.1L375.3 475.0L375.8 475.0L376.3 475.1L376.7 475.4L377.2 475.8L377.7 476.5L378.1 477.2L378.6 478.2L379.0 479.3L379.5 480.6L380.0 482.0L380.4 483.6L380.9 485.4L381.4 487.3L381.8 489.5L382.3 491.8L382.7 494.3L383.2 497.1L383.7 500.3L384.1 504.2L384.6 503.8L385.1 500.8L385.5 498.3L386.0 496.1L386.4 494.1L386.9 492.3L387.4 490.6L387.8 489.0L388.3 487.6L388.8 486.3L389.2 485.1L389.7 484.0L390.1 483.0L390.6 482.2L391.1 481.5L391.5 480.9L392.0 480.5L392.4 480.1L392.9 479.9L393.4 479.8L393.8 479.8L394.3 479.9L394.8 480.2L395.2 480.5L395.7 480.9L396.1 481.4L396.6 481.9L397.1 482.6L397.5 483.4L398.0 484.2L398.5 485.2L398.9 486.2L399.4 487.3L399.8 488.5L400.3 489.8L400.8 491.2L401.2 492.6L401.7 494.2L402.2 495.9L402.6 497.7L403.1 499.7L403.5 501.9L404.0 502.1L404.5 501.8L404.9 501.5L405.4 501.3L405.9 501.2L406.3 501.2L406.8 501.3L407.2 501.4L407.7 501.7L408.2 502.0L408.6 502.5L409.1 501.2L409.5 499.2L410.0 497.3L410.5 495.6L410.9 494.0L411.4 492.4L411.9 491.0L412.3 489.6L412.8 488.3L413.2 487.0L413.7 485.8L414.2 484.7L414.6 483.6L415.1 482.6L415.6 481.7L416.0 480.8L416.5 480.0L416.9 479.2L417.4 478.5L417.9 477.9L418.3 477.3L418.8 476.8L419.3 476.3L419.7 475.9L420.2 475.6L420.6 475.4L421.1 475.2L421.6 475.1L422.0 475.0L422.5 475.0L423.0 475.2L423.4 475.6L423.9 476.1L424.3 476.8L424.8 477.7L425.3 478.7L425.7 479.9L426.2 481.2L426.6 482.7L427.1 484.4L427.6 486.3L428.0 488.3L428.5 490.5L429.0 492.9L429.4 495.6L429.9 498.5L430.3 502.0L430.8 505.4L431.3 502.3L431.7 499.6L432.2 497.3L432.7 495.2L433.1 493.2L433.6 491.5L434.0 489.8L434.5 488.3L435.0 487.0L435.4 485.7L435.9 484.6L436.4 483.5L436.8 482.6L437.3 481.9L437.7 481.2L438.2 480.7L438.7 480.3L439.1 480.0L439.6 479.8L440.1 479.8L440.5 479.9L441.0 480.0L441.4 480.3L441.9 480.6L442.4 481.1L442.8 481.6L443.3 482.2L443.7 483.0L444.2 483.8L444.7 484.6L445.1 485.6L445.6 486.7L446.1 487.8L446.5 489.1L447.0 490.4L447.4 491.8L447.9 493.3L448.4 494.9L448.8 496.7L449.3 498.6L449.8 500.7L450.2 502.3L450.7 501.9L451.1 501.6L451.6 501.4L452.1 501.3L452.5 501.2L453.0 501.2L453.5 501.3L453.9 501.5L454.4 501.8L454.8 502.2L455.3 502.3L455.8 500.3L456.2 498.3L456.7 496.5L457.2 494.8L457.6 493.2L458.1 491.8L458.5 490.3L459.0 489.0L459.5 487.7L459.9 486.5L460.4 485.3L460.8 484.2L461.3 483.2L461.8 482.2L462.2 481.3L462.7 480.4L463.2 479.6L463.6 478.9L464.1 478.2L464.5 477.6L465.0 477.1L465.5 476.6L465.9 476.1L466.4 475.8L466.9 475.5L467.3 475.3L467.8 475.1L468.2 475.0L468.7 475.0L469.2 475.1L469.6 475.4L470.1 475.8L470.6 476.4L471.0 477.2L471.5 478.1L471.9 479.2L472.4 480.5L472.9 481.9L473.3 483.5L473.8 485.3L474.3 487.2L474.7 489.3L475.2 491.6L475.6 494.1L476.1 496.9L476.6 500.0L477.0 503.8L477.5 504.0L477.9 501.0L478.4 498.5L478.9 496.3L479.3 494.3L479.8 492.4L480.3 490.7L480.7 489.1L481.2 487.7L481.6 486.4L482.1 485.2L482.6 484.1L483.0 483.1L483.5 482.3L484.0 481.6L484.4 481.0L484.9 480.5L485.3 480.1L485.8 479.9L486.3 479.8L486.7 479.8L487.2 479.9L487.7 480.1L488.1 480.4L488.6 480.8L489.0 481.3L489.5 481.9L490.0 482.6L490.4 483.3L490.9 484.2L491.4 485.1L491.8 486.1L492.3 487.2L492.7 488.4L493.2 489.7L493.7 491.0L494.1 492.5L494.6 494.1L495.0 495.7L495.5 497.5L496.0 499.5L496.4 501.8L496.9 502.1L497.4 501.8L497.8 501.5L498.3 501.3L498.7 501.2L499.2 501.2L499.7 501.3L500.1 501.4L500.6 501.7L501.1 502.0L501.5 502.5L502.0 501.4L502.4 499.3L502.9 497.5L503.4 495.7L503.8 494.1L504.3 492.5L504.8 491.1L505.2 489.7L505.7 488.4L506.1 487.1L506.6 485.9L507.1 484.8L507.5 483.7L508.0 482.7L508.5 481.8L508.9 480.9L509.4 480.0L509.8 479.3L510.3 478.6L510.8 477.9L511.2 477.3L511.7 476.8L512.1 476.4L512.6 476.0L513.1 475.7L513.5 475.4L514.0 475.2L514.5 475.1L514.9 475.0L515.4 475.0L515.8 475.2L516.3 475.5L516.8 476.1L517.2 476.7L517.7 477.6L518.2 478.6L518.6 479.8L519.1 481.1L519.5 482.6L520.0 484.3L520.5 486.1L520.9 488.1L521.4 490.3L521.9 492.7L522.3 495.3L522.8 498.3L523.2 501.7L523.7 505.5L524.2 502.6L524.6 499.8L525.1 497.5L525.5 495.3L526.0 493.4L526.5 491.6L526.9 490.0L527.4 488.4L527.9 487.1L528.3 485.8L528.8 484.6L529.2 483.6L529.7 482.7L530.2 481.9L530.6 481.3L531.1 480.7L531.6 480.3L532.0 480.0L532.5 479.8L532.9 479.8L533.4 479.9L533.9 480.0L534.3 480.3L534.8 480.6L535.3 481.0L535.7 481.6L536.2 482.2L536.6 482.9L537.1 483.7L537.6 484.6L538.0 485.5L538.5 486.6L539.0 487.7L539.4 489.0L539.9 490.3L540.3 491.7L540.8 493.2L541.3 494.8L541.7 496.5L542.2 498.4L542.6 500.5L543.1 502.4L543.6 502.0L544.0 501.7L544.5 501.4L545.0 501.3L545.4 501.2L545.9 501.2L546.3 501.3L546.8 501.5L547.3 501.8L547.7 502.2L548.2 502.4L548.7 500.4L549.1 498.5L549.6 496.6L550.0 495.0L550.5 493.4L551.0 491.9L551.4 490.4L551.9 489.1L552.4 487.8L552.8 486.6L553.3 485.4L553.7 484.3L554.2 483.3L554.7 482.3L555.1 481.4L555.6 480.5L556.1 479.7L556.5 478.9L557.0 478.3L557.4 477.6L557.9 477.1L558.4 476.6L558.8 476.2L559.3 475.8L559.7 475.5L560.2 475.3L560.7 475.1L561.1 475.0L561.6 475.0L562.1 475.1L562.5 475.3L563.0 475.8L563.4 476.4L563.9 477.1L564.4 478.0L564.8 479.1L565.3 480.4L565.8 481.8L566.2 483.4L566.7 485.1L567.1 487.0L567.6 489.1L568.1 491.4L568.5 493.9L569.0 496.6L569.5 499.8L569.9 503.5L570.4 504.3L570.8 501.3L571.3 498.7L571.8 496.5L572.2 494.4L572.7 492.6L573.2 490.8L573.6 489.3L574.1 487.8L574.5 486.5L575.0 485.2L575.5 484.2L575.9 483.2L576.4 482.3L576.8 481.6L577.3 481.0L577.8 480.5L578.2 480.2L578.7 479.9L579.2 479.8L579.6 479.8L580.1 479.9L580.5 480.1L581.0 480.4L581.5 480.8L581.9 481.3L582.4 481.8L582.9 482.5L583.3 483.2L583.8 484.1L584.2 485.0L584.7 486.0L585.2 487.1L585.6 488.3L586.1 489.6L586.6 490.9L587.0 492.4L587.5 493.9L587.9 495.6L588.4 497.4L588.9 499.4L589.3 501.6L589.8 502.2L590.3 501.8L590.7 501.5L591.2 501.4L591.6 501.2L592.1 501.2L592.6 501.3L593.0 501.4L593.5 501.6L593.9 502.0L594.4 502.4L594.9 501.6L595.3 499.5L595.8 497.6L596.3 495.9L596.7 494.2L597.2 492.7L597.6 491.2L598.1 489.8L598.6 488.5L599.0 487.2L599.5 486.0L600.0 484.9L600.4 483.8L600.9 482.8L601.3 481.8L601.8 480.9L602.3 480.1L602.7 479.3L603.2 478.6L603.7 478.0L604.1 477.4L604.6 476.9L605.0 476.4L605.5 476.0L606.0 475.7L606.4 475.4L606.9 475.2L607.4 475.1L607.8 475.0L608.3 475.0L608.7 475.2L609.2 475.5L609.7 476.0L610.1 476.7L610.6 477.5L611.0 478.5L611.5 479.7L612.0 481.0L612.4 482.5L612.9 484.1L613.4 486.0L613.8 488.0L614.3 490.1L614.7 492.5L615.2 495.1L615.7 498.0L616.1 501.4L616.6 505.3L617.1 502.8L617.5 500.0L618.0 497.6L618.4 495.5L618.9 493.5L619.4 491.8L619.8 490.1L620.3 488.6L620.8 487.2L621.2 485.9L621.7 484.7L622.1 483.7L622.6 482.8L623.1 482.0L623.5 481.3L624.0 480.8L624.5 480.3L624.9 480.0L625.4 479.9L625.8 479.8L626.3 479.9L626.8 480.0L627.2 480.2L627.7 480.6L628.1 481.0L628.6 481.5L629.1 482.1L629.5 482.8L630.0 483.6L630.5 484.5L630.9 485.5L631.4 486.5L631.8 487.6L632.3 488.9L632.8 490.2L633.2 491.6L633.7 493.1L634.2 494.7L634.6 496.4L635.1 498.3L635.5 500.3L636.0 502.4L636.5 502.0L636.9 501.7L637.4 501.4L637.9 501.3L638.3 501.2L638.8 501.2L639.2 501.3L639.7 501.5L640.2 501.8L640.6 502.2L641.1 502.5L641.6 500.6L642.0 498.6L642.5 496.8L642.9 495.1L643.4 493.5L643.9 492.0L644.3 490.6L644.8 489.2L645.2 487.9L645.7 486.7L646.2 485.5L646.6 484.4L647.1 483.3L647.6 482.4L648.0 481.4L648.5 480.6L648.9 479.7L649.4 479.0L649.9 478.3L650.3 477.7L650.8 477.1L651.3 476.6L651.7 476.2L652.2 475.8L652.6 475.5L653.1 475.3L653.6 475.1L654.0 475.0L654.5 475.0L655.0 475.1L655.4 475.3L655.9 475.7L656.3 476.3L656.8 477.0L657.3 477.9L657.7 479.0L658.2 480.3L658.7 481.7L659.1 483.2L659.6 485.0L660.0 486.9L660.5 488.9L661.0 491.2L661.4 493.7L661.9 496.4L662.3 499.5L662.8 503.2L663.3 504.6L663.7 501.5L664.2 498.9L664.7 496.6L665.1 494.6L665.6 492.7L666.0 491.0L666.5 489.4L667.0 487.9L667.4 486.6L667.9 485.3L668.4 484.2L668.8 483.3L669.3 482.4L669.7 481.7L670.2 481.0L670.7 480.6L671.1 480.2L671.6 479.9L672.1 479.8L672.5 479.8L673.0 479.9L673.4 480.1L673.9 480.4L674.4 480.8L674.8 481.2L675.3 481.8L675.8 482.4L676.2 483.2L676.7 484.0L677.1 484.9L677.6 485.9L678.1 487.0L678.5 488.2L679.0 489.5L679.4 490.8L679.9 492.3L680.4 493.8L680.8 495.4L681.3 497.2L681.8 499.2L682.2 501.4L682.7 502.2L683.1 501.8L683.6 501.6L684.1 501.4L684.5 501.2L685.0 501.2L685.5 501.2L685.9 501.4L686.4 501.6L686.8 501.9L687.3 502.4L687.8 501.8L688.2 499.7L688.7 497.7L689.2 496.0L689.6 494.3L690.1 492.8L690.5 491.3L691.0 489.9L691.5 488.6L691.9 487.3L692.4 486.1L692.9 485.0L693.3 483.9L693.8 482.9L694.2 481.9L694.7 481.0L695.2 480.2L695.6 479.4L696.1 478.7L696.5 478.0L697.0 477.4L697.5 476.9L697.9 476.4L698.4 476.0L698.9 475.7L699.3 475.4L699.8 475.2L700.2 475.1L700.7 475.0L701.2 475.0L701.6 475.2L702.1 475.5L702.6 476.0L703.0 476.6L703.5 477.4L703.9 478.4L704.4 479.6L704.9 480.9L705.3 482.4L705.8 484.0L706.3 485.8L706.7 487.8L707.2 489.9L707.6 492.3L708.1 494.9L708.6 497.8L709.0 501.1L709.5 505.0L710.0 503.1L710.4 500.2L710.9 497.8L711.3 495.7L711.8 493.7L712.3 491.9L712.7 490.2L713.2 488.7L713.6 487.3L714.1 486.0L714.6 484.8L715.0 483.8L715.5 482.8L716.0 482.0L716.4 481.4L716.9 480.8L717.3 480.4L717.8 480.1L718.3 479.9L718.7 479.8L719.2 479.8L719.7 480.0L720.1 480.2L720.6 480.5L721.0 481.0L721.5 481.5L722.0 482.1L722.4 482.8L722.9 483.6L723.4 484.4L723.8 485.4L724.3 486.4L724.7 487.6L725.2 488.8L725.7 490.1L726.1 491.5L726.6 492.9L727.1 494.5L727.5 496.2L728.0 498.1L728.4 500.2L728.9 502.3L729.4 502.0L729.8 501.7L730.3 501.5L730.7 501.3L731.2 501.2L731.7 501.2L732.1 501.3L732.6 501.5L733.1 501.8L733.5 502.1L734.0 502.6L734.4 500.8L734.9 498.8L735.4 496.9L735.8 495.2L736.3 493.6L736.8 492.1L737.2 490.7L737.7 489.3L738.1 488.0L738.6 486.8L739.1 485.6L739.5 484.5L740.0 483.4L740.5 482.4L740.9 481.5L741.4 480.6L741.8 479.8L742.3 479.1L742.8 478.4L743.2 477.7L743.7 477.2L744.2 476.7L744.6 476.2L745.1 475.9L745.5 475.6L746.0 475.3L746.5 475.2L746.9 475.0L747.4 475.0L747.8 475.1L748.3 475.3L748.8 475.7L749.2 476.2L749.7 477.0L750.2 477.9L750.6 478.9L751.1 480.2L751.5 481.5L752.0 483.1L752.5 484.8L752.9 486.7L753.4 488.8L753.9 491.0L754.3 493.5L754.8 496.2L755.2 499.2L755.7 502.8L756.2 504.8L756.6 501.7L757.1 499.1L757.6 496.8L758.0 494.7L758.5 492.9L758.9 491.1L759.4 489.5L759.9 488.0L760.3 486.7L760.8 485.4L761.3 484.3L761.7 483.3L762.2 482.5L762.6 481.7L763.1 481.1L763.6 480.6L764.0 480.2L764.5 480.0L764.9 479.8L765.4 479.8L765.9 479.9L766.3 480.1L766.8 480.4L767.3 480.7L767.7 481.2L768.2 481.7L768.6 482.4L769.1 483.1L769.6 483.9L770.0 484.9L770.5 485.8L771.0 486.9L771.4 488.1L771.9 489.4L772.3 490.7L772.8 492.1L773.3 493.7L773.7 495.3L774.2 497.1L774.7 499.0L775.1 501.2L775.6 502.2L776.0 501.9L776.5 501.6L777.0 501.4L777.4 501.2L777.9 501.2L778.4 501.2L778.8 501.4L779.3 501.6L779.7 501.9L780.2 502.3L780.7 501.9L781.1 499.8L781.6 497.9L782.0 496.1L782.5 494.5L783.0 492.9L783.4 491.4L783.9 490.0L784.4 488.7L784.8 487.4L785.3 486.2L785.7 485.1L786.2 484.0L786.7 483.0L787.1 482.0L787.6 481.1L788.1 480.2L788.5 479.5L789.0 478.7L789.4 478.1L789.9 477.5L790.4 476.9L790.8 476.5L791.3 476.1L791.8 475.7L792.2 475.5L792.7 475.2L793.1 475.1L793.6 475.0L794.1 475.0L794.5 475.1L795.0 475.4L795.5 475.9L795.9 476.6L796.4 477.4L796.8 478.3L797.3 479.5L797.8 480.8L798.2 482.2L798.7 483.9L799.1 485.7L799.6 487.6L800.1 489.8L800.5 492.1L801.0 494.7L801.5 497.5L801.9 500.8L802.4 504.7L802.8 503.3L803.3 500.5L803.8 498.0L804.2 495.8L804.7 493.9L805.2 492.0L805.6 490.4L806.1 488.8L806.5 487.4L807.0 486.1L807.5 484.9L807.9 483.9L808.4 482.9L808.9 482.1L809.3 481.4L809.8 480.8L810.2 480.4L810.7 480.1L811.2 479.9L811.6 479.8L812.1 479.8L812.6 480.0L813.0 480.2L813.5 480.5L813.9 480.9L814.4 481.4L814.9 482.0L815.3 482.7L815.8 483.5L816.2 484.3L816.7 485.3L817.2 486.3L817.6 487.5L818.1 488.7L818.6 490.0L819.0 491.3L819.5 492.8L819.9 494.4L820.4 496.1L820.9 497.9L821.3 500.0L821.8 502.2L822.3 502.1L822.7 501.7L823.2 501.5L823.6 501.3L824.1 501.2L824.6 501.2L825.0 501.3L825.5 501.5L826.0 501.7L826.4 502.1L826.9 502.6L827.3 501.0L827.8 498.9L828.3 497.1L828.7 495.4L829.2 493.7L829.6 492.2L830.1 490.8L830.6 489.4L831.0 488.1L831.5 486.9L832.0 485.7L832.4 484.6L832.9 483.5L833.3 482.5L833.8 481.6L834.3 480.7L834.7 479.9L835.2 479.1L835.7 478.4L836.1 477.8L836.6 477.2L837.0 476.7L837.5 476.3L838.0 475.9L838.4 475.6L838.9 475.3L839.4 475.2L839.8 475.1L840.3 475.0L840.7 475.0L841.2 475.3L841.7 475.6L842.1 476.2L842.6 476.9L843.1 477.8L843.5 478.8L844.0 480.0L844.4 481.4L844.9 483.0L845.4 484.7L845.8 486.5L846.3 488.6L846.7 490.8L847.2 493.3L847.7 495.9L848.1 499.0L848.6 502.5L849.1 505.1L849.5 501.9" stroke="#007f8f"/>
<path d="M111.3 628.5L111.5 588.5L111.5 574.8L111.6 567.4L111.7 562.5L111.8 559.0L111.9 556.2L111.9 556.2L112.0 554.0L112.1 552.2L112.2 550.7L112.3 549.3L112.4 548.1L112.4 548.1L112.5 547.0L112.6 546.1L112.7 545.2L112.8 544.4L112.8 543.6L112.8 543.6L112.9 542.9L113.0 542.3L113.1 541.7L113.2 541.1L113.3 540.6L113.3 540.6L113.4 540.1L113.5 539.6L113.6 539.1L113.7 538.7L113.8 538.2L113.8 538.2L113.9 537.8L114.0 537.4L114.0 537.0L114.1 536.6L114.2 536.2L114.2 536.2L114.3 535.8L114.4 535.4L114.7 534.5L115.2 533.3L115.6 532.3L116.1 531.6L116.5 531.0L117.0 530.4L117.5 530.0L117.9 529.8L118.4 529.8L118.9 529.9L119.3 529.9L119.8 530.0L120.2 530.0L120.7 530.1L121.2 530.3L121.6 530.8L122.1 531.5L122.5 532.4L123.0 533.3L123.5 534.2L123.9 535.0L124.4 535.8L124.9 536.7L125.3 537.5L125.8 538.2L126.2 538.7L126.7 539.0L127.2 539.0L127.6 538.9L128.1 538.6L128.6 538.4L129.0 538.1L129.5 537.9L129.9 537.8L130.4 537.7L130.9 537.9L131.3 538.1L131.8 538.3L132.3 538.3L132.7 538.4L133.2 538.3L133.6 538.1L134.1 537.8L134.6 537.4L135.0 537.1L135.5 536.8L136.0 536.5L136.4 536.3L136.9 535.9L137.3 535.6L137.8 535.2L138.3 534.7L138.7 534.2L139.2 533.6L139.6 533.0L140.1 532.5L140.6 532.0L141.0 531.6L141.5 531.5L142.0 531.6L142.4 531.7L142.9 531.8L143.3 531.9L143.8 531.9L144.3 532.4L144.7 533.2L145.2 533.9L145.7 534.4L146.1 534.5L146.6 534.0L147.0 532.9L147.5 531.6L148.0 530.3L148.4 529.3L148.9 528.6L149.4 528.0L149.8 527.4L150.3 526.8L150.7 526.3L151.2 525.7L151.7 525.2L152.1 524.7L152.6 524.3L153.1 523.9L153.5 523.6L154.0 523.3L154.4 523.1L154.9 522.9L155.4 522.7L155.8 522.5L156.3 522.3L156.7 522.2L157.2 522.0L157.7 521.9L158.1 521.7L158.6 521.5L159.1 521.2L159.5 520.7L160.0 520.2L160.4 519.7L160.9 519.1L161.4 518.5L161.8 517.9L162.3 517.3L162.8 516.9L163.2 516.6L163.7 516.6L164.1 516.7L164.6 516.9L165.1 517.1L165.5 517.3L166.0 517.6L166.5 517.9L166.9 518.1L167.4 518.4L167.8 518.7L168.3 519.1L168.8 519.6L169.2 520.2L169.7 520.9L170.2 521.6L170.6 522.5L171.1 523.3L171.5 524.1L172.0 524.8L172.5 525.4L172.9 525.7L173.4 525.9L173.8 526.0L174.3 525.8L174.8 525.5L175.2 525.0L175.7 524.5L176.2 524.0L176.6 523.4L177.1 523.1L177.5 522.7L178.0 522.5L178.5 522.3L178.9 522.2L179.4 522.1L179.9 522.0L180.3 521.9L180.8 521.8L181.2 521.7L181.7 521.5L182.2 521.4L182.6 521.2L183.1 521.2L183.6 521.1L184.0 521.0L184.5 520.9L184.9 520.7L185.4 520.6L185.9 520.7L186.3 520.7L186.8 520.8L187.3 520.1L187.7 518.1L188.2 516.7L188.6 517.0L189.1 518.2L189.6 519.7L190.0 521.0L190.5 521.5L190.9 521.4L191.4 521.3L191.9 521.1L192.3 520.9L192.8 520.8L193.3 520.7L193.7 520.5L194.2 520.4L194.6 520.1L195.1 519.9L195.6 519.6L196.0 519.3L196.5 519.0L197.0 518.8L197.4 518.5L197.9 518.2L198.3 517.9L198.8 517.7L199.3 517.4L199.7 517.1L200.2 516.8L200.7 516.5L201.1 516.3L201.6 516.1L202.0 515.9L202.5 515.7L203.0 515.6L203.4 515.3L203.9 515.1L204.4 514.8L204.8 514.6L205.3 514.3L205.7 514.2L206.2 514.1L206.7 513.9L207.1 513.8L207.6 513.7L208.0 513.6L208.5 513.4L209.0 513.3L209.4 513.1L209.9 513.0L210.4 512.7L210.8 512.5L211.3 512.3L211.7 512.1L212.2 511.9L212.7 511.8L213.1 511.8L213.6 511.7L214.1 511.6L214.5 511.4L215.0 511.1L215.4 510.8L215.9 510.5L216.4 510.2L216.8 510.1L217.3 510.1L217.8 510.0L218.2 509.9L218.7 509.9L219.1 509.9L219.6 509.9L220.1 509.9L220.5 509.9L221.0 509.9L221.4 509.8L221.9 509.7L222.4 509.6L222.8 509.5L223.3 509.4L223.8 509.2L224.2 509.1L224.7 508.9L225.1 508.7L225.6 508.6L226.1 508.6L226.5 508.5L227.0 508.5L227.5 508.5L227.9 508.5L228.4 508.5L228.8 508.6L229.3 508.7L229.8 508.8L230.2 509.2L230.7 509.6L231.2 509.9L231.6 510.3L232.1 510.7L232.5 511.0L233.0 511.3L233.5 511.6L233.9 511.9L234.4 512.1L234.9 512.1L235.3 512.1L235.8 512.0L236.2 511.9L236.7 511.9L237.2 512.0L237.6 512.0L238.1 511.9L238.5 511.9L239.0 511.7L239.5 511.5L239.9 511.2L240.4 511.0L240.9 510.7L241.3 510.5L241.8 510.2L242.2 510.0L242.7 509.8L243.2 509.6L243.6 509.3L244.1 509.0L244.6 508.8L245.0 508.5L245.5 508.3L245.9 508.2L246.4 508.2L246.9 508.1L247.3 508.1L247.8 507.9L248.3 507.6L248.7 507.3L249.2 507.0L249.6 506.7L250.1 506.7L250.6 506.7L251.0 506.7L251.5 506.7L252.0 506.7L252.4 506.5L252.9 506.2L253.3 506.0L253.8 505.7L254.3 505.5L254.7 505.2L255.2 504.9L255.6 504.7L256.1 504.4L256.6 504.2L257.0 504.2L257.5 504.1L258.0 504.1L258.4 504.1L258.9 504.0L259.3 503.8L259.8 503.6L260.3 503.4L260.7 503.2L261.2 502.9L261.7 502.6L262.1 502.3L262.6 502.1L263.0 501.8L263.5 501.8L264.0 501.8L264.4 501.9L264.9 501.9L265.4 501.9L265.8 501.5L266.3 501.2L266.7 500.9L267.2 500.6L267.7 500.4L268.1 500.4L268.6 500.3L269.1 500.3L269.5 500.3L270.0 500.3L270.4 500.2L270.9 500.2L271.4 500.2L271.8 500.1L272.3 499.9L272.7 499.7L273.2 499.4L273.7 499.2L274.1 498.9L274.6 499.1L275.1 499.4L275.5 499.7L276.0 500.1L276.4 500.4L276.9 500.6L277.4 500.7L277.8 500.9L278.3 501.1L278.8 501.3L279.2 501.6L279.7 501.8L280.1 502.1L280.6 502.3L281.1 502.4L281.5 502.5L282.0 502.6L282.5 502.6L282.9 502.6L283.4 502.6L283.8 502.7L284.3 502.8L284.8 502.8L285.2 502.9L285.7 502.7L286.2 502.6L286.6 502.4L287.1 502.2L287.5 502.1L288.0 502.0L288.5 502.0L288.9 501.9L289.4 501.9L289.8 501.8L290.3 501.8L290.8 501.8L291.2 501.8L291.7 501.7L292.2 501.6L292.6 501.5L293.1 501.3L293.5 501.2L294.0 501.0L294.5 501.1L294.9 501.1L295.4 501.2L295.9 501.3L296.3 501.3L296.8 501.1L297.2 500.7L297.7 500.4L298.2 500.1L298.6 499.8L299.1 499.7L299.6 499.6L300.0 499.6L300.5 499.5L300.9 499.4L301.4 499.3L301.9 499.2L302.3 499.1L302.8 499.1L303.3 499.0L303.7 499.0L304.2 498.9L304.6 498.9L305.1 498.9L305.6 499.0L306.0 499.0L306.5 499.1L306.9 499.2L307.4 499.3L307.9 499.3L308.3 499.4L308.8 499.5L309.3 499.6L309.7 499.7L310.2 499.8L310.6 499.8L311.1 499.9L311.6 499.9L312.0 500.0L312.5 500.1L313.0 500.1L313.4 500.2L313.9 500.2L314.3 500.2L314.8 500.2L315.3 500.2L315.7 500.1L316.2 500.0L316.7 499.9L317.1 499.7L317.6 499.6L318.0 499.4L318.5 499.3L319.0 499.0L319.4 498.8L319.9 498.5L320.4 498.2L320.8 498.0L321.3 497.6L321.7 497.3L322.2 497.0L322.7 496.7L323.1 496.4L323.6 496.1L324.0 495.9L324.5 495.6L325.0 495.4L325.4 495.3L325.9 495.5L326.4 495.6L326.8 495.8L327.3 496.0L327.7 496.0L328.2 495.8L328.7 495.7L329.1 495.6L329.6 495.5L330.1 495.5L330.5 495.5L331.0 495.4L331.4 495.4L331.9 495.5L332.4 495.5L332.8 495.6L333.3 495.7L333.8 495.8L334.2 495.9L334.7 495.9L335.1 496.0L335.6 496.1L336.1 496.2L336.5 496.3L337.0 496.4L337.5 496.4L337.9 496.5L338.4 496.6L338.8 496.7L339.3 496.8L339.8 496.8L340.2 496.9L340.7 496.9L341.1 496.8L341.6 496.8L342.1 496.7L342.5 496.6L343.0 496.5L343.5 496.4L343.9 496.2L344.4 496.1L344.8 495.9L345.3 495.8L345.8 495.6L346.2 495.5L346.7 495.4L347.2 495.3L347.6 495.3L348.1 495.3L348.5 495.4L349.0 495.5L349.5 495.6L349.9 495.8L350.4 495.9L350.9 496.1L351.3 496.3L351.8 496.5L352.2 496.6L352.7 496.7L353.2 496.8L353.6 497.0L354.1 497.2L354.6 497.4L355.0 497.7L355.5 498.0L355.9 498.3L356.4 498.5L356.9 498.6L357.3 498.7L357.8 498.8L358.2 498.9L358.7 499.1L359.2 499.3L359.6 499.6L360.1 499.8L360.6 499.9L361.0 500.0L361.5 500.0L361.9 500.0L362.4 499.9L362.9 499.8L363.3 499.6L363.8 499.3L364.3 499.1L364.7 498.8L365.2 498.5L365.6 498.3L366.1 498.0L366.6 497.7L367.0 497.4L367.5 497.2L368.0 497.1L368.4 497.0L368.9 496.9L369.3 496.8L369.8 496.7L370.3 496.4L370.7 496.2L371.2 496.0L371.7 495.7L372.1 495.7L372.6 495.6L373.0 495.6L373.5 495.7L374.0 495.7L374.4 495.6L374.9 495.5L375.3 495.4L375.8 495.3L376.3 495.3L376.7 495.4L377.2 495.5L377.7 495.6L378.1 495.7L378.6 495.8L379.0 495.8L379.5 495.8L380.0 495.8L380.4 495.9L380.9 495.9L381.4 496.0L381.8 496.1L382.3 496.1L382.7 496.2L383.2 496.4L383.7 496.6L384.1 496.8L384.6 497.0L385.1 497.2L385.5 497.2L386.0 497.2L386.4 497.2L386.9 497.2L387.4 497.2L387.8 497.2L388.3 497.2L388.8 497.2L389.2 497.1L389.7 497.0L390.1 496.9L390.6 496.7L391.1 496.5L391.5 496.3L392.0 496.2L392.4 496.1L392.9 496.0L393.4 496.0L393.8 496.0L394.3 496.0L394.8 496.1L395.2 496.2L395.7 496.3L396.1 496.5L396.6 496.6L397.1 496.7L397.5 496.8L398.0 497.0L398.5 497.2L398.9 497.4L399.4 497.5L399.8 497.7L400.3 497.9L400.8 498.2L401.2 498.4L401.7 498.7L402.2 499.0L402.6 499.2L403.1 499.5L403.5 499.7L404.0 499.9L404.5 500.1L404.9 500.2L405.4 500.4L405.9 500.6L406.3 500.7L406.8 500.8L407.2 500.9L407.7 500.9L408.2 500.9L408.6 500.8L409.1 500.7L409.5 500.6L410.0 500.4L410.5 500.2L410.9 500.0L411.4 499.8L411.9 499.5L412.3 499.3L412.8 499.0L413.2 498.7L413.7 498.5L414.2 498.2L414.6 498.0L415.1 497.8L415.6 497.6L416.0 497.4L416.5 497.3L416.9 497.3L417.4 497.3L417.9 497.3L418.3 497.3L418.8 497.1L419.3 496.8L419.7 496.6L420.2 496.4L420.6 496.2L421.1 496.2L421.6 496.1L422.0 496.1L422.5 496.1L423.0 496.1L423.4 496.1L423.9 496.1L424.3 496.1L424.8 496.2L425.3 496.3L425.7 496.4L426.2 496.5L426.6 496.6L427.1 496.7L427.6 496.9L428.0 497.0L428.5 497.2L429.0 497.3L429.4 497.5L429.9 497.6L430.3 497.6L430.8 497.6L431.3 497.6L431.7 497.6L432.2 497.6L432.7 497.6L433.1 497.6L433.6 497.5L434.0 497.5L434.5 497.6L435.0 497.6L435.4 497.7L435.9 497.7L436.4 497.6L436.8 497.4L437.3 497.2L437.7 496.9L438.2 496.7L438.7 496.7L439.1 496.7L439.6 496.8L440.1 496.8L440.5 496.9L441.0 496.9L441.4 496.9L441.9 497.0L442.4 497.0L442.8 497.1L443.3 497.3L443.7 497.4L444.2 497.6L444.7 497.9L445.1 498.1L445.6 498.3L446.1 498.6L446.5 498.8L447.0 499.1L447.4 499.3L447.9 499.5L448.4 499.6L448.8 499.8L449.3 500.0L449.8 500.2L450.2 500.4L450.7 500.5L451.1 500.7L451.6 500.8L452.1 500.9L452.5 501.0L453.0 501.1L453.5 501.1L453.9 501.1L454.4 501.1L454.8 501.1L455.3 501.0L455.8 501.0L456.2 500.9L456.7 500.7L457.2 500.6L457.6 500.5L458.1 500.3L458.5 500.0L459.0 499.7L459.5 499.3L459.9 498.9L460.4 498.5L460.8 498.3L461.3 498.2L461.8 498.2L462.2 498.1L462.7 498.0L463.2 497.9L463.6 497.7L464.1 497.5L464.5 497.4L465.0 497.3L465.5 497.2L465.9 497.2L466.4 497.1L466.9 497.1L467.3 497.1L467.8 497.0L468.2 496.9L468.7 496.8L469.2 496.8L469.6 496.8L470.1 496.8L470.6 496.9L471.0 496.9L471.5 497.0L471.9 497.1L472.4 497.1L472.9 497.2L473.3 497.2L473.8 497.3L474.3 497.4L474.7 497.6L475.2 497.7L475.6 497.9L476.1 498.0L476.6 498.1L477.0 498.1L477.5 498.1L477.9 498.1L478.4 498.2L478.9 498.3L479.3 498.5L479.8 498.6L480.3 498.7L480.7 498.7L481.2 498.7L481.6 498.7L482.1 498.7L482.6 498.7L483.0 498.5L483.5 498.3L484.0 498.1L484.4 497.9L484.9 497.8L485.3 497.7L485.8 497.6L486.3 497.6L486.7 497.5L487.2 497.5L487.7 497.4L488.1 497.4L488.6 497.3L489.0 497.3L489.5 497.4L490.0 497.6L490.4 497.9L490.9 498.2L491.4 498.5L491.8 498.7L492.3 498.7L492.7 498.8L493.2 498.9L493.7 499.0L494.1 499.3L494.6 499.6L495.0 499.9L495.5 500.3L496.0 500.6L496.4 500.8L496.9 501.0L497.4 501.2L497.8 501.3L498.3 501.5L498.7 501.5L499.2 501.6L499.7 501.6L500.1 501.5L500.6 501.5L501.1 501.6L501.5 501.7L502.0 501.7L502.4 501.7L502.9 501.6L503.4 501.4L503.8 501.1L504.3 500.8L504.8 500.5L505.2 500.3L505.7 500.0L506.1 499.8L506.6 499.6L507.1 499.3L507.5 499.1L508.0 498.9L508.5 498.7L508.9 498.5L509.4 498.3L509.8 498.1L510.3 497.9L510.8 497.7L511.2 497.6L511.7 497.4L512.1 497.3L512.6 497.2L513.1 497.1L513.5 497.0L514.0 497.0L514.5 497.0L514.9 497.0L515.4 497.1L515.8 497.1L516.3 497.1L516.8 497.1L517.2 497.0L517.7 497.0L518.2 497.0L518.6 497.1L519.1 497.2L519.5 497.4L520.0 497.5L520.5 497.6L520.9 497.7L521.4 497.8L521.9 497.9L522.3 498.0L522.8 498.0L523.2 498.1L523.7 498.2L524.2 498.2L524.6 498.2L525.1 498.3L525.5 498.3L526.0 498.4L526.5 498.4L526.9 498.4L527.4 498.4L527.9 498.3L528.3 498.2L528.8 498.1L529.2 498.0L529.7 497.9L530.2 497.8L530.6 497.7L531.1 497.6L531.6 497.6L532.0 497.5L532.5 497.5L532.9 497.6L533.4 497.6L533.9 497.6L534.3 497.4L534.8 497.2L535.3 497.1L535.7 497.0L536.2 497.0L536.6 497.2L537.1 497.5L537.6 497.7L538.0 498.0L538.5 498.1L539.0 498.2L539.4 498.2L539.9 498.3L540.3 498.4L540.8 498.7L541.3 499.0L541.7 499.3L542.2 499.6L542.6 499.9L543.1 500.2L543.6 500.4L544.0 500.7L544.5 500.9L545.0 501.0L545.4 501.0L545.9 501.0L546.3 500.9L546.8 500.8L547.3 500.8L547.7 500.8L548.2 500.7L548.7 500.6L549.1 500.5L549.6 500.4L550.0 500.4L550.5 500.3L551.0 500.2L551.4 500.0L551.9 499.8L552.4 499.5L552.8 499.3L553.3 499.0L553.7 498.8L554.2 498.5L554.7 498.3L555.1 498.0L555.6 497.8L556.1 497.6L556.5 497.4L557.0 497.2L557.4 497.0L557.9 496.8L558.4 496.8L558.8 496.8L559.3 496.9L559.7 497.1L560.2 497.2L560.7 497.1L561.1 496.9L561.6 496.7L562.1 496.6L562.5 496.4L563.0 496.4L563.4 496.4L563.9 496.3L564.4 496.3L564.8 496.4L565.3 496.6L565.8 496.8L566.2 497.1L566.7 497.4L567.1 497.6L567.6 497.6L568.1 497.7L568.5 497.7L569.0 497.8L569.5 497.8L569.9 497.9L570.4 497.9L570.8 497.9L571.3 497.9L571.8 498.0L572.2 498.1L572.7 498.2L573.2 498.3L573.6 498.3L574.1 498.2L574.5 498.0L575.0 497.8L575.5 497.6L575.9 497.5L576.4 497.4L576.8 497.3L577.3 497.2L577.8 497.1L578.2 497.0L578.7 496.9L579.2 496.8L579.6 496.7L580.1 496.7L580.5 496.6L581.0 496.5L581.5 496.5L581.9 496.4L582.4 496.4L582.9 496.6L583.3 496.8L583.8 497.1L584.2 497.3L584.7 497.6L585.2 497.8L585.6 497.9L586.1 498.1L586.6 498.3L587.0 498.4L587.5 498.6L587.9 498.8L588.4 499.0L588.9 499.1L589.3 499.3L589.8 499.5L590.3 499.7L590.7 499.9L591.2 500.1L591.6 500.3L592.1 500.5L592.6 500.7L593.0 500.8L593.5 500.9L593.9 500.9L594.4 500.7L594.9 500.6L595.3 500.3L595.8 500.1L596.3 499.9L596.7 499.8L597.2 499.6L597.6 499.3L598.1 499.1L598.6 498.9L599.0 498.7L599.5 498.5L600.0 498.2L600.4 498.0L600.9 497.7L601.3 497.5L601.8 497.2L602.3 497.0L602.7 496.8L603.2 496.5L603.7 496.2L604.1 496.0L604.6 495.8L605.0 495.7L605.5 495.7L606.0 495.8L606.4 495.9L606.9 495.9L607.4 495.9L607.8 495.9L608.3 495.9L608.7 495.9L609.2 495.9L609.7 496.0L610.1 496.0L610.6 496.0L611.0 496.1L611.5 496.1L612.0 496.3L612.4 496.4L612.9 496.5L613.4 496.7L613.8 496.8L614.3 496.9L614.7 496.9L615.2 496.9L615.7 497.0L616.1 497.1L616.6 497.2L617.1 497.3L617.5 497.4L618.0 497.5L618.4 497.6L618.9 497.6L619.4 497.7L619.8 497.7L620.3 497.6L620.8 497.4L621.2 497.2L621.7 497.0L622.1 496.7L622.6 496.6L623.1 496.6L623.5 496.6L624.0 496.6L624.5 496.6L624.9 496.6L625.4 496.5L625.8 496.4L626.3 496.4L626.8 496.4L627.2 496.3L627.7 496.3L628.1 496.3L628.6 496.3L629.1 496.3L629.5 496.4L630.0 496.6L630.5 496.8L630.9 497.1L631.4 497.3L631.8 497.4L632.3 497.6L632.8 497.7L633.2 497.9L633.7 498.1L634.2 498.2L634.6 498.3L635.1 498.5L635.5 498.6L636.0 498.8L636.5 499.2L636.9 499.5L637.4 499.8L637.9 500.1L638.3 500.2L638.8 500.2L639.2 500.3L639.7 500.2L640.2 500.2L640.6 500.1L641.1 500.1L641.6 500.0L642.0 499.8L642.5 499.7L642.9 499.5L643.4 499.2L643.9 499.0L644.3 498.7L644.8 498.5L645.2 498.3L645.7 498.1L646.2 498.0L646.6 497.8L647.1 497.6L647.6 497.3L648.0 497.0L648.5 496.8L648.9 496.5L649.4 496.3L649.9 496.1L650.3 495.8L650.8 495.6L651.3 495.4L651.7 495.4L652.2 495.4L652.6 495.4L653.1 495.4L653.6 495.4L654.0 495.4L654.5 495.4L655.0 495.4L655.4 495.4L655.9 495.4L656.3 495.4L656.8 495.3L657.3 495.3L657.7 495.3L658.2 495.3L658.7 495.4L659.1 495.5L659.6 495.7L660.0 495.8L660.5 495.9L661.0 496.1L661.4 496.2L661.9 496.3L662.3 496.5L662.8 496.6L663.3 496.6L663.7 496.7L664.2 496.8L664.7 496.8L665.1 496.9L665.6 496.9L666.0 497.0L666.5 497.0L667.0 497.0L667.4 496.9L667.9 496.9L668.4 496.8L668.8 496.7L669.3 496.6L669.7 496.6L670.2 496.5L670.7 496.5L671.1 496.4L671.6 496.3L672.1 496.2L672.5 496.2L673.0 496.1L673.4 496.0L673.9 496.0L674.4 496.1L674.8 496.1L675.3 496.2L675.8 496.3L676.2 496.4L676.7 496.5L677.1 496.7L677.6 496.9L678.1 497.1L678.5 497.3L679.0 497.5L679.4 497.8L679.9 498.0L680.4 498.2L680.8 498.4L681.3 498.5L681.8 498.7L682.2 498.8L682.7 499.1L683.1 499.3L683.6 499.6L684.1 499.8L684.5 500.0L685.0 500.1L685.5 500.2L685.9 500.2L686.4 500.2L686.8 500.2L687.3 500.1L687.8 500.0L688.2 499.9L688.7 499.7L689.2 499.5L689.6 499.3L690.1 499.0L690.5 498.8L691.0 498.5L691.5 498.3L691.9 498.0L692.4 497.8L692.9 497.5L693.3 497.3L693.8 497.1L694.2 496.9L694.7 496.7L695.2 496.5L695.6 496.4L696.1 496.2L696.5 496.0L697.0 495.8L697.5 495.6L697.9 495.4L698.4 495.5L698.9 495.5L699.3 495.6L699.8 495.6L700.2 495.7L700.7 495.6L701.2 495.6L701.6 495.5L702.1 495.5L702.6 495.5L703.0 495.6L703.5 495.6L703.9 495.7L704.4 495.8L704.9 495.9L705.3 496.0L705.8 496.1L706.3 496.3L706.7 496.4L707.2 496.6L707.6 496.7L708.1 496.9L708.6 497.1L709.0 497.2L709.5 497.3L710.0 497.3L710.4 497.3L710.9 497.3L711.3 497.2L711.8 497.3L712.3 497.3L712.7 497.3L713.2 497.3L713.6 497.2L714.1 497.0L714.6 496.8L715.0 496.6L715.5 496.4L716.0 496.2L716.4 496.1L716.9 495.9L717.3 495.8L717.8 495.7L718.3 495.6L718.7 495.6L719.2 495.6L719.7 495.6L720.1 495.6L720.6 495.9L721.0 496.1L721.5 496.4L722.0 496.7L722.4 497.0L722.9 496.9L723.4 496.8L723.8 496.8L724.3 496.8L724.7 496.9L725.2 497.3L725.7 497.7L726.1 498.0L726.6 498.4L727.1 498.8L727.5 499.1L728.0 499.4L728.4 499.7L728.9 500.0L729.4 500.2L729.8 500.3L730.3 500.3L730.7 500.4L731.2 500.4L731.7 500.6L732.1 500.8L732.6 501.0L733.1 501.2L733.5 501.2L734.0 501.2L734.4 501.1L734.9 501.0L735.4 500.9L735.8 500.7L736.3 500.4L736.8 500.1L737.2 499.9L737.7 499.6L738.1 499.4L738.6 499.2L739.1 499.0L739.5 498.9L740.0 498.8L740.5 498.5L740.9 498.2L741.4 497.8L741.8 497.6L742.3 497.3L742.8 497.1L743.2 496.8L743.7 496.6L744.2 496.4L744.6 496.3L745.1 496.3L745.5 496.3L746.0 496.4L746.5 496.4L746.9 496.4L747.4 496.3L747.8 496.3L748.3 496.2L748.8 496.2L749.2 496.2L749.7 496.1L750.2 496.2L750.6 496.2L751.1 496.2L751.5 496.3L752.0 496.4L752.5 496.5L752.9 496.7L753.4 496.8L753.9 497.2L754.3 497.5L754.8 497.9L755.2 498.2L755.7 498.5L756.2 498.4L756.6 498.3L757.1 498.2L757.6 498.1L758.0 498.1L758.5 498.1L758.9 498.1L759.4 498.1L759.9 498.1L760.3 498.0L760.8 497.8L761.3 497.7L761.7 497.6L762.2 497.4L762.6 497.3L763.1 497.3L763.6 497.2L764.0 497.2L764.5 497.1L764.9 497.1L765.4 497.0L765.9 497.0L766.3 496.9L766.8 496.9L767.3 497.0L767.7 497.0L768.2 497.1L768.6 497.2L769.1 497.3L769.6 497.4L770.0 497.5L770.5 497.6L771.0 497.7L771.4 497.9L771.9 498.1L772.3 498.4L772.8 498.6L773.3 498.8L773.7 499.1L774.2 499.4L774.7 499.7L775.1 500.0L775.6 500.3L776.0 500.6L776.5 500.8L777.0 501.1L777.4 501.3L777.9 501.5L778.4 501.7L778.8 501.8L779.3 502.0L779.7 502.1L780.2 502.1L780.7 501.9L781.1 501.7L781.6 501.5L782.0 501.3L782.5 501.1L783.0 501.0L783.4 500.8L783.9 500.6L784.4 500.4L784.8 500.1L785.3 499.8L785.7 499.5L786.2 499.1L786.7 498.8L787.1 498.6L787.6 498.3L788.1 498.1L788.5 497.9L789.0 497.7L789.4 497.5L789.9 497.3L790.4 497.1L790.8 496.9L791.3 496.8L791.8 496.8L792.2 496.8L792.7 496.9L793.1 496.9L793.6 496.8L794.1 496.7L794.5 496.6L795.0 496.4L795.5 496.3L795.9 496.4L796.4 496.6L796.8 496.8L797.3 497.0L797.8 497.2L798.2 497.4L798.7 497.6L799.1 497.9L799.6 498.1L800.1 498.3L800.5 498.4L801.0 498.4L801.5 498.5L801.9 498.5L802.4 498.6L802.8 498.7L803.3 498.9L803.8 499.0L804.2 499.1L804.7 499.0L805.2 498.9L805.6 498.8L806.1 498.7L806.5 498.5L807.0 498.3L807.5 498.2L807.9 498.0L808.4 497.8L808.9 497.6L809.3 497.6L809.8 497.5L810.2 497.5L810.7 497.4L811.2 497.4L811.6 497.4L812.1 497.3L812.6 497.3L813.0 497.3L813.5 497.4L813.9 497.5L814.4 497.7L814.9 497.9L815.3 498.1L815.8 498.3L816.2 498.5L816.7 498.7L817.2 498.9L817.6 499.2L818.1 499.2L818.6 499.3L819.0 499.4L819.5 499.4L819.9 499.5L820.4 499.8L820.9 500.1L821.3 500.3L821.8 500.6L822.3 500.8L822.7 501.0L823.2 501.2L823.6 501.4L824.1 501.5L824.6 501.6L825.0 501.7L825.5 501.7L826.0 501.7L826.4 501.7L826.9 501.6L827.3 501.4L827.8 501.2L828.3 501.0L828.7 500.8L829.2 500.6L829.6 500.5L830.1 500.3L830.6 500.2L831.0 500.0L831.5 499.8L832.0 499.5L832.4 499.3L832.9 499.1L833.3 498.8L833.8 498.6L834.3 498.4L834.7 498.2L835.2 498.1L835.7 497.9L836.1 497.6L836.6 497.4L837.0 497.2L837.5 497.0L838.0 496.9L838.4 496.9L838.9 496.9L839.4 496.9L839.8 496.9L840.3 496.9L840.7 496.7L841.2 496.6L841.7 496.5L842.1 496.5L842.6 496.7L843.1 496.9L843.5 497.1L844.0 497.3L844.4 497.5L844.9 497.5L845.4 497.5L845.8 497.5L846.3 497.5L846.7 497.6L847.2 497.7L847.7 497.9L848.1 498.1L848.6 498.2L849.1 498.3L849.5 498.4" stroke="#06bf72"/>
<path d="M111.3 628.5L111.5 601.5L111.5 586.7L111.6 578.3L111.7 572.5L111.8 568.1L111.9 564.5L111.9 564.5L112.0 561.5L112.1 559.0L112.2 556.8L112.3 554.9L112.4 553.2L112.4 553.2L112.5 551.6L112.6 550.2L112.7 549.0L112.8 547.8L112.8 546.7L112.8 546.7L112.9 545.7L113.0 544.8L113.1 544.0L113.2 543.2L113.3 542.4L113.3 542.4L113.4 541.7L113.5 541.0L113.6 540.4L113.7 539.8L113.8 539.3L113.8 539.3L113.9 538.7L114.0 538.2L114.0 537.8L114.1 537.3L114.2 536.9L114.2 536.9L114.3 536.5L114.4 536.1L114.7 534.9L115.2 533.3L115.6 532.0L116.1 531.0L116.5 530.1L117.0 529.6L117.5 529.3L117.9 529.1L118.4 529.1L118.9 529.2L119.3 529.4L119.8 529.6L120.2 530.0L120.7 530.4L121.2 530.9L121.6 531.5L122.1 532.1L122.5 532.9L123.0 533.7L123.5 534.6L123.9 535.5L124.4 536.6L124.9 537.6L125.3 538.7L125.8 539.8L126.2 540.9L126.7 542.0L127.2 543.1L127.6 543.6L128.1 543.5L128.6 543.5L129.0 543.5L129.5 543.5L129.9 543.4L130.4 543.3L130.9 543.2L131.3 543.1L131.8 542.9L132.3 542.9L132.7 543.0L133.2 543.1L133.6 543.2L134.1 543.3L134.6 543.3L135.0 543.2L135.5 542.5L136.0 541.1L136.4 539.8L136.9 538.5L137.3 537.3L137.8 536.2L138.3 535.1L138.7 534.1L139.2 533.1L139.6 532.3L140.1 531.5L140.6 530.8L141.0 530.1L141.5 529.7L142.0 529.3L142.4 529.1L142.9 528.9L143.3 528.9L143.8 529.0L144.3 529.2L144.7 529.6L145.2 530.2L145.7 530.8L146.1 531.7L146.6 532.6L147.0 533.7L147.5 534.9L148.0 536.2L148.4 537.7L148.9 539.1L149.4 540.7L149.8 542.3L150.3 543.9L150.7 545.5L151.2 546.0L151.7 546.2L152.1 546.4L152.6 546.8L153.1 547.1L153.5 547.4L154.0 547.7L154.4 548.1L154.9 548.3L155.4 548.5L155.8 548.8L156.3 547.5L156.7 545.3L157.2 543.1L157.7 541.1L158.1 539.2L158.6 537.4L159.1 535.8L159.5 534.2L160.0 532.8L160.4 531.5L160.9 530.3L161.4 529.2L161.8 528.4L162.3 527.6L162.8 527.1L163.2 526.6L163.7 526.3L164.1 526.1L164.6 526.1L165.1 526.2L165.5 526.4L166.0 526.6L166.5 526.9L166.9 527.3L167.4 527.8L167.8 528.6L168.3 529.5L168.8 530.6L169.2 531.7L169.7 533.0L170.2 534.2L170.6 535.4L171.1 536.7L171.5 538.1L172.0 539.5L172.5 540.9L172.9 542.3L173.4 543.7L173.8 545.0L174.3 545.0L174.8 544.9L175.2 544.8L175.7 544.7L176.2 544.6L176.6 544.6L177.1 544.5L177.5 544.4L178.0 544.4L178.5 544.3L178.9 544.3L179.4 544.2L179.9 544.2L180.3 544.2L180.8 544.1L181.2 544.0L181.7 543.8L182.2 542.4L182.6 541.0L183.1 539.5L183.6 538.2L184.0 536.9L184.5 535.7L184.9 534.6L185.4 533.5L185.9 532.6L186.3 531.8L186.8 531.1L187.3 530.5L187.7 530.0L188.2 529.4L188.6 529.0L189.1 528.6L189.6 528.4L190.0 528.3L190.5 528.6L190.9 528.9L191.4 529.5L191.9 530.2L192.3 531.0L192.8 532.0L193.3 533.0L193.7 534.2L194.2 535.5L194.6 536.9L195.1 538.3L195.6 539.8L196.0 541.4L196.5 543.0L197.0 544.6L197.4 546.0L197.9 546.3L198.3 546.6L198.8 546.9L199.3 547.1L199.7 547.4L200.2 547.7L200.7 547.9L201.1 548.2L201.6 548.5L202.0 548.8L202.5 548.9L203.0 546.7L203.4 544.5L203.9 542.5L204.4 540.5L204.8 538.7L205.3 536.9L205.7 535.3L206.2 533.7L206.7 532.3L207.1 531.0L207.6 529.8L208.0 528.8L208.5 528.0L209.0 527.3L209.4 526.7L209.9 526.3L210.4 526.0L210.8 525.9L211.3 525.9L211.7 526.0L212.2 526.3L212.7 526.7L213.1 527.2L213.6 527.9L214.1 528.6L214.5 529.4L215.0 530.3L215.4 531.3L215.9 532.4L216.4 533.5L216.8 534.7L217.3 535.9L217.8 537.2L218.2 538.6L218.7 540.0L219.1 541.4L219.6 542.8L220.1 544.2L220.5 545.0L221.0 544.9L221.4 544.8L221.9 544.7L222.4 544.6L222.8 544.5L223.3 544.5L223.8 544.4L224.2 544.4L224.7 544.3L225.1 544.3L225.6 544.2L226.1 544.2L226.5 544.2L227.0 544.2L227.5 544.2L227.9 544.1L228.4 543.3L228.8 541.9L229.3 540.4L229.8 539.1L230.2 537.8L230.7 536.6L231.2 535.4L231.6 534.3L232.1 533.3L232.5 532.4L233.0 531.5L233.5 530.7L233.9 530.1L234.4 529.6L234.9 529.2L235.3 529.0L235.8 528.9L236.2 528.8L236.7 528.9L237.2 529.1L237.6 529.4L238.1 529.9L238.5 530.6L239.0 531.4L239.5 532.3L239.9 533.4L240.4 534.6L240.9 535.9L241.3 537.3L241.8 538.8L242.2 540.4L242.7 542.0L243.2 543.7L243.6 545.4L244.1 546.2L244.6 546.5L245.0 546.9L245.5 547.2L245.9 547.4L246.4 547.6L246.9 547.8L247.3 548.0L247.8 548.2L248.3 548.6L248.7 549.0L249.2 548.0L249.6 545.9L250.1 543.8L250.6 541.8L251.0 539.9L251.5 538.1L252.0 536.4L252.4 534.8L252.9 533.3L253.3 531.9L253.8 530.6L254.3 529.5L254.7 528.6L255.2 527.8L255.6 527.2L256.1 526.7L256.6 526.4L257.0 526.1L257.5 526.0L258.0 526.0L258.4 526.1L258.9 526.4L259.3 526.8L259.8 527.3L260.3 527.9L260.7 528.6L261.2 529.4L261.7 530.3L262.1 531.4L262.6 532.5L263.0 533.7L263.5 534.9L264.0 536.2L264.4 537.6L264.9 538.9L265.4 540.4L265.8 541.9L266.3 543.4L266.7 544.9L267.2 545.1L267.7 545.1L268.1 545.0L268.6 544.9L269.1 544.8L269.5 544.7L270.0 544.6L270.4 544.5L270.9 544.5L271.4 544.4L271.8 544.4L272.3 544.3L272.7 544.2L273.2 544.2L273.7 544.1L274.1 544.0L274.6 543.8L275.1 542.3L275.5 540.8L276.0 539.2L276.4 537.8L276.9 536.7L277.4 535.7L277.8 534.7L278.3 533.8L278.8 532.9L279.2 532.0L279.7 531.1L280.1 530.3L280.6 529.6L281.1 529.2L281.5 528.9L282.0 528.7L282.5 528.7L282.9 528.7L283.4 528.8L283.8 529.1L284.3 529.5L284.8 530.0L285.2 530.7L285.7 531.6L286.2 532.7L286.6 533.9L287.1 535.2L287.5 536.6L288.0 538.1L288.5 539.7L288.9 541.3L289.4 543.0L289.8 544.6L290.3 546.0L290.8 546.1L291.2 546.3L291.7 546.4L292.2 546.7L292.6 547.0L293.1 547.4L293.5 547.7L294.0 548.1L294.5 548.4L294.9 548.7L295.4 548.9L295.9 546.7L296.3 544.6L296.8 542.4L297.2 540.4L297.7 538.5L298.2 536.7L298.6 535.0L299.1 533.6L299.6 532.3L300.0 531.2L300.5 530.1L300.9 529.2L301.4 528.3L301.9 527.5L302.3 526.9L302.8 526.4L303.3 526.1L303.7 525.9L304.2 525.9L304.6 526.0L305.1 526.2L305.6 526.5L306.0 526.9L306.5 527.5L306.9 528.2L307.4 528.9L307.9 530.0L308.3 531.1L308.8 532.3L309.3 533.6L309.7 535.0L310.2 536.1L310.6 537.3L311.1 538.5L311.6 539.8L312.0 541.1L312.5 542.5L313.0 543.9L313.4 544.8L313.9 544.7L314.3 544.6L314.8 544.5L315.3 544.5L315.7 544.5L316.2 544.4L316.7 544.4L317.1 544.3L317.6 544.3L318.0 544.2L318.5 544.2L319.0 544.1L319.4 544.0L319.9 543.9L320.4 543.8L320.8 543.8L321.3 543.2L321.7 541.8L322.2 540.4L322.7 539.1L323.1 537.8L323.6 536.6L324.0 535.4L324.5 534.2L325.0 533.2L325.4 532.3L325.9 531.5L326.4 530.9L326.8 530.3L327.3 529.8L327.7 529.4L328.2 529.0L328.7 528.8L329.1 528.7L329.6 528.6L330.1 528.8L330.5 529.1L331.0 529.6L331.4 530.2L331.9 531.0L332.4 532.0L332.8 533.1L333.3 534.3L333.8 535.6L334.2 537.1L334.7 538.6L335.1 540.1L335.6 541.8L336.1 543.4L336.5 545.1L337.0 546.0L337.5 546.3L337.9 546.7L338.4 547.0L338.8 547.3L339.3 547.5L339.8 547.8L340.2 548.0L340.7 548.3L341.1 548.6L341.6 548.8L342.1 548.0L342.5 545.7L343.0 543.5L343.5 541.6L343.9 539.7L344.4 537.9L344.8 536.3L345.3 534.7L345.8 533.3L346.2 531.9L346.7 530.7L347.2 529.6L347.6 528.7L348.1 528.0L348.5 527.4L349.0 526.9L349.5 526.6L349.9 526.3L350.4 526.1L350.9 526.1L351.3 526.1L351.8 526.3L352.2 526.7L352.7 527.3L353.2 527.9L353.6 528.7L354.1 529.6L354.6 530.5L355.0 531.5L355.5 532.6L355.9 533.8L356.4 535.0L356.9 536.3L357.3 537.6L357.8 538.9L358.2 540.3L358.7 541.7L359.2 543.3L359.6 544.7L360.1 545.0L360.6 545.0L361.0 544.9L361.5 544.9L361.9 544.8L362.4 544.7L362.9 544.6L363.3 544.5L363.8 544.4L364.3 544.3L364.7 544.2L365.2 544.1L365.6 544.1L366.1 544.0L366.6 544.0L367.0 544.0L367.5 543.9L368.0 542.7L368.4 541.3L368.9 540.0L369.3 538.7L369.8 537.5L370.3 536.3L370.7 535.2L371.2 534.1L371.7 533.2L372.1 532.3L372.6 531.4L373.0 530.7L373.5 530.0L374.0 529.5L374.4 529.1L374.9 528.9L375.3 528.7L375.8 528.7L376.3 528.9L376.7 529.2L377.2 529.7L377.7 530.4L378.1 531.2L378.6 532.1L379.0 533.0L379.5 534.0L380.0 535.1L380.4 536.3L380.9 537.7L381.4 539.3L381.8 540.9L382.3 542.6L382.7 544.3L383.2 545.9L383.7 546.2L384.1 546.5L384.6 546.8L385.1 547.1L385.5 547.4L386.0 547.6L386.4 547.9L386.9 548.1L387.4 548.4L387.8 548.7L388.3 549.0L388.8 547.0L389.2 544.9L389.7 542.8L390.1 540.8L390.6 539.0L391.1 537.2L391.5 535.6L392.0 534.1L392.4 532.7L392.9 531.4L393.4 530.3L393.8 529.3L394.3 528.4L394.8 527.7L395.2 527.1L395.7 526.6L396.1 526.3L396.6 526.1L397.1 526.0L397.5 526.1L398.0 526.2L398.5 526.5L398.9 527.0L399.4 527.6L399.8 528.3L400.3 529.0L400.8 529.9L401.2 530.9L401.7 531.9L402.2 533.0L402.6 534.2L403.1 535.5L403.5 536.8L404.0 538.2L404.5 539.6L404.9 541.0L405.4 542.5L405.9 544.0L406.3 545.1L406.8 545.0L407.2 544.9L407.7 544.8L408.2 544.7L408.6 544.6L409.1 544.4L409.5 544.3L410.0 544.3L410.5 544.3L410.9 544.3L411.4 544.3L411.9 544.3L412.3 544.3L412.8 544.2L413.2 544.2L413.7 544.2L414.2 543.7L414.6 542.3L415.1 540.9L415.6 539.6L416.0 538.3L416.5 537.0L416.9 535.9L417.4 534.8L417.9 533.7L418.3 532.8L418.8 531.9L419.3 531.0L419.7 530.3L420.2 529.7L420.6 529.2L421.1 528.9L421.6 528.8L422.0 528.8L422.5 529.0L423.0 529.2L423.4 529.4L423.9 529.8L424.3 530.4L424.8 531.1L425.3 532.0L425.7 533.1L426.2 534.3L426.6 535.7L427.1 537.1L427.6 538.6L428.0 540.3L428.5 541.9L429.0 543.7L429.4 545.4L429.9 546.2L430.3 546.4L430.8 546.6L431.3 546.7L431.7 546.9L432.2 547.2L432.7 547.6L433.1 547.9L433.6 548.3L434.0 548.6L434.5 548.9L435.0 548.3L435.4 546.0L435.9 543.8L436.4 541.8L436.8 539.9L437.3 538.1L437.7 536.4L438.2 534.8L438.7 533.3L439.1 531.9L439.6 530.7L440.1 529.5L440.5 528.5L441.0 527.7L441.4 527.1L441.9 526.6L442.4 526.3L442.8 526.1L443.3 525.9L443.7 526.0L444.2 526.1L444.7 526.3L445.1 526.7L445.6 527.3L446.1 527.9L446.5 528.7L447.0 529.6L447.4 530.5L447.9 531.5L448.4 532.6L448.8 533.8L449.3 535.0L449.8 536.3L450.2 537.5L450.7 538.8L451.1 540.1L451.6 541.5L452.1 543.0L452.5 544.5L453.0 544.9L453.5 544.8L453.9 544.8L454.4 544.7L454.8 544.7L455.3 544.6L455.8 544.5L456.2 544.4L456.7 544.3L457.2 544.2L457.6 544.1L458.1 544.0L458.5 543.9L459.0 543.8L459.5 543.7L459.9 543.7L460.4 543.6L460.8 542.5L461.3 541.2L461.8 539.8L462.2 538.6L462.7 537.4L463.2 536.2L463.6 535.0L464.1 534.0L464.5 533.0L465.0 532.1L465.5 531.2L465.9 530.5L466.4 529.8L466.9 529.3L467.3 528.9L467.8 528.6L468.2 528.5L468.7 528.5L469.2 528.7L469.6 529.0L470.1 529.4L470.6 530.0L471.0 530.8L471.5 531.7L471.9 532.7L472.4 533.7L472.9 534.9L473.3 536.2L473.8 537.5L474.3 539.1L474.7 540.6L475.2 542.3L475.6 543.9L476.1 545.5L476.6 546.0L477.0 546.4L477.5 546.8L477.9 547.2L478.4 547.5L478.9 547.8L479.3 548.1L479.8 548.3L480.3 548.6L480.7 548.8L481.2 548.9L481.6 547.1L482.1 544.7L482.6 542.6L483.0 540.6L483.5 538.7L484.0 537.0L484.4 535.4L484.9 533.9L485.3 532.5L485.8 531.3L486.3 530.2L486.7 529.2L487.2 528.4L487.7 527.5L488.1 526.9L488.6 526.3L489.0 525.9L489.5 525.7L490.0 525.7L490.4 525.9L490.9 526.1L491.4 526.5L491.8 526.9L492.3 527.5L492.7 528.1L493.2 528.9L493.7 529.7L494.1 530.7L494.6 531.8L495.0 533.0L495.5 534.2L496.0 535.5L496.4 536.7L496.9 538.0L497.4 539.3L497.8 540.6L498.3 541.9L498.7 543.4L499.2 544.6L499.7 544.6L500.1 544.5L500.6 544.4L501.1 544.4L501.5 544.4L502.0 544.3L502.4 544.3L502.9 544.3L503.4 544.3L503.8 544.3L504.3 544.3L504.8 544.3L505.2 544.3L505.7 544.1L506.1 544.0L506.6 543.9L507.1 543.4L507.5 542.0L508.0 540.5L508.5 539.1L508.9 537.8L509.4 536.5L509.8 535.4L510.3 534.4L510.8 533.5L511.2 532.6L511.7 531.9L512.1 531.1L512.6 530.5L513.1 529.9L513.5 529.5L514.0 529.2L514.5 528.9L514.9 528.8L515.4 528.7L515.8 528.9L516.3 529.2L516.8 529.7L517.2 530.3L517.7 531.1L518.2 532.0L518.6 533.1L519.1 534.3L519.5 535.6L520.0 537.0L520.5 538.5L520.9 540.1L521.4 541.8L521.9 543.4L522.3 545.1L522.8 546.2L523.2 546.4L523.7 546.7L524.2 546.9L524.6 547.1L525.1 547.4L525.5 547.7L526.0 548.0L526.5 548.3L526.9 548.5L527.4 548.8L527.9 548.4L528.3 546.1L528.8 544.0L529.2 541.9L529.7 540.0L530.2 538.2L530.6 536.5L531.1 534.9L531.6 533.4L532.0 532.0L532.5 530.7L532.9 529.6L533.4 528.6L533.9 527.8L534.3 527.1L534.8 526.6L535.3 526.2L535.7 526.0L536.2 525.9L536.6 526.0L537.1 526.1L537.6 526.3L538.0 526.7L538.5 527.2L539.0 527.8L539.4 528.5L539.9 529.3L540.3 530.2L540.8 531.2L541.3 532.4L541.7 533.6L542.2 534.8L542.6 536.2L543.1 537.5L543.6 538.9L544.0 540.3L544.5 541.8L545.0 543.2L545.4 544.7L545.9 545.2L546.3 545.1L546.8 545.1L547.3 545.0L547.7 544.8L548.2 544.6L548.7 544.4L549.1 544.2L549.6 544.2L550.0 544.2L550.5 544.2L551.0 544.2L551.4 544.2L551.9 544.1L552.4 544.0L552.8 543.9L553.3 543.7L553.7 542.7L554.2 541.3L554.7 539.9L555.1 538.6L555.6 537.3L556.1 536.1L556.5 535.0L557.0 533.9L557.4 532.9L557.9 532.0L558.4 531.3L558.8 530.7L559.3 530.1L559.7 529.7L560.2 529.4L560.7 529.2L561.1 529.0L561.6 528.9L562.1 529.0L562.5 529.2L563.0 529.5L563.4 530.0L563.9 530.7L564.4 531.5L564.8 532.4L565.3 533.5L565.8 534.7L566.2 536.0L566.7 537.4L567.1 538.9L567.6 540.6L568.1 542.2L568.5 543.9L569.0 545.6L569.5 546.1L569.9 546.3L570.4 546.6L570.8 546.8L571.3 547.1L571.8 547.4L572.2 547.8L572.7 548.2L573.2 548.5L573.6 548.9L574.1 549.1L574.5 547.4L575.0 545.0L575.5 542.8L575.9 540.8L576.4 538.9L576.8 537.1L577.3 535.5L577.8 533.9L578.2 532.5L578.7 531.2L579.2 530.1L579.6 529.1L580.1 528.3L580.5 527.6L581.0 526.9L581.5 526.5L581.9 526.1L582.4 525.9L582.9 525.9L583.3 526.0L583.8 526.2L584.2 526.5L584.7 527.0L585.2 527.5L585.6 528.2L586.1 529.0L586.6 529.9L587.0 530.8L587.5 531.9L587.9 533.1L588.4 534.3L588.9 535.7L589.3 537.0L589.8 538.3L590.3 539.6L590.7 540.9L591.2 542.3L591.6 543.7L592.1 545.0L592.6 544.9L593.0 544.9L593.5 544.8L593.9 544.7L594.4 544.5L594.9 544.4L595.3 544.3L595.8 544.1L596.3 544.1L596.7 544.1L597.2 544.1L597.6 544.1L598.1 544.1L598.6 544.1L599.0 544.0L599.5 544.0L600.0 543.7L600.4 542.3L600.9 540.9L601.3 539.5L601.8 538.2L602.3 536.9L602.7 535.7L603.2 534.7L603.7 533.7L604.1 532.8L604.6 532.0L605.0 531.3L605.5 530.6L606.0 530.0L606.4 529.5L606.9 529.1L607.4 528.9L607.8 528.8L608.3 528.9L608.7 529.1L609.2 529.5L609.7 529.9L610.1 530.5L610.6 531.2L611.0 532.1L611.5 533.1L612.0 534.2L612.4 535.4L612.9 536.7L613.4 538.2L613.8 539.7L614.3 541.3L614.7 542.9L615.2 544.6L615.7 545.8L616.1 546.1L616.6 546.3L617.1 546.5L617.5 546.8L618.0 547.0L618.4 547.3L618.9 547.5L619.4 547.8L619.8 548.1L620.3 548.4L620.8 548.3L621.2 546.1L621.7 544.0L622.1 542.1L622.6 540.2L623.1 538.5L623.5 536.8L624.0 535.2L624.5 533.7L624.9 532.4L625.4 531.2L625.8 530.1L626.3 529.2L626.8 528.4L627.2 527.6L627.7 527.0L628.1 526.5L628.6 526.1L629.1 525.9L629.5 525.9L630.0 526.0L630.5 526.3L630.9 526.7L631.4 527.1L631.8 527.7L632.3 528.3L632.8 529.1L633.2 530.0L633.7 531.0L634.2 532.1L634.6 533.4L635.1 534.7L635.5 536.0L636.0 537.4L636.5 538.8L636.9 540.2L637.4 541.6L637.9 543.1L638.3 544.5L638.8 545.1L639.2 545.0L639.7 544.8L640.2 544.7L640.6 544.7L641.1 544.7L641.6 544.6L642.0 544.6L642.5 544.6L642.9 544.5L643.4 544.4L643.9 544.3L644.3 544.2L644.8 544.1L645.2 544.0L645.7 543.8L646.2 543.6L646.6 542.6L647.1 541.2L647.6 539.9L648.0 538.7L648.5 537.6L648.9 536.5L649.4 535.4L649.9 534.3L650.3 533.3L650.8 532.3L651.3 531.5L651.7 530.8L652.2 530.1L652.6 529.6L653.1 529.2L653.6 528.9L654.0 528.7L654.5 528.6L655.0 528.7L655.4 528.9L655.9 529.3L656.3 530.0L656.8 530.8L657.3 531.7L657.7 532.8L658.2 533.9L658.7 535.1L659.1 536.4L659.6 537.9L660.0 539.3L660.5 540.9L661.0 542.6L661.4 544.2L661.9 545.8L662.3 546.4L662.8 546.6L663.3 546.8L663.7 546.9L664.2 547.1L664.7 547.2L665.1 547.5L665.6 547.8L666.0 548.1L666.5 548.4L667.0 548.7L667.4 547.4L667.9 545.3L668.4 543.3L668.8 541.4L669.3 539.5L669.7 537.6L670.2 535.9L670.7 534.3L671.1 532.7L671.6 531.4L672.1 530.2L672.5 529.2L673.0 528.3L673.4 527.5L673.9 526.8L674.4 526.3L674.8 525.9L675.3 525.6L675.8 525.5L676.2 525.8L676.7 526.1L677.1 526.6L677.6 527.2L678.1 527.8L678.5 528.4L679.0 529.1L679.4 529.9L679.9 530.8L680.4 531.8L680.8 532.9L681.3 534.1L681.8 535.3L682.2 536.6L682.7 538.0L683.1 539.4L683.6 540.8L684.1 542.3L684.5 543.7L685.0 545.0L685.5 545.0L685.9 544.9L686.4 544.8L686.8 544.7L687.3 544.6L687.8 544.6L688.2 544.5L688.7 544.4L689.2 544.3L689.6 544.3L690.1 544.3L690.5 544.2L691.0 544.2L691.5 544.1L691.9 544.0L692.4 543.9L692.9 543.6L693.3 542.2L693.8 540.8L694.2 539.5L694.7 538.3L695.2 537.2L695.6 536.1L696.1 534.9L696.5 533.8L697.0 532.8L697.5 531.9L697.9 531.0L698.4 530.3L698.9 529.8L699.3 529.3L699.8 528.9L700.2 528.7L700.7 528.7L701.2 528.7L701.6 529.0L702.1 529.4L702.6 529.9L703.0 530.4L703.5 531.1L703.9 532.0L704.4 532.9L704.9 534.1L705.3 535.4L705.8 536.8L706.3 538.3L706.7 539.9L707.2 541.4L707.6 543.0L708.1 544.6L708.6 545.9L709.0 546.1L709.5 546.3L710.0 546.5L710.4 546.7L710.9 546.9L711.3 547.1L711.8 547.5L712.3 547.9L712.7 548.3L713.2 548.7L713.6 548.8L714.1 546.4L714.6 544.2L715.0 542.1L715.5 540.1L716.0 538.3L716.4 536.7L716.9 535.2L717.3 533.8L717.8 532.5L718.3 531.2L718.7 529.9L719.2 528.8L719.7 527.9L720.1 527.0L720.6 526.4L721.0 526.0L721.5 525.7L722.0 525.5L722.4 525.6L722.9 525.8L723.4 526.1L723.8 526.6L724.3 527.1L724.7 527.8L725.2 528.5L725.7 529.3L726.1 530.2L726.6 531.2L727.1 532.2L727.5 533.3L728.0 534.5L728.4 535.8L728.9 537.1L729.4 538.5L729.8 539.9L730.3 541.3L730.7 542.7L731.2 544.1L731.7 544.9L732.1 544.9L732.6 544.9L733.1 545.0L733.5 544.9L734.0 544.7L734.4 544.6L734.9 544.4L735.4 544.2L735.8 544.1L736.3 544.1L736.8 544.0L737.2 544.0L737.7 544.0L738.1 543.9L738.6 543.8L739.1 543.7L739.5 542.9L740.0 541.5L740.5 540.1L740.9 538.8L741.4 537.6L741.8 536.4L742.3 535.2L742.8 534.2L743.2 533.3L743.7 532.4L744.2 531.7L744.6 531.0L745.1 530.3L745.5 529.7L746.0 529.2L746.5 528.9L746.9 528.7L747.4 528.6L747.8 528.8L748.3 529.0L748.8 529.4L749.2 530.0L749.7 530.7L750.2 531.5L750.6 532.5L751.1 533.6L751.5 534.7L752.0 536.0L752.5 537.3L752.9 538.7L753.4 540.1L753.9 541.8L754.3 543.4L754.8 545.1L755.2 545.8L755.7 546.1L756.2 546.4L756.6 546.7L757.1 547.0L757.6 547.3L758.0 547.6L758.5 547.9L758.9 548.2L759.4 548.4L759.9 548.7L760.3 547.6L760.8 545.4L761.3 543.3L761.7 541.4L762.2 539.5L762.6 537.7L763.1 535.9L763.6 534.3L764.0 532.8L764.5 531.3L764.9 530.3L765.4 529.3L765.9 528.5L766.3 527.8L766.8 527.2L767.3 526.7L767.7 526.3L768.2 526.1L768.6 526.0L769.1 526.1L769.6 526.2L770.0 526.5L770.5 526.9L771.0 527.4L771.4 528.0L771.9 528.6L772.3 529.4L772.8 530.3L773.3 531.3L773.7 532.4L774.2 533.7L774.7 535.0L775.1 536.3L775.6 537.8L776.0 539.1L776.5 540.6L777.0 542.0L777.4 543.5L777.9 544.9L778.4 545.0L778.8 545.0L779.3 544.9L779.7 544.9L780.2 544.8L780.7 544.7L781.1 544.6L781.6 544.5L782.0 544.4L782.5 544.3L783.0 544.3L783.4 544.3L783.9 544.2L784.4 544.2L784.8 544.1L785.3 543.9L785.7 543.8L786.2 542.4L786.7 540.9L787.1 539.6L787.6 538.4L788.1 537.3L788.5 536.2L789.0 535.1L789.4 533.9L789.9 532.8L790.4 531.8L790.8 530.8L791.3 530.1L791.8 529.6L792.2 529.1L792.7 528.8L793.1 528.6L793.6 528.6L794.1 528.6L794.5 528.8L795.0 529.2L795.5 529.7L795.9 530.2L796.4 530.9L796.8 531.7L797.3 532.6L797.8 533.7L798.2 535.1L798.7 536.5L799.1 538.1L799.6 539.7L800.1 541.3L800.5 542.9L801.0 544.5L801.5 545.8L801.9 546.0L802.4 546.2L802.8 546.6L803.3 546.9L803.8 547.2L804.2 547.5L804.7 547.8L805.2 548.1L805.6 548.3L806.1 548.5L806.5 548.6L807.0 546.5L807.5 544.3L807.9 542.3L808.4 540.4L808.9 538.6L809.3 536.9L809.8 535.3L810.2 533.8L810.7 532.4L811.2 531.2L811.6 530.0L812.1 529.0L812.6 528.1L813.0 527.4L813.5 526.8L813.9 526.3L814.4 526.0L814.9 525.9L815.3 525.8L815.8 526.0L816.2 526.4L816.7 526.8L817.2 527.4L817.6 528.1L818.1 528.7L818.6 529.4L819.0 530.2L819.5 531.1L819.9 532.0L820.4 533.1L820.9 534.3L821.3 535.6L821.8 536.9L822.3 538.2L822.7 539.7L823.2 541.3L823.6 542.8L824.1 544.4L824.6 545.3L825.0 545.2L825.5 545.1L826.0 545.0L826.4 544.9L826.9 544.9L827.3 544.8L827.8 544.7L828.3 544.7L828.7 544.6L829.2 544.6L829.6 544.5L830.1 544.5L830.6 544.4L831.0 544.3L831.5 544.2L832.0 544.0L832.4 543.2L832.9 541.7L833.3 540.2L833.8 539.0L834.3 537.8L834.7 536.6L835.2 535.6L835.7 534.5L836.1 533.6L836.6 532.6L837.0 531.8L837.5 531.1L838.0 530.4L838.4 529.9L838.9 529.4L839.4 529.0L839.8 528.8L840.3 528.7L840.7 528.8L841.2 529.0L841.7 529.4L842.1 529.9L842.6 530.4L843.1 531.1L843.5 531.9L844.0 532.9L844.4 534.0L844.9 535.4L845.4 536.9L845.8 538.5L846.3 540.2L846.7 541.9L847.2 543.6L847.7 545.4L848.1 546.2L848.6 546.6L849.1 546.8L849.5 547.0" stroke="#9fe806"/>
<path d="M183.9 442.5V588.5" stroke="#1f5357" stroke-width="0.9" stroke-dasharray="2.57 1.11"/>
</g>
<path d="M110.0 588.5v4.8M257.9 588.5v4.8M405.8 588.5v4.8M553.7 588.5v4.8M701.6 588.5v4.8M849.5 588.5v4.8M73.0 573.8h-4.9M73.0 525.2h-4.9M73.0 476.5h-4.9" stroke="#000" stroke-width="1.1" fill="none"/>
<path d="M73.0 588.5h-2.9M73.0 584.6h-2.9M73.0 581.4h-2.9M73.0 578.6h-2.9M73.0 576.1h-2.9M73.0 559.2h-2.9M73.0 550.6h-2.9M73.0 544.5h-2.9M73.0 539.8h-2.9M73.0 536.0h-2.9M73.0 532.7h-2.9M73.0 529.9h-2.9M73.0 527.4h-2.9M73.0 510.5h-2.9M73.0 502.0h-2.9M73.0 495.9h-2.9M73.0 491.2h-2.9M73.0 487.3h-2.9M73.0 484.1h-2.9M73.0 481.2h-2.9M73.0 478.7h-2.9M73.0 461.9h-2.9M73.0 453.3h-2.9M73.0 447.2h-2.9M73.0 442.5h-2.9" stroke="#000" stroke-width="0.85" fill="none"/>
<rect x="73.0" y="442.5" width="813.5" height="146.0" fill="none" stroke="#262626" stroke-width="1.1"/>
<rect x="96.6" y="9.7" width="737.6" height="30.0" rx="3.3" fill="#fff" stroke="#ccc" stroke-width="1.1"/>
<path d="M102.0 23.0H137.3" stroke="#03133a" stroke-width="2.1" fill="none"/>
<path d="M197.8 23.0H233.1" stroke="#044a7a" stroke-width="2.1" fill="none"/>
<path d="M293.4 23.0H328.9" stroke="#007f8f" stroke-width="2.1" fill="none"/>
<path d="M389.2 23.0H424.8" stroke="#06bf72" stroke-width="2.1" fill="none"/>
<path d="M624.9 23.0H660.3" stroke="#9fe806" stroke-width="2.1" fill="none"/>
<g fill="#000" opacity="0.999">
<text x="106.15" y="221.50" font-size="16.5" font-family='"Liberation Serif", serif'>0</text>
<text x="254.14" y="221.50" font-size="16.5" font-family='"Liberation Serif", serif'>2</text>
<text x="401.97" y="221.50" font-size="16.5" font-family='"Liberation Serif", serif'>4</text>
<text x="549.71" y="221.50" font-size="16.5" font-family='"Liberation Serif", serif'>6</text>
<text x="697.79" y="221.50" font-size="16.5" font-family='"Liberation Serif", serif'>8</text>
<text x="841.16" y="221.50" font-size="16.5" font-family='"Liberation Serif", serif'>10</text>
<text x="31.70" y="187.13" font-size="16.5" font-family='"Liberation Serif", serif'>10</text>
<text x="48.03" y="182.13" font-size="11.7" font-family='"DejaVu Sans", sans-serif' font-weight="200">−</text>
<text x="57.35" y="180.98" font-size="11.2" font-family='"Liberation Serif", serif'>3</text>
<text x="31.70" y="124.12" font-size="16.5" font-family='"Liberation Serif", serif'>10</text>
<text x="48.03" y="119.12" font-size="11.7" font-family='"DejaVu Sans", sans-serif' font-weight="200">−</text>
<text x="57.35" y="117.97" font-size="11.2" font-family='"Liberation Serif", serif'>2</text>
<text x="31.70" y="61.10" font-size="16.5" font-family='"Liberation Serif", serif'>10</text>
<text x="48.03" y="56.10" font-size="11.7" font-family='"DejaVu Sans", sans-serif' font-weight="200">−</text>
<text x="57.50" y="54.95" font-size="11.2" font-family='"Liberation Serif", serif'>1</text>
<text x="106.15" y="415.50" font-size="16.5" font-family='"Liberation Serif", serif'>0</text>
<text x="254.14" y="415.50" font-size="16.5" font-family='"Liberation Serif", serif'>2</text>
<text x="401.97" y="415.50" font-size="16.5" font-family='"Liberation Serif", serif'>4</text>
<text x="549.71" y="415.50" font-size="16.5" font-family='"Liberation Serif", serif'>6</text>
<text x="697.79" y="415.50" font-size="16.5" font-family='"Liberation Serif", serif'>8</text>
<text x="841.16" y="415.50" font-size="16.5" font-family='"Liberation Serif", serif'>10</text>
<text x="31.70" y="381.07" font-size="16.5" font-family='"Liberation Serif", serif'>10</text>
<text x="48.03" y="376.07" font-size="11.7" font-family='"DejaVu Sans", sans-serif' font-weight="200">−</text>
<text x="57.35" y="374.92" font-size="11.2" font-family='"Liberation Serif", serif'>3</text>
<text x="31.70" y="317.83" font-size="16.5" font-family='"Liberation Serif", serif'>10</text>
<text x="48.03" y="312.83" font-size="11.7" font-family='"DejaVu Sans", sans-serif' font-weight="200">−</text>
<text x="57.35" y="311.68" font-size="11.2" font-family='"Liberation Serif", serif'>2</text>
<text x="31.70" y="254.60" font-size="16.5" font-family='"Liberation Serif", serif'>10</text>
<text x="48.03" y="249.60" font-size="11.7" font-family='"DejaVu Sans", sans-serif' font-weight="200">−</text>
<text x="57.50" y="248.45" font-size="11.2" font-family='"Liberation Serif", serif'>1</text>
<text x="106.15" y="609.50" font-size="16.5" font-family='"Liberation Serif", serif'>0</text>
<text x="254.14" y="609.50" font-size="16.5" font-family='"Liberation Serif", serif'>2</text>
<text x="401.97" y="609.50" font-size="16.5" font-family='"Liberation Serif", serif'>4</text>
<text x="549.71" y="609.50" font-size="16.5" font-family='"Liberation Serif", serif'>6</text>
<text x="697.79" y="609.50" font-size="16.5" font-family='"Liberation Serif", serif'>8</text>
<text x="841.16" y="609.50" font-size="16.5" font-family='"Liberation Serif", serif'>10</text>
<text x="31.70" y="579.45" font-size="16.5" font-family='"Liberation Serif", serif'>10</text>
<text x="48.03" y="574.45" font-size="11.7" font-family='"DejaVu Sans", sans-serif' font-weight="200">−</text>
<text x="57.35" y="573.30" font-size="11.2" font-family='"Liberation Serif", serif'>3</text>
<text x="31.70" y="530.78" font-size="16.5" font-family='"Liberation Serif", serif'>10</text>
<text x="48.03" y="525.78" font-size="11.7" font-family='"DejaVu Sans", sans-serif' font-weight="200">−</text>
<text x="57.35" y="524.63" font-size="11.2" font-family='"Liberation Serif", serif'>2</text>
<text x="31.70" y="482.12" font-size="16.5" font-family='"Liberation Serif", serif'>10</text>
<text x="48.03" y="477.12" font-size="11.7" font-family='"DejaVu Sans", sans-serif' font-weight="200">−</text>
<text x="57.50" y="475.97" font-size="11.2" font-family='"Liberation Serif", serif'>1</text>
<text x="102.82" y="74.50" font-size="16.8" font-family='"Liberation Serif", serif' textLength="59.65" lengthAdjust="spacingAndGlyphs">Training</text>
<text x="198.59" y="74.50" font-size="16.8" font-family='"Liberation Serif", serif'>Inference</text>
<text x="476.43" y="629.60" font-size="17.5" font-family='"Liberation Serif", serif' font-style="italic" textLength="5.34" lengthAdjust="spacingAndGlyphs">t</text>
<text x="148.56" y="27.90" font-size="15.4" font-family='"DejaVu Sans", sans-serif' textLength="11.24" lengthAdjust="spacingAndGlyphs">ℙ</text>
<text x="160.19" y="30.80" font-size="11.3" font-family='"Liberation Serif", serif'>4</text>
<text x="244.56" y="27.90" font-size="15.4" font-family='"DejaVu Sans", sans-serif' textLength="11.24" lengthAdjust="spacingAndGlyphs">ℙ</text>
<text x="255.85" y="30.80" font-size="11.3" font-family='"Liberation Serif", serif'>3</text>
<text x="339.96" y="27.90" font-size="15.4" font-family='"DejaVu Sans", sans-serif' textLength="11.24" lengthAdjust="spacingAndGlyphs">ℙ</text>
<text x="351.25" y="30.80" font-size="11.3" font-family='"Liberation Serif", serif'>2</text>
<text x="435.76" y="27.90" font-size="15.4" font-family='"DejaVu Sans", sans-serif' textLength="11.24" lengthAdjust="spacingAndGlyphs">ℙ</text>
<text x="447.05" y="30.80" font-size="11.3" font-family='"Liberation Serif", serif'>2</text>
<text x="456.86" y="29.10" font-size="16.6" font-family='"DejaVu Sans", sans-serif' font-weight="200">+</text>
<text x="473.64" y="27.90" font-size="16.9" font-family='"Liberation Serif", serif' textLength="37.11" lengthAdjust="spacingAndGlyphs">MLP</text>
<text x="509.92" y="28.20" font-size="17.0" font-family='"Liberation Serif", serif'>(</text>
<text x="515.17" y="27.90" font-size="17.0" font-family='"Liberation Serif", serif' font-style="italic" textLength="10.58" lengthAdjust="spacingAndGlyphs">n</text>
<text x="525.68" y="30.80" font-size="11.3" font-family='"Liberation Serif", serif' textLength="29.75" lengthAdjust="spacingAndGlyphs">unroll</text>
<text x="559.13" y="29.10" font-size="16.6" font-family='"DejaVu Sans", sans-serif' font-weight="200" textLength="14.79" lengthAdjust="spacingAndGlyphs">=</text>
<text x="577.68" y="27.90" font-size="16.5" font-family='"Liberation Serif", serif'>1</text>
<text x="585.99" y="28.20" font-size="17.0" font-family='"Liberation Serif", serif'>)</text>
<text x="671.16" y="27.90" font-size="15.4" font-family='"DejaVu Sans", sans-serif' textLength="11.24" lengthAdjust="spacingAndGlyphs">ℙ</text>
<text x="682.45" y="30.80" font-size="11.3" font-family='"Liberation Serif", serif'>2</text>
<text x="692.26" y="29.10" font-size="16.6" font-family='"DejaVu Sans", sans-serif' font-weight="200">+</text>
<text x="709.04" y="27.90" font-size="16.9" font-family='"Liberation Serif", serif' textLength="37.11" lengthAdjust="spacingAndGlyphs">MLP</text>
<text x="745.32" y="28.20" font-size="17.0" font-family='"Liberation Serif", serif'>(</text>
<text x="750.57" y="27.90" font-size="17.0" font-family='"Liberation Serif", serif' font-style="italic" textLength="10.58" lengthAdjust="spacingAndGlyphs">n</text>
<text x="761.08" y="30.80" font-size="11.3" font-family='"Liberation Serif", serif' textLength="29.75" lengthAdjust="spacingAndGlyphs">unroll</text>
<text x="794.53" y="29.10" font-size="16.6" font-family='"DejaVu Sans", sans-serif' font-weight="200" textLength="14.79" lengthAdjust="spacingAndGlyphs">=</text>
<text x="812.17" y="27.90" font-size="16.5" font-family='"Liberation Serif", serif'>5</text>
<text x="821.39" y="28.20" font-size="17.0" font-family='"Liberation Serif", serif'>)</text>
<g transform="translate(22.4 160.2) rotate(-90)">
<text x="-1.08" y="0.00" font-size="16.8" font-family='"Liberation Serif", serif'>|</text>
<text x="3.31" y="0.00" font-size="15.8" font-family='"Liberation Serif", serif' font-style="italic" font-weight="bold" textLength="9.47" lengthAdjust="spacingAndGlyphs">q</text>
<text x="16.44" y="1.10" font-size="16.2" font-family='"DejaVu Sans", sans-serif' font-weight="200" textLength="13.09" lengthAdjust="spacingAndGlyphs">−</text>
<text x="33.13" y="0.00" font-size="15.8" font-family='"Liberation Serif", serif' font-style="italic" font-weight="bold" textLength="8.40" lengthAdjust="spacingAndGlyphs">q</text>
<text x="33.60" y="1.70" font-size="16.0" font-family='"DejaVu Sans", sans-serif' font-weight="200" textLength="11.00" lengthAdjust="spacingAndGlyphs">¯</text>
<text x="40.58" y="2.60" font-size="11.6" font-family='"Liberation Serif", serif' font-style="italic" textLength="13.89" lengthAdjust="spacingAndGlyphs">ho</text>
<text x="55.82" y="0.00" font-size="16.8" font-family='"Liberation Serif", serif'>|</text>
<text x="59.40" y="2.60" font-size="11.2" font-family='"Liberation Serif", serif'>1</text>
</g>
<g transform="translate(22.4 353.9) rotate(-90)">
<text x="-1.08" y="0.00" font-size="16.8" font-family='"Liberation Serif", serif'>|</text>
<text x="3.31" y="0.00" font-size="15.8" font-family='"Liberation Serif", serif' font-style="italic" font-weight="bold" textLength="9.47" lengthAdjust="spacingAndGlyphs">q</text>
<text x="16.44" y="1.10" font-size="16.2" font-family='"DejaVu Sans", sans-serif' font-weight="200" textLength="13.09" lengthAdjust="spacingAndGlyphs">−</text>
<text x="33.13" y="0.00" font-size="15.8" font-family='"Liberation Serif", serif' font-style="italic" font-weight="bold" textLength="8.40" lengthAdjust="spacingAndGlyphs">q</text>
<text x="33.60" y="1.70" font-size="16.0" font-family='"DejaVu Sans", sans-serif' font-weight="200" textLength="11.00" lengthAdjust="spacingAndGlyphs">¯</text>
<text x="40.58" y="2.60" font-size="11.6" font-family='"Liberation Serif", serif' font-style="italic" textLength="13.89" lengthAdjust="spacingAndGlyphs">ho</text>
<text x="55.82" y="0.00" font-size="16.8" font-family='"Liberation Serif", serif'>|</text>
<text x="59.45" y="2.60" font-size="11.2" font-family='"Liberation Serif", serif'>2</text>
</g>
<g transform="translate(22.4 550.7) rotate(-90)">
<text x="-1.08" y="0.00" font-size="16.8" font-family='"Liberation Serif", serif'>|</text>
<text x="3.31" y="0.00" font-size="15.8" font-family='"Liberation Serif", serif' font-style="italic" font-weight="bold" textLength="9.47" lengthAdjust="spacingAndGlyphs">q</text>
<text x="16.44" y="1.10" font-size="16.2" font-family='"DejaVu Sans", sans-serif' font-weight="200" textLength="13.09" lengthAdjust="spacingAndGlyphs">−</text>
<text x="33.13" y="0.00" font-size="15.8" font-family='"Liberation Serif", serif' font-style="italic" font-weight="bold" textLength="8.40" lengthAdjust="spacingAndGlyphs">q</text>
<text x="33.60" y="1.70" font-size="16.0" font-family='"DejaVu Sans", sans-serif' font-weight="200" textLength="11.00" lengthAdjust="spacingAndGlyphs">¯</text>
<text x="40.58" y="2.60" font-size="11.6" font-family='"Liberation Serif", serif' font-style="italic" textLength="13.89" lengthAdjust="spacingAndGlyphs">ho</text>
<text x="55.82" y="0.00" font-size="16.8" font-family='"Liberation Serif", serif'>|</text>
<text x="59.49" y="3.70" font-size="12.6" font-family='"Liberation Serif", serif' textLength="12.06" lengthAdjust="spacingAndGlyphs">∞</text>
</g>
</g>
</svg>
</body>
</html>
